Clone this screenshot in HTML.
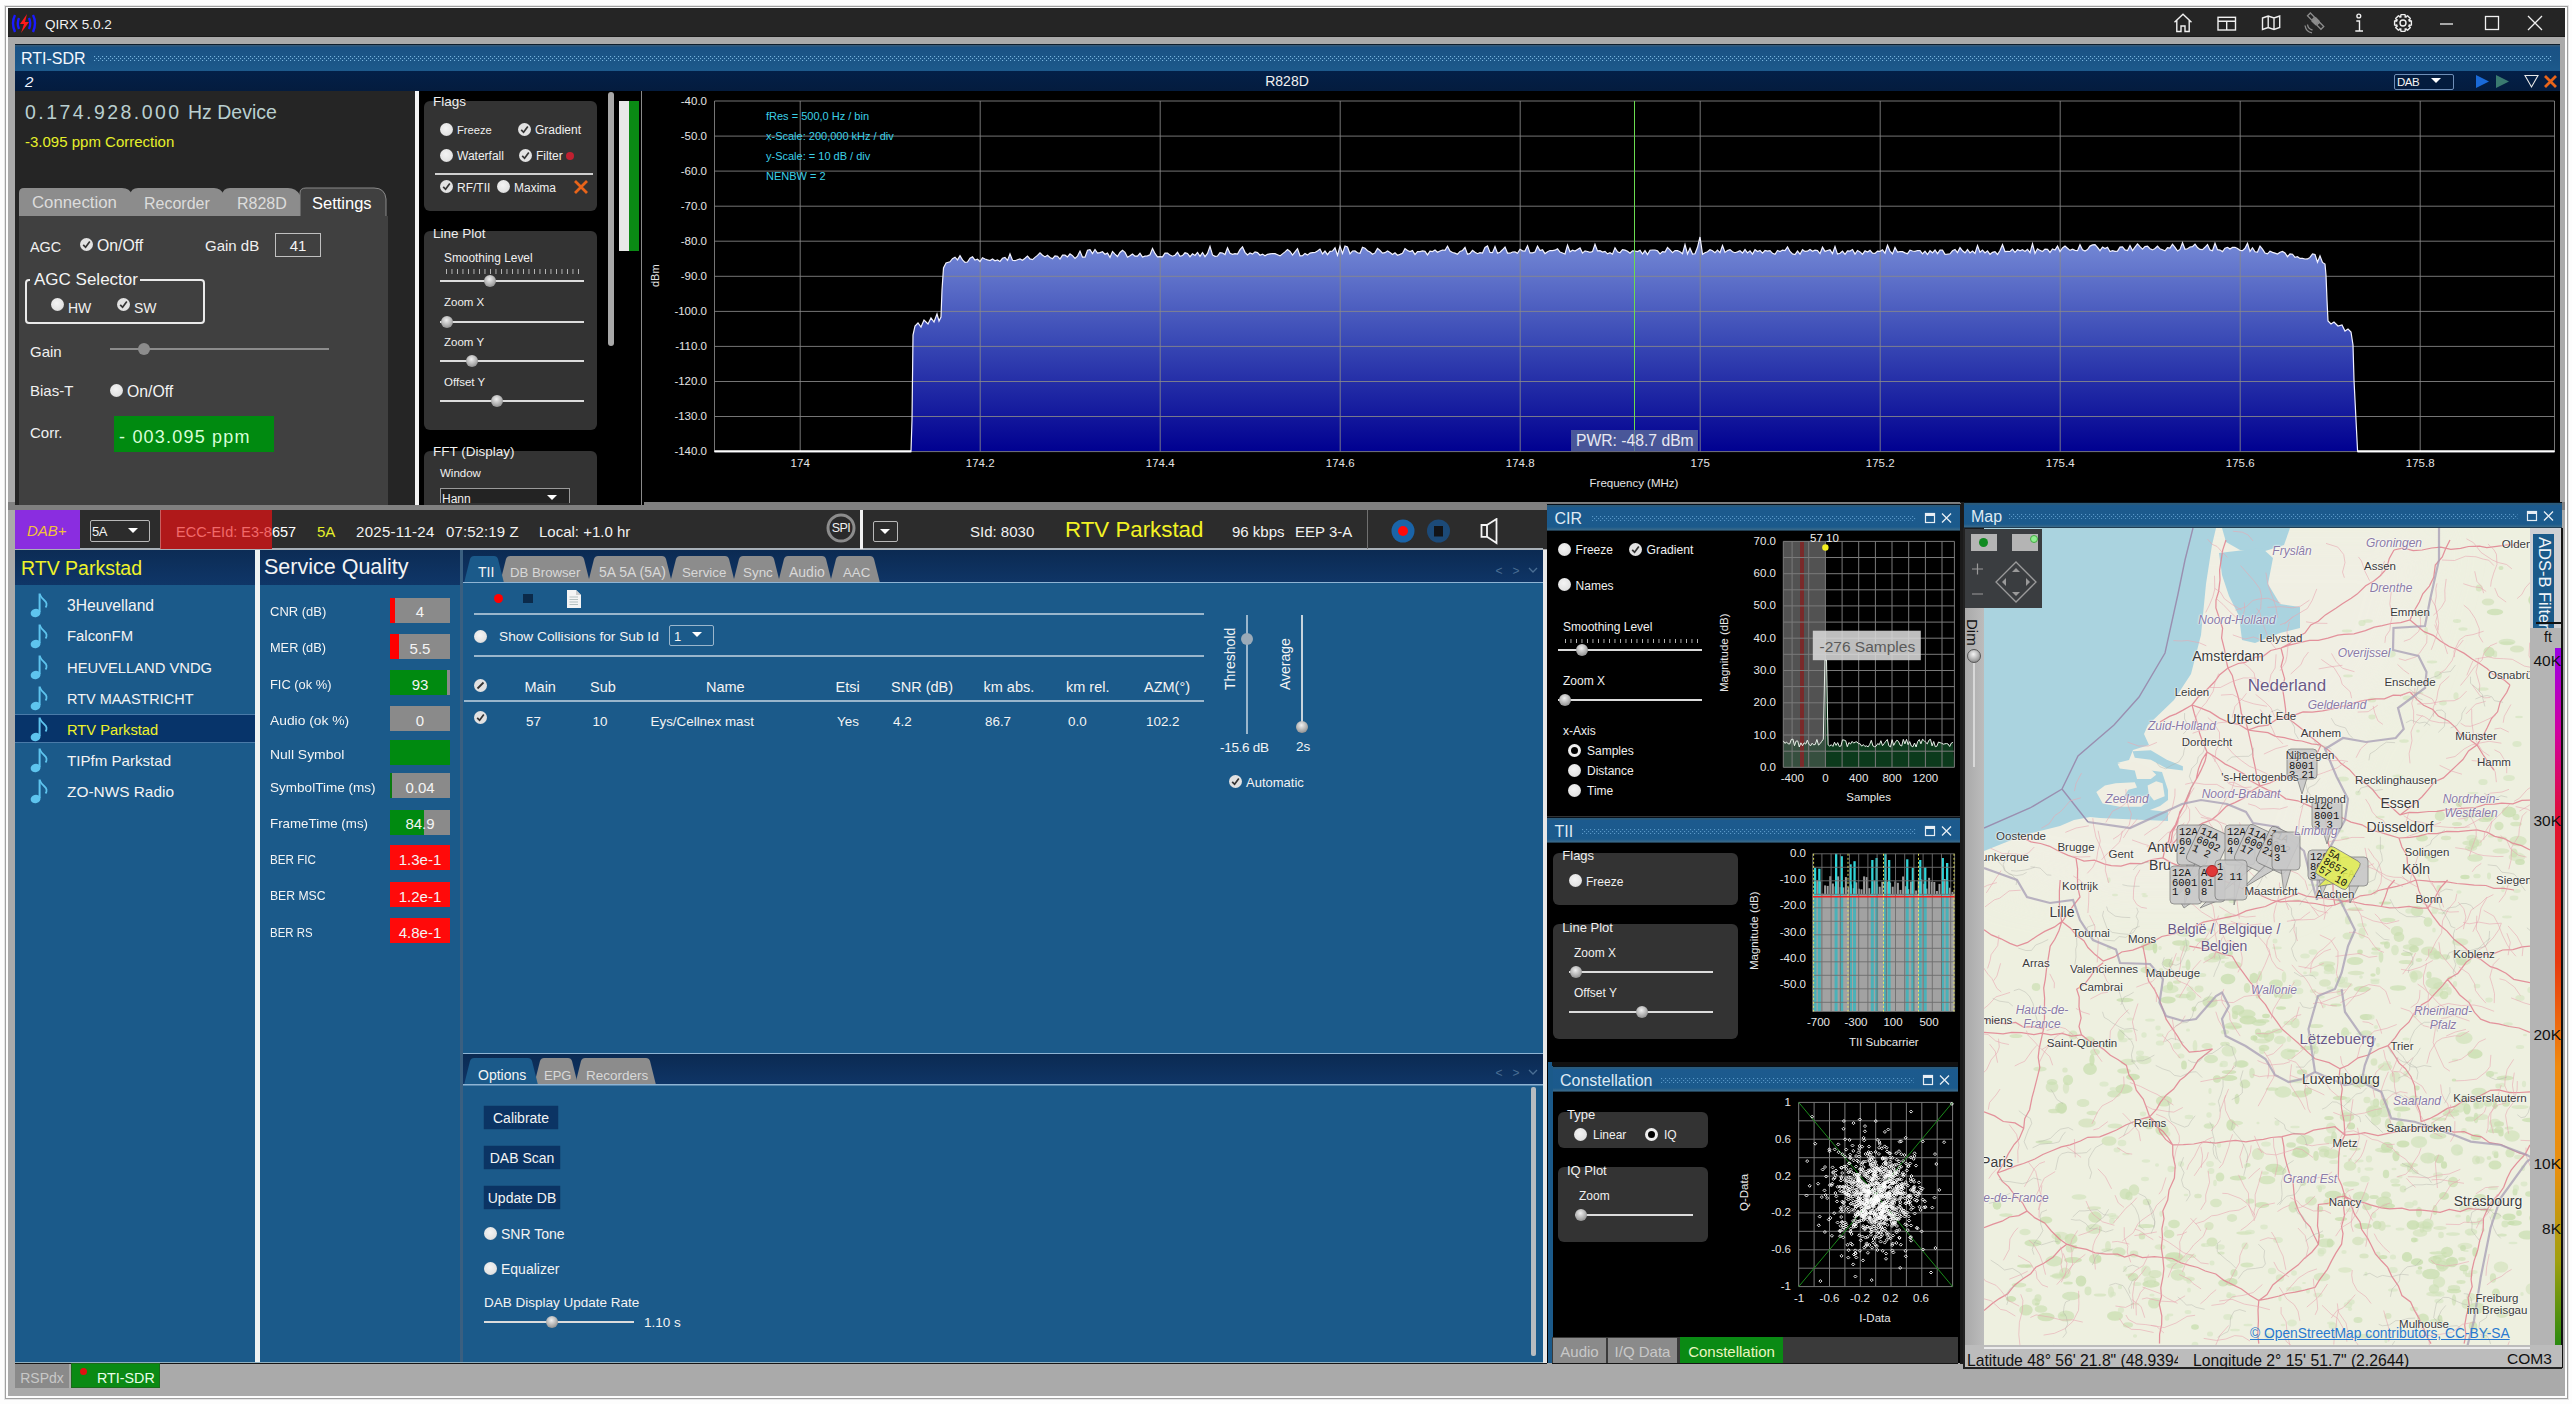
<!DOCTYPE html>
<html><head><meta charset="utf-8">
<style>
*{margin:0;padding:0;box-sizing:border-box}
html,body{width:2572px;height:1404px;overflow:hidden;background:#fdfdfd;font-family:"Liberation Sans",sans-serif;color:#fff}
.a{position:absolute}
.t{position:absolute;white-space:nowrap;line-height:1}
</style></head><body>
<div class="a" style="left:4px;top:5px;width:2565px;height:1395px;background:#e6e6e6;"></div>
<div class="a" style="left:5px;top:6px;width:2563px;height:1393px;background:#a0a0a0;"></div>
<div class="a" style="left:6px;top:7px;width:2561px;height:1391px;background:#fdfdfd;"></div>
<div class="a" style="left:8px;top:8px;width:2557px;height:1388px;background:#aaaaaa;"></div>
<div class="a" style="left:8px;top:8px;width:2557px;height:29px;background:#252525;"></div>
<div class="a" style="left:8px;top:36px;width:2557px;height:1px;background:#1a1a1a;"></div>
<svg class="a" style="left:10px;top:13px" width="28" height="21" viewBox="0 0 28 21">
<path d="M5 2 Q1 10 5 19" stroke="#1a1aff" stroke-width="2.4" fill="none"/>
<path d="M9 5 Q6.5 10.5 9 16" stroke="#1a1aff" stroke-width="2.4" fill="none"/>
<path d="M23 2 Q27 10 23 19" stroke="#1a1aff" stroke-width="2.4" fill="none"/>
<path d="M19 5 Q21.5 10.5 19 16" stroke="#1a1aff" stroke-width="2.4" fill="none"/>
<path d="M17 1 L10 11 L14 11 L11 20 L19 9 L15 9 Z" fill="#ff1a1a"/></svg>
<div class="t" style="left:45px;top:17.6px;font-size:13.5px;color:#f2f2f2;">QIRX 5.0.2</div>
<svg class="a" style="left:2170px;top:10px" width="380" height="26" viewBox="0 0 380 26">
<path d="M4.5 12.3 L13 4.2 L21.5 12.3 M6.8 10.2 V21.5 H11 V16 H15 V21.5 H19.2 V10.2" stroke="#f0f0f0" stroke-width="1.4" fill="none"/>
<rect x="48" y="7.3" width="17.5" height="12.7" stroke="#f0f0f0" stroke-width="1.4" fill="none"/><path d="M48 11.2 H65.5 M56.7 11.2 V20" stroke="#f0f0f0" stroke-width="1.4" fill="none"/>
<path d="M92.5 8 L98.2 6 L104 8 L109.7 6 V17.5 L104 19.5 L98.2 17.5 L92.5 19.5 Z M98.2 6 V17.5 M104 8 V19.5" stroke="#f0f0f0" stroke-width="1.4" fill="none"/>
<g stroke="#8c8c8c" stroke-width="1.3" fill="none"><g transform="rotate(-45 146 11.5)"><rect x="143.5" y="8.5" width="5" height="5" fill="#8c8c8c"/><rect x="144" y="1.5" width="4" height="6"/><rect x="144" y="14.5" width="4" height="6"/></g><path d="M137.5 14.5 Q138 19 142.5 20 M135 15.5 Q136 22 142 22.8"/></g>
<circle cx="188.8" cy="6" r="1.9" stroke="#f0f0f0" stroke-width="1.4" fill="none"/><path d="M186.3 11 H189.5 V20.8 M185.3 21 H193" stroke="#f0f0f0" stroke-width="1.4" fill="none"/>
<path d="M241.39 11.12 L241.39 14.88 L239.03 15.69 L239.16 15.36 L240.26 17.61 L237.61 20.26 L235.36 19.16 L235.69 19.03 L234.88 21.39 L231.12 21.39 L230.31 19.03 L230.64 19.16 L228.39 20.26 L225.74 17.61 L226.84 15.36 L226.97 15.69 L224.61 14.88 L224.61 11.12 L226.97 10.31 L226.84 10.64 L225.74 8.39 L228.39 5.74 L230.64 6.84 L230.31 6.97 L231.12 4.61 L234.88 4.61 L235.69 6.97 L235.36 6.84 L237.61 5.74 L240.26 8.39 L239.16 10.64 L239.03 10.31 Z" stroke="#f0f0f0" stroke-width="1.4" fill="none"/><circle cx="233" cy="13" r="3" stroke="#f0f0f0" stroke-width="1.4" fill="none"/>
<path d="M270 14 H283" stroke="#f0f0f0" stroke-width="1.3"/>
<rect x="315.5" y="6.5" width="13" height="13" stroke="#f0f0f0" stroke-width="1.3" fill="none"/>
<path d="M358 6 L372 20 M372 6 L358 20" stroke="#f0f0f0" stroke-width="1.3"/>
</svg>
<div class="a" style="left:15px;top:44px;width:2545px;height:27px;background:linear-gradient(#0f1e2c 0px,#0f1e2c 1px,#335a7a 1px,#335a7a 2px,#1a5285 3px,#1b5587 60%,#1d5a8c);"></div>
<div class="t" style="left:21px;top:50.5px;font-size:16px;color:#f4f8ff;">RTI-SDR</div>
<svg class="a" style="left:94px;top:56.0px" width="2458" height="5"><defs><pattern id="dp11" width="4" height="4" patternUnits="userSpaceOnUse"><rect x="0" y="0" width="1.1" height="1.1" fill="#78b4de"/><rect x="2" y="2" width="1.1" height="1.1" fill="#78b4de"/></pattern></defs><rect width="2458" height="5" fill="url(#dp11)"/></svg>
<div class="a" style="left:15px;top:71px;width:2545px;height:20px;background:linear-gradient(#032048,#041c3e);"></div>
<div class="t" style="left:25px;top:74.3px;font-size:15px;color:#f0f4ff;font-style:italic">2</div>
<div class="t" style="left:787px;width:1000px;text-align:center;top:74.1px;font-size:14px;color:#f0f0f0;">R828D</div>
<div class="a" style="left:2394px;top:74px;width:60px;height:16px;border:1px solid #6f8fb8;border-radius:2px;background:#041c3e"></div>
<div class="t" style="left:2397px;top:77.3px;font-size:11.5px;color:#f4f4f4;letter-spacing:-0.5px">DAB</div>
<svg class="a" style="left:2430px;top:77px" width="12" height="8"><path d="M1 1 H11 L6 6 Z" fill="#fff"/></svg>
<svg class="a" style="left:2470px;top:72px" width="92" height="19" viewBox="0 0 92 19">
<path d="M6 3 L19 9.5 L6 16 Z" fill="#1a6ad8"/><path d="M26 3 L39 9.5 L26 16 Z" fill="#3a7a70"/>
<path d="M55 3.5 H68 L61.5 15 Z" stroke="#e8e8e8" stroke-width="1.1" fill="none"/>
<path d="M75 4 L86 15 M86 4 L75 15" stroke="#e8641a" stroke-width="2.8"/></svg>
<div class="a" style="left:8px;top:502px;width:2557px;height:8px;background:#808080;"></div>
<div class="a" style="left:15px;top:91px;width:400px;height:414px;background:#252525;"></div>
<div class="a" style="left:415px;top:91px;width:4px;height:414px;background:#f4f4f4;"></div>
<div class="t" style="left:25px;top:102.5px;font-size:19.5px;color:#b9cfd0;letter-spacing:2.45px">0.174.928.000</div>
<div class="t" style="left:188px;top:102.5px;font-size:19.5px;color:#b9cfd0;">Hz Device</div>
<div class="t" style="left:25px;top:134.3px;font-size:15px;color:#e6f02a;">-3.095 ppm Correction</div>
<svg class="a" style="left:18px;top:187px" width="372" height="30" viewBox="0 0 372 30">
<path d="M1 30 V6 Q1 1 6 1 H104 Q112 1 114 8 V30 Z" fill="#8c8c8c"/>
<path d="M112 30 V8 Q113 1 120 1 H196 Q203 1 206 8 V30 Z" fill="#8c8c8c"/>
<path d="M204 30 V8 Q205 1 212 1 H270 Q278 1 282 8 V30 Z" fill="#8c8c8c"/>
<path d="M282 30 V6 Q282 1 288 1 H356 Q367 1 368 12 V30 Z" fill="#404040" stroke="#8a8a8a" stroke-width="1"/>
</svg>
<div class="t" style="left:32px;top:194.8px;font-size:16.8px;color:#dcdcdc;">Connection</div>
<div class="t" style="left:144px;top:195.5px;font-size:16px;color:#dcdcdc;">Recorder</div>
<div class="t" style="left:237px;top:195.5px;font-size:16px;color:#dcdcdc;">R828D</div>
<div class="t" style="left:312px;top:195.0px;font-size:16.5px;color:#ffffff;">Settings</div>
<div class="a" style="left:19px;top:216px;width:369px;height:289px;background:#404040;"></div>
<div class="t" style="left:30px;top:239.8px;font-size:14.4px;color:#f0f0f0;">AGC</div>
<svg class="a" style="left:80.0px;top:238.0px" width="13.0" height="13.0" viewBox="0 0 13 13"><circle cx="6.5" cy="6.5" r="6.5" fill="#e2e2e2"/><path d="M3.2 6.8 L5.6 9.3 L9.8 3.6" stroke="#333" stroke-width="1.7" fill="none"/></svg>
<div class="t" style="left:97px;top:237.6px;font-size:15.8px;color:#f4f4f4;">On/Off</div>
<div class="t" style="left:205px;top:238.3px;font-size:15px;color:#f0f0f0;">Gain dB</div>
<div class="a" style="left:275px;top:233px;width:46px;height:24px;border:1px solid #c0c0c0"></div>
<div class="t" style="left:-202px;width:1000px;text-align:center;top:238.3px;font-size:15px;color:#f4f4f4;">41</div>
<div class="a" style="left:25px;top:279px;width:180px;height:45px;border:2px solid #eaeaea;border-radius:4px"></div>
<div class="a" style="left:30px;top:272px;width:110px;height:12px;background:#404040;"></div>
<div class="t" style="left:34px;top:270.6px;font-size:17px;color:#f4f4f4;">AGC Selector</div>
<div class="a" style="left:50.5px;top:298.0px;width:13.0px;height:13.0px;border-radius:50%;background:radial-gradient(circle at 45% 40%,#f4f4f4,#e4e4e4 60%,#bbb)"></div>
<div class="t" style="left:68px;top:301.1px;font-size:14px;color:#f0f0f0;">HW</div>
<svg class="a" style="left:117.0px;top:298.0px" width="13.0" height="13.0" viewBox="0 0 13 13"><circle cx="6.5" cy="6.5" r="6.5" fill="#e2e2e2"/><path d="M3.2 6.8 L5.6 9.3 L9.8 3.6" stroke="#333" stroke-width="1.7" fill="none"/></svg>
<div class="t" style="left:134px;top:301.1px;font-size:14px;color:#f0f0f0;">SW</div>
<div class="t" style="left:30px;top:344.3px;font-size:15px;color:#f0f0f0;">Gain</div>
<div class="a" style="left:110px;top:348px;width:219px;height:2px;background:#8c8c8c;"></div>
<div class="a" style="left:138px;top:343px;width:12px;height:12px;border-radius:50%;background:#8c8c8c"></div>
<div class="t" style="left:30px;top:383.3px;font-size:15px;color:#f0f0f0;">Bias-T</div>
<div class="a" style="left:110.0px;top:383.5px;width:13.0px;height:13.0px;border-radius:50%;background:radial-gradient(circle at 45% 40%,#f4f4f4,#e4e4e4 60%,#bbb)"></div>
<div class="t" style="left:127px;top:383.6px;font-size:15.8px;color:#f4f4f4;">On/Off</div>
<div class="t" style="left:30px;top:425.3px;font-size:15px;color:#f0f0f0;">Corr.</div>
<div class="a" style="left:114px;top:416px;width:160px;height:36px;background:#008a10;"></div>
<div class="t" style="left:119px;top:427.8px;font-size:18px;color:#d8ffd8;letter-spacing:1.2px">- 003.095 ppm</div>
<div class="a" style="left:419px;top:91px;width:225px;height:414px;background:#000;"></div>
<div class="a" style="left:424px;top:101px;width:173px;height:110px;background:#333;border-radius:6px"></div>
<div class="t" style="left:433px;top:94.6px;font-size:13.5px;color:#f0f0f0;">Flags</div>
<div class="a" style="left:440.0px;top:122.5px;width:13.0px;height:13.0px;border-radius:50%;background:radial-gradient(circle at 45% 40%,#f4f4f4,#e4e4e4 60%,#bbb)"></div>
<div class="t" style="left:457px;top:124.5px;font-size:11.2px;color:#f0f0f0;">Freeze</div>
<svg class="a" style="left:517.5px;top:122.5px" width="13.0" height="13.0" viewBox="0 0 13 13"><circle cx="6.5" cy="6.5" r="6.5" fill="#e2e2e2"/><path d="M3.2 6.8 L5.6 9.3 L9.8 3.6" stroke="#333" stroke-width="1.7" fill="none"/></svg>
<div class="t" style="left:535px;top:123.8px;font-size:12px;color:#f0f0f0;">Gradient</div>
<div class="a" style="left:440.0px;top:148.5px;width:13.0px;height:13.0px;border-radius:50%;background:radial-gradient(circle at 45% 40%,#f4f4f4,#e4e4e4 60%,#bbb)"></div>
<div class="t" style="left:457px;top:149.8px;font-size:12px;color:#f0f0f0;">Waterfall</div>
<svg class="a" style="left:518.5px;top:148.5px" width="13.0" height="13.0" viewBox="0 0 13 13"><circle cx="6.5" cy="6.5" r="6.5" fill="#e2e2e2"/><path d="M3.2 6.8 L5.6 9.3 L9.8 3.6" stroke="#333" stroke-width="1.7" fill="none"/></svg>
<div class="t" style="left:536px;top:149.8px;font-size:12px;color:#f0f0f0;">Filter</div>
<div class="a" style="left:566px;top:152px;width:8px;height:8px;border-radius:50%;background:#c02030"></div>
<div class="a" style="left:435px;top:173px;width:158px;height:1.5px;background:#cfcfcf;"></div>
<svg class="a" style="left:440.0px;top:180.0px" width="13.0" height="13.0" viewBox="0 0 13 13"><circle cx="6.5" cy="6.5" r="6.5" fill="#e2e2e2"/><path d="M3.2 6.8 L5.6 9.3 L9.8 3.6" stroke="#333" stroke-width="1.7" fill="none"/></svg>
<div class="t" style="left:457px;top:181.8px;font-size:12px;color:#f0f0f0;">RF/TII</div>
<div class="a" style="left:497.0px;top:180.0px;width:13.0px;height:13.0px;border-radius:50%;background:radial-gradient(circle at 45% 40%,#f4f4f4,#e4e4e4 60%,#bbb)"></div>
<div class="t" style="left:514px;top:181.8px;font-size:12px;color:#f0f0f0;">Maxima</div>
<svg class="a" style="left:573px;top:179px" width="16" height="16"><path d="M2 2 L14 14 M14 2 L2 14" stroke="#e8641a" stroke-width="2.8"/></svg>
<div class="a" style="left:424px;top:231px;width:173px;height:199px;background:#333;border-radius:6px"></div>
<div class="t" style="left:433px;top:226.6px;font-size:13.5px;color:#f0f0f0;">Line Plot</div>
<div class="t" style="left:444px;top:252.9px;font-size:11.9px;color:#f0f0f0;">Smoothing Level</div>
<div class="a" style="left:446px;top:269px;width:133px;height:5px;background-image:linear-gradient(90deg,#bbb 1px,transparent 1px);background-size:5.5px 5px"></div>
<div class="a" style="left:440px;top:280px;width:144px;height:2px;background:#dcdcdc;"></div>
<div class="a" style="left:484px;top:275px;width:12px;height:12px;border-radius:50%;background:radial-gradient(circle at 45% 35%,#f0f0f0,#9a9a9a 70%,#666)"></div>
<div class="t" style="left:444px;top:297.3px;font-size:11.5px;color:#f0f0f0;">Zoom X</div>
<div class="a" style="left:440px;top:321px;width:144px;height:2px;background:#dcdcdc;"></div>
<div class="a" style="left:441px;top:316px;width:12px;height:12px;border-radius:50%;background:radial-gradient(circle at 45% 35%,#f0f0f0,#9a9a9a 70%,#666)"></div>
<div class="t" style="left:444px;top:337.3px;font-size:11.5px;color:#f0f0f0;">Zoom Y</div>
<div class="a" style="left:440px;top:360px;width:144px;height:2px;background:#dcdcdc;"></div>
<div class="a" style="left:466px;top:355px;width:12px;height:12px;border-radius:50%;background:radial-gradient(circle at 45% 35%,#f0f0f0,#9a9a9a 70%,#666)"></div>
<div class="t" style="left:444px;top:377.3px;font-size:11.5px;color:#f0f0f0;">Offset Y</div>
<div class="a" style="left:440px;top:400px;width:144px;height:2px;background:#dcdcdc;"></div>
<div class="a" style="left:491px;top:395px;width:12px;height:12px;border-radius:50%;background:radial-gradient(circle at 45% 35%,#f0f0f0,#9a9a9a 70%,#666)"></div>
<div class="a" style="left:424px;top:451px;width:173px;height:54px;background:#333;border-radius:6px 6px 0 0"></div>
<div class="t" style="left:433px;top:444.6px;font-size:13.5px;color:#f0f0f0;">FFT (Display)</div>
<div class="t" style="left:440px;top:468.3px;font-size:11.5px;color:#f0f0f0;">Window</div>
<div class="a" style="left:440px;top:488px;width:130px;height:15px;border:1px solid #9a9a9a;border-bottom:none;background:#232323"></div>
<div class="t" style="left:442px;top:492.8px;font-size:12px;color:#f0f0f0;">Hann</div>
<svg class="a" style="left:546px;top:494px" width="12" height="8"><path d="M1 1 H11 L6 6 Z" fill="#fff"/></svg>
<div class="a" style="left:608px;top:92px;width:6px;height:254px;background:#a8a8a8;border-radius:3px"></div>
<div class="a" style="left:619px;top:101px;width:10px;height:150px;background:#e8e8e8;"></div>
<div class="a" style="left:629px;top:101px;width:10px;height:150px;background:#0a8a14;"></div>
<div class="a" style="left:641px;top:91px;width:1px;height:414px;background:#8a8a8a;"></div>
<svg class="a" style="left:0;top:0" width="2572" height="510" viewBox="0 0 2572 510"><defs><linearGradient id="sg" x1="0" y1="245" x2="0" y2="452" gradientUnits="userSpaceOnUse"><stop offset="0" stop-color="#7286d4"/><stop offset="0.45" stop-color="#3b4bb6"/><stop offset="1" stop-color="#000090"/></linearGradient></defs><rect x="644" y="91" width="1916" height="411" fill="#000"/><path d="M714.5 451.6 L911.0 451.6 L912.0 420.0 L913.0 335.0 L915.0 326.0 L918.0 323.0 L921.0 327.0 L924.0 320.0 L928.0 324.0 L931.0 318.0 L934.0 322.0 L937.0 314.0 L939.0 321.0 L941.0 317.0 L942.0 290.0 L943.5 268.0 L946.0 263.0 L950.0 261.8 L952.5 258.7 L955.0 257.2 L957.5 259.9 L960.0 255.6 L962.5 259.9 L965.0 262.4 L967.5 262.0 L970.0 258.2 L972.5 256.8 L975.0 260.1 L977.5 259.3 L980.0 261.5 L982.5 257.7 L985.0 259.0 L987.5 259.9 L990.0 260.6 L992.5 259.0 L995.0 260.8 L997.5 260.0 L1000.0 261.4 L1002.5 258.3 L1005.0 257.4 L1007.5 260.4 L1010.0 254.0 L1012.5 260.3 L1015.0 260.7 L1017.5 259.7 L1020.0 259.0 L1022.5 260.2 L1025.0 258.2 L1027.5 256.1 L1030.0 258.9 L1032.5 259.6 L1035.0 257.4 L1037.5 255.4 L1040.0 252.9 L1042.5 255.2 L1045.0 256.9 L1047.5 255.3 L1050.0 257.5 L1052.5 258.7 L1055.0 255.9 L1057.5 256.2 L1060.0 259.1 L1062.5 255.1 L1065.0 255.2 L1067.5 256.9 L1070.0 253.9 L1072.5 255.6 L1075.0 258.4 L1077.5 256.1 L1080.0 251.1 L1082.5 257.2 L1085.0 257.2 L1087.5 250.2 L1090.0 249.6 L1092.5 253.6 L1095.0 249.5 L1097.5 253.1 L1100.0 252.6 L1102.5 251.8 L1105.0 254.2 L1107.5 253.1 L1110.0 257.4 L1112.5 251.5 L1115.0 254.1 L1117.5 256.5 L1120.0 252.5 L1122.5 250.3 L1125.0 252.4 L1127.5 257.2 L1130.0 255.8 L1132.5 254.1 L1135.0 256.1 L1137.5 256.1 L1140.0 253.3 L1142.5 257.1 L1145.0 256.2 L1147.5 255.8 L1150.0 254.7 L1152.5 248.4 L1155.0 253.4 L1157.5 256.9 L1160.0 256.7 L1162.5 256.8 L1165.0 253.1 L1167.5 253.0 L1170.0 255.1 L1172.5 256.2 L1175.0 255.2 L1177.5 252.3 L1180.0 256.4 L1182.5 255.6 L1185.0 252.8 L1187.5 253.5 L1190.0 256.7 L1192.5 253.8 L1195.0 255.4 L1197.5 252.4 L1200.0 256.3 L1202.5 252.5 L1205.0 256.6 L1207.5 253.4 L1210.0 246.4 L1212.5 254.9 L1215.0 256.3 L1217.5 256.0 L1220.0 252.7 L1222.5 253.0 L1225.0 254.5 L1227.5 247.9 L1230.0 253.3 L1232.5 254.4 L1235.0 253.6 L1237.5 254.0 L1240.0 249.7 L1242.5 246.9 L1245.0 252.3 L1247.5 255.0 L1250.0 253.0 L1252.5 254.1 L1255.0 251.9 L1257.5 252.6 L1260.0 255.2 L1262.5 254.1 L1265.0 255.8 L1267.5 254.3 L1270.0 253.8 L1272.5 253.5 L1275.0 253.6 L1277.5 254.7 L1280.0 255.9 L1282.5 253.9 L1285.0 251.9 L1287.5 249.6 L1290.0 251.4 L1292.5 255.0 L1295.0 251.8 L1297.5 248.7 L1300.0 255.8 L1302.5 255.7 L1305.0 253.4 L1307.5 255.1 L1310.0 253.1 L1312.5 252.6 L1315.0 252.5 L1317.5 251.0 L1320.0 249.1 L1322.5 254.0 L1325.0 251.1 L1327.5 254.7 L1330.0 251.3 L1332.5 251.0 L1335.0 247.8 L1337.5 255.3 L1340.0 246.2 L1342.5 253.5 L1345.0 246.0 L1347.5 247.0 L1350.0 253.8 L1352.5 251.0 L1355.0 250.9 L1357.5 252.8 L1360.0 253.3 L1362.5 247.3 L1365.0 248.2 L1367.5 250.7 L1370.0 252.0 L1372.5 254.3 L1375.0 252.9 L1377.5 248.4 L1380.0 250.5 L1382.5 253.1 L1385.0 252.7 L1387.5 250.9 L1390.0 252.5 L1392.5 254.5 L1395.0 252.8 L1397.5 255.2 L1400.0 254.4 L1402.5 253.4 L1405.0 248.6 L1407.5 250.5 L1410.0 251.5 L1412.5 250.6 L1415.0 254.5 L1417.5 251.5 L1420.0 251.6 L1422.5 250.9 L1425.0 251.4 L1427.5 254.9 L1430.0 251.2 L1432.5 251.6 L1435.0 250.0 L1437.5 252.3 L1440.0 251.0 L1442.5 250.0 L1445.0 250.4 L1447.5 246.2 L1450.0 251.0 L1452.5 252.5 L1455.0 253.1 L1457.5 254.2 L1460.0 251.4 L1462.5 250.5 L1465.0 247.5 L1467.5 254.2 L1470.0 253.4 L1472.5 250.4 L1475.0 252.2 L1477.5 253.7 L1480.0 252.6 L1482.5 253.0 L1485.0 247.4 L1487.5 245.9 L1490.0 252.4 L1492.5 252.7 L1495.0 246.6 L1497.5 253.3 L1500.0 252.2 L1502.5 249.8 L1505.0 247.0 L1507.5 253.1 L1510.0 253.2 L1512.5 252.0 L1515.0 251.9 L1517.5 253.3 L1520.0 249.3 L1522.5 250.8 L1525.0 251.0 L1527.5 245.8 L1530.0 252.9 L1532.5 252.9 L1535.0 252.1 L1537.5 246.2 L1540.0 250.5 L1542.5 249.8 L1545.0 253.6 L1547.5 251.7 L1550.0 250.5 L1552.5 250.6 L1555.0 250.2 L1557.5 248.8 L1560.0 252.0 L1562.5 253.0 L1565.0 254.0 L1567.5 245.1 L1570.0 251.8 L1572.5 250.2 L1575.0 251.1 L1577.5 249.5 L1580.0 247.9 L1582.5 253.1 L1585.0 250.9 L1587.5 251.5 L1590.0 252.4 L1592.5 251.6 L1595.0 244.2 L1597.5 250.9 L1600.0 250.7 L1602.5 252.1 L1605.0 251.4 L1607.5 253.9 L1610.0 252.7 L1612.5 254.2 L1615.0 247.9 L1617.5 251.8 L1620.0 252.7 L1622.5 249.7 L1625.0 250.1 L1627.5 251.2 L1630.0 253.2 L1632.5 250.8 L1635.0 251.0 L1637.5 251.5 L1640.0 250.3 L1642.5 254.0 L1645.0 250.6 L1647.5 254.5 L1650.0 250.2 L1652.5 250.0 L1655.0 250.0 L1657.5 250.8 L1660.0 253.9 L1662.5 251.6 L1665.0 252.1 L1667.5 247.4 L1670.0 249.8 L1672.5 252.6 L1675.0 250.6 L1677.5 250.7 L1680.0 251.7 L1682.5 253.7 L1685.0 244.5 L1687.5 254.0 L1690.0 248.3 L1692.5 254.1 L1695.0 253.8 L1697.5 247.3 L1700.0 237.0 L1702.5 254.2 L1705.0 252.7 L1707.5 251.8 L1710.0 249.7 L1712.5 250.7 L1715.0 252.7 L1717.5 250.1 L1720.0 252.7 L1722.5 245.5 L1725.0 252.4 L1727.5 250.6 L1730.0 249.6 L1732.5 251.8 L1735.0 252.7 L1737.5 251.9 L1740.0 250.7 L1742.5 253.0 L1745.0 249.6 L1747.5 252.9 L1750.0 250.8 L1752.5 254.1 L1755.0 249.7 L1757.5 251.6 L1760.0 250.5 L1762.5 253.2 L1765.0 250.5 L1767.5 251.1 L1770.0 250.7 L1772.5 253.3 L1775.0 254.3 L1777.5 250.4 L1780.0 251.6 L1782.5 250.1 L1785.0 250.6 L1787.5 247.0 L1790.0 251.5 L1792.5 253.9 L1795.0 254.5 L1797.5 251.1 L1800.0 254.2 L1802.5 249.7 L1805.0 251.4 L1807.5 251.2 L1810.0 249.5 L1812.5 251.3 L1815.0 250.1 L1817.5 250.5 L1820.0 253.6 L1822.5 247.2 L1825.0 251.4 L1827.5 250.5 L1830.0 249.8 L1832.5 253.6 L1835.0 246.5 L1837.5 254.1 L1840.0 253.2 L1842.5 251.2 L1845.0 254.3 L1847.5 250.8 L1850.0 251.1 L1852.5 249.5 L1855.0 254.1 L1857.5 250.5 L1860.0 251.9 L1862.5 254.3 L1865.0 250.8 L1867.5 252.0 L1870.0 250.4 L1872.5 253.2 L1875.0 253.4 L1877.5 251.1 L1880.0 251.3 L1882.5 249.9 L1885.0 253.3 L1887.5 245.2 L1890.0 251.1 L1892.5 253.9 L1895.0 247.5 L1897.5 252.0 L1900.0 251.7 L1902.5 251.6 L1905.0 252.9 L1907.5 253.7 L1910.0 250.1 L1912.5 251.0 L1915.0 251.4 L1917.5 250.5 L1920.0 250.7 L1922.5 253.9 L1925.0 251.1 L1927.5 254.5 L1930.0 250.7 L1932.5 252.8 L1935.0 250.0 L1937.5 253.6 L1940.0 250.2 L1942.5 250.1 L1945.0 254.4 L1947.5 254.2 L1950.0 253.8 L1952.5 250.8 L1955.0 249.4 L1957.5 252.6 L1960.0 247.7 L1962.5 250.8 L1965.0 252.8 L1967.5 249.6 L1970.0 252.9 L1972.5 251.1 L1975.0 253.5 L1977.5 245.6 L1980.0 252.3 L1982.5 250.0 L1985.0 253.0 L1987.5 250.9 L1990.0 254.3 L1992.5 252.3 L1995.0 251.6 L1997.5 254.5 L2000.0 250.5 L2002.5 244.7 L2005.0 251.5 L2007.5 251.3 L2010.0 251.5 L2012.5 249.2 L2015.0 252.3 L2017.5 249.5 L2020.0 250.8 L2022.5 249.6 L2025.0 251.4 L2027.5 249.3 L2030.0 252.7 L2032.5 243.8 L2035.0 253.4 L2037.5 248.8 L2040.0 250.4 L2042.5 251.5 L2045.0 249.1 L2047.5 249.3 L2050.0 252.4 L2052.5 249.0 L2055.0 250.0 L2057.5 246.1 L2060.0 251.5 L2062.5 248.0 L2065.0 246.0 L2067.5 248.3 L2070.0 250.4 L2072.5 249.1 L2075.0 250.4 L2077.5 250.7 L2080.0 244.7 L2082.5 249.7 L2085.0 251.1 L2087.5 249.5 L2090.0 246.1 L2092.5 244.9 L2095.0 244.6 L2097.5 247.3 L2100.0 250.7 L2102.5 247.0 L2105.0 248.6 L2107.5 247.3 L2110.0 251.5 L2112.5 250.6 L2115.0 251.3 L2117.5 251.1 L2120.0 247.1 L2122.5 246.8 L2125.0 249.9 L2127.5 250.6 L2130.0 245.6 L2132.5 250.6 L2135.0 247.2 L2137.5 243.9 L2140.0 246.6 L2142.5 249.1 L2145.0 246.5 L2147.5 246.1 L2150.0 248.7 L2152.5 249.9 L2155.0 248.5 L2157.5 246.2 L2160.0 248.8 L2162.5 249.7 L2165.0 250.8 L2167.5 247.7 L2170.0 248.1 L2172.5 244.2 L2175.0 247.3 L2177.5 251.0 L2180.0 249.4 L2182.5 242.7 L2185.0 249.3 L2187.5 248.8 L2190.0 247.0 L2192.5 246.6 L2195.0 244.1 L2197.5 247.6 L2200.0 249.4 L2202.5 249.7 L2205.0 247.3 L2207.5 244.6 L2210.0 249.9 L2212.5 250.7 L2215.0 243.2 L2217.5 249.7 L2220.0 250.1 L2222.5 251.6 L2225.0 248.2 L2227.5 247.3 L2230.0 249.1 L2232.5 247.4 L2235.0 247.3 L2237.5 248.4 L2240.0 250.3 L2242.5 250.6 L2245.0 248.3 L2247.5 243.3 L2250.0 251.4 L2252.5 247.8 L2255.0 251.8 L2257.5 252.1 L2260.0 246.1 L2262.5 249.2 L2265.0 253.0 L2267.5 253.8 L2270.0 251.2 L2272.5 252.4 L2275.0 253.1 L2277.5 254.0 L2280.0 252.2 L2282.5 251.5 L2285.0 252.9 L2287.5 256.7 L2290.0 253.9 L2292.5 254.2 L2295.0 257.4 L2297.5 256.7 L2300.0 258.4 L2302.5 258.3 L2305.0 259.0 L2307.5 258.9 L2310.0 257.4 L2312.5 253.9 L2315.0 254.5 L2317.5 262.3 L2320.0 255.9 L2322.5 262.4 L2325.0 264.0 L2326.0 275.0 L2327.0 300.0 L2328.0 321.0 L2331.0 324.0 L2334.0 322.0 L2338.0 326.0 L2342.0 325.0 L2345.0 331.0 L2348.0 329.0 L2351.0 332.0 L2353.0 345.0 L2354.0 380.0 L2356.0 420.0 L2357.6 451.6 L2554.5 451.6 Z" fill="url(#sg)"/><path d="M714.5 101.0 H2554.5 M714.5 136.1 H2554.5 M714.5 171.1 H2554.5 M714.5 206.2 H2554.5 M714.5 241.2 H2554.5 M714.5 276.3 H2554.5 M714.5 311.4 H2554.5 M714.5 346.4 H2554.5 M714.5 381.5 H2554.5 M714.5 416.5 H2554.5 M714.5 451.6 H2554.5 M800.2 101 V451.6 M980.2 101 V451.6 M1160.2 101 V451.6 M1340.2 101 V451.6 M1520.2 101 V451.6 M1700.2 101 V451.6 M1880.2 101 V451.6 M2060.2 101 V451.6 M2240.2 101 V451.6 M2420.2 101 V451.6 M714.5 101 V451.6 M2554.5 101 V451.6" stroke="#8a8a8a" stroke-width="1" fill="none" opacity="0.85"/><path d="M714.5 451.6 L911.0 451.6 L912.0 420.0 L913.0 335.0 L915.0 326.0 L918.0 323.0 L921.0 327.0 L924.0 320.0 L928.0 324.0 L931.0 318.0 L934.0 322.0 L937.0 314.0 L939.0 321.0 L941.0 317.0 L942.0 290.0 L943.5 268.0 L946.0 263.0 L950.0 261.8 L952.5 258.7 L955.0 257.2 L957.5 259.9 L960.0 255.6 L962.5 259.9 L965.0 262.4 L967.5 262.0 L970.0 258.2 L972.5 256.8 L975.0 260.1 L977.5 259.3 L980.0 261.5 L982.5 257.7 L985.0 259.0 L987.5 259.9 L990.0 260.6 L992.5 259.0 L995.0 260.8 L997.5 260.0 L1000.0 261.4 L1002.5 258.3 L1005.0 257.4 L1007.5 260.4 L1010.0 254.0 L1012.5 260.3 L1015.0 260.7 L1017.5 259.7 L1020.0 259.0 L1022.5 260.2 L1025.0 258.2 L1027.5 256.1 L1030.0 258.9 L1032.5 259.6 L1035.0 257.4 L1037.5 255.4 L1040.0 252.9 L1042.5 255.2 L1045.0 256.9 L1047.5 255.3 L1050.0 257.5 L1052.5 258.7 L1055.0 255.9 L1057.5 256.2 L1060.0 259.1 L1062.5 255.1 L1065.0 255.2 L1067.5 256.9 L1070.0 253.9 L1072.5 255.6 L1075.0 258.4 L1077.5 256.1 L1080.0 251.1 L1082.5 257.2 L1085.0 257.2 L1087.5 250.2 L1090.0 249.6 L1092.5 253.6 L1095.0 249.5 L1097.5 253.1 L1100.0 252.6 L1102.5 251.8 L1105.0 254.2 L1107.5 253.1 L1110.0 257.4 L1112.5 251.5 L1115.0 254.1 L1117.5 256.5 L1120.0 252.5 L1122.5 250.3 L1125.0 252.4 L1127.5 257.2 L1130.0 255.8 L1132.5 254.1 L1135.0 256.1 L1137.5 256.1 L1140.0 253.3 L1142.5 257.1 L1145.0 256.2 L1147.5 255.8 L1150.0 254.7 L1152.5 248.4 L1155.0 253.4 L1157.5 256.9 L1160.0 256.7 L1162.5 256.8 L1165.0 253.1 L1167.5 253.0 L1170.0 255.1 L1172.5 256.2 L1175.0 255.2 L1177.5 252.3 L1180.0 256.4 L1182.5 255.6 L1185.0 252.8 L1187.5 253.5 L1190.0 256.7 L1192.5 253.8 L1195.0 255.4 L1197.5 252.4 L1200.0 256.3 L1202.5 252.5 L1205.0 256.6 L1207.5 253.4 L1210.0 246.4 L1212.5 254.9 L1215.0 256.3 L1217.5 256.0 L1220.0 252.7 L1222.5 253.0 L1225.0 254.5 L1227.5 247.9 L1230.0 253.3 L1232.5 254.4 L1235.0 253.6 L1237.5 254.0 L1240.0 249.7 L1242.5 246.9 L1245.0 252.3 L1247.5 255.0 L1250.0 253.0 L1252.5 254.1 L1255.0 251.9 L1257.5 252.6 L1260.0 255.2 L1262.5 254.1 L1265.0 255.8 L1267.5 254.3 L1270.0 253.8 L1272.5 253.5 L1275.0 253.6 L1277.5 254.7 L1280.0 255.9 L1282.5 253.9 L1285.0 251.9 L1287.5 249.6 L1290.0 251.4 L1292.5 255.0 L1295.0 251.8 L1297.5 248.7 L1300.0 255.8 L1302.5 255.7 L1305.0 253.4 L1307.5 255.1 L1310.0 253.1 L1312.5 252.6 L1315.0 252.5 L1317.5 251.0 L1320.0 249.1 L1322.5 254.0 L1325.0 251.1 L1327.5 254.7 L1330.0 251.3 L1332.5 251.0 L1335.0 247.8 L1337.5 255.3 L1340.0 246.2 L1342.5 253.5 L1345.0 246.0 L1347.5 247.0 L1350.0 253.8 L1352.5 251.0 L1355.0 250.9 L1357.5 252.8 L1360.0 253.3 L1362.5 247.3 L1365.0 248.2 L1367.5 250.7 L1370.0 252.0 L1372.5 254.3 L1375.0 252.9 L1377.5 248.4 L1380.0 250.5 L1382.5 253.1 L1385.0 252.7 L1387.5 250.9 L1390.0 252.5 L1392.5 254.5 L1395.0 252.8 L1397.5 255.2 L1400.0 254.4 L1402.5 253.4 L1405.0 248.6 L1407.5 250.5 L1410.0 251.5 L1412.5 250.6 L1415.0 254.5 L1417.5 251.5 L1420.0 251.6 L1422.5 250.9 L1425.0 251.4 L1427.5 254.9 L1430.0 251.2 L1432.5 251.6 L1435.0 250.0 L1437.5 252.3 L1440.0 251.0 L1442.5 250.0 L1445.0 250.4 L1447.5 246.2 L1450.0 251.0 L1452.5 252.5 L1455.0 253.1 L1457.5 254.2 L1460.0 251.4 L1462.5 250.5 L1465.0 247.5 L1467.5 254.2 L1470.0 253.4 L1472.5 250.4 L1475.0 252.2 L1477.5 253.7 L1480.0 252.6 L1482.5 253.0 L1485.0 247.4 L1487.5 245.9 L1490.0 252.4 L1492.5 252.7 L1495.0 246.6 L1497.5 253.3 L1500.0 252.2 L1502.5 249.8 L1505.0 247.0 L1507.5 253.1 L1510.0 253.2 L1512.5 252.0 L1515.0 251.9 L1517.5 253.3 L1520.0 249.3 L1522.5 250.8 L1525.0 251.0 L1527.5 245.8 L1530.0 252.9 L1532.5 252.9 L1535.0 252.1 L1537.5 246.2 L1540.0 250.5 L1542.5 249.8 L1545.0 253.6 L1547.5 251.7 L1550.0 250.5 L1552.5 250.6 L1555.0 250.2 L1557.5 248.8 L1560.0 252.0 L1562.5 253.0 L1565.0 254.0 L1567.5 245.1 L1570.0 251.8 L1572.5 250.2 L1575.0 251.1 L1577.5 249.5 L1580.0 247.9 L1582.5 253.1 L1585.0 250.9 L1587.5 251.5 L1590.0 252.4 L1592.5 251.6 L1595.0 244.2 L1597.5 250.9 L1600.0 250.7 L1602.5 252.1 L1605.0 251.4 L1607.5 253.9 L1610.0 252.7 L1612.5 254.2 L1615.0 247.9 L1617.5 251.8 L1620.0 252.7 L1622.5 249.7 L1625.0 250.1 L1627.5 251.2 L1630.0 253.2 L1632.5 250.8 L1635.0 251.0 L1637.5 251.5 L1640.0 250.3 L1642.5 254.0 L1645.0 250.6 L1647.5 254.5 L1650.0 250.2 L1652.5 250.0 L1655.0 250.0 L1657.5 250.8 L1660.0 253.9 L1662.5 251.6 L1665.0 252.1 L1667.5 247.4 L1670.0 249.8 L1672.5 252.6 L1675.0 250.6 L1677.5 250.7 L1680.0 251.7 L1682.5 253.7 L1685.0 244.5 L1687.5 254.0 L1690.0 248.3 L1692.5 254.1 L1695.0 253.8 L1697.5 247.3 L1700.0 237.0 L1702.5 254.2 L1705.0 252.7 L1707.5 251.8 L1710.0 249.7 L1712.5 250.7 L1715.0 252.7 L1717.5 250.1 L1720.0 252.7 L1722.5 245.5 L1725.0 252.4 L1727.5 250.6 L1730.0 249.6 L1732.5 251.8 L1735.0 252.7 L1737.5 251.9 L1740.0 250.7 L1742.5 253.0 L1745.0 249.6 L1747.5 252.9 L1750.0 250.8 L1752.5 254.1 L1755.0 249.7 L1757.5 251.6 L1760.0 250.5 L1762.5 253.2 L1765.0 250.5 L1767.5 251.1 L1770.0 250.7 L1772.5 253.3 L1775.0 254.3 L1777.5 250.4 L1780.0 251.6 L1782.5 250.1 L1785.0 250.6 L1787.5 247.0 L1790.0 251.5 L1792.5 253.9 L1795.0 254.5 L1797.5 251.1 L1800.0 254.2 L1802.5 249.7 L1805.0 251.4 L1807.5 251.2 L1810.0 249.5 L1812.5 251.3 L1815.0 250.1 L1817.5 250.5 L1820.0 253.6 L1822.5 247.2 L1825.0 251.4 L1827.5 250.5 L1830.0 249.8 L1832.5 253.6 L1835.0 246.5 L1837.5 254.1 L1840.0 253.2 L1842.5 251.2 L1845.0 254.3 L1847.5 250.8 L1850.0 251.1 L1852.5 249.5 L1855.0 254.1 L1857.5 250.5 L1860.0 251.9 L1862.5 254.3 L1865.0 250.8 L1867.5 252.0 L1870.0 250.4 L1872.5 253.2 L1875.0 253.4 L1877.5 251.1 L1880.0 251.3 L1882.5 249.9 L1885.0 253.3 L1887.5 245.2 L1890.0 251.1 L1892.5 253.9 L1895.0 247.5 L1897.5 252.0 L1900.0 251.7 L1902.5 251.6 L1905.0 252.9 L1907.5 253.7 L1910.0 250.1 L1912.5 251.0 L1915.0 251.4 L1917.5 250.5 L1920.0 250.7 L1922.5 253.9 L1925.0 251.1 L1927.5 254.5 L1930.0 250.7 L1932.5 252.8 L1935.0 250.0 L1937.5 253.6 L1940.0 250.2 L1942.5 250.1 L1945.0 254.4 L1947.5 254.2 L1950.0 253.8 L1952.5 250.8 L1955.0 249.4 L1957.5 252.6 L1960.0 247.7 L1962.5 250.8 L1965.0 252.8 L1967.5 249.6 L1970.0 252.9 L1972.5 251.1 L1975.0 253.5 L1977.5 245.6 L1980.0 252.3 L1982.5 250.0 L1985.0 253.0 L1987.5 250.9 L1990.0 254.3 L1992.5 252.3 L1995.0 251.6 L1997.5 254.5 L2000.0 250.5 L2002.5 244.7 L2005.0 251.5 L2007.5 251.3 L2010.0 251.5 L2012.5 249.2 L2015.0 252.3 L2017.5 249.5 L2020.0 250.8 L2022.5 249.6 L2025.0 251.4 L2027.5 249.3 L2030.0 252.7 L2032.5 243.8 L2035.0 253.4 L2037.5 248.8 L2040.0 250.4 L2042.5 251.5 L2045.0 249.1 L2047.5 249.3 L2050.0 252.4 L2052.5 249.0 L2055.0 250.0 L2057.5 246.1 L2060.0 251.5 L2062.5 248.0 L2065.0 246.0 L2067.5 248.3 L2070.0 250.4 L2072.5 249.1 L2075.0 250.4 L2077.5 250.7 L2080.0 244.7 L2082.5 249.7 L2085.0 251.1 L2087.5 249.5 L2090.0 246.1 L2092.5 244.9 L2095.0 244.6 L2097.5 247.3 L2100.0 250.7 L2102.5 247.0 L2105.0 248.6 L2107.5 247.3 L2110.0 251.5 L2112.5 250.6 L2115.0 251.3 L2117.5 251.1 L2120.0 247.1 L2122.5 246.8 L2125.0 249.9 L2127.5 250.6 L2130.0 245.6 L2132.5 250.6 L2135.0 247.2 L2137.5 243.9 L2140.0 246.6 L2142.5 249.1 L2145.0 246.5 L2147.5 246.1 L2150.0 248.7 L2152.5 249.9 L2155.0 248.5 L2157.5 246.2 L2160.0 248.8 L2162.5 249.7 L2165.0 250.8 L2167.5 247.7 L2170.0 248.1 L2172.5 244.2 L2175.0 247.3 L2177.5 251.0 L2180.0 249.4 L2182.5 242.7 L2185.0 249.3 L2187.5 248.8 L2190.0 247.0 L2192.5 246.6 L2195.0 244.1 L2197.5 247.6 L2200.0 249.4 L2202.5 249.7 L2205.0 247.3 L2207.5 244.6 L2210.0 249.9 L2212.5 250.7 L2215.0 243.2 L2217.5 249.7 L2220.0 250.1 L2222.5 251.6 L2225.0 248.2 L2227.5 247.3 L2230.0 249.1 L2232.5 247.4 L2235.0 247.3 L2237.5 248.4 L2240.0 250.3 L2242.5 250.6 L2245.0 248.3 L2247.5 243.3 L2250.0 251.4 L2252.5 247.8 L2255.0 251.8 L2257.5 252.1 L2260.0 246.1 L2262.5 249.2 L2265.0 253.0 L2267.5 253.8 L2270.0 251.2 L2272.5 252.4 L2275.0 253.1 L2277.5 254.0 L2280.0 252.2 L2282.5 251.5 L2285.0 252.9 L2287.5 256.7 L2290.0 253.9 L2292.5 254.2 L2295.0 257.4 L2297.5 256.7 L2300.0 258.4 L2302.5 258.3 L2305.0 259.0 L2307.5 258.9 L2310.0 257.4 L2312.5 253.9 L2315.0 254.5 L2317.5 262.3 L2320.0 255.9 L2322.5 262.4 L2325.0 264.0 L2326.0 275.0 L2327.0 300.0 L2328.0 321.0 L2331.0 324.0 L2334.0 322.0 L2338.0 326.0 L2342.0 325.0 L2345.0 331.0 L2348.0 329.0 L2351.0 332.0 L2353.0 345.0 L2354.0 380.0 L2356.0 420.0 L2357.6 451.6 L2554.5 451.6" stroke="#f2f2ff" stroke-width="1.2" fill="none"/><path d="M714.5 451.2 H911 M2358 451.2 H2554.5" stroke="#fff" stroke-width="2"/><path d="M1634.5 101 V451" stroke="#6adc50" stroke-width="1"/><rect x="1571" y="430" width="127" height="21" fill="#5a6a9a" opacity="0.8"/></svg>
<div class="t" style="right:1865px;top:95.5px;font-size:11.5px;color:#e4e4e4;">-40.0</div>
<div class="t" style="right:1865px;top:130.5px;font-size:11.5px;color:#e4e4e4;">-50.0</div>
<div class="t" style="right:1865px;top:165.6px;font-size:11.5px;color:#e4e4e4;">-60.0</div>
<div class="t" style="right:1865px;top:200.6px;font-size:11.5px;color:#e4e4e4;">-70.0</div>
<div class="t" style="right:1865px;top:235.7px;font-size:11.5px;color:#e4e4e4;">-80.0</div>
<div class="t" style="right:1865px;top:270.8px;font-size:11.5px;color:#e4e4e4;">-90.0</div>
<div class="t" style="right:1865px;top:305.8px;font-size:11.5px;color:#e4e4e4;">-100.0</div>
<div class="t" style="right:1865px;top:340.9px;font-size:11.5px;color:#e4e4e4;">-110.0</div>
<div class="t" style="right:1865px;top:375.9px;font-size:11.5px;color:#e4e4e4;">-120.0</div>
<div class="t" style="right:1865px;top:411.0px;font-size:11.5px;color:#e4e4e4;">-130.0</div>
<div class="t" style="right:1865px;top:446.1px;font-size:11.5px;color:#e4e4e4;">-140.0</div>
<div class="t" style="left:300.20000000000005px;width:1000px;text-align:center;top:458.3px;font-size:11.5px;color:#e4e4e4;">174</div>
<div class="t" style="left:480.20000000000005px;width:1000px;text-align:center;top:458.3px;font-size:11.5px;color:#e4e4e4;">174.2</div>
<div class="t" style="left:660.2px;width:1000px;text-align:center;top:458.3px;font-size:11.5px;color:#e4e4e4;">174.4</div>
<div class="t" style="left:840.2px;width:1000px;text-align:center;top:458.3px;font-size:11.5px;color:#e4e4e4;">174.6</div>
<div class="t" style="left:1020.2px;width:1000px;text-align:center;top:458.3px;font-size:11.5px;color:#e4e4e4;">174.8</div>
<div class="t" style="left:1200.2px;width:1000px;text-align:center;top:458.3px;font-size:11.5px;color:#e4e4e4;">175</div>
<div class="t" style="left:1380.2px;width:1000px;text-align:center;top:458.3px;font-size:11.5px;color:#e4e4e4;">175.2</div>
<div class="t" style="left:1560.1999999999998px;width:1000px;text-align:center;top:458.3px;font-size:11.5px;color:#e4e4e4;">175.4</div>
<div class="t" style="left:1740.1999999999998px;width:1000px;text-align:center;top:458.3px;font-size:11.5px;color:#e4e4e4;">175.6</div>
<div class="t" style="left:1920.1999999999998px;width:1000px;text-align:center;top:458.3px;font-size:11.5px;color:#e4e4e4;">175.8</div>
<div class="t" style="left:1134px;width:1000px;text-align:center;top:478.3px;font-size:11.5px;color:#e4e4e4;">Frequency (MHz)</div>
<div class="t" style="left:650px;top:270px;font-size:11px;color:#e4e4e4;transform:rotate(-90deg);transform-origin:0 0;top:287px">dBm</div>
<div class="t" style="left:766px;top:110.7px;font-size:11px;color:#3cd0e8;">fRes = 500,0 Hz / bin</div>
<div class="t" style="left:766px;top:130.7px;font-size:11px;color:#3cd0e8;">x-Scale: 200,000 kHz / div</div>
<div class="t" style="left:766px;top:150.7px;font-size:11px;color:#3cd0e8;">y-Scale: = 10 dB / div</div>
<div class="t" style="left:766px;top:170.7px;font-size:11px;color:#3cd0e8;">NENBW = 2</div>
<div class="t" style="left:1576px;top:432.7px;font-size:15.7px;color:#e8e8f0;">PWR: -48.7 dBm</div>
<div class="a" style="left:15px;top:510px;width:1532px;height:39px;background:#2c2c2c;"></div>
<div class="a" style="left:15px;top:548.3px;width:1528px;height:1.5px;background:#a8b0b8;"></div>
<div class="a" style="left:15px;top:510px;width:65px;height:39px;background:#8a2de0;"></div>
<div class="t" style="left:27px;top:523.3px;font-size:15px;color:#f2c23a;font-style:italic">DAB+</div>
<div class="a" style="left:90px;top:520px;width:60px;height:22px;border:1px solid #b8b8b8;border-radius:2px"></div>
<div class="t" style="left:92px;top:525.0px;font-size:13px;color:#f4f4f4;letter-spacing:-0.5px">5A</div>
<svg class="a" style="left:127px;top:527px" width="12" height="8"><path d="M1 1 H11 L6 6 Z" fill="#fff"/></svg>
<div class="a" style="left:160px;top:510px;width:1px;height:39px;background:#c86060;"></div>
<div class="a" style="left:161px;top:510px;width:110.5px;height:39px;background:#b0191a;"></div>
<div class="t" style="left:176px;top:524.7px;font-size:14.5px;color:#f26a6a;width:95.5px;overflow:hidden;height:18px">ECC-EId: E3-8657</div>
<div class="t" style="left:176px;top:524.7px;font-size:14.5px;color:#fff;clip-path:inset(0 0 0 95.5px)">ECC-EId: E3-8657</div>
<div class="t" style="left:317px;top:524.3px;font-size:15px;color:#e6ee2a;">5A</div>
<div class="t" style="left:356px;top:524.3px;font-size:15px;color:#f2f2f2;letter-spacing:0.3px">2025-11-24</div>
<div class="t" style="left:446px;top:524.3px;font-size:15px;color:#f2f2f2;letter-spacing:0.1px">07:52:19 Z</div>
<div class="t" style="left:539px;top:524.3px;font-size:15px;color:#f2f2f2;">Local: +1.0 hr</div>
<svg class="a" style="left:826px;top:513px" width="30" height="30" viewBox="0 0 30 30"><circle cx="15" cy="15" r="13" fill="#2a2a2a" stroke="#8c8c8c" stroke-width="3"/></svg>
<div class="t" style="left:341px;width:1000px;text-align:center;top:522.4px;font-size:12.5px;color:#f0f0f0;letter-spacing:-0.6px">SPI</div>
<div class="a" style="left:860px;top:510px;width:3px;height:39px;background:#f2f2f2;"></div>
<div class="a" style="left:873px;top:521px;width:25px;height:21px;border:1px solid #b8b8b8;border-radius:2px"></div>
<svg class="a" style="left:879px;top:528px" width="12" height="8"><path d="M1 1 H11 L6 6 Z" fill="#fff"/></svg>
<div class="t" style="left:970px;top:524.3px;font-size:15px;color:#f2f2f2;">SId: 8030</div>
<div class="t" style="left:1065px;top:518.6px;font-size:22.3px;color:#f2f224;">RTV Parkstad</div>
<div class="t" style="left:1232px;top:524.3px;font-size:15px;color:#f2f2f2;">96 kbps</div>
<div class="t" style="left:1295px;top:524.3px;font-size:15px;color:#f2f2f2;">EEP 3-A</div>
<div class="a" style="left:1367px;top:510px;width:1px;height:39px;background:#707070;"></div>
<svg class="a" style="left:1390px;top:518px" width="112" height="28" viewBox="0 0 112 28"><circle cx="13" cy="13" r="11.5" fill="#1a64a8"/><circle cx="13" cy="13" r="5" fill="#ff0a0a"/><circle cx="48.5" cy="13" r="11.5" fill="#1c4a78"/><rect x="44" y="8" width="9" height="10.5" fill="#121418"/><path d="M91.5 7 H97 V18.8 H91.5 Z M97 7 L106.5 1 V25 L97 18.8" stroke="#f4f4f4" stroke-width="1.8" fill="none" stroke-linejoin="miter"/></svg>
<div class="a" style="left:15px;top:550px;width:1532px;height:813px;background:#1b5a8a;"></div>
<div class="a" style="left:15px;top:550px;width:240px;height:35px;background:linear-gradient(#0c2c55,#0f3668);"></div>
<div class="t" style="left:21px;top:558.5px;font-size:19.5px;color:#eef22a;">RTV Parkstad</div>
<svg class="a" style="left:29px;top:592px" width="22" height="28" viewBox="0 0 22 28"><path d="M10.6 1.5 V20" stroke="#5ec4ee" stroke-width="2"/><path d="M10.6 2 Q12 5.5 15.5 8.5 Q19 11.5 16.6 15.5" stroke="#5ec4ee" stroke-width="1.7" fill="none"/><ellipse cx="6.6" cy="21" rx="5" ry="4.1" fill="#5ec4ee" transform="rotate(-15 6.6 21)"/></svg>
<div class="t" style="left:67px;top:597.7px;font-size:15.67px;color:#f4f4f4;">3Heuvelland</div>
<svg class="a" style="left:29px;top:623px" width="22" height="28" viewBox="0 0 22 28"><path d="M10.6 1.5 V20" stroke="#5ec4ee" stroke-width="2"/><path d="M10.6 2 Q12 5.5 15.5 8.5 Q19 11.5 16.6 15.5" stroke="#5ec4ee" stroke-width="1.7" fill="none"/><ellipse cx="6.6" cy="21" rx="5" ry="4.1" fill="#5ec4ee" transform="rotate(-15 6.6 21)"/></svg>
<div class="t" style="left:67px;top:629.4px;font-size:14.87px;color:#f4f4f4;">FalconFM</div>
<svg class="a" style="left:29px;top:654px" width="22" height="28" viewBox="0 0 22 28"><path d="M10.6 1.5 V20" stroke="#5ec4ee" stroke-width="2"/><path d="M10.6 2 Q12 5.5 15.5 8.5 Q19 11.5 16.6 15.5" stroke="#5ec4ee" stroke-width="1.7" fill="none"/><ellipse cx="6.6" cy="21" rx="5" ry="4.1" fill="#5ec4ee" transform="rotate(-15 6.6 21)"/></svg>
<div class="t" style="left:67px;top:660.5px;font-size:14.75px;color:#f4f4f4;">HEUVELLAND VNDG</div>
<svg class="a" style="left:29px;top:685px" width="22" height="28" viewBox="0 0 22 28"><path d="M10.6 1.5 V20" stroke="#5ec4ee" stroke-width="2"/><path d="M10.6 2 Q12 5.5 15.5 8.5 Q19 11.5 16.6 15.5" stroke="#5ec4ee" stroke-width="1.7" fill="none"/><ellipse cx="6.6" cy="21" rx="5" ry="4.1" fill="#5ec4ee" transform="rotate(-15 6.6 21)"/></svg>
<div class="t" style="left:67px;top:691.8px;font-size:14.45px;color:#f4f4f4;">RTV MAASTRICHT</div>
<div class="a" style="left:15px;top:714px;width:240px;height:29px;background:#07346a;border-top:1px solid #4a7aa8;border-bottom:1px solid #4a7aa8"></div>
<svg class="a" style="left:29px;top:716px" width="22" height="28" viewBox="0 0 22 28"><path d="M10.6 1.5 V20" stroke="#5ec4ee" stroke-width="2"/><path d="M10.6 2 Q12 5.5 15.5 8.5 Q19 11.5 16.6 15.5" stroke="#5ec4ee" stroke-width="1.7" fill="none"/><ellipse cx="6.6" cy="21" rx="5" ry="4.1" fill="#5ec4ee" transform="rotate(-15 6.6 21)"/></svg>
<div class="t" style="left:67px;top:722.6px;font-size:14.7px;color:#eef22a;">RTV Parkstad</div>
<svg class="a" style="left:29px;top:747px" width="22" height="28" viewBox="0 0 22 28"><path d="M10.6 1.5 V20" stroke="#5ec4ee" stroke-width="2"/><path d="M10.6 2 Q12 5.5 15.5 8.5 Q19 11.5 16.6 15.5" stroke="#5ec4ee" stroke-width="1.7" fill="none"/><ellipse cx="6.6" cy="21" rx="5" ry="4.1" fill="#5ec4ee" transform="rotate(-15 6.6 21)"/></svg>
<div class="t" style="left:67px;top:753.2px;font-size:15.12px;color:#f4f4f4;">TIPfm Parkstad</div>
<svg class="a" style="left:29px;top:778px" width="22" height="28" viewBox="0 0 22 28"><path d="M10.6 1.5 V20" stroke="#5ec4ee" stroke-width="2"/><path d="M10.6 2 Q12 5.5 15.5 8.5 Q19 11.5 16.6 15.5" stroke="#5ec4ee" stroke-width="1.7" fill="none"/><ellipse cx="6.6" cy="21" rx="5" ry="4.1" fill="#5ec4ee" transform="rotate(-15 6.6 21)"/></svg>
<div class="t" style="left:67px;top:784.0px;font-size:15.41px;color:#f4f4f4;">ZO-NWS Radio</div>
<div class="a" style="left:255px;top:550px;width:5px;height:813px;background:#eef2f2;"></div>
<div class="a" style="left:260px;top:550px;width:200px;height:35px;background:linear-gradient(#0c2c55,#0f3668);"></div>
<div class="t" style="left:264px;top:556.8px;font-size:21.5px;color:#f4f4f4;">Service Quality</div>
<div class="t" style="left:270px;top:605.0px;font-size:13.6px;color:#f4f4f4;transform:scaleX(0.955);transform-origin:0 0;">CNR (dB)</div>
<div class="a" style="left:390px;top:597.5px;width:5px;height:25px;background:#f00;"></div>
<div class="a" style="left:395px;top:597.5px;width:55px;height:25px;background:#8a8a8a;"></div>
<div class="t" style="left:-80px;width:1000px;text-align:center;top:604.3px;font-size:15px;color:#f4f4f4;">4</div>
<div class="t" style="left:270px;top:641.2px;font-size:13.6px;color:#f4f4f4;transform:scaleX(0.938);transform-origin:0 0;">MER (dB)</div>
<div class="a" style="left:390px;top:633.7px;width:9px;height:25px;background:#f00;"></div>
<div class="a" style="left:399px;top:633.7px;width:51px;height:25px;background:#8a8a8a;"></div>
<div class="t" style="left:-80px;width:1000px;text-align:center;top:640.5px;font-size:15px;color:#f4f4f4;">5.5</div>
<div class="t" style="left:270px;top:677.5px;font-size:13.6px;color:#f4f4f4;transform:scaleX(0.946);transform-origin:0 0;">FIC (ok %)</div>
<div class="a" style="left:390px;top:670px;width:56.5px;height:25px;background:#008a10;"></div>
<div class="a" style="left:446.5px;top:670px;width:3.5px;height:25px;background:#8a8a8a;"></div>
<div class="t" style="left:-80px;width:1000px;text-align:center;top:676.8px;font-size:15px;color:#f4f4f4;">93</div>
<div class="t" style="left:270px;top:713.9px;font-size:13.6px;color:#f4f4f4;transform:scaleX(1.017);transform-origin:0 0;">Audio (ok %)</div>
<div class="a" style="left:390px;top:706.4px;width:60px;height:25px;background:#8a8a8a;"></div>
<div class="t" style="left:-80px;width:1000px;text-align:center;top:713.2px;font-size:15px;color:#f4f4f4;">0</div>
<div class="t" style="left:270px;top:747.5px;font-size:13.6px;color:#f4f4f4;transform:scaleX(1.024);transform-origin:0 0;">Null Symbol</div>
<div class="a" style="left:390px;top:740px;width:60px;height:25px;background:#008a10;"></div>
<div class="t" style="left:270px;top:780.5px;font-size:13.6px;color:#f4f4f4;transform:scaleX(0.996);transform-origin:0 0;">SymbolTime (ms)</div>
<div class="a" style="left:390px;top:773px;width:2px;height:25px;background:#0a7a10;"></div>
<div class="a" style="left:392px;top:773px;width:58px;height:25px;background:#8a8a8a;"></div>
<div class="t" style="left:-80px;width:1000px;text-align:center;top:779.8px;font-size:15px;color:#f4f4f4;">0.04</div>
<div class="t" style="left:270px;top:817.0px;font-size:13.6px;color:#f4f4f4;transform:scaleX(0.981);transform-origin:0 0;">FrameTime (ms)</div>
<div class="a" style="left:390px;top:809.5px;width:34px;height:25px;background:#008a10;"></div>
<div class="a" style="left:424px;top:809.5px;width:26px;height:25px;background:#8a8a8a;"></div>
<div class="t" style="left:-80px;width:1000px;text-align:center;top:816.3px;font-size:15px;color:#f4f4f4;">84.9</div>
<div class="t" style="left:270px;top:852.5px;font-size:13.6px;color:#f4f4f4;transform:scaleX(0.857);transform-origin:0 0;">BER FIC</div>
<div class="a" style="left:390px;top:845px;width:60px;height:25px;background:#ff0a0a;"></div>
<div class="t" style="left:-80px;width:1000px;text-align:center;top:851.8px;font-size:15px;color:#f4f4f4;">1.3e-1</div>
<div class="t" style="left:270px;top:889.3px;font-size:13.6px;color:#f4f4f4;transform:scaleX(0.896);transform-origin:0 0;">BER MSC</div>
<div class="a" style="left:390px;top:881.8px;width:60px;height:25px;background:#ff0a0a;"></div>
<div class="t" style="left:-80px;width:1000px;text-align:center;top:888.6px;font-size:15px;color:#f4f4f4;">1.2e-1</div>
<div class="t" style="left:270px;top:925.8px;font-size:13.6px;color:#f4f4f4;transform:scaleX(0.841);transform-origin:0 0;">BER RS</div>
<div class="a" style="left:390px;top:918.3px;width:60px;height:25px;background:#ff0a0a;"></div>
<div class="t" style="left:-80px;width:1000px;text-align:center;top:925.1px;font-size:15px;color:#f4f4f4;">4.8e-1</div>
<div class="a" style="left:460px;top:550px;width:3px;height:813px;background:#3a5f80;"></div>
<div class="a" style="left:463px;top:550px;width:1082px;height:32px;background:linear-gradient(#0b2a52,#0f3566);"></div>
<svg class="a" style="left:0;top:550px" width="1560" height="34" viewBox="0 550 1560 34"><path d="M500 583 L506 559 Q507 556 510 556 H580 Q583 556 584 559 L590 583 Z" fill="#8c8c8c"/><path d="M588 583 L594 559 Q595 556 598 556 H662 Q665 556 666 559 L672 583 Z" fill="#8c8c8c"/><path d="M670 583 L676 559 Q677 556 680 556 H725 Q728 556 729 559 L735 583 Z" fill="#8c8c8c"/><path d="M733 583 L739 559 Q740 556 743 556 H770 Q773 556 774 559 L780 583 Z" fill="#8c8c8c"/><path d="M778 583 L784 559 Q785 556 788 556 H822 Q825 556 826 559 L832 583 Z" fill="#8c8c8c"/><path d="M830 583 L836 559 Q837 556 840 556 H870 Q873 556 874 559 L880 583 Z" fill="#8c8c8c"/><path d="M464 583 L470 559 Q471 556 474 556 H494 Q497 556 498 559 L504 583 Z" fill="#1b5a8a"/><path d="M463 582.5 H1543" stroke="#8fb4d4" stroke-width="1.2"/></svg>
<div class="t" style="left:478px;top:565.1px;font-size:14px;color:#f4f4f4;">TII</div>
<div class="t" style="left:510px;top:565.8px;font-size:13.2px;color:#d8d8d8;">DB Browser</div>
<div class="t" style="left:599px;top:565.1px;font-size:14px;color:#d8d8d8;">5A 5A (5A)</div>
<div class="t" style="left:682px;top:565.7px;font-size:13.3px;color:#d8d8d8;">Service</div>
<div class="t" style="left:743px;top:565.7px;font-size:13.4px;color:#d8d8d8;">Sync</div>
<div class="t" style="left:789px;top:565.1px;font-size:14px;color:#d8d8d8;">Audio</div>
<div class="t" style="left:843px;top:565.7px;font-size:13.3px;color:#d8d8d8;">AAC</div>
<div class="t" style="left:999px;width:1000px;text-align:center;top:564.8px;font-size:12px;color:#4a6e94;">&lt;</div>
<div class="t" style="left:1016px;width:1000px;text-align:center;top:564.8px;font-size:12px;color:#4a6e94;">&gt;</div>
<svg class="a" style="left:1527px;top:566px" width="12" height="8"><path d="M2 2 L6 6 L10 2" stroke="#4a6e94" stroke-width="1.3" fill="none"/></svg>
<div class="a" style="left:494px;top:594px;width:9px;height:9px;border-radius:50%;background:#f00"></div>
<div class="a" style="left:523px;top:594px;width:9.5px;height:9px;background:#0b2a4a;"></div>
<svg class="a" style="left:566px;top:589px" width="16" height="20" viewBox="0 0 16 20"><path d="M1 1 H10 L15 6 V19 H1 Z" fill="#f4f4f4"/><path d="M10 1 V6 H15" fill="#ccc"/><path d="M3.5 8 H12 M3.5 10.5 H12 M3.5 13 H12 M3.5 15.5 H12" stroke="#9aa" stroke-width="0.7"/></svg>
<div class="a" style="left:474px;top:613px;width:730px;height:2px;background:#9ab6cc;"></div>
<div class="a" style="left:474.0px;top:629.5px;width:13.0px;height:13.0px;border-radius:50%;background:radial-gradient(circle at 45% 40%,#f4f4f4,#e4e4e4 60%,#bbb)"></div>
<div class="t" style="left:499px;top:629.9px;font-size:13.7px;color:#f4f4f4;">Show Collisions for Sub Id</div>
<div class="a" style="left:669px;top:624.5px;width:45px;height:21.5px;border:1px solid #9ab6cc;border-radius:2px"></div>
<div class="t" style="left:674px;top:630.0px;font-size:13px;color:#f4f4f4;">1</div>
<svg class="a" style="left:691px;top:631px" width="12" height="8"><path d="M1 1 H11 L6 6 Z" fill="#fff"/></svg>
<div class="a" style="left:474px;top:655px;width:730px;height:1.5px;background:#9ab6cc;"></div>
<svg class="a" style="left:474px;top:679px" width="13" height="13" viewBox="0 0 13 13"><circle cx="6.5" cy="6.5" r="6.5" fill="#e2e2e2"/><path d="M3.5 9.5 L9.5 3.5" stroke="#333" stroke-width="1.8"/></svg>
<div class="t" style="left:524.5px;top:680.2px;font-size:14.5px;color:#f4f4f4;">Main</div>
<div class="t" style="left:590px;top:680.2px;font-size:14.5px;color:#f4f4f4;">Sub</div>
<div class="t" style="left:706px;top:680.2px;font-size:14.5px;color:#f4f4f4;">Name</div>
<div class="t" style="left:835.5px;top:680.2px;font-size:14.5px;color:#f4f4f4;">Etsi</div>
<div class="t" style="left:891px;top:680.2px;font-size:14.5px;color:#f4f4f4;">SNR (dB)</div>
<div class="t" style="left:983.5px;top:680.2px;font-size:14.5px;color:#f4f4f4;">km abs.</div>
<div class="t" style="left:1066px;top:680.2px;font-size:14.5px;color:#f4f4f4;">km rel.</div>
<div class="t" style="left:1144px;top:680.2px;font-size:14.5px;color:#f4f4f4;">AZM(°)</div>
<div class="a" style="left:464px;top:700px;width:740px;height:1.5px;background:#9ab6cc;"></div>
<svg class="a" style="left:474.0px;top:711.0px" width="13.0" height="13.0" viewBox="0 0 13 13"><circle cx="6.5" cy="6.5" r="6.5" fill="#e2e2e2"/><path d="M3.2 6.8 L5.6 9.3 L9.8 3.6" stroke="#333" stroke-width="1.7" fill="none"/></svg>
<div class="t" style="left:526px;top:715.2px;font-size:13.4px;color:#f4f4f4;">57</div>
<div class="t" style="left:592.5px;top:715.2px;font-size:13.4px;color:#f4f4f4;">10</div>
<div class="t" style="left:650.5px;top:715.2px;font-size:13.4px;color:#f4f4f4;">Eys/Cellnex mast</div>
<div class="t" style="left:837px;top:715.2px;font-size:13.4px;color:#f4f4f4;">Yes</div>
<div class="t" style="left:893px;top:715.2px;font-size:13.4px;color:#f4f4f4;">4.2</div>
<div class="t" style="left:985px;top:715.2px;font-size:13.4px;color:#f4f4f4;">86.7</div>
<div class="t" style="left:1068px;top:715.2px;font-size:13.4px;color:#f4f4f4;">0.0</div>
<div class="t" style="left:1146px;top:715.2px;font-size:13.4px;color:#f4f4f4;">102.2</div>
<div class="a" style="left:1246px;top:615px;width:2px;height:119px;background:#9ab6cc;"></div>
<div class="a" style="left:1241px;top:633px;width:12px;height:12px;border-radius:50%;background:#9aaab8"></div>
<div class="t" style="left:1223px;top:690px;font-size:14px;color:#f4f4f4;transform:rotate(-90deg);transform-origin:0 0">Threshold</div>
<div class="a" style="left:1301px;top:615px;width:2px;height:112px;background:#c8d4dc;"></div>
<div class="a" style="left:1302px;top:726px;width:0px;height:2px;background:#dcdcdc;"></div>
<div class="a" style="left:1296px;top:721px;width:12px;height:12px;border-radius:50%;background:radial-gradient(circle at 45% 35%,#f0f0f0,#9a9a9a 70%,#666)"></div>
<div class="t" style="left:1278px;top:690px;font-size:14px;color:#f4f4f4;transform:rotate(-90deg);transform-origin:0 0">Average</div>
<div class="t" style="left:1220px;top:741.1px;font-size:13.5px;color:#f4f4f4;letter-spacing:-0.3px">-15.6 dB</div>
<div class="t" style="left:1296px;top:739.6px;font-size:13.5px;color:#f4f4f4;">2s</div>
<svg class="a" style="left:1229.0px;top:775.0px" width="13.0" height="13.0" viewBox="0 0 13 13"><circle cx="6.5" cy="6.5" r="6.5" fill="#e2e2e2"/><path d="M3.2 6.8 L5.6 9.3 L9.8 3.6" stroke="#333" stroke-width="1.7" fill="none"/></svg>
<div class="t" style="left:1246px;top:775.5px;font-size:13px;color:#f4f4f4;">Automatic</div>
<div class="a" style="left:463px;top:1052.6px;width:1080px;height:1.6px;background:#8fb4d4;"></div>
<div class="a" style="left:463px;top:1054px;width:1082px;height:30px;background:linear-gradient(#0b2a52,#0f3566);"></div>
<svg class="a" style="left:0;top:1054px" width="1560" height="32" viewBox="0 1054 1560 32"><path d="M534 1085 L540 1061 Q541 1058 544 1058 H568 Q571 1058 572 1061 L578 1085 Z" fill="#8c8c8c"/><path d="M575 1085 L581 1061 Q582 1058 585 1058 H646 Q649 1058 650 1061 L656 1085 Z" fill="#8c8c8c"/><path d="M464 1085 L470 1061 Q471 1058 474 1058 H528 Q531 1058 532 1061 L538 1085 Z" fill="#1b5a8a"/><path d="M463 1084.8 H1543" stroke="#8fb4d4" stroke-width="1.4"/></svg>
<div class="t" style="left:478px;top:1068.1px;font-size:14px;color:#f4f4f4;">Options</div>
<div class="t" style="left:544px;top:1069.0px;font-size:13px;color:#d8d8d8;">EPG</div>
<div class="t" style="left:586px;top:1068.6px;font-size:13.5px;color:#d8d8d8;">Recorders</div>
<div class="t" style="left:999px;width:1000px;text-align:center;top:1066.8px;font-size:12px;color:#4a6e94;">&lt;</div>
<div class="t" style="left:1016px;width:1000px;text-align:center;top:1066.8px;font-size:12px;color:#4a6e94;">&gt;</div>
<svg class="a" style="left:1527px;top:1068px" width="12" height="8"><path d="M2 2 L6 6 L10 2" stroke="#4a6e94" stroke-width="1.3" fill="none"/></svg>
<div class="a" style="left:484px;top:1106px;width:74px;height:23px;background:#0b3464;box-shadow:0 0 1px #0a2a50"></div>
<div class="t" style="left:21.0px;width:1000px;text-align:center;top:1111.1px;font-size:14px;color:#f4f4f4;">Calibrate</div>
<div class="a" style="left:484px;top:1146px;width:76px;height:23px;background:#0b3464;box-shadow:0 0 1px #0a2a50"></div>
<div class="t" style="left:22.0px;width:1000px;text-align:center;top:1151.1px;font-size:14px;color:#f4f4f4;">DAB Scan</div>
<div class="a" style="left:484px;top:1186px;width:76px;height:23px;background:#0b3464;box-shadow:0 0 1px #0a2a50"></div>
<div class="t" style="left:22.0px;width:1000px;text-align:center;top:1191.1px;font-size:14px;color:#f4f4f4;">Update DB</div>
<div class="a" style="left:483.5px;top:1227.0px;width:13.0px;height:13.0px;border-radius:50%;background:radial-gradient(circle at 45% 40%,#f4f4f4,#e4e4e4 60%,#bbb)"></div>
<div class="t" style="left:501px;top:1227.1px;font-size:14px;color:#f4f4f4;">SNR Tone</div>
<div class="a" style="left:483.5px;top:1261.5px;width:13.0px;height:13.0px;border-radius:50%;background:radial-gradient(circle at 45% 40%,#f4f4f4,#e4e4e4 60%,#bbb)"></div>
<div class="t" style="left:501px;top:1261.6px;font-size:14px;color:#f4f4f4;">Equalizer</div>
<div class="t" style="left:484px;top:1296.1px;font-size:13.5px;color:#f4f4f4;">DAB Display Update Rate</div>
<div class="a" style="left:484px;top:1321px;width:150px;height:2px;background:#dcdcdc;"></div>
<div class="a" style="left:546px;top:1316px;width:12px;height:12px;border-radius:50%;background:radial-gradient(circle at 45% 35%,#f0f0f0,#9a9a9a 70%,#666)"></div>
<div class="t" style="left:644px;top:1315.6px;font-size:13.5px;color:#f4f4f4;">1.10 s</div>
<div class="a" style="left:1531px;top:1087px;width:4.5px;height:269px;background:#b8bcc0;border-radius:2px"></div>
<div class="a" style="left:1542.5px;top:550px;width:4.5px;height:813px;background:#e8e8e8;"></div>
<div class="a" style="left:15px;top:1361.8px;width:1528px;height:1px;background:#90b0c0;"></div>
<div class="a" style="left:15px;top:1363px;width:1532px;height:1.3px;background:#151515;"></div>
<div class="a" style="left:15px;top:1364.3px;width:1532px;height:32px;background:#aaaaaa;"></div>
<div class="a" style="left:15px;top:1364px;width:54px;height:24px;background:#8a8a8a;"></div>
<div class="t" style="left:-458px;width:1000px;text-align:center;top:1371.1px;font-size:14px;color:#c8c8c8;">RSPdx</div>
<div class="a" style="left:71px;top:1363px;width:89px;height:25px;background:#0a8a14;border:1px solid #1a6a1a"></div>
<div class="a" style="left:80px;top:1368px;width:7px;height:7px;border-radius:50%;background:#e01010"></div>
<div class="t" style="left:97px;top:1370.9px;font-size:14.3px;color:#e8ffe8;">RTI-SDR</div>
<div class="a" style="left:1547px;top:503px;width:413px;height:860px;background:#000;"></div>
<div class="a" style="left:1960px;top:502px;width:3px;height:866px;background:#1a1a1a;"></div>
<div class="a" style="left:1546px;top:503px;width:415px;height:1px;background:#7a7a7a;"></div>
<div class="a" style="left:1547px;top:504px;width:413px;height:27px;background:linear-gradient(#06101a 0px,#06101a 1.2px,#2a5a7a 1.2px,#2a5a7a 2.4px,#1c5a8e 3px,#1b5a8c 85%,#3a6a8a 96%,#0a1620);"></div>
<div class="t" style="left:1554.5px;top:510.5px;font-size:16px;color:#dfeaf4;">CIR</div>
<svg class="a" style="left:1591.5px;top:516.0px" width="324.5" height="5"><defs><pattern id="dp297" width="4" height="4" patternUnits="userSpaceOnUse"><rect x="0" y="0" width="1.1" height="1.1" fill="#5a98c8"/><rect x="2" y="2" width="1.1" height="1.1" fill="#5a98c8"/></pattern></defs><rect width="324.5" height="5" fill="url(#dp297)"/></svg>
<svg class="a" style="left:1924px;top:512px" width="30" height="12" viewBox="0 0 30 12"><rect x="1.5" y="1.5" width="9" height="9" stroke="#e8eef4" stroke-width="1.2" fill="none"/><rect x="1.5" y="1.5" width="9" height="2.5" fill="#e8eef4"/><path d="M18 1.5 L27 10.5 M27 1.5 L18 10.5" stroke="#e8eef4" stroke-width="1.3"/></svg>
<div class="a" style="left:1557.7px;top:542.5px;width:13.0px;height:13.0px;border-radius:50%;background:radial-gradient(circle at 45% 40%,#f4f4f4,#e4e4e4 60%,#bbb)"></div>
<div class="t" style="left:1575.6px;top:544.1px;font-size:12px;color:#f0f0f0;">Freeze</div>
<svg class="a" style="left:1628.8px;top:542.5px" width="13.0" height="13.0" viewBox="0 0 13 13"><circle cx="6.5" cy="6.5" r="6.5" fill="#e2e2e2"/><path d="M3.2 6.8 L5.6 9.3 L9.8 3.6" stroke="#333" stroke-width="1.7" fill="none"/></svg>
<div class="t" style="left:1646.6px;top:544.0px;font-size:12.2px;color:#f0f0f0;">Gradient</div>
<div class="a" style="left:1557.7px;top:578.3px;width:13.0px;height:13.0px;border-radius:50%;background:radial-gradient(circle at 45% 40%,#f4f4f4,#e4e4e4 60%,#bbb)"></div>
<div class="t" style="left:1575.6px;top:579.8px;font-size:12px;color:#f0f0f0;">Names</div>
<div class="t" style="left:1563px;top:621.3px;font-size:12px;color:#f0f0f0;">Smoothing Level</div>
<div class="a" style="left:1565px;top:639px;width:133px;height:4px;background-image:linear-gradient(90deg,#bbb 1px,transparent 1px);background-size:5.5px 4px"></div>
<div class="a" style="left:1558px;top:648.8px;width:144px;height:2px;background:#dcdcdc;"></div>
<div class="a" style="left:1576px;top:643.8px;width:12px;height:12px;border-radius:50%;background:radial-gradient(circle at 45% 35%,#f0f0f0,#9a9a9a 70%,#666)"></div>
<div class="t" style="left:1563px;top:675.2px;font-size:12px;color:#f0f0f0;">Zoom X</div>
<div class="a" style="left:1558px;top:699.2px;width:144px;height:2px;background:#dcdcdc;"></div>
<div class="a" style="left:1559px;top:694.2px;width:12px;height:12px;border-radius:50%;background:radial-gradient(circle at 45% 35%,#f0f0f0,#9a9a9a 70%,#666)"></div>
<div class="t" style="left:1563px;top:725.3px;font-size:12px;color:#f0f0f0;">x-Axis</div>
<div class="a" style="left:1568.4px;top:743.8px;width:13.0px;height:13.0px;border-radius:50%;background:#eee"></div>
<div class="a" style="left:1571.4px;top:746.8px;width:7px;height:7px;border-radius:50%;background:#000"></div>
<div class="t" style="left:1587px;top:745.3px;font-size:12px;color:#f0f0f0;">Samples</div>
<div class="a" style="left:1568.4px;top:763.7px;width:13.0px;height:13.0px;border-radius:50%;background:radial-gradient(circle at 45% 40%,#f4f4f4,#e4e4e4 60%,#bbb)"></div>
<div class="t" style="left:1587px;top:765.3px;font-size:12px;color:#f0f0f0;">Distance</div>
<div class="a" style="left:1568.4px;top:783.8px;width:13.0px;height:13.0px;border-radius:50%;background:radial-gradient(circle at 45% 40%,#f4f4f4,#e4e4e4 60%,#bbb)"></div>
<div class="t" style="left:1587px;top:785.3px;font-size:12px;color:#f0f0f0;">Time</div>
<div class="t" style="left:1719px;top:692px;font-size:11.5px;color:#e8e8e8;transform:rotate(-90deg);transform-origin:0 0">Magnitude (dB)</div>
<svg class="a" style="left:0;top:0" width="2572" height="1404" viewBox="0 0 2572 1404"><rect x="1783.3" y="541.4" width="42.100000000000136" height="225.89999999999998" fill="#3e3e3e"/><path d="M1783.3 767.3 L1783.3 740.9 L1784.9 743.4 L1786.5 742.0 L1788.1 743.8 L1789.7 744.0 L1791.3 739.5 L1792.9 739.1 L1794.5 745.7 L1796.1 741.1 L1797.7 740.9 L1799.3 747.0 L1800.9 742.8 L1802.5 745.7 L1804.1 742.8 L1805.7 744.1 L1807.3 740.2 L1808.9 744.1 L1810.5 745.9 L1812.1 743.2 L1813.7 744.9 L1815.3 744.4 L1816.9 739.5 L1818.5 745.1 L1820.1 743.7 L1821.7 741.4 L1823.3 739.2 L1824.9 660.0 L1826.5 660.0 L1828.1 744.8 L1829.7 746.0 L1831.3 744.7 L1832.9 746.4 L1834.5 742.2 L1836.1 745.4 L1837.7 742.6 L1839.3 746.5 L1840.9 746.0 L1842.5 739.8 L1844.1 740.1 L1845.7 740.7 L1847.3 746.7 L1848.9 742.5 L1850.5 744.0 L1852.1 741.4 L1853.7 743.1 L1855.3 742.1 L1856.9 741.8 L1858.5 743.7 L1860.1 743.7 L1861.7 746.2 L1863.3 744.5 L1864.9 746.4 L1866.5 745.9 L1868.1 746.9 L1869.7 744.4 L1871.3 740.3 L1872.9 745.9 L1874.5 746.7 L1876.1 746.2 L1877.7 743.6 L1879.3 744.7 L1880.9 740.7 L1882.5 745.7 L1884.1 743.6 L1885.7 741.3 L1887.3 739.5 L1888.9 745.8 L1890.5 746.9 L1892.1 739.7 L1893.7 745.4 L1895.3 742.3 L1896.9 740.2 L1898.5 741.4 L1900.1 745.2 L1901.7 746.0 L1903.3 739.4 L1904.9 743.9 L1906.5 739.4 L1908.1 744.7 L1909.7 741.6 L1911.3 746.0 L1912.9 746.8 L1914.5 743.0 L1916.1 747.0 L1917.7 741.5 L1919.3 739.6 L1920.9 743.8 L1922.5 739.3 L1924.1 740.6 L1925.7 742.3 L1927.3 743.9 L1928.9 740.2 L1930.5 739.3 L1932.1 745.9 L1933.7 741.5 L1935.3 746.7 L1936.9 746.2 L1938.5 742.0 L1940.1 742.7 L1941.7 743.2 L1943.3 744.2 L1944.9 743.8 L1946.5 743.5 L1948.1 744.0 L1949.7 746.5 L1951.3 743.1 L1952.9 742.4 L1954.4 767.3 Z" fill="#0c3a1c"/><rect x="1783.3" y="541.4" width="42.100000000000136" height="225.89999999999998" fill="#6a6a6a" opacity="0.45"/><rect x="1800" y="541.4" width="4" height="225.89999999999998" fill="#7a2a2a"/><path d="M1783.3 541.4 H1954.4 M1783.3 557.5 H1954.4 M1783.3 573.7 H1954.4 M1783.3 589.8 H1954.4 M1783.3 605.9 H1954.4 M1783.3 622.1 H1954.4 M1783.3 638.2 H1954.4 M1783.3 654.3 H1954.4 M1783.3 670.5 H1954.4 M1783.3 686.6 H1954.4 M1783.3 702.8 H1954.4 M1783.3 718.9 H1954.4 M1783.3 735.0 H1954.4 M1783.3 751.2 H1954.4 M1783.3 767.3 H1954.4 M1792.1 541.4 V767.3 M1808.7 541.4 V767.3 M1825.4 541.4 V767.3 M1842.1 541.4 V767.3 M1858.7 541.4 V767.3 M1875.4 541.4 V767.3 M1892.0 541.4 V767.3 M1908.7 541.4 V767.3 M1925.4 541.4 V767.3 M1942.0 541.4 V767.3 M1783.3 541.4 V767.3 M1954.4 541.4 V767.3" stroke="#7a7a7a" stroke-width="1" fill="none"/><path d="M1783.3 740.9 L1784.9 743.4 L1786.5 742.0 L1788.1 743.8 L1789.7 744.0 L1791.3 739.5 L1792.9 739.1 L1794.5 745.7 L1796.1 741.1 L1797.7 740.9 L1799.3 747.0 L1800.9 742.8 L1802.5 745.7 L1804.1 742.8 L1805.7 744.1 L1807.3 740.2 L1808.9 744.1 L1810.5 745.9 L1812.1 743.2 L1813.7 744.9 L1815.3 744.4 L1816.9 739.5 L1818.5 745.1 L1820.1 743.7 L1821.7 741.4 L1823.3 739.2 L1824.9 660.0 L1826.5 660.0 L1828.1 744.8 L1829.7 746.0 L1831.3 744.7 L1832.9 746.4 L1834.5 742.2 L1836.1 745.4 L1837.7 742.6 L1839.3 746.5 L1840.9 746.0 L1842.5 739.8 L1844.1 740.1 L1845.7 740.7 L1847.3 746.7 L1848.9 742.5 L1850.5 744.0 L1852.1 741.4 L1853.7 743.1 L1855.3 742.1 L1856.9 741.8 L1858.5 743.7 L1860.1 743.7 L1861.7 746.2 L1863.3 744.5 L1864.9 746.4 L1866.5 745.9 L1868.1 746.9 L1869.7 744.4 L1871.3 740.3 L1872.9 745.9 L1874.5 746.7 L1876.1 746.2 L1877.7 743.6 L1879.3 744.7 L1880.9 740.7 L1882.5 745.7 L1884.1 743.6 L1885.7 741.3 L1887.3 739.5 L1888.9 745.8 L1890.5 746.9 L1892.1 739.7 L1893.7 745.4 L1895.3 742.3 L1896.9 740.2 L1898.5 741.4 L1900.1 745.2 L1901.7 746.0 L1903.3 739.4 L1904.9 743.9 L1906.5 739.4 L1908.1 744.7 L1909.7 741.6 L1911.3 746.0 L1912.9 746.8 L1914.5 743.0 L1916.1 747.0 L1917.7 741.5 L1919.3 739.6 L1920.9 743.8 L1922.5 739.3 L1924.1 740.6 L1925.7 742.3 L1927.3 743.9 L1928.9 740.2 L1930.5 739.3 L1932.1 745.9 L1933.7 741.5 L1935.3 746.7 L1936.9 746.2 L1938.5 742.0 L1940.1 742.7 L1941.7 743.2 L1943.3 744.2 L1944.9 743.8 L1946.5 743.5 L1948.1 744.0 L1949.7 746.5 L1951.3 743.1 L1952.9 742.4" stroke="#e8f0e8" stroke-width="1" fill="none"/><circle cx="1825.4" cy="547.5" r="3.2" fill="#f4f020"/><rect x="1812.8" y="630.7" width="108" height="29.5" fill="#d8d8d8" opacity="0.88"/><rect x="1812.7" y="894" width="141.89999999999986" height="117.5" fill="#a2a2a2"/><rect x="1813.7" y="889.0" width="2" height="7.0" fill="#9c9c9c"/><rect x="1816.3" y="880.3" width="2" height="15.7" fill="#9c9c9c"/><rect x="1818.9" y="881.4" width="2" height="14.6" fill="#9c9c9c"/><rect x="1821.5" y="893.6" width="2" height="2.4" fill="#9c9c9c"/><rect x="1824.1" y="885.4" width="2" height="10.6" fill="#9c9c9c"/><rect x="1826.7" y="885.9" width="2" height="10.1" fill="#9c9c9c"/><rect x="1829.3" y="876.2" width="2" height="19.8" fill="#9c9c9c"/><rect x="1831.9" y="883.5" width="2" height="12.5" fill="#9c9c9c"/><rect x="1834.5" y="886.4" width="2" height="9.6" fill="#9c9c9c"/><rect x="1837.1" y="876.4" width="2" height="19.6" fill="#9c9c9c"/><rect x="1839.7" y="887.1" width="2" height="8.9" fill="#9c9c9c"/><rect x="1842.3" y="887.4" width="2" height="8.6" fill="#9c9c9c"/><rect x="1844.9" y="877.1" width="2" height="18.9" fill="#9c9c9c"/><rect x="1847.5" y="887.3" width="2" height="8.7" fill="#9c9c9c"/><rect x="1850.1" y="884.4" width="2" height="11.6" fill="#9c9c9c"/><rect x="1852.7" y="888.2" width="2" height="7.8" fill="#9c9c9c"/><rect x="1855.3" y="882.3" width="2" height="13.7" fill="#9c9c9c"/><rect x="1857.9" y="888.7" width="2" height="7.3" fill="#9c9c9c"/><rect x="1860.5" y="889.3" width="2" height="6.7" fill="#9c9c9c"/><rect x="1863.1" y="876.4" width="2" height="19.6" fill="#9c9c9c"/><rect x="1865.7" y="877.1" width="2" height="18.9" fill="#9c9c9c"/><rect x="1868.3" y="888.2" width="2" height="7.8" fill="#9c9c9c"/><rect x="1870.9" y="893.3" width="2" height="2.7" fill="#9c9c9c"/><rect x="1873.5" y="880.5" width="2" height="15.5" fill="#9c9c9c"/><rect x="1876.1" y="884.2" width="2" height="11.8" fill="#9c9c9c"/><rect x="1878.7" y="886.7" width="2" height="9.3" fill="#9c9c9c"/><rect x="1881.3" y="881.8" width="2" height="14.2" fill="#9c9c9c"/><rect x="1883.9" y="882.6" width="2" height="13.4" fill="#9c9c9c"/><rect x="1886.5" y="881.6" width="2" height="14.4" fill="#9c9c9c"/><rect x="1889.1" y="882.6" width="2" height="13.4" fill="#9c9c9c"/><rect x="1891.7" y="886.7" width="2" height="9.3" fill="#9c9c9c"/><rect x="1894.3" y="881.4" width="2" height="14.6" fill="#9c9c9c"/><rect x="1896.9" y="882.8" width="2" height="13.2" fill="#9c9c9c"/><rect x="1899.5" y="889.9" width="2" height="6.1" fill="#9c9c9c"/><rect x="1902.1" y="876.5" width="2" height="19.5" fill="#9c9c9c"/><rect x="1904.7" y="886.2" width="2" height="9.8" fill="#9c9c9c"/><rect x="1907.3" y="889.2" width="2" height="6.8" fill="#9c9c9c"/><rect x="1909.9" y="881.6" width="2" height="14.4" fill="#9c9c9c"/><rect x="1912.5" y="880.0" width="2" height="16.0" fill="#9c9c9c"/><rect x="1915.1" y="890.5" width="2" height="5.5" fill="#9c9c9c"/><rect x="1917.7" y="880.3" width="2" height="15.7" fill="#9c9c9c"/><rect x="1920.3" y="879.4" width="2" height="16.6" fill="#9c9c9c"/><rect x="1922.9" y="883.8" width="2" height="12.2" fill="#9c9c9c"/><rect x="1925.5" y="888.6" width="2" height="7.4" fill="#9c9c9c"/><rect x="1928.1" y="877.8" width="2" height="18.2" fill="#9c9c9c"/><rect x="1930.7" y="881.8" width="2" height="14.2" fill="#9c9c9c"/><rect x="1933.3" y="882.0" width="2" height="14.0" fill="#9c9c9c"/><rect x="1935.9" y="891.0" width="2" height="5.0" fill="#9c9c9c"/><rect x="1938.5" y="883.9" width="2" height="12.1" fill="#9c9c9c"/><rect x="1941.1" y="891.4" width="2" height="4.6" fill="#9c9c9c"/><rect x="1943.7" y="879.0" width="2" height="17.0" fill="#9c9c9c"/><rect x="1946.3" y="882.1" width="2" height="13.9" fill="#9c9c9c"/><rect x="1948.9" y="887.7" width="2" height="8.3" fill="#9c9c9c"/><rect x="1951.5" y="891.9" width="2" height="4.1" fill="#9c9c9c"/><rect x="1813.9" y="868.0" width="2.3" height="28.0" fill="#30d4d8"/><rect x="1813.5" y="896" width="3" height="115.5" fill="#3cb4bc" opacity="0.85"/><rect x="1818.2" y="868.7" width="2.3" height="27.3" fill="#30d4d8"/><rect x="1817.8" y="896" width="3" height="115.5" fill="#3cb4bc" opacity="0.85"/><rect x="1835.0" y="853.7" width="2.3" height="42.3" fill="#30d4d8"/><rect x="1834.6" y="896" width="3" height="115.5" fill="#3cb4bc" opacity="0.85"/><rect x="1840.6" y="856.2" width="2.3" height="39.8" fill="#30d4d8"/><rect x="1840.2" y="896" width="3" height="115.5" fill="#3cb4bc" opacity="0.85"/><rect x="1849.4" y="864.3" width="2.3" height="31.7" fill="#30d4d8"/><rect x="1849.0" y="896" width="3" height="115.5" fill="#3cb4bc" opacity="0.85"/><rect x="1853.4" y="861.2" width="2.3" height="34.8" fill="#30d4d8"/><rect x="1853.0" y="896" width="3" height="115.5" fill="#3cb4bc" opacity="0.85"/><rect x="1871.2" y="860.0" width="2.3" height="36.0" fill="#30d4d8"/><rect x="1870.8" y="896" width="3" height="115.5" fill="#3cb4bc" opacity="0.85"/><rect x="1875.5" y="858.0" width="2.3" height="38.0" fill="#30d4d8"/><rect x="1875.1" y="896" width="3" height="115.5" fill="#3cb4bc" opacity="0.85"/><rect x="1884.3" y="853.7" width="2.3" height="42.3" fill="#30d4d8"/><rect x="1883.9" y="896" width="3" height="115.5" fill="#3cb4bc" opacity="0.85"/><rect x="1888.0" y="860.0" width="2.3" height="36.0" fill="#30d4d8"/><rect x="1887.6" y="896" width="3" height="115.5" fill="#3cb4bc" opacity="0.85"/><rect x="1906.1" y="859.3" width="2.3" height="36.7" fill="#30d4d8"/><rect x="1905.7" y="896" width="3" height="115.5" fill="#3cb4bc" opacity="0.85"/><rect x="1911.7" y="868.0" width="2.3" height="28.0" fill="#30d4d8"/><rect x="1911.3" y="896" width="3" height="115.5" fill="#3cb4bc" opacity="0.85"/><rect x="1919.1" y="860.0" width="2.3" height="36.0" fill="#30d4d8"/><rect x="1918.7" y="896" width="3" height="115.5" fill="#3cb4bc" opacity="0.85"/><rect x="1924.1" y="867.4" width="2.3" height="28.6" fill="#30d4d8"/><rect x="1923.7" y="896" width="3" height="115.5" fill="#3cb4bc" opacity="0.85"/><rect x="1941.6" y="858.0" width="2.3" height="38.0" fill="#30d4d8"/><rect x="1941.2" y="896" width="3" height="115.5" fill="#3cb4bc" opacity="0.85"/><rect x="1946.0" y="863.0" width="2.3" height="33.0" fill="#30d4d8"/><rect x="1945.6" y="896" width="3" height="115.5" fill="#3cb4bc" opacity="0.85"/><path d="M1812.7 853.8 H1954.6 M1812.7 867.3 H1954.6 M1812.7 880.8 H1954.6 M1812.7 894.3 H1954.6 M1812.7 907.8 H1954.6 M1812.7 921.3 H1954.6 M1812.7 934.8 H1954.6 M1812.7 948.3 H1954.6 M1812.7 961.8 H1954.6 M1812.7 975.3 H1954.6 M1812.7 988.8 H1954.6 M1812.7 1002.3 H1954.6 M1812.7 853.8 V1011.5 M1821.9 853.8 V1011.5 M1831.1 853.8 V1011.5 M1840.3 853.8 V1011.5 M1849.5 853.8 V1011.5 M1858.7 853.8 V1011.5 M1867.9 853.8 V1011.5 M1877.1 853.8 V1011.5 M1886.3 853.8 V1011.5 M1895.5 853.8 V1011.5 M1904.7 853.8 V1011.5 M1913.9 853.8 V1011.5 M1923.1 853.8 V1011.5 M1932.3 853.8 V1011.5 M1941.5 853.8 V1011.5 M1950.7 853.8 V1011.5 M1812.7 1011.5 H1954.6 M1954.6 853.8 V1011.5" stroke="#6e6e6e" stroke-width="1" fill="none" opacity="0.9"/><path d="M1812.7 896.7 H1954.6" stroke="#f02020" stroke-width="1.6"/><path d="M1813.6 853.8 V1011.5 M1848 853.8 V1011.5 M1883.5 853.8 V1011.5 M1918.5 853.8 V1011.5 M1954 853.8 V1011.5" stroke="#f0f060" stroke-width="0.9" stroke-dasharray="2 2"/><path d="M1798.7 1102.4 H1952.6 M1798.7 1120.8 H1952.6 M1798.7 1139.2 H1952.6 M1798.7 1157.7 H1952.6 M1798.7 1176.1 H1952.6 M1798.7 1194.5 H1952.6 M1798.7 1212.9 H1952.6 M1798.7 1231.3 H1952.6 M1798.7 1249.8 H1952.6 M1798.7 1268.2 H1952.6 M1798.7 1286.6 H1952.6 M1798.7 1102.4 V1286.6 M1814.1 1102.4 V1286.6 M1829.5 1102.4 V1286.6 M1844.9 1102.4 V1286.6 M1860.3 1102.4 V1286.6 M1875.7 1102.4 V1286.6 M1891.0 1102.4 V1286.6 M1906.4 1102.4 V1286.6 M1921.8 1102.4 V1286.6 M1937.2 1102.4 V1286.6 M1952.6 1102.4 V1286.6" stroke="#7a7a7a" stroke-width="1" fill="none"/><path d="M1798.7 1102.4 L1952.6 1286.6 M1798.7 1286.6 L1952.6 1102.4" stroke="#1a8a1a" stroke-width="1"/><path d="M1873.8 1184.2l1.5 1.5l-1.5 1.5l-1.5 -1.5zM1889.0 1193.4l1.5 1.5l-1.5 1.5l-1.5 -1.5zM1855.8 1199.9l1.5 1.5l-1.5 1.5l-1.5 -1.5zM1900.2 1266.4l1.5 1.5l-1.5 1.5l-1.5 -1.5zM1876.4 1198.1l1.5 1.5l-1.5 1.5l-1.5 -1.5zM1841.7 1220.7l1.5 1.5l-1.5 1.5l-1.5 -1.5zM1887.1 1205.2l1.5 1.5l-1.5 1.5l-1.5 -1.5zM1900.4 1205.9l1.5 1.5l-1.5 1.5l-1.5 -1.5zM1866.8 1175.8l1.5 1.5l-1.5 1.5l-1.5 -1.5zM1848.5 1194.0l1.5 1.5l-1.5 1.5l-1.5 -1.5zM1858.6 1182.3l1.5 1.5l-1.5 1.5l-1.5 -1.5zM1896.8 1184.6l1.5 1.5l-1.5 1.5l-1.5 -1.5zM1899.6 1183.4l1.5 1.5l-1.5 1.5l-1.5 -1.5zM1887.4 1180.7l1.5 1.5l-1.5 1.5l-1.5 -1.5zM1883.4 1184.9l1.5 1.5l-1.5 1.5l-1.5 -1.5zM1899.8 1213.8l1.5 1.5l-1.5 1.5l-1.5 -1.5zM1910.8 1179.8l1.5 1.5l-1.5 1.5l-1.5 -1.5zM1879.5 1205.9l1.5 1.5l-1.5 1.5l-1.5 -1.5zM1868.7 1193.0l1.5 1.5l-1.5 1.5l-1.5 -1.5zM1846.5 1191.8l1.5 1.5l-1.5 1.5l-1.5 -1.5zM1876.1 1197.1l1.5 1.5l-1.5 1.5l-1.5 -1.5zM1873.9 1217.5l1.5 1.5l-1.5 1.5l-1.5 -1.5zM1896.2 1151.7l1.5 1.5l-1.5 1.5l-1.5 -1.5zM1866.9 1201.9l1.5 1.5l-1.5 1.5l-1.5 -1.5zM1888.6 1191.1l1.5 1.5l-1.5 1.5l-1.5 -1.5zM1875.0 1197.1l1.5 1.5l-1.5 1.5l-1.5 -1.5zM1869.7 1205.3l1.5 1.5l-1.5 1.5l-1.5 -1.5zM1878.2 1217.0l1.5 1.5l-1.5 1.5l-1.5 -1.5zM1854.0 1208.6l1.5 1.5l-1.5 1.5l-1.5 -1.5zM1888.6 1203.3l1.5 1.5l-1.5 1.5l-1.5 -1.5zM1858.2 1190.6l1.5 1.5l-1.5 1.5l-1.5 -1.5zM1846.2 1192.4l1.5 1.5l-1.5 1.5l-1.5 -1.5zM1882.2 1196.4l1.5 1.5l-1.5 1.5l-1.5 -1.5zM1857.3 1213.2l1.5 1.5l-1.5 1.5l-1.5 -1.5zM1820.4 1279.6l1.5 1.5l-1.5 1.5l-1.5 -1.5zM1882.7 1179.9l1.5 1.5l-1.5 1.5l-1.5 -1.5zM1924.2 1205.8l1.5 1.5l-1.5 1.5l-1.5 -1.5zM1901.0 1191.7l1.5 1.5l-1.5 1.5l-1.5 -1.5zM1914.3 1185.1l1.5 1.5l-1.5 1.5l-1.5 -1.5zM1858.4 1176.9l1.5 1.5l-1.5 1.5l-1.5 -1.5zM1881.5 1203.2l1.5 1.5l-1.5 1.5l-1.5 -1.5zM1866.6 1197.0l1.5 1.5l-1.5 1.5l-1.5 -1.5zM1871.4 1157.5l1.5 1.5l-1.5 1.5l-1.5 -1.5zM1861.9 1207.0l1.5 1.5l-1.5 1.5l-1.5 -1.5zM1888.7 1236.1l1.5 1.5l-1.5 1.5l-1.5 -1.5zM1871.4 1157.8l1.5 1.5l-1.5 1.5l-1.5 -1.5zM1893.9 1196.6l1.5 1.5l-1.5 1.5l-1.5 -1.5zM1917.5 1226.9l1.5 1.5l-1.5 1.5l-1.5 -1.5zM1846.3 1192.9l1.5 1.5l-1.5 1.5l-1.5 -1.5zM1879.0 1221.4l1.5 1.5l-1.5 1.5l-1.5 -1.5zM1874.7 1191.4l1.5 1.5l-1.5 1.5l-1.5 -1.5zM1902.3 1172.9l1.5 1.5l-1.5 1.5l-1.5 -1.5zM1889.4 1191.6l1.5 1.5l-1.5 1.5l-1.5 -1.5zM1826.2 1175.0l1.5 1.5l-1.5 1.5l-1.5 -1.5zM1910.6 1177.4l1.5 1.5l-1.5 1.5l-1.5 -1.5zM1842.3 1152.7l1.5 1.5l-1.5 1.5l-1.5 -1.5zM1865.6 1236.1l1.5 1.5l-1.5 1.5l-1.5 -1.5zM1843.2 1235.8l1.5 1.5l-1.5 1.5l-1.5 -1.5zM1870.0 1211.1l1.5 1.5l-1.5 1.5l-1.5 -1.5zM1891.9 1164.3l1.5 1.5l-1.5 1.5l-1.5 -1.5zM1871.2 1151.2l1.5 1.5l-1.5 1.5l-1.5 -1.5zM1863.0 1212.0l1.5 1.5l-1.5 1.5l-1.5 -1.5zM1840.3 1185.6l1.5 1.5l-1.5 1.5l-1.5 -1.5zM1904.1 1209.1l1.5 1.5l-1.5 1.5l-1.5 -1.5zM1867.7 1199.0l1.5 1.5l-1.5 1.5l-1.5 -1.5zM1873.6 1212.4l1.5 1.5l-1.5 1.5l-1.5 -1.5zM1860.7 1193.0l1.5 1.5l-1.5 1.5l-1.5 -1.5zM1860.7 1205.0l1.5 1.5l-1.5 1.5l-1.5 -1.5zM1883.9 1156.6l1.5 1.5l-1.5 1.5l-1.5 -1.5zM1885.9 1164.9l1.5 1.5l-1.5 1.5l-1.5 -1.5zM1853.7 1223.1l1.5 1.5l-1.5 1.5l-1.5 -1.5zM1854.9 1215.2l1.5 1.5l-1.5 1.5l-1.5 -1.5zM1918.7 1191.3l1.5 1.5l-1.5 1.5l-1.5 -1.5zM1893.0 1217.4l1.5 1.5l-1.5 1.5l-1.5 -1.5zM1894.1 1206.8l1.5 1.5l-1.5 1.5l-1.5 -1.5zM1944.1 1140.7l1.5 1.5l-1.5 1.5l-1.5 -1.5zM1846.3 1164.8l1.5 1.5l-1.5 1.5l-1.5 -1.5zM1873.7 1199.3l1.5 1.5l-1.5 1.5l-1.5 -1.5zM1893.5 1167.6l1.5 1.5l-1.5 1.5l-1.5 -1.5zM1892.5 1156.3l1.5 1.5l-1.5 1.5l-1.5 -1.5zM1862.5 1181.7l1.5 1.5l-1.5 1.5l-1.5 -1.5zM1865.4 1209.5l1.5 1.5l-1.5 1.5l-1.5 -1.5zM1898.9 1217.6l1.5 1.5l-1.5 1.5l-1.5 -1.5zM1883.8 1208.4l1.5 1.5l-1.5 1.5l-1.5 -1.5zM1818.8 1223.8l1.5 1.5l-1.5 1.5l-1.5 -1.5zM1878.7 1212.4l1.5 1.5l-1.5 1.5l-1.5 -1.5zM1875.9 1173.6l1.5 1.5l-1.5 1.5l-1.5 -1.5zM1846.9 1180.6l1.5 1.5l-1.5 1.5l-1.5 -1.5zM1860.3 1186.0l1.5 1.5l-1.5 1.5l-1.5 -1.5zM1874.1 1167.3l1.5 1.5l-1.5 1.5l-1.5 -1.5zM1936.3 1162.5l1.5 1.5l-1.5 1.5l-1.5 -1.5zM1887.4 1208.6l1.5 1.5l-1.5 1.5l-1.5 -1.5zM1905.8 1254.8l1.5 1.5l-1.5 1.5l-1.5 -1.5zM1895.2 1173.7l1.5 1.5l-1.5 1.5l-1.5 -1.5zM1837.6 1221.0l1.5 1.5l-1.5 1.5l-1.5 -1.5zM1910.2 1162.0l1.5 1.5l-1.5 1.5l-1.5 -1.5zM1897.9 1190.7l1.5 1.5l-1.5 1.5l-1.5 -1.5zM1889.0 1170.1l1.5 1.5l-1.5 1.5l-1.5 -1.5zM1858.6 1150.9l1.5 1.5l-1.5 1.5l-1.5 -1.5zM1887.7 1170.4l1.5 1.5l-1.5 1.5l-1.5 -1.5zM1832.3 1182.2l1.5 1.5l-1.5 1.5l-1.5 -1.5zM1880.7 1221.0l1.5 1.5l-1.5 1.5l-1.5 -1.5zM1899.6 1140.2l1.5 1.5l-1.5 1.5l-1.5 -1.5zM1872.0 1197.3l1.5 1.5l-1.5 1.5l-1.5 -1.5zM1892.5 1186.3l1.5 1.5l-1.5 1.5l-1.5 -1.5zM1868.4 1184.7l1.5 1.5l-1.5 1.5l-1.5 -1.5zM1886.6 1200.6l1.5 1.5l-1.5 1.5l-1.5 -1.5zM1910.2 1236.1l1.5 1.5l-1.5 1.5l-1.5 -1.5zM1812.1 1115.2l1.5 1.5l-1.5 1.5l-1.5 -1.5zM1881.4 1193.5l1.5 1.5l-1.5 1.5l-1.5 -1.5zM1845.1 1137.8l1.5 1.5l-1.5 1.5l-1.5 -1.5zM1902.0 1182.6l1.5 1.5l-1.5 1.5l-1.5 -1.5zM1882.7 1208.3l1.5 1.5l-1.5 1.5l-1.5 -1.5zM1865.6 1211.7l1.5 1.5l-1.5 1.5l-1.5 -1.5zM1840.1 1234.7l1.5 1.5l-1.5 1.5l-1.5 -1.5zM1895.0 1221.5l1.5 1.5l-1.5 1.5l-1.5 -1.5zM1874.1 1198.9l1.5 1.5l-1.5 1.5l-1.5 -1.5zM1864.4 1210.4l1.5 1.5l-1.5 1.5l-1.5 -1.5zM1867.2 1225.0l1.5 1.5l-1.5 1.5l-1.5 -1.5zM1882.5 1156.5l1.5 1.5l-1.5 1.5l-1.5 -1.5zM1873.5 1237.5l1.5 1.5l-1.5 1.5l-1.5 -1.5zM1889.2 1174.2l1.5 1.5l-1.5 1.5l-1.5 -1.5zM1848.3 1193.7l1.5 1.5l-1.5 1.5l-1.5 -1.5zM1848.7 1175.7l1.5 1.5l-1.5 1.5l-1.5 -1.5zM1859.1 1178.5l1.5 1.5l-1.5 1.5l-1.5 -1.5zM1858.2 1212.8l1.5 1.5l-1.5 1.5l-1.5 -1.5zM1880.9 1205.0l1.5 1.5l-1.5 1.5l-1.5 -1.5zM1904.6 1215.0l1.5 1.5l-1.5 1.5l-1.5 -1.5zM1881.5 1225.5l1.5 1.5l-1.5 1.5l-1.5 -1.5zM1893.6 1174.9l1.5 1.5l-1.5 1.5l-1.5 -1.5zM1905.5 1201.8l1.5 1.5l-1.5 1.5l-1.5 -1.5zM1855.5 1251.6l1.5 1.5l-1.5 1.5l-1.5 -1.5zM1874.1 1163.5l1.5 1.5l-1.5 1.5l-1.5 -1.5zM1910.7 1196.4l1.5 1.5l-1.5 1.5l-1.5 -1.5zM1888.0 1174.7l1.5 1.5l-1.5 1.5l-1.5 -1.5zM1854.3 1191.7l1.5 1.5l-1.5 1.5l-1.5 -1.5zM1864.9 1129.8l1.5 1.5l-1.5 1.5l-1.5 -1.5zM1857.8 1204.1l1.5 1.5l-1.5 1.5l-1.5 -1.5zM1864.2 1138.8l1.5 1.5l-1.5 1.5l-1.5 -1.5zM1861.4 1219.0l1.5 1.5l-1.5 1.5l-1.5 -1.5zM1875.4 1228.9l1.5 1.5l-1.5 1.5l-1.5 -1.5zM1882.8 1195.0l1.5 1.5l-1.5 1.5l-1.5 -1.5zM1871.5 1178.0l1.5 1.5l-1.5 1.5l-1.5 -1.5zM1870.8 1176.7l1.5 1.5l-1.5 1.5l-1.5 -1.5zM1860.5 1179.4l1.5 1.5l-1.5 1.5l-1.5 -1.5zM1865.6 1160.0l1.5 1.5l-1.5 1.5l-1.5 -1.5zM1885.8 1162.1l1.5 1.5l-1.5 1.5l-1.5 -1.5zM1880.2 1167.1l1.5 1.5l-1.5 1.5l-1.5 -1.5zM1855.3 1248.9l1.5 1.5l-1.5 1.5l-1.5 -1.5zM1863.2 1216.0l1.5 1.5l-1.5 1.5l-1.5 -1.5zM1859.2 1147.4l1.5 1.5l-1.5 1.5l-1.5 -1.5zM1901.9 1187.7l1.5 1.5l-1.5 1.5l-1.5 -1.5zM1862.8 1196.7l1.5 1.5l-1.5 1.5l-1.5 -1.5zM1867.3 1184.8l1.5 1.5l-1.5 1.5l-1.5 -1.5zM1881.5 1229.7l1.5 1.5l-1.5 1.5l-1.5 -1.5zM1884.8 1226.9l1.5 1.5l-1.5 1.5l-1.5 -1.5zM1873.9 1218.3l1.5 1.5l-1.5 1.5l-1.5 -1.5zM1884.8 1206.6l1.5 1.5l-1.5 1.5l-1.5 -1.5zM1899.0 1149.7l1.5 1.5l-1.5 1.5l-1.5 -1.5zM1877.1 1182.0l1.5 1.5l-1.5 1.5l-1.5 -1.5zM1893.5 1166.9l1.5 1.5l-1.5 1.5l-1.5 -1.5zM1858.1 1178.1l1.5 1.5l-1.5 1.5l-1.5 -1.5zM1914.6 1151.8l1.5 1.5l-1.5 1.5l-1.5 -1.5zM1877.5 1138.2l1.5 1.5l-1.5 1.5l-1.5 -1.5zM1857.7 1193.4l1.5 1.5l-1.5 1.5l-1.5 -1.5zM1832.6 1165.9l1.5 1.5l-1.5 1.5l-1.5 -1.5zM1891.3 1193.4l1.5 1.5l-1.5 1.5l-1.5 -1.5zM1892.3 1248.9l1.5 1.5l-1.5 1.5l-1.5 -1.5zM1866.4 1213.0l1.5 1.5l-1.5 1.5l-1.5 -1.5zM1864.9 1194.6l1.5 1.5l-1.5 1.5l-1.5 -1.5zM1883.6 1162.4l1.5 1.5l-1.5 1.5l-1.5 -1.5zM1896.6 1185.4l1.5 1.5l-1.5 1.5l-1.5 -1.5zM1879.1 1146.3l1.5 1.5l-1.5 1.5l-1.5 -1.5zM1861.5 1162.9l1.5 1.5l-1.5 1.5l-1.5 -1.5zM1856.8 1192.3l1.5 1.5l-1.5 1.5l-1.5 -1.5zM1842.2 1200.2l1.5 1.5l-1.5 1.5l-1.5 -1.5zM1907.8 1228.6l1.5 1.5l-1.5 1.5l-1.5 -1.5zM1862.2 1145.2l1.5 1.5l-1.5 1.5l-1.5 -1.5zM1833.2 1170.5l1.5 1.5l-1.5 1.5l-1.5 -1.5zM1864.6 1198.3l1.5 1.5l-1.5 1.5l-1.5 -1.5zM1886.6 1146.2l1.5 1.5l-1.5 1.5l-1.5 -1.5zM1847.9 1187.2l1.5 1.5l-1.5 1.5l-1.5 -1.5zM1869.4 1243.5l1.5 1.5l-1.5 1.5l-1.5 -1.5zM1869.5 1159.3l1.5 1.5l-1.5 1.5l-1.5 -1.5zM1872.3 1179.3l1.5 1.5l-1.5 1.5l-1.5 -1.5zM1860.5 1167.1l1.5 1.5l-1.5 1.5l-1.5 -1.5zM1883.0 1210.9l1.5 1.5l-1.5 1.5l-1.5 -1.5zM1884.8 1217.8l1.5 1.5l-1.5 1.5l-1.5 -1.5zM1870.4 1169.7l1.5 1.5l-1.5 1.5l-1.5 -1.5zM1908.8 1200.6l1.5 1.5l-1.5 1.5l-1.5 -1.5zM1851.4 1190.4l1.5 1.5l-1.5 1.5l-1.5 -1.5zM1858.9 1201.2l1.5 1.5l-1.5 1.5l-1.5 -1.5zM1885.8 1202.8l1.5 1.5l-1.5 1.5l-1.5 -1.5zM1868.0 1189.1l1.5 1.5l-1.5 1.5l-1.5 -1.5zM1885.7 1195.6l1.5 1.5l-1.5 1.5l-1.5 -1.5zM1864.5 1217.7l1.5 1.5l-1.5 1.5l-1.5 -1.5zM1848.4 1170.9l1.5 1.5l-1.5 1.5l-1.5 -1.5zM1859.2 1155.0l1.5 1.5l-1.5 1.5l-1.5 -1.5zM1886.8 1200.1l1.5 1.5l-1.5 1.5l-1.5 -1.5zM1872.0 1222.6l1.5 1.5l-1.5 1.5l-1.5 -1.5zM1885.5 1187.1l1.5 1.5l-1.5 1.5l-1.5 -1.5zM1915.9 1193.9l1.5 1.5l-1.5 1.5l-1.5 -1.5zM1853.5 1224.4l1.5 1.5l-1.5 1.5l-1.5 -1.5zM1841.3 1176.3l1.5 1.5l-1.5 1.5l-1.5 -1.5zM1871.8 1208.9l1.5 1.5l-1.5 1.5l-1.5 -1.5zM1841.7 1166.4l1.5 1.5l-1.5 1.5l-1.5 -1.5zM1888.4 1173.7l1.5 1.5l-1.5 1.5l-1.5 -1.5zM1865.6 1244.7l1.5 1.5l-1.5 1.5l-1.5 -1.5zM1848.3 1206.0l1.5 1.5l-1.5 1.5l-1.5 -1.5zM1855.2 1203.2l1.5 1.5l-1.5 1.5l-1.5 -1.5zM1874.0 1173.8l1.5 1.5l-1.5 1.5l-1.5 -1.5zM1916.0 1164.1l1.5 1.5l-1.5 1.5l-1.5 -1.5zM1851.4 1181.8l1.5 1.5l-1.5 1.5l-1.5 -1.5zM1848.8 1210.2l1.5 1.5l-1.5 1.5l-1.5 -1.5zM1874.4 1187.1l1.5 1.5l-1.5 1.5l-1.5 -1.5zM1858.9 1173.3l1.5 1.5l-1.5 1.5l-1.5 -1.5zM1879.3 1194.9l1.5 1.5l-1.5 1.5l-1.5 -1.5zM1884.3 1200.9l1.5 1.5l-1.5 1.5l-1.5 -1.5zM1850.6 1229.9l1.5 1.5l-1.5 1.5l-1.5 -1.5zM1858.2 1160.2l1.5 1.5l-1.5 1.5l-1.5 -1.5zM1914.0 1186.5l1.5 1.5l-1.5 1.5l-1.5 -1.5zM1860.6 1192.4l1.5 1.5l-1.5 1.5l-1.5 -1.5zM1855.4 1206.6l1.5 1.5l-1.5 1.5l-1.5 -1.5zM1867.0 1200.6l1.5 1.5l-1.5 1.5l-1.5 -1.5zM1919.8 1185.9l1.5 1.5l-1.5 1.5l-1.5 -1.5zM1843.9 1190.5l1.5 1.5l-1.5 1.5l-1.5 -1.5zM1838.6 1150.7l1.5 1.5l-1.5 1.5l-1.5 -1.5zM1902.6 1190.7l1.5 1.5l-1.5 1.5l-1.5 -1.5zM1891.0 1195.9l1.5 1.5l-1.5 1.5l-1.5 -1.5zM1849.9 1187.9l1.5 1.5l-1.5 1.5l-1.5 -1.5zM1873.1 1205.7l1.5 1.5l-1.5 1.5l-1.5 -1.5zM1872.4 1190.3l1.5 1.5l-1.5 1.5l-1.5 -1.5zM1865.0 1124.6l1.5 1.5l-1.5 1.5l-1.5 -1.5zM1871.6 1230.0l1.5 1.5l-1.5 1.5l-1.5 -1.5zM1847.5 1243.3l1.5 1.5l-1.5 1.5l-1.5 -1.5zM1883.9 1185.7l1.5 1.5l-1.5 1.5l-1.5 -1.5zM1905.2 1191.8l1.5 1.5l-1.5 1.5l-1.5 -1.5zM1895.9 1171.9l1.5 1.5l-1.5 1.5l-1.5 -1.5zM1886.6 1168.3l1.5 1.5l-1.5 1.5l-1.5 -1.5zM1876.1 1192.4l1.5 1.5l-1.5 1.5l-1.5 -1.5zM1889.5 1179.8l1.5 1.5l-1.5 1.5l-1.5 -1.5zM1850.5 1176.1l1.5 1.5l-1.5 1.5l-1.5 -1.5zM1901.9 1186.0l1.5 1.5l-1.5 1.5l-1.5 -1.5zM1839.7 1185.0l1.5 1.5l-1.5 1.5l-1.5 -1.5zM1910.9 1235.5l1.5 1.5l-1.5 1.5l-1.5 -1.5zM1867.3 1211.3l1.5 1.5l-1.5 1.5l-1.5 -1.5zM1879.4 1215.5l1.5 1.5l-1.5 1.5l-1.5 -1.5zM1881.8 1217.8l1.5 1.5l-1.5 1.5l-1.5 -1.5zM1870.0 1153.3l1.5 1.5l-1.5 1.5l-1.5 -1.5zM1890.9 1173.7l1.5 1.5l-1.5 1.5l-1.5 -1.5zM1891.6 1206.2l1.5 1.5l-1.5 1.5l-1.5 -1.5zM1892.9 1175.9l1.5 1.5l-1.5 1.5l-1.5 -1.5zM1852.5 1144.0l1.5 1.5l-1.5 1.5l-1.5 -1.5zM1885.3 1161.3l1.5 1.5l-1.5 1.5l-1.5 -1.5zM1858.6 1184.9l1.5 1.5l-1.5 1.5l-1.5 -1.5zM1874.6 1214.3l1.5 1.5l-1.5 1.5l-1.5 -1.5zM1885.0 1180.6l1.5 1.5l-1.5 1.5l-1.5 -1.5zM1873.1 1240.9l1.5 1.5l-1.5 1.5l-1.5 -1.5zM1849.1 1161.8l1.5 1.5l-1.5 1.5l-1.5 -1.5zM1868.7 1204.4l1.5 1.5l-1.5 1.5l-1.5 -1.5zM1876.8 1166.6l1.5 1.5l-1.5 1.5l-1.5 -1.5zM1867.0 1173.8l1.5 1.5l-1.5 1.5l-1.5 -1.5zM1807.2 1159.6l1.5 1.5l-1.5 1.5l-1.5 -1.5zM1875.7 1199.6l1.5 1.5l-1.5 1.5l-1.5 -1.5zM1908.7 1215.0l1.5 1.5l-1.5 1.5l-1.5 -1.5zM1861.1 1192.1l1.5 1.5l-1.5 1.5l-1.5 -1.5zM1894.8 1213.5l1.5 1.5l-1.5 1.5l-1.5 -1.5zM1869.7 1182.5l1.5 1.5l-1.5 1.5l-1.5 -1.5zM1863.0 1258.9l1.5 1.5l-1.5 1.5l-1.5 -1.5zM1914.1 1180.4l1.5 1.5l-1.5 1.5l-1.5 -1.5zM1895.3 1170.7l1.5 1.5l-1.5 1.5l-1.5 -1.5zM1872.5 1196.4l1.5 1.5l-1.5 1.5l-1.5 -1.5zM1895.3 1191.9l1.5 1.5l-1.5 1.5l-1.5 -1.5zM1857.9 1220.1l1.5 1.5l-1.5 1.5l-1.5 -1.5zM1892.7 1181.3l1.5 1.5l-1.5 1.5l-1.5 -1.5zM1869.2 1197.4l1.5 1.5l-1.5 1.5l-1.5 -1.5zM1874.7 1170.1l1.5 1.5l-1.5 1.5l-1.5 -1.5zM1879.4 1236.2l1.5 1.5l-1.5 1.5l-1.5 -1.5zM1875.0 1194.3l1.5 1.5l-1.5 1.5l-1.5 -1.5zM1895.4 1169.8l1.5 1.5l-1.5 1.5l-1.5 -1.5zM1935.4 1246.5l1.5 1.5l-1.5 1.5l-1.5 -1.5zM1856.9 1173.0l1.5 1.5l-1.5 1.5l-1.5 -1.5zM1840.7 1209.9l1.5 1.5l-1.5 1.5l-1.5 -1.5zM1880.3 1196.1l1.5 1.5l-1.5 1.5l-1.5 -1.5zM1850.8 1227.1l1.5 1.5l-1.5 1.5l-1.5 -1.5zM1876.7 1201.7l1.5 1.5l-1.5 1.5l-1.5 -1.5zM1862.4 1235.0l1.5 1.5l-1.5 1.5l-1.5 -1.5zM1862.0 1187.7l1.5 1.5l-1.5 1.5l-1.5 -1.5zM1884.4 1188.5l1.5 1.5l-1.5 1.5l-1.5 -1.5zM1868.3 1215.6l1.5 1.5l-1.5 1.5l-1.5 -1.5zM1863.2 1215.1l1.5 1.5l-1.5 1.5l-1.5 -1.5zM1868.6 1194.4l1.5 1.5l-1.5 1.5l-1.5 -1.5zM1861.6 1209.9l1.5 1.5l-1.5 1.5l-1.5 -1.5zM1819.7 1215.1l1.5 1.5l-1.5 1.5l-1.5 -1.5zM1896.9 1206.5l1.5 1.5l-1.5 1.5l-1.5 -1.5zM1878.8 1183.3l1.5 1.5l-1.5 1.5l-1.5 -1.5zM1865.7 1183.5l1.5 1.5l-1.5 1.5l-1.5 -1.5zM1873.8 1203.0l1.5 1.5l-1.5 1.5l-1.5 -1.5zM1867.2 1217.9l1.5 1.5l-1.5 1.5l-1.5 -1.5zM1841.3 1207.2l1.5 1.5l-1.5 1.5l-1.5 -1.5zM1884.0 1214.7l1.5 1.5l-1.5 1.5l-1.5 -1.5zM1874.6 1181.9l1.5 1.5l-1.5 1.5l-1.5 -1.5zM1879.7 1216.6l1.5 1.5l-1.5 1.5l-1.5 -1.5zM1882.4 1203.4l1.5 1.5l-1.5 1.5l-1.5 -1.5zM1911.1 1224.0l1.5 1.5l-1.5 1.5l-1.5 -1.5zM1884.8 1183.7l1.5 1.5l-1.5 1.5l-1.5 -1.5zM1869.3 1175.6l1.5 1.5l-1.5 1.5l-1.5 -1.5zM1906.8 1169.0l1.5 1.5l-1.5 1.5l-1.5 -1.5zM1850.5 1167.9l1.5 1.5l-1.5 1.5l-1.5 -1.5zM1885.5 1175.3l1.5 1.5l-1.5 1.5l-1.5 -1.5zM1861.4 1201.1l1.5 1.5l-1.5 1.5l-1.5 -1.5zM1850.2 1156.8l1.5 1.5l-1.5 1.5l-1.5 -1.5zM1890.0 1182.0l1.5 1.5l-1.5 1.5l-1.5 -1.5zM1878.2 1194.2l1.5 1.5l-1.5 1.5l-1.5 -1.5zM1914.4 1154.4l1.5 1.5l-1.5 1.5l-1.5 -1.5zM1870.7 1183.2l1.5 1.5l-1.5 1.5l-1.5 -1.5zM1876.0 1170.7l1.5 1.5l-1.5 1.5l-1.5 -1.5zM1863.2 1224.5l1.5 1.5l-1.5 1.5l-1.5 -1.5zM1873.3 1170.8l1.5 1.5l-1.5 1.5l-1.5 -1.5zM1873.9 1199.7l1.5 1.5l-1.5 1.5l-1.5 -1.5zM1853.1 1177.5l1.5 1.5l-1.5 1.5l-1.5 -1.5zM1886.8 1192.6l1.5 1.5l-1.5 1.5l-1.5 -1.5zM1857.9 1184.6l1.5 1.5l-1.5 1.5l-1.5 -1.5zM1872.5 1166.2l1.5 1.5l-1.5 1.5l-1.5 -1.5zM1868.9 1171.0l1.5 1.5l-1.5 1.5l-1.5 -1.5zM1887.3 1192.4l1.5 1.5l-1.5 1.5l-1.5 -1.5zM1829.4 1147.8l1.5 1.5l-1.5 1.5l-1.5 -1.5zM1887.2 1205.5l1.5 1.5l-1.5 1.5l-1.5 -1.5zM1877.3 1199.4l1.5 1.5l-1.5 1.5l-1.5 -1.5zM1892.4 1222.4l1.5 1.5l-1.5 1.5l-1.5 -1.5zM1876.6 1163.7l1.5 1.5l-1.5 1.5l-1.5 -1.5zM1896.0 1197.6l1.5 1.5l-1.5 1.5l-1.5 -1.5zM1869.9 1215.9l1.5 1.5l-1.5 1.5l-1.5 -1.5zM1865.7 1206.4l1.5 1.5l-1.5 1.5l-1.5 -1.5zM1881.1 1190.8l1.5 1.5l-1.5 1.5l-1.5 -1.5zM1899.3 1191.6l1.5 1.5l-1.5 1.5l-1.5 -1.5zM1848.6 1248.7l1.5 1.5l-1.5 1.5l-1.5 -1.5zM1903.8 1182.7l1.5 1.5l-1.5 1.5l-1.5 -1.5zM1877.9 1197.2l1.5 1.5l-1.5 1.5l-1.5 -1.5zM1853.2 1199.2l1.5 1.5l-1.5 1.5l-1.5 -1.5zM1919.5 1205.3l1.5 1.5l-1.5 1.5l-1.5 -1.5zM1879.9 1204.5l1.5 1.5l-1.5 1.5l-1.5 -1.5zM1892.0 1224.4l1.5 1.5l-1.5 1.5l-1.5 -1.5zM1888.8 1209.1l1.5 1.5l-1.5 1.5l-1.5 -1.5zM1869.2 1190.9l1.5 1.5l-1.5 1.5l-1.5 -1.5zM1853.0 1194.9l1.5 1.5l-1.5 1.5l-1.5 -1.5zM1894.1 1221.5l1.5 1.5l-1.5 1.5l-1.5 -1.5zM1892.2 1182.1l1.5 1.5l-1.5 1.5l-1.5 -1.5zM1859.8 1118.0l1.5 1.5l-1.5 1.5l-1.5 -1.5zM1862.1 1182.2l1.5 1.5l-1.5 1.5l-1.5 -1.5zM1891.7 1220.5l1.5 1.5l-1.5 1.5l-1.5 -1.5zM1847.0 1179.3l1.5 1.5l-1.5 1.5l-1.5 -1.5zM1872.2 1178.2l1.5 1.5l-1.5 1.5l-1.5 -1.5zM1890.4 1213.0l1.5 1.5l-1.5 1.5l-1.5 -1.5zM1875.1 1195.8l1.5 1.5l-1.5 1.5l-1.5 -1.5zM1935.0 1152.6l1.5 1.5l-1.5 1.5l-1.5 -1.5zM1865.9 1194.0l1.5 1.5l-1.5 1.5l-1.5 -1.5zM1922.8 1198.1l1.5 1.5l-1.5 1.5l-1.5 -1.5zM1885.0 1214.7l1.5 1.5l-1.5 1.5l-1.5 -1.5zM1856.5 1195.9l1.5 1.5l-1.5 1.5l-1.5 -1.5zM1873.2 1201.3l1.5 1.5l-1.5 1.5l-1.5 -1.5zM1858.4 1196.7l1.5 1.5l-1.5 1.5l-1.5 -1.5zM1896.7 1158.2l1.5 1.5l-1.5 1.5l-1.5 -1.5zM1901.2 1165.3l1.5 1.5l-1.5 1.5l-1.5 -1.5zM1864.7 1203.3l1.5 1.5l-1.5 1.5l-1.5 -1.5zM1818.1 1182.2l1.5 1.5l-1.5 1.5l-1.5 -1.5zM1899.0 1187.2l1.5 1.5l-1.5 1.5l-1.5 -1.5zM1870.4 1188.4l1.5 1.5l-1.5 1.5l-1.5 -1.5zM1852.4 1186.8l1.5 1.5l-1.5 1.5l-1.5 -1.5zM1842.7 1185.0l1.5 1.5l-1.5 1.5l-1.5 -1.5zM1901.1 1185.0l1.5 1.5l-1.5 1.5l-1.5 -1.5zM1893.4 1189.2l1.5 1.5l-1.5 1.5l-1.5 -1.5zM1863.4 1208.4l1.5 1.5l-1.5 1.5l-1.5 -1.5zM1884.2 1190.4l1.5 1.5l-1.5 1.5l-1.5 -1.5zM1911.1 1207.7l1.5 1.5l-1.5 1.5l-1.5 -1.5zM1885.4 1160.7l1.5 1.5l-1.5 1.5l-1.5 -1.5zM1874.2 1172.4l1.5 1.5l-1.5 1.5l-1.5 -1.5zM1896.6 1230.8l1.5 1.5l-1.5 1.5l-1.5 -1.5zM1903.6 1186.6l1.5 1.5l-1.5 1.5l-1.5 -1.5zM1857.6 1188.1l1.5 1.5l-1.5 1.5l-1.5 -1.5zM1862.6 1161.4l1.5 1.5l-1.5 1.5l-1.5 -1.5zM1890.3 1217.8l1.5 1.5l-1.5 1.5l-1.5 -1.5zM1874.8 1195.1l1.5 1.5l-1.5 1.5l-1.5 -1.5zM1900.4 1197.0l1.5 1.5l-1.5 1.5l-1.5 -1.5zM1905.3 1222.8l1.5 1.5l-1.5 1.5l-1.5 -1.5zM1865.9 1198.1l1.5 1.5l-1.5 1.5l-1.5 -1.5zM1825.0 1165.5l1.5 1.5l-1.5 1.5l-1.5 -1.5zM1882.1 1204.4l1.5 1.5l-1.5 1.5l-1.5 -1.5zM1889.2 1151.6l1.5 1.5l-1.5 1.5l-1.5 -1.5zM1872.0 1191.6l1.5 1.5l-1.5 1.5l-1.5 -1.5zM1845.1 1191.1l1.5 1.5l-1.5 1.5l-1.5 -1.5zM1860.2 1199.4l1.5 1.5l-1.5 1.5l-1.5 -1.5zM1859.5 1202.4l1.5 1.5l-1.5 1.5l-1.5 -1.5zM1854.2 1172.2l1.5 1.5l-1.5 1.5l-1.5 -1.5zM1875.2 1175.7l1.5 1.5l-1.5 1.5l-1.5 -1.5zM1858.8 1174.7l1.5 1.5l-1.5 1.5l-1.5 -1.5zM1883.9 1176.9l1.5 1.5l-1.5 1.5l-1.5 -1.5zM1867.6 1191.3l1.5 1.5l-1.5 1.5l-1.5 -1.5zM1880.9 1212.4l1.5 1.5l-1.5 1.5l-1.5 -1.5zM1897.4 1172.9l1.5 1.5l-1.5 1.5l-1.5 -1.5zM1863.7 1165.6l1.5 1.5l-1.5 1.5l-1.5 -1.5zM1885.0 1180.7l1.5 1.5l-1.5 1.5l-1.5 -1.5zM1867.2 1199.8l1.5 1.5l-1.5 1.5l-1.5 -1.5zM1881.6 1210.6l1.5 1.5l-1.5 1.5l-1.5 -1.5zM1877.8 1187.6l1.5 1.5l-1.5 1.5l-1.5 -1.5zM1870.8 1226.4l1.5 1.5l-1.5 1.5l-1.5 -1.5zM1877.9 1198.7l1.5 1.5l-1.5 1.5l-1.5 -1.5zM1872.6 1177.4l1.5 1.5l-1.5 1.5l-1.5 -1.5zM1913.6 1188.2l1.5 1.5l-1.5 1.5l-1.5 -1.5zM1882.6 1228.0l1.5 1.5l-1.5 1.5l-1.5 -1.5zM1865.6 1152.5l1.5 1.5l-1.5 1.5l-1.5 -1.5zM1848.4 1193.2l1.5 1.5l-1.5 1.5l-1.5 -1.5zM1905.5 1249.3l1.5 1.5l-1.5 1.5l-1.5 -1.5zM1896.1 1163.3l1.5 1.5l-1.5 1.5l-1.5 -1.5zM1924.9 1199.8l1.5 1.5l-1.5 1.5l-1.5 -1.5zM1871.3 1197.3l1.5 1.5l-1.5 1.5l-1.5 -1.5zM1878.8 1189.6l1.5 1.5l-1.5 1.5l-1.5 -1.5zM1861.5 1170.0l1.5 1.5l-1.5 1.5l-1.5 -1.5zM1860.8 1238.8l1.5 1.5l-1.5 1.5l-1.5 -1.5zM1880.8 1226.4l1.5 1.5l-1.5 1.5l-1.5 -1.5zM1877.2 1177.2l1.5 1.5l-1.5 1.5l-1.5 -1.5zM1878.2 1176.0l1.5 1.5l-1.5 1.5l-1.5 -1.5zM1867.4 1171.5l1.5 1.5l-1.5 1.5l-1.5 -1.5zM1857.8 1203.6l1.5 1.5l-1.5 1.5l-1.5 -1.5zM1894.6 1222.9l1.5 1.5l-1.5 1.5l-1.5 -1.5zM1931.0 1271.0l1.5 1.5l-1.5 1.5l-1.5 -1.5zM1857.9 1179.1l1.5 1.5l-1.5 1.5l-1.5 -1.5zM1846.3 1167.5l1.5 1.5l-1.5 1.5l-1.5 -1.5zM1843.5 1185.7l1.5 1.5l-1.5 1.5l-1.5 -1.5zM1873.6 1169.8l1.5 1.5l-1.5 1.5l-1.5 -1.5zM1871.8 1227.9l1.5 1.5l-1.5 1.5l-1.5 -1.5zM1900.3 1200.6l1.5 1.5l-1.5 1.5l-1.5 -1.5zM1886.7 1217.5l1.5 1.5l-1.5 1.5l-1.5 -1.5zM1872.6 1182.3l1.5 1.5l-1.5 1.5l-1.5 -1.5zM1886.9 1231.4l1.5 1.5l-1.5 1.5l-1.5 -1.5zM1839.9 1189.3l1.5 1.5l-1.5 1.5l-1.5 -1.5zM1869.5 1191.5l1.5 1.5l-1.5 1.5l-1.5 -1.5zM1867.9 1152.2l1.5 1.5l-1.5 1.5l-1.5 -1.5zM1867.7 1189.9l1.5 1.5l-1.5 1.5l-1.5 -1.5zM1866.9 1199.1l1.5 1.5l-1.5 1.5l-1.5 -1.5zM1864.7 1227.9l1.5 1.5l-1.5 1.5l-1.5 -1.5zM1861.8 1184.7l1.5 1.5l-1.5 1.5l-1.5 -1.5zM1868.5 1190.5l1.5 1.5l-1.5 1.5l-1.5 -1.5zM1897.2 1213.1l1.5 1.5l-1.5 1.5l-1.5 -1.5zM1887.1 1150.0l1.5 1.5l-1.5 1.5l-1.5 -1.5zM1878.9 1152.4l1.5 1.5l-1.5 1.5l-1.5 -1.5zM1901.9 1182.2l1.5 1.5l-1.5 1.5l-1.5 -1.5zM1889.1 1196.9l1.5 1.5l-1.5 1.5l-1.5 -1.5zM1831.7 1183.6l1.5 1.5l-1.5 1.5l-1.5 -1.5zM1889.9 1156.2l1.5 1.5l-1.5 1.5l-1.5 -1.5zM1853.2 1262.9l1.5 1.5l-1.5 1.5l-1.5 -1.5zM1893.4 1204.1l1.5 1.5l-1.5 1.5l-1.5 -1.5zM1866.5 1202.3l1.5 1.5l-1.5 1.5l-1.5 -1.5zM1897.2 1211.0l1.5 1.5l-1.5 1.5l-1.5 -1.5zM1850.7 1241.9l1.5 1.5l-1.5 1.5l-1.5 -1.5zM1876.0 1167.7l1.5 1.5l-1.5 1.5l-1.5 -1.5zM1911.1 1110.1l1.5 1.5l-1.5 1.5l-1.5 -1.5zM1874.6 1214.6l1.5 1.5l-1.5 1.5l-1.5 -1.5zM1870.1 1217.0l1.5 1.5l-1.5 1.5l-1.5 -1.5zM1876.9 1183.9l1.5 1.5l-1.5 1.5l-1.5 -1.5zM1877.7 1217.6l1.5 1.5l-1.5 1.5l-1.5 -1.5zM1906.0 1201.7l1.5 1.5l-1.5 1.5l-1.5 -1.5zM1899.6 1177.5l1.5 1.5l-1.5 1.5l-1.5 -1.5zM1906.4 1182.9l1.5 1.5l-1.5 1.5l-1.5 -1.5zM1886.9 1218.4l1.5 1.5l-1.5 1.5l-1.5 -1.5zM1910.1 1193.7l1.5 1.5l-1.5 1.5l-1.5 -1.5zM1869.8 1215.5l1.5 1.5l-1.5 1.5l-1.5 -1.5zM1848.8 1180.0l1.5 1.5l-1.5 1.5l-1.5 -1.5zM1899.5 1236.5l1.5 1.5l-1.5 1.5l-1.5 -1.5zM1852.2 1243.2l1.5 1.5l-1.5 1.5l-1.5 -1.5zM1892.1 1163.4l1.5 1.5l-1.5 1.5l-1.5 -1.5zM1870.3 1201.1l1.5 1.5l-1.5 1.5l-1.5 -1.5zM1873.7 1173.3l1.5 1.5l-1.5 1.5l-1.5 -1.5zM1872.3 1201.8l1.5 1.5l-1.5 1.5l-1.5 -1.5zM1860.1 1167.9l1.5 1.5l-1.5 1.5l-1.5 -1.5zM1860.4 1179.1l1.5 1.5l-1.5 1.5l-1.5 -1.5zM1880.5 1231.2l1.5 1.5l-1.5 1.5l-1.5 -1.5zM1885.9 1205.5l1.5 1.5l-1.5 1.5l-1.5 -1.5zM1873.2 1165.8l1.5 1.5l-1.5 1.5l-1.5 -1.5zM1892.2 1179.8l1.5 1.5l-1.5 1.5l-1.5 -1.5zM1925.6 1205.6l1.5 1.5l-1.5 1.5l-1.5 -1.5zM1901.0 1188.1l1.5 1.5l-1.5 1.5l-1.5 -1.5zM1898.6 1184.4l1.5 1.5l-1.5 1.5l-1.5 -1.5zM1868.4 1179.1l1.5 1.5l-1.5 1.5l-1.5 -1.5zM1881.1 1209.0l1.5 1.5l-1.5 1.5l-1.5 -1.5zM1853.5 1121.6l1.5 1.5l-1.5 1.5l-1.5 -1.5zM1806.5 1194.0l1.5 1.5l-1.5 1.5l-1.5 -1.5zM1878.4 1226.2l1.5 1.5l-1.5 1.5l-1.5 -1.5zM1880.0 1190.1l1.5 1.5l-1.5 1.5l-1.5 -1.5zM1863.0 1184.4l1.5 1.5l-1.5 1.5l-1.5 -1.5zM1874.0 1202.4l1.5 1.5l-1.5 1.5l-1.5 -1.5zM1899.0 1205.3l1.5 1.5l-1.5 1.5l-1.5 -1.5zM1827.2 1196.6l1.5 1.5l-1.5 1.5l-1.5 -1.5zM1844.8 1178.5l1.5 1.5l-1.5 1.5l-1.5 -1.5zM1835.9 1169.0l1.5 1.5l-1.5 1.5l-1.5 -1.5zM1902.7 1194.9l1.5 1.5l-1.5 1.5l-1.5 -1.5zM1901.3 1152.7l1.5 1.5l-1.5 1.5l-1.5 -1.5zM1862.9 1202.2l1.5 1.5l-1.5 1.5l-1.5 -1.5zM1882.8 1201.6l1.5 1.5l-1.5 1.5l-1.5 -1.5zM1843.1 1201.2l1.5 1.5l-1.5 1.5l-1.5 -1.5zM1855.4 1212.5l1.5 1.5l-1.5 1.5l-1.5 -1.5zM1893.2 1221.5l1.5 1.5l-1.5 1.5l-1.5 -1.5zM1922.4 1187.0l1.5 1.5l-1.5 1.5l-1.5 -1.5zM1868.4 1168.8l1.5 1.5l-1.5 1.5l-1.5 -1.5zM1877.0 1214.7l1.5 1.5l-1.5 1.5l-1.5 -1.5zM1850.9 1180.6l1.5 1.5l-1.5 1.5l-1.5 -1.5zM1951.9 1102.4l1.5 1.5l-1.5 1.5l-1.5 -1.5zM1837.6 1185.3l1.5 1.5l-1.5 1.5l-1.5 -1.5zM1884.2 1220.9l1.5 1.5l-1.5 1.5l-1.5 -1.5zM1874.5 1201.7l1.5 1.5l-1.5 1.5l-1.5 -1.5zM1884.6 1185.1l1.5 1.5l-1.5 1.5l-1.5 -1.5zM1840.5 1224.3l1.5 1.5l-1.5 1.5l-1.5 -1.5zM1880.2 1192.3l1.5 1.5l-1.5 1.5l-1.5 -1.5zM1881.4 1195.3l1.5 1.5l-1.5 1.5l-1.5 -1.5zM1867.9 1251.3l1.5 1.5l-1.5 1.5l-1.5 -1.5zM1872.1 1220.7l1.5 1.5l-1.5 1.5l-1.5 -1.5zM1914.8 1198.2l1.5 1.5l-1.5 1.5l-1.5 -1.5zM1868.5 1150.6l1.5 1.5l-1.5 1.5l-1.5 -1.5zM1904.9 1196.8l1.5 1.5l-1.5 1.5l-1.5 -1.5zM1862.2 1168.2l1.5 1.5l-1.5 1.5l-1.5 -1.5zM1892.1 1204.6l1.5 1.5l-1.5 1.5l-1.5 -1.5zM1842.7 1227.8l1.5 1.5l-1.5 1.5l-1.5 -1.5zM1822.7 1168.0l1.5 1.5l-1.5 1.5l-1.5 -1.5zM1866.8 1243.4l1.5 1.5l-1.5 1.5l-1.5 -1.5zM1850.1 1153.2l1.5 1.5l-1.5 1.5l-1.5 -1.5zM1856.1 1154.5l1.5 1.5l-1.5 1.5l-1.5 -1.5zM1878.3 1208.1l1.5 1.5l-1.5 1.5l-1.5 -1.5zM1856.6 1191.2l1.5 1.5l-1.5 1.5l-1.5 -1.5zM1910.7 1203.6l1.5 1.5l-1.5 1.5l-1.5 -1.5zM1882.7 1209.7l1.5 1.5l-1.5 1.5l-1.5 -1.5zM1901.0 1192.3l1.5 1.5l-1.5 1.5l-1.5 -1.5zM1866.7 1241.9l1.5 1.5l-1.5 1.5l-1.5 -1.5zM1894.7 1163.4l1.5 1.5l-1.5 1.5l-1.5 -1.5zM1917.6 1194.9l1.5 1.5l-1.5 1.5l-1.5 -1.5zM1904.4 1153.5l1.5 1.5l-1.5 1.5l-1.5 -1.5zM1861.9 1189.4l1.5 1.5l-1.5 1.5l-1.5 -1.5zM1884.4 1182.7l1.5 1.5l-1.5 1.5l-1.5 -1.5zM1883.7 1202.3l1.5 1.5l-1.5 1.5l-1.5 -1.5zM1869.4 1201.4l1.5 1.5l-1.5 1.5l-1.5 -1.5zM1856.0 1204.9l1.5 1.5l-1.5 1.5l-1.5 -1.5zM1868.8 1189.0l1.5 1.5l-1.5 1.5l-1.5 -1.5zM1884.6 1210.1l1.5 1.5l-1.5 1.5l-1.5 -1.5zM1873.1 1208.8l1.5 1.5l-1.5 1.5l-1.5 -1.5zM1893.9 1193.9l1.5 1.5l-1.5 1.5l-1.5 -1.5zM1842.2 1171.5l1.5 1.5l-1.5 1.5l-1.5 -1.5zM1866.1 1190.4l1.5 1.5l-1.5 1.5l-1.5 -1.5zM1913.7 1157.4l1.5 1.5l-1.5 1.5l-1.5 -1.5zM1824.9 1230.5l1.5 1.5l-1.5 1.5l-1.5 -1.5zM1904.1 1173.1l1.5 1.5l-1.5 1.5l-1.5 -1.5zM1877.5 1166.8l1.5 1.5l-1.5 1.5l-1.5 -1.5zM1846.5 1196.8l1.5 1.5l-1.5 1.5l-1.5 -1.5zM1870.1 1211.4l1.5 1.5l-1.5 1.5l-1.5 -1.5zM1891.5 1175.0l1.5 1.5l-1.5 1.5l-1.5 -1.5zM1884.6 1185.6l1.5 1.5l-1.5 1.5l-1.5 -1.5zM1857.2 1159.0l1.5 1.5l-1.5 1.5l-1.5 -1.5zM1874.9 1235.3l1.5 1.5l-1.5 1.5l-1.5 -1.5zM1886.1 1195.6l1.5 1.5l-1.5 1.5l-1.5 -1.5zM1873.0 1204.5l1.5 1.5l-1.5 1.5l-1.5 -1.5zM1877.8 1182.1l1.5 1.5l-1.5 1.5l-1.5 -1.5zM1885.6 1173.0l1.5 1.5l-1.5 1.5l-1.5 -1.5zM1884.6 1202.6l1.5 1.5l-1.5 1.5l-1.5 -1.5zM1873.7 1225.0l1.5 1.5l-1.5 1.5l-1.5 -1.5zM1874.2 1224.9l1.5 1.5l-1.5 1.5l-1.5 -1.5zM1861.1 1214.3l1.5 1.5l-1.5 1.5l-1.5 -1.5zM1865.4 1203.6l1.5 1.5l-1.5 1.5l-1.5 -1.5zM1899.3 1236.1l1.5 1.5l-1.5 1.5l-1.5 -1.5zM1878.5 1198.6l1.5 1.5l-1.5 1.5l-1.5 -1.5zM1851.6 1232.5l1.5 1.5l-1.5 1.5l-1.5 -1.5zM1906.2 1162.0l1.5 1.5l-1.5 1.5l-1.5 -1.5zM1922.8 1139.9l1.5 1.5l-1.5 1.5l-1.5 -1.5zM1910.8 1155.9l1.5 1.5l-1.5 1.5l-1.5 -1.5zM1878.6 1185.9l1.5 1.5l-1.5 1.5l-1.5 -1.5zM1939.3 1188.4l1.5 1.5l-1.5 1.5l-1.5 -1.5zM1870.3 1161.4l1.5 1.5l-1.5 1.5l-1.5 -1.5zM1857.2 1200.2l1.5 1.5l-1.5 1.5l-1.5 -1.5zM1893.5 1198.3l1.5 1.5l-1.5 1.5l-1.5 -1.5zM1891.0 1205.0l1.5 1.5l-1.5 1.5l-1.5 -1.5zM1884.7 1144.9l1.5 1.5l-1.5 1.5l-1.5 -1.5zM1835.4 1191.5l1.5 1.5l-1.5 1.5l-1.5 -1.5zM1857.3 1183.8l1.5 1.5l-1.5 1.5l-1.5 -1.5zM1862.3 1214.7l1.5 1.5l-1.5 1.5l-1.5 -1.5zM1882.5 1188.8l1.5 1.5l-1.5 1.5l-1.5 -1.5zM1882.7 1249.3l1.5 1.5l-1.5 1.5l-1.5 -1.5zM1859.2 1180.7l1.5 1.5l-1.5 1.5l-1.5 -1.5zM1860.5 1201.8l1.5 1.5l-1.5 1.5l-1.5 -1.5zM1875.9 1173.1l1.5 1.5l-1.5 1.5l-1.5 -1.5zM1877.4 1248.5l1.5 1.5l-1.5 1.5l-1.5 -1.5zM1866.5 1184.1l1.5 1.5l-1.5 1.5l-1.5 -1.5zM1884.1 1184.4l1.5 1.5l-1.5 1.5l-1.5 -1.5zM1880.7 1187.9l1.5 1.5l-1.5 1.5l-1.5 -1.5zM1855.9 1222.0l1.5 1.5l-1.5 1.5l-1.5 -1.5zM1863.0 1201.2l1.5 1.5l-1.5 1.5l-1.5 -1.5zM1883.9 1193.9l1.5 1.5l-1.5 1.5l-1.5 -1.5zM1865.1 1194.5l1.5 1.5l-1.5 1.5l-1.5 -1.5zM1863.5 1187.0l1.5 1.5l-1.5 1.5l-1.5 -1.5zM1865.6 1204.8l1.5 1.5l-1.5 1.5l-1.5 -1.5zM1867.8 1188.6l1.5 1.5l-1.5 1.5l-1.5 -1.5zM1868.8 1205.3l1.5 1.5l-1.5 1.5l-1.5 -1.5zM1911.1 1239.2l1.5 1.5l-1.5 1.5l-1.5 -1.5zM1883.6 1182.9l1.5 1.5l-1.5 1.5l-1.5 -1.5zM1848.5 1188.1l1.5 1.5l-1.5 1.5l-1.5 -1.5zM1864.1 1215.4l1.5 1.5l-1.5 1.5l-1.5 -1.5zM1864.0 1189.3l1.5 1.5l-1.5 1.5l-1.5 -1.5zM1892.2 1215.1l1.5 1.5l-1.5 1.5l-1.5 -1.5zM1875.0 1198.3l1.5 1.5l-1.5 1.5l-1.5 -1.5zM1921.6 1229.9l1.5 1.5l-1.5 1.5l-1.5 -1.5zM1894.3 1178.9l1.5 1.5l-1.5 1.5l-1.5 -1.5zM1891.1 1212.3l1.5 1.5l-1.5 1.5l-1.5 -1.5zM1865.3 1190.2l1.5 1.5l-1.5 1.5l-1.5 -1.5zM1875.2 1182.2l1.5 1.5l-1.5 1.5l-1.5 -1.5zM1874.5 1175.0l1.5 1.5l-1.5 1.5l-1.5 -1.5zM1879.7 1209.9l1.5 1.5l-1.5 1.5l-1.5 -1.5zM1913.5 1178.3l1.5 1.5l-1.5 1.5l-1.5 -1.5zM1870.8 1230.3l1.5 1.5l-1.5 1.5l-1.5 -1.5zM1880.2 1169.2l1.5 1.5l-1.5 1.5l-1.5 -1.5zM1850.7 1202.3l1.5 1.5l-1.5 1.5l-1.5 -1.5zM1866.6 1194.4l1.5 1.5l-1.5 1.5l-1.5 -1.5zM1893.3 1189.8l1.5 1.5l-1.5 1.5l-1.5 -1.5zM1884.0 1204.4l1.5 1.5l-1.5 1.5l-1.5 -1.5zM1888.0 1178.5l1.5 1.5l-1.5 1.5l-1.5 -1.5zM1889.2 1212.2l1.5 1.5l-1.5 1.5l-1.5 -1.5zM1893.7 1181.7l1.5 1.5l-1.5 1.5l-1.5 -1.5zM1892.7 1242.1l1.5 1.5l-1.5 1.5l-1.5 -1.5zM1876.2 1220.1l1.5 1.5l-1.5 1.5l-1.5 -1.5zM1884.3 1175.5l1.5 1.5l-1.5 1.5l-1.5 -1.5zM1895.5 1180.5l1.5 1.5l-1.5 1.5l-1.5 -1.5zM1878.3 1230.7l1.5 1.5l-1.5 1.5l-1.5 -1.5zM1869.0 1145.1l1.5 1.5l-1.5 1.5l-1.5 -1.5zM1854.9 1183.3l1.5 1.5l-1.5 1.5l-1.5 -1.5zM1874.2 1188.3l1.5 1.5l-1.5 1.5l-1.5 -1.5zM1873.8 1212.2l1.5 1.5l-1.5 1.5l-1.5 -1.5zM1900.1 1202.9l1.5 1.5l-1.5 1.5l-1.5 -1.5zM1854.4 1223.0l1.5 1.5l-1.5 1.5l-1.5 -1.5zM1882.9 1210.3l1.5 1.5l-1.5 1.5l-1.5 -1.5zM1914.7 1212.0l1.5 1.5l-1.5 1.5l-1.5 -1.5zM1862.7 1199.0l1.5 1.5l-1.5 1.5l-1.5 -1.5zM1884.9 1193.6l1.5 1.5l-1.5 1.5l-1.5 -1.5zM1881.6 1214.9l1.5 1.5l-1.5 1.5l-1.5 -1.5zM1886.0 1156.6l1.5 1.5l-1.5 1.5l-1.5 -1.5zM1919.4 1192.3l1.5 1.5l-1.5 1.5l-1.5 -1.5zM1868.5 1190.1l1.5 1.5l-1.5 1.5l-1.5 -1.5zM1809.7 1184.3l1.5 1.5l-1.5 1.5l-1.5 -1.5zM1891.8 1209.3l1.5 1.5l-1.5 1.5l-1.5 -1.5zM1932.3 1206.1l1.5 1.5l-1.5 1.5l-1.5 -1.5zM1905.7 1136.3l1.5 1.5l-1.5 1.5l-1.5 -1.5zM1881.4 1165.4l1.5 1.5l-1.5 1.5l-1.5 -1.5zM1864.7 1213.4l1.5 1.5l-1.5 1.5l-1.5 -1.5zM1866.2 1208.1l1.5 1.5l-1.5 1.5l-1.5 -1.5zM1904.8 1211.5l1.5 1.5l-1.5 1.5l-1.5 -1.5zM1878.5 1187.6l1.5 1.5l-1.5 1.5l-1.5 -1.5zM1884.9 1217.2l1.5 1.5l-1.5 1.5l-1.5 -1.5zM1863.2 1209.4l1.5 1.5l-1.5 1.5l-1.5 -1.5zM1862.4 1204.0l1.5 1.5l-1.5 1.5l-1.5 -1.5zM1876.2 1196.3l1.5 1.5l-1.5 1.5l-1.5 -1.5zM1864.6 1201.7l1.5 1.5l-1.5 1.5l-1.5 -1.5zM1821.8 1195.6l1.5 1.5l-1.5 1.5l-1.5 -1.5zM1892.5 1200.8l1.5 1.5l-1.5 1.5l-1.5 -1.5zM1888.7 1197.8l1.5 1.5l-1.5 1.5l-1.5 -1.5zM1885.3 1176.5l1.5 1.5l-1.5 1.5l-1.5 -1.5zM1833.3 1177.5l1.5 1.5l-1.5 1.5l-1.5 -1.5zM1873.2 1173.2l1.5 1.5l-1.5 1.5l-1.5 -1.5zM1896.4 1178.2l1.5 1.5l-1.5 1.5l-1.5 -1.5zM1861.7 1209.4l1.5 1.5l-1.5 1.5l-1.5 -1.5zM1864.5 1171.9l1.5 1.5l-1.5 1.5l-1.5 -1.5zM1855.4 1252.2l1.5 1.5l-1.5 1.5l-1.5 -1.5zM1871.1 1198.0l1.5 1.5l-1.5 1.5l-1.5 -1.5zM1898.8 1162.1l1.5 1.5l-1.5 1.5l-1.5 -1.5zM1896.3 1192.1l1.5 1.5l-1.5 1.5l-1.5 -1.5zM1870.6 1212.1l1.5 1.5l-1.5 1.5l-1.5 -1.5zM1873.2 1169.2l1.5 1.5l-1.5 1.5l-1.5 -1.5zM1837.0 1199.9l1.5 1.5l-1.5 1.5l-1.5 -1.5zM1878.6 1223.8l1.5 1.5l-1.5 1.5l-1.5 -1.5zM1857.8 1199.0l1.5 1.5l-1.5 1.5l-1.5 -1.5zM1868.6 1192.0l1.5 1.5l-1.5 1.5l-1.5 -1.5zM1880.4 1211.4l1.5 1.5l-1.5 1.5l-1.5 -1.5zM1833.1 1171.4l1.5 1.5l-1.5 1.5l-1.5 -1.5zM1890.5 1218.0l1.5 1.5l-1.5 1.5l-1.5 -1.5zM1885.5 1198.2l1.5 1.5l-1.5 1.5l-1.5 -1.5zM1871.2 1189.6l1.5 1.5l-1.5 1.5l-1.5 -1.5zM1871.3 1202.7l1.5 1.5l-1.5 1.5l-1.5 -1.5zM1902.3 1184.2l1.5 1.5l-1.5 1.5l-1.5 -1.5zM1894.4 1191.1l1.5 1.5l-1.5 1.5l-1.5 -1.5zM1882.2 1206.7l1.5 1.5l-1.5 1.5l-1.5 -1.5zM1892.2 1243.6l1.5 1.5l-1.5 1.5l-1.5 -1.5zM1900.8 1243.2l1.5 1.5l-1.5 1.5l-1.5 -1.5zM1857.1 1173.5l1.5 1.5l-1.5 1.5l-1.5 -1.5zM1878.5 1215.9l1.5 1.5l-1.5 1.5l-1.5 -1.5zM1891.7 1171.3l1.5 1.5l-1.5 1.5l-1.5 -1.5zM1863.8 1185.9l1.5 1.5l-1.5 1.5l-1.5 -1.5zM1899.2 1228.5l1.5 1.5l-1.5 1.5l-1.5 -1.5zM1881.8 1146.8l1.5 1.5l-1.5 1.5l-1.5 -1.5zM1872.7 1204.0l1.5 1.5l-1.5 1.5l-1.5 -1.5zM1909.1 1219.1l1.5 1.5l-1.5 1.5l-1.5 -1.5zM1886.5 1210.7l1.5 1.5l-1.5 1.5l-1.5 -1.5zM1879.0 1168.1l1.5 1.5l-1.5 1.5l-1.5 -1.5zM1896.4 1241.4l1.5 1.5l-1.5 1.5l-1.5 -1.5zM1879.1 1205.3l1.5 1.5l-1.5 1.5l-1.5 -1.5zM1831.9 1234.3l1.5 1.5l-1.5 1.5l-1.5 -1.5zM1886.3 1185.7l1.5 1.5l-1.5 1.5l-1.5 -1.5zM1878.8 1198.3l1.5 1.5l-1.5 1.5l-1.5 -1.5zM1891.1 1177.2l1.5 1.5l-1.5 1.5l-1.5 -1.5zM1894.4 1207.9l1.5 1.5l-1.5 1.5l-1.5 -1.5zM1866.5 1211.8l1.5 1.5l-1.5 1.5l-1.5 -1.5zM1876.0 1212.4l1.5 1.5l-1.5 1.5l-1.5 -1.5zM1859.6 1144.4l1.5 1.5l-1.5 1.5l-1.5 -1.5zM1864.8 1215.6l1.5 1.5l-1.5 1.5l-1.5 -1.5zM1841.2 1166.1l1.5 1.5l-1.5 1.5l-1.5 -1.5zM1892.2 1201.4l1.5 1.5l-1.5 1.5l-1.5 -1.5zM1880.4 1172.8l1.5 1.5l-1.5 1.5l-1.5 -1.5zM1891.1 1202.4l1.5 1.5l-1.5 1.5l-1.5 -1.5zM1893.4 1251.0l1.5 1.5l-1.5 1.5l-1.5 -1.5zM1905.8 1180.6l1.5 1.5l-1.5 1.5l-1.5 -1.5zM1890.3 1169.5l1.5 1.5l-1.5 1.5l-1.5 -1.5zM1888.9 1192.4l1.5 1.5l-1.5 1.5l-1.5 -1.5zM1882.0 1203.2l1.5 1.5l-1.5 1.5l-1.5 -1.5zM1859.4 1211.7l1.5 1.5l-1.5 1.5l-1.5 -1.5zM1876.6 1226.9l1.5 1.5l-1.5 1.5l-1.5 -1.5zM1828.8 1218.1l1.5 1.5l-1.5 1.5l-1.5 -1.5zM1877.9 1197.7l1.5 1.5l-1.5 1.5l-1.5 -1.5zM1855.1 1218.7l1.5 1.5l-1.5 1.5l-1.5 -1.5zM1879.2 1207.3l1.5 1.5l-1.5 1.5l-1.5 -1.5zM1870.6 1211.8l1.5 1.5l-1.5 1.5l-1.5 -1.5zM1867.7 1194.5l1.5 1.5l-1.5 1.5l-1.5 -1.5zM1871.7 1278.6l1.5 1.5l-1.5 1.5l-1.5 -1.5zM1864.6 1184.7l1.5 1.5l-1.5 1.5l-1.5 -1.5zM1840.8 1206.2l1.5 1.5l-1.5 1.5l-1.5 -1.5zM1863.5 1160.1l1.5 1.5l-1.5 1.5l-1.5 -1.5zM1884.9 1130.4l1.5 1.5l-1.5 1.5l-1.5 -1.5zM1860.6 1185.2l1.5 1.5l-1.5 1.5l-1.5 -1.5zM1880.7 1211.9l1.5 1.5l-1.5 1.5l-1.5 -1.5zM1875.6 1194.2l1.5 1.5l-1.5 1.5l-1.5 -1.5zM1866.5 1201.7l1.5 1.5l-1.5 1.5l-1.5 -1.5zM1888.3 1128.0l1.5 1.5l-1.5 1.5l-1.5 -1.5zM1868.7 1190.4l1.5 1.5l-1.5 1.5l-1.5 -1.5zM1911.5 1174.5l1.5 1.5l-1.5 1.5l-1.5 -1.5zM1863.8 1208.3l1.5 1.5l-1.5 1.5l-1.5 -1.5zM1878.7 1201.8l1.5 1.5l-1.5 1.5l-1.5 -1.5zM1846.1 1225.0l1.5 1.5l-1.5 1.5l-1.5 -1.5zM1882.2 1233.3l1.5 1.5l-1.5 1.5l-1.5 -1.5zM1899.2 1198.6l1.5 1.5l-1.5 1.5l-1.5 -1.5zM1850.3 1194.5l1.5 1.5l-1.5 1.5l-1.5 -1.5zM1851.3 1201.9l1.5 1.5l-1.5 1.5l-1.5 -1.5zM1850.4 1230.5l1.5 1.5l-1.5 1.5l-1.5 -1.5zM1856.1 1165.1l1.5 1.5l-1.5 1.5l-1.5 -1.5zM1857.1 1212.7l1.5 1.5l-1.5 1.5l-1.5 -1.5zM1923.2 1248.0l1.5 1.5l-1.5 1.5l-1.5 -1.5zM1856.7 1205.0l1.5 1.5l-1.5 1.5l-1.5 -1.5zM1916.8 1226.2l1.5 1.5l-1.5 1.5l-1.5 -1.5zM1851.6 1170.7l1.5 1.5l-1.5 1.5l-1.5 -1.5zM1908.8 1201.2l1.5 1.5l-1.5 1.5l-1.5 -1.5zM1872.1 1246.2l1.5 1.5l-1.5 1.5l-1.5 -1.5zM1870.1 1217.8l1.5 1.5l-1.5 1.5l-1.5 -1.5zM1898.3 1177.9l1.5 1.5l-1.5 1.5l-1.5 -1.5zM1886.9 1205.5l1.5 1.5l-1.5 1.5l-1.5 -1.5zM1871.4 1219.9l1.5 1.5l-1.5 1.5l-1.5 -1.5zM1878.1 1194.6l1.5 1.5l-1.5 1.5l-1.5 -1.5zM1842.3 1220.4l1.5 1.5l-1.5 1.5l-1.5 -1.5zM1869.6 1200.0l1.5 1.5l-1.5 1.5l-1.5 -1.5zM1899.6 1165.9l1.5 1.5l-1.5 1.5l-1.5 -1.5zM1894.5 1193.8l1.5 1.5l-1.5 1.5l-1.5 -1.5zM1887.6 1172.3l1.5 1.5l-1.5 1.5l-1.5 -1.5zM1843.6 1188.9l1.5 1.5l-1.5 1.5l-1.5 -1.5zM1870.1 1208.4l1.5 1.5l-1.5 1.5l-1.5 -1.5zM1877.6 1197.8l1.5 1.5l-1.5 1.5l-1.5 -1.5zM1876.6 1235.1l1.5 1.5l-1.5 1.5l-1.5 -1.5zM1883.8 1222.3l1.5 1.5l-1.5 1.5l-1.5 -1.5zM1864.3 1173.2l1.5 1.5l-1.5 1.5l-1.5 -1.5zM1846.2 1148.1l1.5 1.5l-1.5 1.5l-1.5 -1.5zM1865.9 1187.6l1.5 1.5l-1.5 1.5l-1.5 -1.5zM1890.2 1173.0l1.5 1.5l-1.5 1.5l-1.5 -1.5zM1853.1 1219.4l1.5 1.5l-1.5 1.5l-1.5 -1.5zM1875.8 1200.1l1.5 1.5l-1.5 1.5l-1.5 -1.5zM1856.4 1214.3l1.5 1.5l-1.5 1.5l-1.5 -1.5zM1864.8 1227.0l1.5 1.5l-1.5 1.5l-1.5 -1.5zM1907.0 1223.7l1.5 1.5l-1.5 1.5l-1.5 -1.5zM1872.3 1210.6l1.5 1.5l-1.5 1.5l-1.5 -1.5zM1869.9 1226.3l1.5 1.5l-1.5 1.5l-1.5 -1.5zM1879.4 1140.5l1.5 1.5l-1.5 1.5l-1.5 -1.5zM1888.9 1204.9l1.5 1.5l-1.5 1.5l-1.5 -1.5zM1880.9 1217.7l1.5 1.5l-1.5 1.5l-1.5 -1.5zM1857.7 1180.9l1.5 1.5l-1.5 1.5l-1.5 -1.5zM1858.3 1176.6l1.5 1.5l-1.5 1.5l-1.5 -1.5zM1859.7 1198.8l1.5 1.5l-1.5 1.5l-1.5 -1.5zM1854.0 1180.0l1.5 1.5l-1.5 1.5l-1.5 -1.5zM1843.3 1209.8l1.5 1.5l-1.5 1.5l-1.5 -1.5zM1875.0 1221.1l1.5 1.5l-1.5 1.5l-1.5 -1.5zM1895.3 1171.6l1.5 1.5l-1.5 1.5l-1.5 -1.5zM1858.0 1210.9l1.5 1.5l-1.5 1.5l-1.5 -1.5zM1879.3 1198.9l1.5 1.5l-1.5 1.5l-1.5 -1.5zM1889.1 1185.0l1.5 1.5l-1.5 1.5l-1.5 -1.5zM1838.3 1142.9l1.5 1.5l-1.5 1.5l-1.5 -1.5zM1889.7 1190.1l1.5 1.5l-1.5 1.5l-1.5 -1.5zM1880.8 1235.1l1.5 1.5l-1.5 1.5l-1.5 -1.5zM1897.4 1188.8l1.5 1.5l-1.5 1.5l-1.5 -1.5zM1882.7 1214.4l1.5 1.5l-1.5 1.5l-1.5 -1.5zM1893.3 1181.9l1.5 1.5l-1.5 1.5l-1.5 -1.5zM1901.6 1207.7l1.5 1.5l-1.5 1.5l-1.5 -1.5zM1843.5 1127.3l1.5 1.5l-1.5 1.5l-1.5 -1.5zM1867.3 1225.4l1.5 1.5l-1.5 1.5l-1.5 -1.5zM1872.9 1177.7l1.5 1.5l-1.5 1.5l-1.5 -1.5zM1858.8 1196.9l1.5 1.5l-1.5 1.5l-1.5 -1.5zM1829.9 1183.6l1.5 1.5l-1.5 1.5l-1.5 -1.5zM1898.6 1168.4l1.5 1.5l-1.5 1.5l-1.5 -1.5zM1815.2 1142.2l1.5 1.5l-1.5 1.5l-1.5 -1.5zM1868.7 1206.0l1.5 1.5l-1.5 1.5l-1.5 -1.5zM1864.8 1188.8l1.5 1.5l-1.5 1.5l-1.5 -1.5zM1846.0 1176.5l1.5 1.5l-1.5 1.5l-1.5 -1.5zM1843.7 1226.2l1.5 1.5l-1.5 1.5l-1.5 -1.5zM1867.7 1235.4l1.5 1.5l-1.5 1.5l-1.5 -1.5zM1873.3 1177.0l1.5 1.5l-1.5 1.5l-1.5 -1.5zM1863.2 1169.2l1.5 1.5l-1.5 1.5l-1.5 -1.5zM1880.4 1215.6l1.5 1.5l-1.5 1.5l-1.5 -1.5zM1879.8 1142.5l1.5 1.5l-1.5 1.5l-1.5 -1.5zM1851.9 1208.3l1.5 1.5l-1.5 1.5l-1.5 -1.5zM1853.6 1203.1l1.5 1.5l-1.5 1.5l-1.5 -1.5zM1883.1 1209.3l1.5 1.5l-1.5 1.5l-1.5 -1.5zM1881.9 1190.9l1.5 1.5l-1.5 1.5l-1.5 -1.5zM1890.2 1177.3l1.5 1.5l-1.5 1.5l-1.5 -1.5zM1839.8 1229.1l1.5 1.5l-1.5 1.5l-1.5 -1.5zM1862.4 1212.8l1.5 1.5l-1.5 1.5l-1.5 -1.5zM1877.2 1180.7l1.5 1.5l-1.5 1.5l-1.5 -1.5zM1845.3 1221.1l1.5 1.5l-1.5 1.5l-1.5 -1.5zM1869.9 1168.5l1.5 1.5l-1.5 1.5l-1.5 -1.5zM1846.2 1222.9l1.5 1.5l-1.5 1.5l-1.5 -1.5zM1830.4 1216.4l1.5 1.5l-1.5 1.5l-1.5 -1.5zM1913.2 1206.0l1.5 1.5l-1.5 1.5l-1.5 -1.5zM1880.1 1182.1l1.5 1.5l-1.5 1.5l-1.5 -1.5zM1889.2 1192.4l1.5 1.5l-1.5 1.5l-1.5 -1.5zM1844.1 1200.6l1.5 1.5l-1.5 1.5l-1.5 -1.5zM1878.8 1186.4l1.5 1.5l-1.5 1.5l-1.5 -1.5zM1868.1 1206.0l1.5 1.5l-1.5 1.5l-1.5 -1.5zM1878.6 1223.3l1.5 1.5l-1.5 1.5l-1.5 -1.5zM1862.7 1192.0l1.5 1.5l-1.5 1.5l-1.5 -1.5zM1882.9 1216.5l1.5 1.5l-1.5 1.5l-1.5 -1.5zM1843.1 1224.0l1.5 1.5l-1.5 1.5l-1.5 -1.5zM1910.7 1188.4l1.5 1.5l-1.5 1.5l-1.5 -1.5zM1882.6 1157.4l1.5 1.5l-1.5 1.5l-1.5 -1.5zM1917.1 1198.8l1.5 1.5l-1.5 1.5l-1.5 -1.5zM1878.3 1191.5l1.5 1.5l-1.5 1.5l-1.5 -1.5zM1893.5 1212.6l1.5 1.5l-1.5 1.5l-1.5 -1.5zM1857.4 1180.6l1.5 1.5l-1.5 1.5l-1.5 -1.5zM1908.7 1194.1l1.5 1.5l-1.5 1.5l-1.5 -1.5zM1859.2 1233.8l1.5 1.5l-1.5 1.5l-1.5 -1.5zM1879.7 1168.5l1.5 1.5l-1.5 1.5l-1.5 -1.5zM1902.8 1171.4l1.5 1.5l-1.5 1.5l-1.5 -1.5zM1892.8 1206.6l1.5 1.5l-1.5 1.5l-1.5 -1.5zM1896.6 1193.3l1.5 1.5l-1.5 1.5l-1.5 -1.5zM1914.1 1190.6l1.5 1.5l-1.5 1.5l-1.5 -1.5zM1884.7 1215.5l1.5 1.5l-1.5 1.5l-1.5 -1.5zM1868.5 1155.3l1.5 1.5l-1.5 1.5l-1.5 -1.5zM1855.4 1222.9l1.5 1.5l-1.5 1.5l-1.5 -1.5zM1870.7 1180.0l1.5 1.5l-1.5 1.5l-1.5 -1.5zM1863.0 1213.7l1.5 1.5l-1.5 1.5l-1.5 -1.5zM1913.6 1186.1l1.5 1.5l-1.5 1.5l-1.5 -1.5zM1912.1 1188.5l1.5 1.5l-1.5 1.5l-1.5 -1.5zM1855.4 1275.0l1.5 1.5l-1.5 1.5l-1.5 -1.5zM1868.8 1189.7l1.5 1.5l-1.5 1.5l-1.5 -1.5zM1864.0 1182.8l1.5 1.5l-1.5 1.5l-1.5 -1.5zM1854.0 1253.0l1.5 1.5l-1.5 1.5l-1.5 -1.5zM1908.4 1164.9l1.5 1.5l-1.5 1.5l-1.5 -1.5zM1892.9 1216.6l1.5 1.5l-1.5 1.5l-1.5 -1.5zM1848.8 1170.5l1.5 1.5l-1.5 1.5l-1.5 -1.5zM1895.0 1198.9l1.5 1.5l-1.5 1.5l-1.5 -1.5zM1878.2 1194.2l1.5 1.5l-1.5 1.5l-1.5 -1.5zM1884.2 1167.0l1.5 1.5l-1.5 1.5l-1.5 -1.5zM1850.5 1178.3l1.5 1.5l-1.5 1.5l-1.5 -1.5zM1918.9 1180.9l1.5 1.5l-1.5 1.5l-1.5 -1.5zM1901.2 1139.9l1.5 1.5l-1.5 1.5l-1.5 -1.5zM1889.1 1185.9l1.5 1.5l-1.5 1.5l-1.5 -1.5zM1854.9 1193.0l1.5 1.5l-1.5 1.5l-1.5 -1.5zM1873.4 1162.0l1.5 1.5l-1.5 1.5l-1.5 -1.5zM1875.5 1160.3l1.5 1.5l-1.5 1.5l-1.5 -1.5zM1902.7 1208.9l1.5 1.5l-1.5 1.5l-1.5 -1.5zM1884.0 1170.1l1.5 1.5l-1.5 1.5l-1.5 -1.5zM1896.2 1187.4l1.5 1.5l-1.5 1.5l-1.5 -1.5zM1881.7 1183.7l1.5 1.5l-1.5 1.5l-1.5 -1.5zM1877.8 1215.4l1.5 1.5l-1.5 1.5l-1.5 -1.5zM1886.0 1173.8l1.5 1.5l-1.5 1.5l-1.5 -1.5zM1887.1 1196.6l1.5 1.5l-1.5 1.5l-1.5 -1.5zM1894.1 1216.8l1.5 1.5l-1.5 1.5l-1.5 -1.5zM1880.6 1240.1l1.5 1.5l-1.5 1.5l-1.5 -1.5zM1894.9 1221.3l1.5 1.5l-1.5 1.5l-1.5 -1.5zM1884.7 1201.0l1.5 1.5l-1.5 1.5l-1.5 -1.5zM1885.7 1229.8l1.5 1.5l-1.5 1.5l-1.5 -1.5zM1907.4 1211.0l1.5 1.5l-1.5 1.5l-1.5 -1.5zM1887.1 1233.5l1.5 1.5l-1.5 1.5l-1.5 -1.5zM1849.2 1191.1l1.5 1.5l-1.5 1.5l-1.5 -1.5zM1848.4 1198.1l1.5 1.5l-1.5 1.5l-1.5 -1.5zM1829.5 1149.7l1.5 1.5l-1.5 1.5l-1.5 -1.5zM1886.8 1238.4l1.5 1.5l-1.5 1.5l-1.5 -1.5zM1854.3 1180.9l1.5 1.5l-1.5 1.5l-1.5 -1.5zM1900.6 1209.4l1.5 1.5l-1.5 1.5l-1.5 -1.5zM1875.3 1243.3l1.5 1.5l-1.5 1.5l-1.5 -1.5zM1888.8 1232.7l1.5 1.5l-1.5 1.5l-1.5 -1.5zM1874.7 1201.8l1.5 1.5l-1.5 1.5l-1.5 -1.5zM1874.8 1219.6l1.5 1.5l-1.5 1.5l-1.5 -1.5zM1875.1 1212.5l1.5 1.5l-1.5 1.5l-1.5 -1.5zM1903.5 1191.8l1.5 1.5l-1.5 1.5l-1.5 -1.5zM1901.3 1178.1l1.5 1.5l-1.5 1.5l-1.5 -1.5zM1908.0 1184.2l1.5 1.5l-1.5 1.5l-1.5 -1.5zM1844.6 1185.8l1.5 1.5l-1.5 1.5l-1.5 -1.5zM1885.6 1214.4l1.5 1.5l-1.5 1.5l-1.5 -1.5zM1880.4 1177.9l1.5 1.5l-1.5 1.5l-1.5 -1.5zM1903.3 1174.6l1.5 1.5l-1.5 1.5l-1.5 -1.5zM1834.2 1211.7l1.5 1.5l-1.5 1.5l-1.5 -1.5zM1869.2 1158.4l1.5 1.5l-1.5 1.5l-1.5 -1.5zM1873.5 1187.5l1.5 1.5l-1.5 1.5l-1.5 -1.5zM1914.1 1189.8l1.5 1.5l-1.5 1.5l-1.5 -1.5zM1866.2 1170.2l1.5 1.5l-1.5 1.5l-1.5 -1.5zM1895.7 1187.8l1.5 1.5l-1.5 1.5l-1.5 -1.5zM1835.7 1173.7l1.5 1.5l-1.5 1.5l-1.5 -1.5zM1881.1 1170.5l1.5 1.5l-1.5 1.5l-1.5 -1.5zM1891.8 1173.0l1.5 1.5l-1.5 1.5l-1.5 -1.5zM1863.8 1207.4l1.5 1.5l-1.5 1.5l-1.5 -1.5zM1880.9 1189.4l1.5 1.5l-1.5 1.5l-1.5 -1.5zM1888.7 1212.0l1.5 1.5l-1.5 1.5l-1.5 -1.5zM1857.4 1190.9l1.5 1.5l-1.5 1.5l-1.5 -1.5zM1882.2 1213.0l1.5 1.5l-1.5 1.5l-1.5 -1.5zM1888.5 1174.1l1.5 1.5l-1.5 1.5l-1.5 -1.5zM1855.9 1187.9l1.5 1.5l-1.5 1.5l-1.5 -1.5zM1897.1 1189.6l1.5 1.5l-1.5 1.5l-1.5 -1.5zM1843.9 1119.5l1.5 1.5l-1.5 1.5l-1.5 -1.5zM1877.6 1207.4l1.5 1.5l-1.5 1.5l-1.5 -1.5zM1865.9 1213.1l1.5 1.5l-1.5 1.5l-1.5 -1.5zM1844.0 1165.1l1.5 1.5l-1.5 1.5l-1.5 -1.5zM1876.6 1166.1l1.5 1.5l-1.5 1.5l-1.5 -1.5zM1894.3 1201.4l1.5 1.5l-1.5 1.5l-1.5 -1.5zM1934.5 1196.1l1.5 1.5l-1.5 1.5l-1.5 -1.5zM1875.6 1150.4l1.5 1.5l-1.5 1.5l-1.5 -1.5zM1900.8 1215.0l1.5 1.5l-1.5 1.5l-1.5 -1.5zM1872.1 1155.7l1.5 1.5l-1.5 1.5l-1.5 -1.5zM1887.1 1208.8l1.5 1.5l-1.5 1.5l-1.5 -1.5zM1896.6 1229.1l1.5 1.5l-1.5 1.5l-1.5 -1.5zM1897.1 1216.9l1.5 1.5l-1.5 1.5l-1.5 -1.5zM1854.5 1173.4l1.5 1.5l-1.5 1.5l-1.5 -1.5zM1872.1 1202.3l1.5 1.5l-1.5 1.5l-1.5 -1.5zM1886.4 1180.7l1.5 1.5l-1.5 1.5l-1.5 -1.5zM1863.6 1218.5l1.5 1.5l-1.5 1.5l-1.5 -1.5zM1872.9 1192.7l1.5 1.5l-1.5 1.5l-1.5 -1.5zM1921.1 1188.8l1.5 1.5l-1.5 1.5l-1.5 -1.5zM1896.2 1217.4l1.5 1.5l-1.5 1.5l-1.5 -1.5zM1884.4 1209.8l1.5 1.5l-1.5 1.5l-1.5 -1.5zM1849.4 1161.9l1.5 1.5l-1.5 1.5l-1.5 -1.5zM1870.7 1163.8l1.5 1.5l-1.5 1.5l-1.5 -1.5zM1850.6 1196.8l1.5 1.5l-1.5 1.5l-1.5 -1.5zM1917.5 1190.4l1.5 1.5l-1.5 1.5l-1.5 -1.5zM1887.4 1223.3l1.5 1.5l-1.5 1.5l-1.5 -1.5zM1882.6 1205.7l1.5 1.5l-1.5 1.5l-1.5 -1.5zM1846.3 1207.6l1.5 1.5l-1.5 1.5l-1.5 -1.5zM1910.2 1200.2l1.5 1.5l-1.5 1.5l-1.5 -1.5zM1888.7 1194.4l1.5 1.5l-1.5 1.5l-1.5 -1.5zM1856.3 1256.0l1.5 1.5l-1.5 1.5l-1.5 -1.5zM1890.2 1151.9l1.5 1.5l-1.5 1.5l-1.5 -1.5zM1886.6 1195.0l1.5 1.5l-1.5 1.5l-1.5 -1.5zM1908.4 1164.5l1.5 1.5l-1.5 1.5l-1.5 -1.5zM1876.9 1244.6l1.5 1.5l-1.5 1.5l-1.5 -1.5zM1880.8 1186.0l1.5 1.5l-1.5 1.5l-1.5 -1.5zM1896.9 1224.5l1.5 1.5l-1.5 1.5l-1.5 -1.5zM1898.0 1190.6l1.5 1.5l-1.5 1.5l-1.5 -1.5zM1856.1 1224.9l1.5 1.5l-1.5 1.5l-1.5 -1.5zM1876.8 1216.9l1.5 1.5l-1.5 1.5l-1.5 -1.5zM1884.7 1222.0l1.5 1.5l-1.5 1.5l-1.5 -1.5zM1886.1 1252.1l1.5 1.5l-1.5 1.5l-1.5 -1.5zM1886.3 1192.0l1.5 1.5l-1.5 1.5l-1.5 -1.5zM1858.7 1196.4l1.5 1.5l-1.5 1.5l-1.5 -1.5zM1866.9 1198.0l1.5 1.5l-1.5 1.5l-1.5 -1.5zM1873.2 1183.1l1.5 1.5l-1.5 1.5l-1.5 -1.5zM1862.8 1181.3l1.5 1.5l-1.5 1.5l-1.5 -1.5zM1825.6 1193.5l1.5 1.5l-1.5 1.5l-1.5 -1.5zM1873.4 1205.0l1.5 1.5l-1.5 1.5l-1.5 -1.5zM1866.5 1206.4l1.5 1.5l-1.5 1.5l-1.5 -1.5zM1897.0 1180.8l1.5 1.5l-1.5 1.5l-1.5 -1.5zM1920.5 1208.4l1.5 1.5l-1.5 1.5l-1.5 -1.5zM1864.3 1246.1l1.5 1.5l-1.5 1.5l-1.5 -1.5zM1884.0 1182.9l1.5 1.5l-1.5 1.5l-1.5 -1.5zM1880.4 1212.3l1.5 1.5l-1.5 1.5l-1.5 -1.5zM1852.4 1185.3l1.5 1.5l-1.5 1.5l-1.5 -1.5zM1908.7 1194.8l1.5 1.5l-1.5 1.5l-1.5 -1.5zM1894.0 1214.7l1.5 1.5l-1.5 1.5l-1.5 -1.5zM1859.9 1249.3l1.5 1.5l-1.5 1.5l-1.5 -1.5zM1898.4 1217.2l1.5 1.5l-1.5 1.5l-1.5 -1.5zM1857.9 1209.9l1.5 1.5l-1.5 1.5l-1.5 -1.5zM1854.6 1188.9l1.5 1.5l-1.5 1.5l-1.5 -1.5zM1860.3 1212.6l1.5 1.5l-1.5 1.5l-1.5 -1.5zM1888.4 1213.1l1.5 1.5l-1.5 1.5l-1.5 -1.5zM1840.9 1179.0l1.5 1.5l-1.5 1.5l-1.5 -1.5zM1870.9 1233.3l1.5 1.5l-1.5 1.5l-1.5 -1.5zM1852.1 1182.7l1.5 1.5l-1.5 1.5l-1.5 -1.5zM1890.5 1170.5l1.5 1.5l-1.5 1.5l-1.5 -1.5zM1907.6 1198.6l1.5 1.5l-1.5 1.5l-1.5 -1.5zM1874.8 1189.3l1.5 1.5l-1.5 1.5l-1.5 -1.5zM1864.2 1187.9l1.5 1.5l-1.5 1.5l-1.5 -1.5zM1890.5 1236.8l1.5 1.5l-1.5 1.5l-1.5 -1.5zM1891.0 1214.3l1.5 1.5l-1.5 1.5l-1.5 -1.5zM1853.8 1225.4l1.5 1.5l-1.5 1.5l-1.5 -1.5zM1883.3 1170.0l1.5 1.5l-1.5 1.5l-1.5 -1.5zM1886.0 1158.3l1.5 1.5l-1.5 1.5l-1.5 -1.5zM1880.9 1222.5l1.5 1.5l-1.5 1.5l-1.5 -1.5zM1884.7 1241.1l1.5 1.5l-1.5 1.5l-1.5 -1.5zM1911.1 1195.8l1.5 1.5l-1.5 1.5l-1.5 -1.5zM1869.2 1220.4l1.5 1.5l-1.5 1.5l-1.5 -1.5zM1843.9 1204.3l1.5 1.5l-1.5 1.5l-1.5 -1.5zM1841.5 1254.4l1.5 1.5l-1.5 1.5l-1.5 -1.5zM1896.3 1208.2l1.5 1.5l-1.5 1.5l-1.5 -1.5zM1848.3 1256.1l1.5 1.5l-1.5 1.5l-1.5 -1.5zM1836.3 1194.9l1.5 1.5l-1.5 1.5l-1.5 -1.5zM1824.5 1188.9l1.5 1.5l-1.5 1.5l-1.5 -1.5zM1889.6 1165.2l1.5 1.5l-1.5 1.5l-1.5 -1.5zM1895.7 1219.0l1.5 1.5l-1.5 1.5l-1.5 -1.5zM1878.7 1200.9l1.5 1.5l-1.5 1.5l-1.5 -1.5zM1882.6 1172.9l1.5 1.5l-1.5 1.5l-1.5 -1.5zM1875.4 1209.5l1.5 1.5l-1.5 1.5l-1.5 -1.5zM1896.5 1185.7l1.5 1.5l-1.5 1.5l-1.5 -1.5zM1865.9 1174.8l1.5 1.5l-1.5 1.5l-1.5 -1.5zM1889.4 1165.6l1.5 1.5l-1.5 1.5l-1.5 -1.5zM1870.6 1183.8l1.5 1.5l-1.5 1.5l-1.5 -1.5zM1849.0 1185.2l1.5 1.5l-1.5 1.5l-1.5 -1.5zM1891.6 1200.0l1.5 1.5l-1.5 1.5l-1.5 -1.5zM1849.6 1138.4l1.5 1.5l-1.5 1.5l-1.5 -1.5zM1890.3 1160.1l1.5 1.5l-1.5 1.5l-1.5 -1.5zM1871.6 1198.9l1.5 1.5l-1.5 1.5l-1.5 -1.5zM1885.1 1185.5l1.5 1.5l-1.5 1.5l-1.5 -1.5zM1866.7 1191.3l1.5 1.5l-1.5 1.5l-1.5 -1.5zM1876.8 1170.0l1.5 1.5l-1.5 1.5l-1.5 -1.5zM1845.2 1155.1l1.5 1.5l-1.5 1.5l-1.5 -1.5zM1900.1 1191.9l1.5 1.5l-1.5 1.5l-1.5 -1.5zM1881.9 1185.4l1.5 1.5l-1.5 1.5l-1.5 -1.5zM1865.8 1189.1l1.5 1.5l-1.5 1.5l-1.5 -1.5zM1886.0 1257.3l1.5 1.5l-1.5 1.5l-1.5 -1.5zM1876.7 1194.9l1.5 1.5l-1.5 1.5l-1.5 -1.5zM1877.8 1231.8l1.5 1.5l-1.5 1.5l-1.5 -1.5zM1882.9 1183.3l1.5 1.5l-1.5 1.5l-1.5 -1.5zM1870.9 1163.1l1.5 1.5l-1.5 1.5l-1.5 -1.5zM1885.9 1167.4l1.5 1.5l-1.5 1.5l-1.5 -1.5zM1899.2 1159.9l1.5 1.5l-1.5 1.5l-1.5 -1.5zM1846.7 1183.6l1.5 1.5l-1.5 1.5l-1.5 -1.5zM1879.0 1207.3l1.5 1.5l-1.5 1.5l-1.5 -1.5zM1857.6 1175.8l1.5 1.5l-1.5 1.5l-1.5 -1.5zM1856.3 1176.6l1.5 1.5l-1.5 1.5l-1.5 -1.5zM1882.0 1166.2l1.5 1.5l-1.5 1.5l-1.5 -1.5zM1868.8 1185.2l1.5 1.5l-1.5 1.5l-1.5 -1.5zM1888.0 1162.4l1.5 1.5l-1.5 1.5l-1.5 -1.5zM1898.9 1185.8l1.5 1.5l-1.5 1.5l-1.5 -1.5zM1859.3 1219.6l1.5 1.5l-1.5 1.5l-1.5 -1.5zM1868.6 1186.4l1.5 1.5l-1.5 1.5l-1.5 -1.5zM1903.3 1211.5l1.5 1.5l-1.5 1.5l-1.5 -1.5zM1887.5 1174.1l1.5 1.5l-1.5 1.5l-1.5 -1.5zM1848.1 1189.2l1.5 1.5l-1.5 1.5l-1.5 -1.5zM1888.7 1179.7l1.5 1.5l-1.5 1.5l-1.5 -1.5zM1900.6 1195.9l1.5 1.5l-1.5 1.5l-1.5 -1.5zM1840.2 1229.9l1.5 1.5l-1.5 1.5l-1.5 -1.5zM1875.8 1119.6l1.5 1.5l-1.5 1.5l-1.5 -1.5zM1873.7 1160.2l1.5 1.5l-1.5 1.5l-1.5 -1.5zM1883.7 1206.3l1.5 1.5l-1.5 1.5l-1.5 -1.5zM1882.4 1193.4l1.5 1.5l-1.5 1.5l-1.5 -1.5zM1874.9 1212.5l1.5 1.5l-1.5 1.5l-1.5 -1.5zM1853.3 1149.4l1.5 1.5l-1.5 1.5l-1.5 -1.5zM1875.7 1179.0l1.5 1.5l-1.5 1.5l-1.5 -1.5zM1850.4 1156.0l1.5 1.5l-1.5 1.5l-1.5 -1.5zM1863.1 1189.7l1.5 1.5l-1.5 1.5l-1.5 -1.5zM1870.5 1169.5l1.5 1.5l-1.5 1.5l-1.5 -1.5zM1916.7 1199.3l1.5 1.5l-1.5 1.5l-1.5 -1.5zM1873.2 1156.3l1.5 1.5l-1.5 1.5l-1.5 -1.5zM1860.1 1196.5l1.5 1.5l-1.5 1.5l-1.5 -1.5zM1841.8 1190.2l1.5 1.5l-1.5 1.5l-1.5 -1.5zM1893.1 1234.1l1.5 1.5l-1.5 1.5l-1.5 -1.5zM1841.4 1175.2l1.5 1.5l-1.5 1.5l-1.5 -1.5zM1834.7 1176.4l1.5 1.5l-1.5 1.5l-1.5 -1.5zM1884.9 1182.0l1.5 1.5l-1.5 1.5l-1.5 -1.5zM1898.3 1170.4l1.5 1.5l-1.5 1.5l-1.5 -1.5zM1905.8 1213.1l1.5 1.5l-1.5 1.5l-1.5 -1.5zM1841.2 1215.5l1.5 1.5l-1.5 1.5l-1.5 -1.5zM1882.5 1227.8l1.5 1.5l-1.5 1.5l-1.5 -1.5zM1867.2 1184.9l1.5 1.5l-1.5 1.5l-1.5 -1.5zM1846.4 1185.6l1.5 1.5l-1.5 1.5l-1.5 -1.5zM1859.9 1172.2l1.5 1.5l-1.5 1.5l-1.5 -1.5zM1903.1 1159.4l1.5 1.5l-1.5 1.5l-1.5 -1.5zM1858.8 1179.7l1.5 1.5l-1.5 1.5l-1.5 -1.5zM1863.1 1226.0l1.5 1.5l-1.5 1.5l-1.5 -1.5zM1863.6 1136.4l1.5 1.5l-1.5 1.5l-1.5 -1.5zM1889.7 1195.7l1.5 1.5l-1.5 1.5l-1.5 -1.5zM1874.5 1199.2l1.5 1.5l-1.5 1.5l-1.5 -1.5zM1907.7 1195.5l1.5 1.5l-1.5 1.5l-1.5 -1.5zM1834.7 1147.9l1.5 1.5l-1.5 1.5l-1.5 -1.5zM1881.8 1212.3l1.5 1.5l-1.5 1.5l-1.5 -1.5zM1888.8 1201.2l1.5 1.5l-1.5 1.5l-1.5 -1.5zM1893.8 1211.7l1.5 1.5l-1.5 1.5l-1.5 -1.5zM1882.3 1188.1l1.5 1.5l-1.5 1.5l-1.5 -1.5zM1853.6 1158.8l1.5 1.5l-1.5 1.5l-1.5 -1.5z" fill="none" stroke="#fff" stroke-width="0.9"/></svg>
<div class="t" style="right:796px;top:535.9px;font-size:11.5px;color:#e8e8e8;">70.0</div>
<div class="t" style="right:796px;top:568.1px;font-size:11.5px;color:#e8e8e8;">60.0</div>
<div class="t" style="right:796px;top:600.4px;font-size:11.5px;color:#e8e8e8;">50.0</div>
<div class="t" style="right:796px;top:632.7px;font-size:11.5px;color:#e8e8e8;">40.0</div>
<div class="t" style="right:796px;top:665.0px;font-size:11.5px;color:#e8e8e8;">30.0</div>
<div class="t" style="right:796px;top:697.2px;font-size:11.5px;color:#e8e8e8;">20.0</div>
<div class="t" style="right:796px;top:729.5px;font-size:11.5px;color:#e8e8e8;">10.0</div>
<div class="t" style="right:796px;top:761.8px;font-size:11.5px;color:#e8e8e8;">0.0</div>
<div class="t" style="left:1324.5px;width:1000px;text-align:center;top:532.7px;font-size:11.5px;color:#f0f0f0;">57 10</div>
<div class="t" style="left:1819.5px;top:638.6px;font-size:15.5px;color:#5a5a5a;">-276 Samples</div>
<div class="t" style="left:1292.3px;width:1000px;text-align:center;top:772.6px;font-size:11.5px;color:#e8e8e8;">-400</div>
<div class="t" style="left:1325.4px;width:1000px;text-align:center;top:772.6px;font-size:11.5px;color:#e8e8e8;">0</div>
<div class="t" style="left:1358.7px;width:1000px;text-align:center;top:772.6px;font-size:11.5px;color:#e8e8e8;">400</div>
<div class="t" style="left:1392px;width:1000px;text-align:center;top:772.6px;font-size:11.5px;color:#e8e8e8;">800</div>
<div class="t" style="left:1425.4px;width:1000px;text-align:center;top:772.6px;font-size:11.5px;color:#e8e8e8;">1200</div>
<div class="t" style="left:1368.6px;width:1000px;text-align:center;top:792.3px;font-size:11.5px;color:#e8e8e8;">Samples</div>
<div class="a" style="left:1547px;top:816px;width:413px;height:1px;background:#333;"></div>
<div class="a" style="left:1547px;top:817px;width:413px;height:26px;background:linear-gradient(#06101a 0px,#06101a 1.2px,#2a5a7a 1.2px,#2a5a7a 2.4px,#1c5a8e 3px,#1b5a8c 85%,#3a6a8a 96%,#0a1620);"></div>
<div class="t" style="left:1554.5px;top:823.5px;font-size:16px;color:#dfeaf4;">TII</div>
<svg class="a" style="left:1581.5px;top:828.5px" width="334.5" height="5"><defs><pattern id="dp341" width="4" height="4" patternUnits="userSpaceOnUse"><rect x="0" y="0" width="1.1" height="1.1" fill="#5a98c8"/><rect x="2" y="2" width="1.1" height="1.1" fill="#5a98c8"/></pattern></defs><rect width="334.5" height="5" fill="url(#dp341)"/></svg>
<svg class="a" style="left:1924px;top:825px" width="30" height="12" viewBox="0 0 30 12"><rect x="1.5" y="1.5" width="9" height="9" stroke="#e8eef4" stroke-width="1.2" fill="none"/><rect x="1.5" y="1.5" width="9" height="2.5" fill="#e8eef4"/><path d="M18 1.5 L27 10.5 M27 1.5 L18 10.5" stroke="#e8eef4" stroke-width="1.3"/></svg>
<div class="a" style="left:1553px;top:853.3px;width:185px;height:51.3px;background:#333;border-radius:6px"></div>
<div class="t" style="left:1562.3px;top:848.5px;font-size:13px;color:#f0f0f0;">Flags</div>
<div class="a" style="left:1568.5px;top:874.3px;width:13.0px;height:13.0px;border-radius:50%;background:radial-gradient(circle at 45% 40%,#f4f4f4,#e4e4e4 60%,#bbb)"></div>
<div class="t" style="left:1586px;top:875.8px;font-size:12px;color:#f0f0f0;">Freeze</div>
<div class="a" style="left:1553px;top:924.4px;width:185px;height:115px;background:#333;border-radius:6px"></div>
<div class="t" style="left:1562.3px;top:920.5px;font-size:13px;color:#f0f0f0;">Line Plot</div>
<div class="t" style="left:1574px;top:947.3px;font-size:12px;color:#f0f0f0;">Zoom X</div>
<div class="a" style="left:1569px;top:971px;width:144px;height:2px;background:#dcdcdc;"></div>
<div class="a" style="left:1570px;top:966px;width:12px;height:12px;border-radius:50%;background:radial-gradient(circle at 45% 35%,#f0f0f0,#9a9a9a 70%,#666)"></div>
<div class="t" style="left:1574px;top:987.3px;font-size:12px;color:#f0f0f0;">Offset Y</div>
<div class="a" style="left:1569px;top:1011px;width:144px;height:2px;background:#dcdcdc;"></div>
<div class="a" style="left:1635.5px;top:1006px;width:12px;height:12px;border-radius:50%;background:radial-gradient(circle at 45% 35%,#f0f0f0,#9a9a9a 70%,#666)"></div>
<div class="t" style="left:1749px;top:970px;font-size:11.5px;color:#e8e8e8;transform:rotate(-90deg);transform-origin:0 0">Magnitude (dB)</div>
<div class="t" style="right:766px;top:847.8px;font-size:11.5px;color:#e8e8e8;">0.0</div>
<div class="t" style="right:766px;top:874.1px;font-size:11.5px;color:#e8e8e8;">-10.0</div>
<div class="t" style="right:766px;top:900.4px;font-size:11.5px;color:#e8e8e8;">-20.0</div>
<div class="t" style="right:766px;top:926.7px;font-size:11.5px;color:#e8e8e8;">-30.0</div>
<div class="t" style="right:766px;top:953.0px;font-size:11.5px;color:#e8e8e8;">-40.0</div>
<div class="t" style="right:766px;top:979.3px;font-size:11.5px;color:#e8e8e8;">-50.0</div>
<div class="t" style="left:1318.5px;width:1000px;text-align:center;top:1016.8px;font-size:11.5px;color:#e8e8e8;">-700</div>
<div class="t" style="left:1356px;width:1000px;text-align:center;top:1016.8px;font-size:11.5px;color:#e8e8e8;">-300</div>
<div class="t" style="left:1393px;width:1000px;text-align:center;top:1016.8px;font-size:11.5px;color:#e8e8e8;">100</div>
<div class="t" style="left:1429px;width:1000px;text-align:center;top:1016.8px;font-size:11.5px;color:#e8e8e8;">500</div>
<div class="t" style="left:1383.8px;width:1000px;text-align:center;top:1036.8px;font-size:11.5px;color:#e8e8e8;">TII Subcarrier</div>
<div class="a" style="left:1547.5px;top:1062px;width:5px;height:301px;background:#1b5a8a;"></div>
<div class="a" style="left:1552px;top:1062px;width:406px;height:4px;background:#111;"></div>
<div class="a" style="left:1552.5px;top:1066px;width:405px;height:26px;background:linear-gradient(#06101a 0px,#06101a 1.2px,#2a5a7a 1.2px,#2a5a7a 2.4px,#1c5a8e 3px,#1b5a8c 85%,#3a6a8a 96%,#0a1620);"></div>
<div class="t" style="left:1560.0px;top:1072.5px;font-size:16px;color:#dfeaf4;">Constellation</div>
<svg class="a" style="left:1661.0px;top:1077.5px" width="252.5" height="5"><defs><pattern id="dp371" width="4" height="4" patternUnits="userSpaceOnUse"><rect x="0" y="0" width="1.1" height="1.1" fill="#5a98c8"/><rect x="2" y="2" width="1.1" height="1.1" fill="#5a98c8"/></pattern></defs><rect width="252.5" height="5" fill="url(#dp371)"/></svg>
<svg class="a" style="left:1921.5px;top:1074px" width="30" height="12" viewBox="0 0 30 12"><rect x="1.5" y="1.5" width="9" height="9" stroke="#e8eef4" stroke-width="1.2" fill="none"/><rect x="1.5" y="1.5" width="9" height="2.5" fill="#e8eef4"/><path d="M18 1.5 L27 10.5 M27 1.5 L18 10.5" stroke="#e8eef4" stroke-width="1.3"/></svg>
<div class="a" style="left:1558px;top:1112px;width:150px;height:36px;background:#333;border-radius:6px"></div>
<div class="t" style="left:1567px;top:1107.5px;font-size:13px;color:#f0f0f0;">Type</div>
<div class="a" style="left:1574.2px;top:1127.7px;width:13.0px;height:13.0px;border-radius:50%;background:radial-gradient(circle at 45% 40%,#f4f4f4,#e4e4e4 60%,#bbb)"></div>
<div class="t" style="left:1593px;top:1129.3px;font-size:12px;color:#f0f0f0;">Linear</div>
<div class="a" style="left:1645.3px;top:1127.7px;width:13.0px;height:13.0px;border-radius:50%;background:#eee"></div>
<div class="a" style="left:1648.3px;top:1130.7px;width:7px;height:7px;border-radius:50%;background:#000"></div>
<div class="t" style="left:1664px;top:1129.3px;font-size:12px;color:#f0f0f0;">IQ</div>
<div class="a" style="left:1558px;top:1167.3px;width:150px;height:75px;background:#333;border-radius:6px"></div>
<div class="t" style="left:1567px;top:1163.5px;font-size:13px;color:#f0f0f0;">IQ Plot</div>
<div class="t" style="left:1579px;top:1190.3px;font-size:12px;color:#f0f0f0;">Zoom</div>
<div class="a" style="left:1575px;top:1213.8px;width:118px;height:2px;background:#dcdcdc;"></div>
<div class="a" style="left:1575px;top:1208.8px;width:12px;height:12px;border-radius:50%;background:radial-gradient(circle at 45% 35%,#f0f0f0,#9a9a9a 70%,#666)"></div>
<div class="t" style="left:1739px;top:1211px;font-size:11.5px;color:#e8e8e8;transform:rotate(-90deg);transform-origin:0 0">Q-Data</div>
<div class="t" style="right:781px;top:1096.9px;font-size:11.5px;color:#e8e8e8;">1</div>
<div class="t" style="right:781px;top:1133.7px;font-size:11.5px;color:#e8e8e8;">0.6</div>
<div class="t" style="right:781px;top:1170.5px;font-size:11.5px;color:#e8e8e8;">0.2</div>
<div class="t" style="right:781px;top:1207.4px;font-size:11.5px;color:#e8e8e8;">-0.2</div>
<div class="t" style="right:781px;top:1244.2px;font-size:11.5px;color:#e8e8e8;">-0.6</div>
<div class="t" style="right:781px;top:1281.1px;font-size:11.5px;color:#e8e8e8;">-1</div>
<div class="t" style="left:1299px;width:1000px;text-align:center;top:1292.8px;font-size:11.5px;color:#e8e8e8;">-1</div>
<div class="t" style="left:1329.5px;width:1000px;text-align:center;top:1292.8px;font-size:11.5px;color:#e8e8e8;">-0.6</div>
<div class="t" style="left:1360px;width:1000px;text-align:center;top:1292.8px;font-size:11.5px;color:#e8e8e8;">-0.2</div>
<div class="t" style="left:1390.5px;width:1000px;text-align:center;top:1292.8px;font-size:11.5px;color:#e8e8e8;">0.2</div>
<div class="t" style="left:1421px;width:1000px;text-align:center;top:1292.8px;font-size:11.5px;color:#e8e8e8;">0.6</div>
<div class="t" style="left:1375px;width:1000px;text-align:center;top:1312.9px;font-size:11.5px;color:#e8e8e8;">I-Data</div>
<div class="a" style="left:1552px;top:1337px;width:406px;height:26px;background:#3a3a3a;"></div>
<div class="a" style="left:1553px;top:1338px;width:53px;height:25px;background:#8a8a8a;"></div>
<div class="t" style="left:1079.5px;width:1000px;text-align:center;top:1344.3px;font-size:15px;color:#c8c8c8;">Audio</div>
<div class="a" style="left:1608px;top:1338px;width:69px;height:25px;background:#8a8a8a;"></div>
<div class="t" style="left:1142.5px;width:1000px;text-align:center;top:1344.3px;font-size:15px;color:#c8c8c8;">I/Q Data</div>
<div class="a" style="left:1680px;top:1337px;width:103px;height:26px;background:#0a8a14;"></div>
<div class="t" style="left:1231.5px;width:1000px;text-align:center;top:1344.3px;font-size:15px;color:#eaf6c0;">Constellation</div>
<div class="a" style="left:1547px;top:1364px;width:416px;height:32px;background:#aaaaaa;"></div>
<div class="a" style="left:1552px;top:1363px;width:406px;height:1.3px;background:#151515;"></div>
<div class="a" style="left:1963px;top:502px;width:599px;height:866px;background:#1c1c1c;"></div>
<div class="a" style="left:1963.5px;top:502px;width:598px;height:26px;background:linear-gradient(#06101a 0px,#06101a 1.2px,#2a5a7a 1.2px,#2a5a7a 2.4px,#1c5a8e 3px,#1b5a8c 85%,#3a6a8a 96%,#0a1620);"></div>
<div class="t" style="left:1971.0px;top:508.5px;font-size:16px;color:#dfeaf4;">Map</div>
<svg class="a" style="left:2009.0px;top:513.5px" width="508.5" height="5"><defs><pattern id="dp410" width="4" height="4" patternUnits="userSpaceOnUse"><rect x="0" y="0" width="1.1" height="1.1" fill="#5a98c8"/><rect x="2" y="2" width="1.1" height="1.1" fill="#5a98c8"/></pattern></defs><rect width="508.5" height="5" fill="url(#dp410)"/></svg>
<svg class="a" style="left:2525.5px;top:510px" width="30" height="12" viewBox="0 0 30 12"><rect x="1.5" y="1.5" width="9" height="9" stroke="#e8eef4" stroke-width="1.2" fill="none"/><rect x="1.5" y="1.5" width="9" height="2.5" fill="#e8eef4"/><path d="M18 1.5 L27 10.5 M27 1.5 L18 10.5" stroke="#e8eef4" stroke-width="1.3"/></svg>
<svg class="a" style="left:0;top:0" width="2572" height="1404" viewBox="0 0 2572 1404"><defs><filter id="bl"><feGaussianBlur stdDeviation="25"/></filter><clipPath id="mc"><rect x="1984" y="528" width="546" height="817"/></clipPath></defs><g clip-path="url(#mc)"><rect x="1984" y="528" width="546" height="817" fill="#eef0e0"/><path d="M1984 528 H2440 L2400 674 L2345 740 L2330 846 L2310 875 L2240 900 L2100 900 L1984 880 Z" fill="#f2efe6" opacity="0.6" filter="url(#bl)"/><ellipse cx="2210" cy="1002" rx="7.6" ry="5.7" fill="#c9deb0" opacity="0.75"/><ellipse cx="2269" cy="1036" rx="5.3" ry="5.7" fill="#c9deb0" opacity="0.71"/><ellipse cx="2277" cy="1031" rx="5.3" ry="2.6" fill="#c9deb0" opacity="0.67"/><ellipse cx="2254" cy="1038" rx="3.5" ry="2.8" fill="#c9deb0" opacity="0.82"/><ellipse cx="2262" cy="1021" rx="7.6" ry="2.1" fill="#c9deb0" opacity="0.70"/><ellipse cx="2262" cy="1041" rx="8.1" ry="2.4" fill="#c9deb0" opacity="0.54"/><ellipse cx="2345" cy="1033" rx="4.0" ry="5.8" fill="#c9deb0" opacity="0.67"/><ellipse cx="2248" cy="1020" rx="8.6" ry="4.6" fill="#c9deb0" opacity="0.84"/><ellipse cx="2288" cy="1023" rx="4.5" ry="2.2" fill="#c9deb0" opacity="0.51"/><ellipse cx="2293" cy="1051" rx="6.2" ry="1.5" fill="#c9deb0" opacity="0.72"/><ellipse cx="2241" cy="1064" rx="7.7" ry="3.7" fill="#c9deb0" opacity="0.58"/><ellipse cx="2195" cy="1046" rx="2.4" ry="5.9" fill="#c9deb0" opacity="0.46"/><ellipse cx="2260" cy="976" rx="2.1" ry="5.0" fill="#c9deb0" opacity="0.60"/><ellipse cx="2255" cy="1038" rx="2.3" ry="2.3" fill="#c9deb0" opacity="0.83"/><ellipse cx="2283" cy="1092" rx="8.5" ry="5.7" fill="#c9deb0" opacity="0.59"/><ellipse cx="2229" cy="1072" rx="7.4" ry="2.0" fill="#c9deb0" opacity="0.75"/><ellipse cx="2284" cy="977" rx="2.3" ry="5.8" fill="#c9deb0" opacity="0.49"/><ellipse cx="2229" cy="1078" rx="8.4" ry="3.0" fill="#c9deb0" opacity="0.82"/><ellipse cx="2225" cy="1032" rx="4.2" ry="2.3" fill="#c9deb0" opacity="0.48"/><ellipse cx="2298" cy="1081" rx="9.0" ry="2.2" fill="#c9deb0" opacity="0.47"/><ellipse cx="2312" cy="1037" rx="4.8" ry="2.6" fill="#c9deb0" opacity="0.69"/><ellipse cx="2281" cy="1008" rx="5.0" ry="1.8" fill="#c9deb0" opacity="0.82"/><ellipse cx="2308" cy="1048" rx="7.9" ry="2.1" fill="#c9deb0" opacity="0.74"/><ellipse cx="2316" cy="1026" rx="7.5" ry="2.0" fill="#c9deb0" opacity="0.62"/><ellipse cx="2308" cy="1091" rx="4.1" ry="3.5" fill="#c9deb0" opacity="0.85"/><ellipse cx="2329" cy="968" rx="5.2" ry="3.7" fill="#c9deb0" opacity="0.74"/><ellipse cx="2225" cy="1044" rx="4.8" ry="2.2" fill="#c9deb0" opacity="0.60"/><ellipse cx="2366" cy="1034" rx="6.4" ry="3.7" fill="#c9deb0" opacity="0.59"/><ellipse cx="2288" cy="1054" rx="7.5" ry="5.4" fill="#c9deb0" opacity="0.59"/><ellipse cx="2276" cy="984" rx="6.9" ry="4.5" fill="#c9deb0" opacity="0.75"/><ellipse cx="2217" cy="1079" rx="4.0" ry="3.7" fill="#c9deb0" opacity="0.76"/><ellipse cx="2247" cy="1014" rx="8.6" ry="4.4" fill="#c9deb0" opacity="0.68"/><ellipse cx="2313" cy="1043" rx="3.8" ry="4.5" fill="#c9deb0" opacity="0.64"/><ellipse cx="2285" cy="996" rx="7.6" ry="3.1" fill="#c9deb0" opacity="0.71"/><ellipse cx="2254" cy="978" rx="4.5" ry="5.3" fill="#c9deb0" opacity="0.80"/><ellipse cx="2217" cy="956" rx="8.7" ry="3.8" fill="#c9deb0" opacity="0.66"/><ellipse cx="2300" cy="1094" rx="8.6" ry="3.6" fill="#c9deb0" opacity="0.73"/><ellipse cx="2247" cy="988" rx="3.2" ry="5.0" fill="#c9deb0" opacity="0.68"/><ellipse cx="2238" cy="1010" rx="6.4" ry="5.0" fill="#c9deb0" opacity="0.70"/><ellipse cx="2258" cy="1032" rx="3.1" ry="3.5" fill="#c9deb0" opacity="0.71"/><ellipse cx="2272" cy="1089" rx="6.4" ry="1.7" fill="#c9deb0" opacity="0.64"/><ellipse cx="2262" cy="1051" rx="2.9" ry="2.9" fill="#c9deb0" opacity="0.52"/><ellipse cx="2264" cy="1048" rx="5.3" ry="3.2" fill="#c9deb0" opacity="0.69"/><ellipse cx="2234" cy="1027" rx="8.3" ry="1.5" fill="#c9deb0" opacity="0.61"/><ellipse cx="2252" cy="1073" rx="2.8" ry="5.2" fill="#c9deb0" opacity="0.60"/><ellipse cx="2316" cy="1050" rx="2.7" ry="4.0" fill="#c9deb0" opacity="0.59"/><ellipse cx="2168" cy="1000" rx="7.7" ry="3.4" fill="#c9deb0" opacity="0.78"/><ellipse cx="2235" cy="1015" rx="3.0" ry="4.2" fill="#c9deb0" opacity="0.68"/><ellipse cx="2366" cy="1017" rx="6.3" ry="3.1" fill="#c9deb0" opacity="0.81"/><ellipse cx="2280" cy="1040" rx="6.0" ry="4.3" fill="#c9deb0" opacity="0.51"/><ellipse cx="2199" cy="989" rx="4.6" ry="3.4" fill="#c9deb0" opacity="0.54"/><ellipse cx="2231" cy="1125" rx="4.7" ry="5.8" fill="#c9deb0" opacity="0.82"/><ellipse cx="2233" cy="1026" rx="8.9" ry="3.7" fill="#c9deb0" opacity="0.62"/><ellipse cx="2209" cy="1126" rx="5.4" ry="2.8" fill="#c9deb0" opacity="0.64"/><ellipse cx="2302" cy="1072" rx="5.1" ry="2.8" fill="#c9deb0" opacity="0.76"/><ellipse cx="2263" cy="1035" rx="5.7" ry="2.7" fill="#c9deb0" opacity="0.82"/><ellipse cx="2266" cy="1016" rx="3.9" ry="2.2" fill="#c9deb0" opacity="0.85"/><ellipse cx="2245" cy="1084" rx="5.3" ry="4.4" fill="#c9deb0" opacity="0.69"/><ellipse cx="2259" cy="1023" rx="7.3" ry="2.9" fill="#c9deb0" opacity="0.66"/><ellipse cx="2242" cy="1064" rx="5.7" ry="3.6" fill="#c9deb0" opacity="0.59"/><ellipse cx="2258" cy="996" rx="2.3" ry="2.6" fill="#c9deb0" opacity="0.63"/><ellipse cx="2336" cy="1005" rx="5.8" ry="1.6" fill="#c9deb0" opacity="0.76"/><ellipse cx="2211" cy="1059" rx="7.0" ry="4.3" fill="#c9deb0" opacity="0.64"/><ellipse cx="2295" cy="1023" rx="4.7" ry="5.3" fill="#c9deb0" opacity="0.53"/><ellipse cx="2237" cy="1099" rx="2.5" ry="5.3" fill="#c9deb0" opacity="0.73"/><ellipse cx="2229" cy="1051" rx="7.5" ry="5.6" fill="#c9deb0" opacity="0.51"/><ellipse cx="2207" cy="1046" rx="5.5" ry="3.0" fill="#c9deb0" opacity="0.51"/><ellipse cx="2194" cy="1009" rx="2.5" ry="2.5" fill="#c9deb0" opacity="0.78"/><ellipse cx="2276" cy="993" rx="2.2" ry="4.8" fill="#c9deb0" opacity="0.84"/><ellipse cx="2325" cy="1039" rx="2.3" ry="5.3" fill="#c9deb0" opacity="0.54"/><ellipse cx="2387" cy="1151" rx="7.0" ry="2.1" fill="#c9deb0" opacity="0.57"/><ellipse cx="2471" cy="1232" rx="6.3" ry="3.4" fill="#c9deb0" opacity="0.51"/><ellipse cx="2441" cy="1235" rx="2.8" ry="3.2" fill="#c9deb0" opacity="0.48"/><ellipse cx="2501" cy="1267" rx="7.2" ry="5.5" fill="#c9deb0" opacity="0.50"/><ellipse cx="2417" cy="1262" rx="6.2" ry="3.7" fill="#c9deb0" opacity="0.83"/><ellipse cx="2440" cy="1257" rx="6.9" ry="2.2" fill="#c9deb0" opacity="0.70"/><ellipse cx="2358" cy="1241" rx="5.9" ry="4.3" fill="#c9deb0" opacity="0.56"/><ellipse cx="2420" cy="1233" rx="7.3" ry="3.8" fill="#c9deb0" opacity="0.50"/><ellipse cx="2454" cy="1291" rx="7.2" ry="2.3" fill="#c9deb0" opacity="0.74"/><ellipse cx="2440" cy="1228" rx="6.7" ry="1.9" fill="#c9deb0" opacity="0.50"/><ellipse cx="2424" cy="1225" rx="8.1" ry="3.7" fill="#c9deb0" opacity="0.58"/><ellipse cx="2453" cy="1234" rx="7.1" ry="1.7" fill="#c9deb0" opacity="0.51"/><ellipse cx="2511" cy="1223" rx="3.6" ry="2.0" fill="#c9deb0" opacity="0.84"/><ellipse cx="2410" cy="1168" rx="3.0" ry="4.3" fill="#c9deb0" opacity="0.59"/><ellipse cx="2454" cy="1288" rx="6.3" ry="3.1" fill="#c9deb0" opacity="0.60"/><ellipse cx="2502" cy="1313" rx="6.5" ry="5.1" fill="#c9deb0" opacity="0.62"/><ellipse cx="2480" cy="1198" rx="6.1" ry="4.1" fill="#c9deb0" opacity="0.75"/><ellipse cx="2435" cy="1258" rx="2.2" ry="2.4" fill="#c9deb0" opacity="0.47"/><ellipse cx="2487" cy="1210" rx="7.3" ry="1.5" fill="#c9deb0" opacity="0.64"/><ellipse cx="2495" cy="1202" rx="5.0" ry="3.6" fill="#c9deb0" opacity="0.49"/><ellipse cx="2464" cy="1268" rx="4.6" ry="3.2" fill="#c9deb0" opacity="0.80"/><ellipse cx="2469" cy="1275" rx="3.9" ry="2.2" fill="#c9deb0" opacity="0.56"/><ellipse cx="2454" cy="1300" rx="2.2" ry="5.7" fill="#c9deb0" opacity="0.60"/><ellipse cx="2509" cy="1217" rx="6.7" ry="3.6" fill="#c9deb0" opacity="0.83"/><ellipse cx="2496" cy="1293" rx="4.0" ry="4.5" fill="#c9deb0" opacity="0.74"/><ellipse cx="2465" cy="1272" rx="2.2" ry="2.5" fill="#c9deb0" opacity="0.48"/><ellipse cx="2358" cy="1320" rx="4.5" ry="2.9" fill="#c9deb0" opacity="0.64"/><ellipse cx="2436" cy="1321" rx="7.0" ry="2.2" fill="#c9deb0" opacity="0.55"/><ellipse cx="2403" cy="1144" rx="6.5" ry="3.4" fill="#c9deb0" opacity="0.84"/><ellipse cx="2465" cy="1246" rx="7.5" ry="3.3" fill="#c9deb0" opacity="0.47"/><ellipse cx="2329" cy="1202" rx="5.6" ry="3.1" fill="#c9deb0" opacity="0.49"/><ellipse cx="2531" cy="1289" rx="5.4" ry="5.7" fill="#c9deb0" opacity="0.47"/><ellipse cx="2451" cy="1260" rx="4.8" ry="1.8" fill="#c9deb0" opacity="0.55"/><ellipse cx="2420" cy="1268" rx="2.4" ry="1.7" fill="#c9deb0" opacity="0.84"/><ellipse cx="2471" cy="1297" rx="4.8" ry="3.9" fill="#c9deb0" opacity="0.48"/><ellipse cx="2442" cy="1266" rx="5.8" ry="5.6" fill="#c9deb0" opacity="0.69"/><ellipse cx="2468" cy="1219" rx="2.1" ry="3.9" fill="#c9deb0" opacity="0.64"/><ellipse cx="2413" cy="1225" rx="6.4" ry="4.8" fill="#c9deb0" opacity="0.82"/><ellipse cx="2434" cy="1294" rx="7.8" ry="2.5" fill="#c9deb0" opacity="0.50"/><ellipse cx="2443" cy="1264" rx="7.4" ry="5.2" fill="#c9deb0" opacity="0.58"/><ellipse cx="2462" cy="1259" rx="3.7" ry="1.9" fill="#c9deb0" opacity="0.62"/><ellipse cx="2422" cy="1228" rx="2.4" ry="4.7" fill="#c9deb0" opacity="0.47"/><ellipse cx="2461" cy="1282" rx="4.6" ry="1.9" fill="#c9deb0" opacity="0.62"/><ellipse cx="2423" cy="1319" rx="5.9" ry="5.5" fill="#c9deb0" opacity="0.71"/><ellipse cx="2453" cy="1182" rx="5.1" ry="5.2" fill="#c9deb0" opacity="0.71"/><ellipse cx="2515" cy="1223" rx="6.9" ry="2.7" fill="#c9deb0" opacity="0.77"/><ellipse cx="2434" cy="1262" rx="2.5" ry="2.3" fill="#c9deb0" opacity="0.56"/><ellipse cx="2435" cy="1210" rx="2.4" ry="4.9" fill="#c9deb0" opacity="0.67"/><ellipse cx="2463" cy="1248" rx="2.9" ry="3.1" fill="#c9deb0" opacity="0.79"/><ellipse cx="2505" cy="1224" rx="3.6" ry="3.4" fill="#c9deb0" opacity="0.59"/><ellipse cx="2447" cy="1252" rx="6.1" ry="5.2" fill="#c9deb0" opacity="0.74"/><ellipse cx="2493" cy="1278" rx="3.2" ry="4.7" fill="#c9deb0" opacity="0.63"/><ellipse cx="2519" cy="1213" rx="2.8" ry="2.9" fill="#c9deb0" opacity="0.82"/><ellipse cx="2407" cy="1257" rx="5.1" ry="5.0" fill="#c9deb0" opacity="0.82"/><ellipse cx="2341" cy="1219" rx="6.2" ry="2.0" fill="#c9deb0" opacity="0.78"/><ellipse cx="2438" cy="1253" rx="8.8" ry="1.6" fill="#c9deb0" opacity="0.68"/><ellipse cx="2364" cy="1256" rx="4.7" ry="2.5" fill="#c9deb0" opacity="0.56"/><ellipse cx="2466" cy="1304" rx="4.5" ry="4.9" fill="#c9deb0" opacity="0.55"/><ellipse cx="2431" cy="1274" rx="8.9" ry="5.3" fill="#c9deb0" opacity="0.79"/><ellipse cx="2419" cy="1212" rx="3.0" ry="5.2" fill="#c9deb0" opacity="0.65"/><ellipse cx="2475" cy="1252" rx="2.7" ry="4.7" fill="#c9deb0" opacity="0.81"/><ellipse cx="2473" cy="1326" rx="4.3" ry="4.6" fill="#c9deb0" opacity="0.80"/><ellipse cx="2396" cy="1185" rx="4.6" ry="1.5" fill="#c9deb0" opacity="0.65"/><ellipse cx="2427" cy="1229" rx="4.7" ry="2.9" fill="#c9deb0" opacity="0.46"/><ellipse cx="2434" cy="1289" rx="5.3" ry="4.7" fill="#c9deb0" opacity="0.61"/><ellipse cx="2527" cy="1235" rx="8.5" ry="4.6" fill="#c9deb0" opacity="0.72"/><ellipse cx="2377" cy="1225" rx="4.5" ry="4.2" fill="#c9deb0" opacity="0.72"/><ellipse cx="2416" cy="1240" rx="2.5" ry="1.9" fill="#c9deb0" opacity="0.59"/><ellipse cx="2388" cy="1206" rx="7.0" ry="2.9" fill="#c9deb0" opacity="0.82"/><ellipse cx="2440" cy="1320" rx="2.5" ry="4.9" fill="#c9deb0" opacity="0.72"/><ellipse cx="2536" cy="1218" rx="6.8" ry="5.3" fill="#c9deb0" opacity="0.75"/><ellipse cx="2428" cy="1224" rx="5.6" ry="5.5" fill="#c9deb0" opacity="0.55"/><ellipse cx="2502" cy="1235" rx="4.8" ry="1.5" fill="#c9deb0" opacity="0.61"/><ellipse cx="2477" cy="1308" rx="8.3" ry="5.6" fill="#c9deb0" opacity="0.70"/><ellipse cx="2435" cy="1260" rx="6.8" ry="4.0" fill="#c9deb0" opacity="0.74"/><ellipse cx="2388" cy="1316" rx="3.5" ry="2.9" fill="#c9deb0" opacity="0.56"/><ellipse cx="2386" cy="1174" rx="3.2" ry="4.3" fill="#c9deb0" opacity="0.76"/><ellipse cx="2452" cy="1262" rx="6.0" ry="5.2" fill="#c9deb0" opacity="0.80"/><ellipse cx="2444" cy="1196" rx="5.0" ry="3.9" fill="#c9deb0" opacity="0.81"/><ellipse cx="2439" cy="1282" rx="6.2" ry="5.8" fill="#c9deb0" opacity="0.52"/><ellipse cx="2495" cy="1123" rx="5.9" ry="4.2" fill="#c9deb0" opacity="0.52"/><ellipse cx="2495" cy="1165" rx="6.5" ry="4.6" fill="#c9deb0" opacity="0.74"/><ellipse cx="2512" cy="1136" rx="7.8" ry="5.8" fill="#c9deb0" opacity="0.58"/><ellipse cx="2505" cy="1078" rx="8.5" ry="2.5" fill="#c9deb0" opacity="0.73"/><ellipse cx="2498" cy="1086" rx="2.7" ry="2.4" fill="#c9deb0" opacity="0.51"/><ellipse cx="2494" cy="1131" rx="6.3" ry="2.0" fill="#c9deb0" opacity="0.75"/><ellipse cx="2475" cy="1054" rx="7.6" ry="4.7" fill="#c9deb0" opacity="0.82"/><ellipse cx="2520" cy="1107" rx="8.8" ry="2.0" fill="#c9deb0" opacity="0.49"/><ellipse cx="2499" cy="1130" rx="4.6" ry="3.6" fill="#c9deb0" opacity="0.72"/><ellipse cx="2479" cy="1105" rx="4.8" ry="3.9" fill="#c9deb0" opacity="0.60"/><ellipse cx="2510" cy="1153" rx="4.6" ry="4.6" fill="#c9deb0" opacity="0.65"/><ellipse cx="2550" cy="1100" rx="2.5" ry="4.9" fill="#c9deb0" opacity="0.74"/><ellipse cx="2476" cy="1137" rx="5.4" ry="3.1" fill="#c9deb0" opacity="0.74"/><ellipse cx="2506" cy="1103" rx="4.0" ry="3.7" fill="#c9deb0" opacity="0.73"/><ellipse cx="2490" cy="1074" rx="4.1" ry="3.0" fill="#c9deb0" opacity="0.79"/><ellipse cx="2470" cy="1119" rx="4.9" ry="2.6" fill="#c9deb0" opacity="0.72"/><ellipse cx="2501" cy="1133" rx="2.7" ry="3.6" fill="#c9deb0" opacity="0.84"/><ellipse cx="2451" cy="1111" rx="8.5" ry="1.9" fill="#c9deb0" opacity="0.59"/><ellipse cx="2481" cy="1117" rx="7.4" ry="3.1" fill="#c9deb0" opacity="0.46"/><ellipse cx="2480" cy="1160" rx="4.7" ry="3.8" fill="#c9deb0" opacity="0.47"/><ellipse cx="2496" cy="1216" rx="5.1" ry="3.6" fill="#c9deb0" opacity="0.48"/><ellipse cx="2466" cy="1208" rx="6.8" ry="3.8" fill="#c9deb0" opacity="0.47"/><ellipse cx="2439" cy="1159" rx="5.0" ry="4.2" fill="#c9deb0" opacity="0.81"/><ellipse cx="2454" cy="1080" rx="2.3" ry="1.6" fill="#c9deb0" opacity="0.76"/><ellipse cx="2428" cy="1158" rx="7.8" ry="5.6" fill="#c9deb0" opacity="0.60"/><ellipse cx="2530" cy="1120" rx="8.2" ry="2.2" fill="#c9deb0" opacity="0.76"/><ellipse cx="2409" cy="1165" rx="9.0" ry="2.5" fill="#c9deb0" opacity="0.62"/><ellipse cx="2476" cy="1160" rx="4.0" ry="4.5" fill="#c9deb0" opacity="0.50"/><ellipse cx="2496" cy="1155" rx="2.5" ry="3.2" fill="#c9deb0" opacity="0.81"/><ellipse cx="2495" cy="1104" rx="2.1" ry="5.2" fill="#c9deb0" opacity="0.83"/><ellipse cx="2467" cy="1109" rx="3.7" ry="5.6" fill="#c9deb0" opacity="0.83"/><ellipse cx="2499" cy="1124" rx="5.0" ry="2.7" fill="#c9deb0" opacity="0.75"/><ellipse cx="2444" cy="1165" rx="3.1" ry="3.8" fill="#c9deb0" opacity="0.84"/><ellipse cx="2476" cy="1105" rx="2.8" ry="4.4" fill="#c9deb0" opacity="0.60"/><ellipse cx="2457" cy="1150" rx="6.1" ry="5.8" fill="#c9deb0" opacity="0.55"/><ellipse cx="2459" cy="1108" rx="5.8" ry="4.8" fill="#c9deb0" opacity="0.50"/><ellipse cx="2433" cy="1127" rx="2.1" ry="5.0" fill="#c9deb0" opacity="0.62"/><ellipse cx="2439" cy="1119" rx="7.6" ry="1.8" fill="#c9deb0" opacity="0.65"/><ellipse cx="2509" cy="1128" rx="4.4" ry="1.6" fill="#c9deb0" opacity="0.57"/><ellipse cx="2438" cy="1136" rx="8.5" ry="3.2" fill="#c9deb0" opacity="0.66"/><ellipse cx="2464" cy="1038" rx="8.6" ry="5.9" fill="#c9deb0" opacity="0.57"/><ellipse cx="2515" cy="1192" rx="2.5" ry="3.5" fill="#c9deb0" opacity="0.74"/><ellipse cx="2451" cy="1114" rx="8.5" ry="2.8" fill="#c9deb0" opacity="0.67"/><ellipse cx="2488" cy="1103" rx="4.5" ry="3.7" fill="#c9deb0" opacity="0.68"/><ellipse cx="2489" cy="1158" rx="2.4" ry="1.9" fill="#c9deb0" opacity="0.59"/><ellipse cx="2529" cy="1194" rx="3.8" ry="2.7" fill="#c9deb0" opacity="0.76"/><ellipse cx="2479" cy="1092" rx="7.8" ry="4.3" fill="#c9deb0" opacity="0.61"/><ellipse cx="2464" cy="1100" rx="3.8" ry="5.4" fill="#c9deb0" opacity="0.63"/><ellipse cx="2495" cy="1106" rx="3.0" ry="1.7" fill="#c9deb0" opacity="0.75"/><ellipse cx="2476" cy="1118" rx="2.3" ry="5.2" fill="#c9deb0" opacity="0.65"/><ellipse cx="2407" cy="954" rx="6.1" ry="2.0" fill="#c9deb0" opacity="0.74"/><ellipse cx="2362" cy="933" rx="3.6" ry="5.8" fill="#c9deb0" opacity="0.49"/><ellipse cx="2450" cy="978" rx="2.6" ry="1.8" fill="#c9deb0" opacity="0.63"/><ellipse cx="2355" cy="909" rx="7.0" ry="1.8" fill="#c9deb0" opacity="0.71"/><ellipse cx="2410" cy="947" rx="7.3" ry="2.7" fill="#c9deb0" opacity="0.57"/><ellipse cx="2461" cy="960" rx="5.6" ry="5.6" fill="#c9deb0" opacity="0.64"/><ellipse cx="2414" cy="977" rx="3.8" ry="5.8" fill="#c9deb0" opacity="0.53"/><ellipse cx="2429" cy="975" rx="2.6" ry="3.4" fill="#c9deb0" opacity="0.70"/><ellipse cx="2387" cy="945" rx="3.0" ry="3.7" fill="#c9deb0" opacity="0.72"/><ellipse cx="2356" cy="973" rx="8.4" ry="2.2" fill="#c9deb0" opacity="0.56"/><ellipse cx="2355" cy="961" rx="8.3" ry="4.0" fill="#c9deb0" opacity="0.71"/><ellipse cx="2345" cy="985" rx="7.9" ry="2.8" fill="#c9deb0" opacity="0.49"/><ellipse cx="2398" cy="988" rx="8.2" ry="2.7" fill="#c9deb0" opacity="0.70"/><ellipse cx="2343" cy="902" rx="2.8" ry="5.0" fill="#c9deb0" opacity="0.58"/><ellipse cx="2441" cy="986" rx="7.9" ry="4.1" fill="#c9deb0" opacity="0.47"/><ellipse cx="2435" cy="955" rx="6.5" ry="4.8" fill="#c9deb0" opacity="0.55"/><ellipse cx="2373" cy="975" rx="2.7" ry="1.8" fill="#c9deb0" opacity="0.74"/><ellipse cx="2339" cy="992" rx="2.4" ry="2.9" fill="#c9deb0" opacity="0.52"/><ellipse cx="2460" cy="942" rx="8.3" ry="3.8" fill="#c9deb0" opacity="0.49"/><ellipse cx="2378" cy="971" rx="2.2" ry="4.0" fill="#c9deb0" opacity="0.57"/><ellipse cx="2434" cy="983" rx="8.5" ry="5.8" fill="#c9deb0" opacity="0.64"/><ellipse cx="2449" cy="991" rx="2.8" ry="3.9" fill="#c9deb0" opacity="0.48"/><ellipse cx="2445" cy="957" rx="5.1" ry="2.7" fill="#c9deb0" opacity="0.67"/><ellipse cx="2437" cy="955" rx="3.5" ry="3.8" fill="#c9deb0" opacity="0.82"/><ellipse cx="2362" cy="989" rx="8.4" ry="3.0" fill="#c9deb0" opacity="0.77"/><ellipse cx="2381" cy="957" rx="2.4" ry="5.7" fill="#c9deb0" opacity="0.64"/><ellipse cx="2325" cy="983" rx="6.0" ry="3.8" fill="#c9deb0" opacity="0.56"/><ellipse cx="2399" cy="937" rx="5.3" ry="4.9" fill="#c9deb0" opacity="0.69"/><ellipse cx="2416" cy="975" rx="6.9" ry="4.8" fill="#c9deb0" opacity="0.49"/><ellipse cx="2419" cy="960" rx="3.2" ry="1.9" fill="#c9deb0" opacity="0.63"/><ellipse cx="2348" cy="920" rx="3.1" ry="4.6" fill="#c9deb0" opacity="0.49"/><ellipse cx="2376" cy="949" rx="4.5" ry="1.7" fill="#c9deb0" opacity="0.74"/><ellipse cx="2444" cy="995" rx="4.4" ry="4.2" fill="#c9deb0" opacity="0.71"/><ellipse cx="2327" cy="964" rx="8.4" ry="2.8" fill="#c9deb0" opacity="0.58"/><ellipse cx="2414" cy="949" rx="4.9" ry="3.4" fill="#c9deb0" opacity="0.84"/><ellipse cx="2436" cy="992" rx="7.3" ry="4.8" fill="#c9deb0" opacity="0.45"/><ellipse cx="2429" cy="951" rx="8.0" ry="4.5" fill="#c9deb0" opacity="0.62"/><ellipse cx="2428" cy="922" rx="4.4" ry="4.8" fill="#c9deb0" opacity="0.65"/><ellipse cx="2388" cy="920" rx="7.6" ry="2.2" fill="#c9deb0" opacity="0.65"/><ellipse cx="2464" cy="960" rx="7.4" ry="5.3" fill="#c9deb0" opacity="0.47"/><ellipse cx="2360" cy="952" rx="2.8" ry="2.4" fill="#c9deb0" opacity="0.84"/><ellipse cx="2416" cy="942" rx="7.8" ry="4.4" fill="#c9deb0" opacity="0.60"/><ellipse cx="2384" cy="943" rx="3.9" ry="1.5" fill="#c9deb0" opacity="0.71"/><ellipse cx="2348" cy="936" rx="5.5" ry="3.5" fill="#c9deb0" opacity="0.57"/><ellipse cx="2397" cy="931" rx="6.2" ry="4.9" fill="#c9deb0" opacity="0.63"/><ellipse cx="2395" cy="950" rx="3.8" ry="5.3" fill="#c9deb0" opacity="0.51"/><ellipse cx="2406" cy="962" rx="7.4" ry="2.0" fill="#c9deb0" opacity="0.63"/><ellipse cx="2340" cy="980" rx="5.3" ry="3.8" fill="#c9deb0" opacity="0.46"/><ellipse cx="2417" cy="911" rx="6.4" ry="5.3" fill="#c9deb0" opacity="0.70"/><ellipse cx="2385" cy="903" rx="6.3" ry="1.6" fill="#c9deb0" opacity="0.80"/><ellipse cx="2500" cy="839" rx="2.5" ry="3.0" fill="#c9deb0" opacity="0.49"/><ellipse cx="2471" cy="848" rx="3.5" ry="1.5" fill="#c9deb0" opacity="0.62"/><ellipse cx="2465" cy="877" rx="4.7" ry="2.2" fill="#c9deb0" opacity="0.83"/><ellipse cx="2516" cy="817" rx="3.5" ry="3.3" fill="#c9deb0" opacity="0.63"/><ellipse cx="2474" cy="843" rx="5.2" ry="5.0" fill="#c9deb0" opacity="0.73"/><ellipse cx="2509" cy="812" rx="7.3" ry="5.4" fill="#c9deb0" opacity="0.82"/><ellipse cx="2488" cy="816" rx="6.6" ry="4.5" fill="#c9deb0" opacity="0.80"/><ellipse cx="2473" cy="815" rx="3.3" ry="3.0" fill="#c9deb0" opacity="0.55"/><ellipse cx="2459" cy="803" rx="3.3" ry="3.9" fill="#c9deb0" opacity="0.79"/><ellipse cx="2471" cy="848" rx="6.2" ry="3.1" fill="#c9deb0" opacity="0.51"/><ellipse cx="2479" cy="843" rx="3.0" ry="3.4" fill="#c9deb0" opacity="0.49"/><ellipse cx="2518" cy="841" rx="8.7" ry="5.3" fill="#c9deb0" opacity="0.58"/><ellipse cx="2491" cy="836" rx="3.1" ry="1.5" fill="#c9deb0" opacity="0.47"/><ellipse cx="2440" cy="816" rx="5.3" ry="5.1" fill="#c9deb0" opacity="0.63"/><ellipse cx="2516" cy="824" rx="5.8" ry="2.3" fill="#c9deb0" opacity="0.62"/><ellipse cx="2428" cy="856" rx="3.6" ry="2.8" fill="#c9deb0" opacity="0.78"/><ellipse cx="2514" cy="853" rx="3.5" ry="4.5" fill="#c9deb0" opacity="0.69"/><ellipse cx="2520" cy="862" rx="4.9" ry="2.9" fill="#c9deb0" opacity="0.79"/><ellipse cx="2485" cy="820" rx="6.7" ry="2.1" fill="#c9deb0" opacity="0.66"/><ellipse cx="2517" cy="857" rx="8.4" ry="4.4" fill="#c9deb0" opacity="0.47"/><ellipse cx="2446" cy="838" rx="5.1" ry="2.2" fill="#c9deb0" opacity="0.56"/><ellipse cx="2469" cy="843" rx="6.7" ry="2.6" fill="#c9deb0" opacity="0.57"/><ellipse cx="2501" cy="851" rx="8.5" ry="2.8" fill="#c9deb0" opacity="0.49"/><ellipse cx="2439" cy="888" rx="2.6" ry="3.0" fill="#c9deb0" opacity="0.53"/><ellipse cx="2466" cy="816" rx="2.7" ry="5.4" fill="#c9deb0" opacity="0.58"/><ellipse cx="2467" cy="816" rx="8.1" ry="1.8" fill="#c9deb0" opacity="0.54"/><ellipse cx="2475" cy="858" rx="7.8" ry="3.8" fill="#c9deb0" opacity="0.59"/><ellipse cx="2422" cy="838" rx="6.0" ry="3.5" fill="#c9deb0" opacity="0.71"/><ellipse cx="2457" cy="824" rx="5.0" ry="2.1" fill="#c9deb0" opacity="0.63"/><ellipse cx="2499" cy="826" rx="4.6" ry="4.2" fill="#c9deb0" opacity="0.69"/><ellipse cx="2507" cy="643" rx="7.1" ry="1.7" fill="#c9deb0" opacity="0.49"/><ellipse cx="2501" cy="568" rx="2.5" ry="1.9" fill="#c9deb0" opacity="0.70"/><ellipse cx="2495" cy="654" rx="2.2" ry="3.6" fill="#c9deb0" opacity="0.51"/><ellipse cx="2489" cy="652" rx="5.6" ry="5.3" fill="#c9deb0" opacity="0.79"/><ellipse cx="2479" cy="588" rx="3.2" ry="3.6" fill="#c9deb0" opacity="0.58"/><ellipse cx="2495" cy="612" rx="8.2" ry="3.2" fill="#c9deb0" opacity="0.76"/><ellipse cx="2533" cy="600" rx="4.7" ry="5.4" fill="#c9deb0" opacity="0.85"/><ellipse cx="2517" cy="649" rx="7.1" ry="3.6" fill="#c9deb0" opacity="0.56"/><ellipse cx="2507" cy="642" rx="8.5" ry="3.3" fill="#c9deb0" opacity="0.55"/><ellipse cx="2488" cy="602" rx="6.3" ry="3.5" fill="#c9deb0" opacity="0.56"/><ellipse cx="2247" cy="1265" rx="6.6" ry="2.6" fill="#c9deb0" opacity="0.65"/><ellipse cx="2094" cy="1229" rx="8.3" ry="5.0" fill="#c9deb0" opacity="0.57"/><ellipse cx="2111" cy="1292" rx="3.1" ry="5.7" fill="#c9deb0" opacity="0.47"/><ellipse cx="2107" cy="1250" rx="5.7" ry="1.7" fill="#c9deb0" opacity="0.54"/><ellipse cx="2245" cy="1246" rx="3.5" ry="3.6" fill="#c9deb0" opacity="0.46"/><ellipse cx="2175" cy="1266" rx="8.9" ry="2.9" fill="#c9deb0" opacity="0.55"/><ellipse cx="2174" cy="1257" rx="9.0" ry="4.8" fill="#c9deb0" opacity="0.82"/><ellipse cx="2198" cy="1196" rx="3.8" ry="2.3" fill="#c9deb0" opacity="0.56"/><ellipse cx="2181" cy="1259" rx="7.0" ry="3.7" fill="#c9deb0" opacity="0.45"/><ellipse cx="2115" cy="1316" rx="8.0" ry="4.8" fill="#c9deb0" opacity="0.74"/><ellipse cx="2209" cy="1226" rx="4.7" ry="4.1" fill="#c9deb0" opacity="0.56"/><ellipse cx="2191" cy="1256" rx="5.2" ry="2.0" fill="#c9deb0" opacity="0.48"/><ellipse cx="2151" cy="1284" rx="8.7" ry="3.7" fill="#c9deb0" opacity="0.78"/><ellipse cx="2147" cy="1202" rx="4.3" ry="3.3" fill="#c9deb0" opacity="0.58"/><ellipse cx="2079" cy="1197" rx="7.5" ry="2.8" fill="#c9deb0" opacity="0.51"/><ellipse cx="2221" cy="1253" rx="3.6" ry="1.5" fill="#c9deb0" opacity="0.57"/><ellipse cx="2155" cy="1274" rx="6.7" ry="4.1" fill="#c9deb0" opacity="0.56"/><ellipse cx="2146" cy="1226" rx="8.4" ry="2.0" fill="#c9deb0" opacity="0.69"/><ellipse cx="2125" cy="1194" rx="5.4" ry="5.4" fill="#c9deb0" opacity="0.70"/><ellipse cx="2142" cy="1236" rx="3.3" ry="3.6" fill="#c9deb0" opacity="0.67"/><ellipse cx="2223" cy="1283" rx="4.4" ry="3.6" fill="#c9deb0" opacity="0.66"/><ellipse cx="2174" cy="1224" rx="5.9" ry="4.2" fill="#c9deb0" opacity="0.71"/><ellipse cx="2133" cy="1277" rx="5.3" ry="4.2" fill="#c9deb0" opacity="0.71"/><ellipse cx="2189" cy="1279" rx="5.9" ry="2.4" fill="#c9deb0" opacity="0.49"/><ellipse cx="2160" cy="1247" rx="5.5" ry="2.8" fill="#c9deb0" opacity="0.46"/><ellipse cx="2146" cy="1271" rx="4.8" ry="5.6" fill="#c9deb0" opacity="0.48"/><ellipse cx="2100" cy="1295" rx="6.4" ry="1.6" fill="#c9deb0" opacity="0.54"/><ellipse cx="2128" cy="1325" rx="5.1" ry="2.7" fill="#c9deb0" opacity="0.64"/><ellipse cx="2119" cy="1252" rx="6.7" ry="4.7" fill="#c9deb0" opacity="0.64"/><ellipse cx="2060" cy="1236" rx="8.7" ry="4.3" fill="#c9deb0" opacity="0.47"/><ellipse cx="2070" cy="1248" rx="4.3" ry="4.6" fill="#c9deb0" opacity="0.60"/><ellipse cx="2095" cy="1217" rx="6.7" ry="5.7" fill="#c9deb0" opacity="0.73"/><ellipse cx="2129" cy="1196" rx="3.6" ry="4.3" fill="#c9deb0" opacity="0.70"/><ellipse cx="2234" cy="1273" rx="3.6" ry="3.7" fill="#c9deb0" opacity="0.66"/><ellipse cx="2134" cy="1190" rx="5.3" ry="5.7" fill="#c9deb0" opacity="0.63"/><ellipse cx="1997" cy="1205" rx="4.3" ry="4.7" fill="#c9deb0" opacity="0.83"/><ellipse cx="2231" cy="1282" rx="6.6" ry="3.9" fill="#c9deb0" opacity="0.77"/><ellipse cx="2169" cy="1234" rx="5.4" ry="4.3" fill="#c9deb0" opacity="0.73"/><ellipse cx="2244" cy="1233" rx="7.8" ry="1.8" fill="#c9deb0" opacity="0.62"/><ellipse cx="2262" cy="1205" rx="7.3" ry="3.0" fill="#c9deb0" opacity="0.76"/><ellipse cx="2071" cy="1239" rx="6.5" ry="5.4" fill="#c9deb0" opacity="0.74"/><ellipse cx="2212" cy="1242" rx="5.5" ry="4.5" fill="#c9deb0" opacity="0.67"/><ellipse cx="2280" cy="1278" rx="4.2" ry="3.7" fill="#c9deb0" opacity="0.47"/><ellipse cx="2195" cy="1327" rx="3.9" ry="2.8" fill="#c9deb0" opacity="0.77"/><ellipse cx="2154" cy="1303" rx="6.0" ry="5.5" fill="#c9deb0" opacity="0.64"/><ellipse cx="2130" cy="1275" rx="4.5" ry="1.5" fill="#c9deb0" opacity="0.50"/><ellipse cx="2178" cy="1275" rx="7.4" ry="5.7" fill="#c9deb0" opacity="0.59"/><ellipse cx="2150" cy="1280" rx="6.4" ry="3.7" fill="#c9deb0" opacity="0.50"/><ellipse cx="2108" cy="1246" rx="3.0" ry="5.0" fill="#c9deb0" opacity="0.49"/><ellipse cx="2065" cy="1273" rx="5.8" ry="5.4" fill="#c9deb0" opacity="0.58"/><ellipse cx="2060" cy="1276" rx="8.3" ry="3.4" fill="#c9deb0" opacity="0.45"/><ellipse cx="2044" cy="1388" rx="7.0" ry="4.8" fill="#c9deb0" opacity="0.77"/><ellipse cx="2081" cy="1281" rx="5.3" ry="5.6" fill="#c9deb0" opacity="0.81"/><ellipse cx="2113" cy="1366" rx="5.9" ry="2.9" fill="#c9deb0" opacity="0.48"/><ellipse cx="2011" cy="1299" rx="5.2" ry="2.9" fill="#c9deb0" opacity="0.83"/><ellipse cx="2019" cy="1285" rx="7.4" ry="2.6" fill="#c9deb0" opacity="0.62"/><ellipse cx="2071" cy="1296" rx="9.0" ry="4.3" fill="#c9deb0" opacity="0.66"/><ellipse cx="2025" cy="1232" rx="5.6" ry="3.2" fill="#c9deb0" opacity="0.51"/><ellipse cx="2068" cy="1283" rx="4.8" ry="1.5" fill="#c9deb0" opacity="0.72"/><ellipse cx="2036" cy="1302" rx="4.2" ry="3.7" fill="#c9deb0" opacity="0.53"/><ellipse cx="2075" cy="1247" rx="2.5" ry="1.9" fill="#c9deb0" opacity="0.81"/><ellipse cx="2024" cy="1266" rx="7.0" ry="1.7" fill="#c9deb0" opacity="0.81"/><ellipse cx="2099" cy="1259" rx="2.4" ry="3.4" fill="#c9deb0" opacity="0.78"/><ellipse cx="2029" cy="1266" rx="3.6" ry="1.8" fill="#c9deb0" opacity="0.66"/><ellipse cx="2066" cy="1316" rx="8.3" ry="5.6" fill="#c9deb0" opacity="0.65"/><ellipse cx="2054" cy="1261" rx="8.6" ry="5.4" fill="#c9deb0" opacity="0.64"/><ellipse cx="2073" cy="1260" rx="8.9" ry="3.0" fill="#c9deb0" opacity="0.82"/><ellipse cx="2094" cy="1208" rx="7.1" ry="1.8" fill="#c9deb0" opacity="0.56"/><ellipse cx="2006" cy="1215" rx="6.8" ry="1.7" fill="#c9deb0" opacity="0.59"/><ellipse cx="2038" cy="1298" rx="3.6" ry="3.8" fill="#c9deb0" opacity="0.60"/><ellipse cx="2046" cy="1317" rx="8.6" ry="4.2" fill="#c9deb0" opacity="0.75"/><ellipse cx="2058" cy="1276" rx="8.2" ry="1.9" fill="#c9deb0" opacity="0.53"/><ellipse cx="2046" cy="1220" rx="6.3" ry="3.6" fill="#c9deb0" opacity="0.74"/><ellipse cx="2029" cy="1290" rx="3.5" ry="2.0" fill="#c9deb0" opacity="0.46"/><ellipse cx="2134" cy="1254" rx="4.4" ry="3.4" fill="#c9deb0" opacity="0.56"/><ellipse cx="2058" cy="1239" rx="3.2" ry="5.5" fill="#c9deb0" opacity="0.82"/><ellipse cx="2088" cy="1291" rx="3.5" ry="4.4" fill="#c9deb0" opacity="0.59"/><ellipse cx="2041" cy="1309" rx="6.3" ry="3.8" fill="#c9deb0" opacity="0.65"/><ellipse cx="2033" cy="1243" rx="8.6" ry="3.5" fill="#c9deb0" opacity="0.77"/><ellipse cx="2095" cy="1259" rx="6.1" ry="5.1" fill="#c9deb0" opacity="0.73"/><ellipse cx="2063" cy="1315" rx="3.1" ry="1.6" fill="#c9deb0" opacity="0.72"/><ellipse cx="2037" cy="1304" rx="2.2" ry="1.6" fill="#c9deb0" opacity="0.72"/><ellipse cx="2026" cy="1310" rx="6.7" ry="5.6" fill="#c9deb0" opacity="0.73"/><ellipse cx="2071" cy="1386" rx="3.3" ry="4.1" fill="#c9deb0" opacity="0.71"/><ellipse cx="2032" cy="1353" rx="6.3" ry="4.7" fill="#c9deb0" opacity="0.51"/><ellipse cx="2350" cy="1166" rx="6.3" ry="4.8" fill="#c9deb0" opacity="0.58"/><ellipse cx="2326" cy="1243" rx="8.8" ry="4.5" fill="#c9deb0" opacity="0.64"/><ellipse cx="2265" cy="1173" rx="3.8" ry="1.8" fill="#c9deb0" opacity="0.49"/><ellipse cx="2274" cy="1168" rx="8.8" ry="4.3" fill="#c9deb0" opacity="0.79"/><ellipse cx="2386" cy="1195" rx="5.0" ry="3.6" fill="#c9deb0" opacity="0.60"/><ellipse cx="2334" cy="1137" rx="2.9" ry="5.8" fill="#c9deb0" opacity="0.66"/><ellipse cx="2330" cy="1140" rx="6.1" ry="4.1" fill="#c9deb0" opacity="0.50"/><ellipse cx="2383" cy="1257" rx="4.4" ry="2.1" fill="#c9deb0" opacity="0.78"/><ellipse cx="2329" cy="1118" rx="4.7" ry="2.1" fill="#c9deb0" opacity="0.75"/><ellipse cx="2345" cy="1270" rx="6.9" ry="2.7" fill="#c9deb0" opacity="0.45"/><ellipse cx="2258" cy="1154" rx="6.1" ry="5.9" fill="#c9deb0" opacity="0.54"/><ellipse cx="2324" cy="1149" rx="6.1" ry="2.9" fill="#c9deb0" opacity="0.54"/><ellipse cx="2267" cy="1180" rx="8.4" ry="4.2" fill="#c9deb0" opacity="0.65"/><ellipse cx="2291" cy="1145" rx="4.9" ry="2.7" fill="#c9deb0" opacity="0.72"/><ellipse cx="2320" cy="1209" rx="3.2" ry="3.1" fill="#c9deb0" opacity="0.72"/><ellipse cx="2299" cy="1154" rx="7.7" ry="3.0" fill="#c9deb0" opacity="0.59"/><ellipse cx="2331" cy="1128" rx="5.0" ry="5.5" fill="#c9deb0" opacity="0.46"/><ellipse cx="2238" cy="1178" rx="8.2" ry="2.4" fill="#c9deb0" opacity="0.77"/><ellipse cx="2220" cy="1177" rx="4.3" ry="4.5" fill="#c9deb0" opacity="0.71"/><ellipse cx="2374" cy="1197" rx="4.7" ry="2.1" fill="#c9deb0" opacity="0.72"/><ellipse cx="2414" cy="1240" rx="3.0" ry="2.4" fill="#c9deb0" opacity="0.83"/><ellipse cx="2250" cy="1201" rx="4.4" ry="2.6" fill="#c9deb0" opacity="0.60"/><ellipse cx="2361" cy="1197" rx="8.3" ry="5.5" fill="#c9deb0" opacity="0.72"/><ellipse cx="2322" cy="1277" rx="8.3" ry="4.2" fill="#c9deb0" opacity="0.54"/><ellipse cx="2237" cy="1123" rx="6.1" ry="2.2" fill="#c9deb0" opacity="0.53"/><ellipse cx="2320" cy="1189" rx="2.0" ry="3.2" fill="#c9deb0" opacity="0.55"/><ellipse cx="2311" cy="1201" rx="5.9" ry="4.5" fill="#c9deb0" opacity="0.58"/><ellipse cx="2279" cy="1171" rx="7.5" ry="4.1" fill="#c9deb0" opacity="0.71"/><ellipse cx="2248" cy="1165" rx="2.7" ry="2.0" fill="#c9deb0" opacity="0.80"/><ellipse cx="2333" cy="1195" rx="8.3" ry="4.2" fill="#c9deb0" opacity="0.79"/><ellipse cx="2316" cy="1156" rx="2.8" ry="4.9" fill="#c9deb0" opacity="0.73"/><ellipse cx="2293" cy="1207" rx="4.5" ry="5.7" fill="#c9deb0" opacity="0.64"/><ellipse cx="2365" cy="1336" rx="8.8" ry="2.3" fill="#c9deb0" opacity="0.53"/><ellipse cx="2324" cy="1153" rx="5.3" ry="4.6" fill="#c9deb0" opacity="0.56"/><ellipse cx="2303" cy="1182" rx="3.5" ry="4.0" fill="#c9deb0" opacity="0.62"/><ellipse cx="2351" cy="1184" rx="8.4" ry="2.7" fill="#c9deb0" opacity="0.59"/><ellipse cx="2363" cy="1226" rx="8.9" ry="3.1" fill="#c9deb0" opacity="0.78"/><ellipse cx="2403" cy="1189" rx="3.3" ry="3.4" fill="#c9deb0" opacity="0.52"/><ellipse cx="2330" cy="1243" rx="3.2" ry="4.6" fill="#c9deb0" opacity="0.66"/><ellipse cx="2321" cy="1236" rx="3.0" ry="2.0" fill="#c9deb0" opacity="0.63"/><ellipse cx="2382" cy="1226" rx="3.8" ry="5.0" fill="#c9deb0" opacity="0.56"/><ellipse cx="2402" cy="1109" rx="8.5" ry="2.5" fill="#c9deb0" opacity="0.82"/><ellipse cx="2232" cy="1218" rx="5.2" ry="3.9" fill="#c9deb0" opacity="0.55"/><ellipse cx="2332" cy="1154" rx="8.2" ry="4.7" fill="#c9deb0" opacity="0.62"/><ellipse cx="2367" cy="1207" rx="4.9" ry="3.2" fill="#c9deb0" opacity="0.68"/><ellipse cx="2384" cy="1202" rx="8.2" ry="5.8" fill="#c9deb0" opacity="0.73"/><ellipse cx="2305" cy="1140" rx="9.0" ry="5.1" fill="#c9deb0" opacity="0.63"/><ellipse cx="2216" cy="1203" rx="5.9" ry="4.2" fill="#c9deb0" opacity="0.57"/><ellipse cx="2301" cy="1152" rx="8.6" ry="6.0" fill="#c9deb0" opacity="0.85"/><ellipse cx="2344" cy="1196" rx="2.5" ry="3.0" fill="#c9deb0" opacity="0.78"/><ellipse cx="2065" cy="1070" rx="2.7" ry="2.6" fill="#c9deb0" opacity="0.50"/><ellipse cx="2149" cy="1127" rx="3.4" ry="2.3" fill="#c9deb0" opacity="0.70"/><ellipse cx="2162" cy="1130" rx="6.6" ry="5.4" fill="#c9deb0" opacity="0.74"/><ellipse cx="2095" cy="1052" rx="5.0" ry="3.2" fill="#c9deb0" opacity="0.61"/><ellipse cx="2144" cy="1060" rx="7.6" ry="4.3" fill="#c9deb0" opacity="0.48"/><ellipse cx="2115" cy="1126" rx="7.5" ry="2.5" fill="#c9deb0" opacity="0.55"/><ellipse cx="2062" cy="1108" rx="4.9" ry="5.7" fill="#c9deb0" opacity="0.69"/><ellipse cx="2092" cy="1113" rx="5.6" ry="2.2" fill="#c9deb0" opacity="0.61"/><ellipse cx="2164" cy="1101" rx="8.1" ry="5.5" fill="#c9deb0" opacity="0.69"/><ellipse cx="2054" cy="1111" rx="5.9" ry="2.3" fill="#c9deb0" opacity="0.67"/><ellipse cx="2068" cy="1080" rx="5.1" ry="5.3" fill="#c9deb0" opacity="0.71"/><ellipse cx="2083" cy="1103" rx="6.4" ry="4.0" fill="#c9deb0" opacity="0.57"/><ellipse cx="2052" cy="1087" rx="6.4" ry="5.5" fill="#c9deb0" opacity="0.60"/><ellipse cx="2040" cy="1069" rx="6.7" ry="2.6" fill="#c9deb0" opacity="0.55"/><ellipse cx="2124" cy="1071" rx="6.8" ry="2.7" fill="#c9deb0" opacity="0.65"/><ellipse cx="2066" cy="1088" rx="3.2" ry="5.8" fill="#c9deb0" opacity="0.47"/><ellipse cx="2149" cy="1126" rx="4.6" ry="2.4" fill="#c9deb0" opacity="0.76"/><ellipse cx="2133" cy="1077" rx="6.9" ry="3.3" fill="#c9deb0" opacity="0.85"/><ellipse cx="2016" cy="1036" rx="6.6" ry="2.1" fill="#c9deb0" opacity="0.63"/><ellipse cx="2092" cy="1060" rx="2.6" ry="6.0" fill="#c9deb0" opacity="0.82"/><ellipse cx="2090" cy="1069" rx="6.9" ry="5.9" fill="#c9deb0" opacity="0.76"/><ellipse cx="2089" cy="1042" rx="6.4" ry="5.7" fill="#c9deb0" opacity="0.65"/><ellipse cx="2124" cy="1089" rx="8.7" ry="4.7" fill="#c9deb0" opacity="0.82"/><ellipse cx="2114" cy="1094" rx="6.8" ry="3.4" fill="#c9deb0" opacity="0.64"/><ellipse cx="2109" cy="1141" rx="7.5" ry="4.8" fill="#c9deb0" opacity="0.62"/><ellipse cx="2052" cy="1082" rx="5.3" ry="3.0" fill="#c9deb0" opacity="0.64"/><ellipse cx="2184" cy="1065" rx="2.9" ry="4.5" fill="#c9deb0" opacity="0.78"/><ellipse cx="2044" cy="1142" rx="8.6" ry="1.8" fill="#c9deb0" opacity="0.70"/><ellipse cx="2061" cy="1108" rx="5.8" ry="5.4" fill="#c9deb0" opacity="0.70"/><ellipse cx="2128" cy="1062" rx="7.6" ry="3.3" fill="#c9deb0" opacity="0.52"/><ellipse cx="2121" cy="1035" rx="3.6" ry="5.5" fill="#c9deb0" opacity="0.65"/><ellipse cx="2036" cy="987" rx="4.3" ry="3.9" fill="#c9deb0" opacity="0.67"/><ellipse cx="2087" cy="1123" rx="8.8" ry="4.6" fill="#c9deb0" opacity="0.56"/><ellipse cx="2073" cy="1035" rx="4.6" ry="4.5" fill="#c9deb0" opacity="0.60"/><ellipse cx="2109" cy="1045" rx="7.8" ry="2.8" fill="#c9deb0" opacity="0.52"/><ellipse cx="2374" cy="1111" rx="8.1" ry="6.0" fill="#c9deb0" opacity="0.62"/><ellipse cx="2383" cy="1150" rx="8.0" ry="2.6" fill="#c9deb0" opacity="0.57"/><ellipse cx="2367" cy="1100" rx="3.5" ry="3.3" fill="#c9deb0" opacity="0.50"/><ellipse cx="2400" cy="1126" rx="4.1" ry="5.6" fill="#c9deb0" opacity="0.83"/><ellipse cx="2371" cy="1083" rx="7.3" ry="3.0" fill="#c9deb0" opacity="0.80"/><ellipse cx="2347" cy="1117" rx="7.3" ry="4.7" fill="#c9deb0" opacity="0.75"/><ellipse cx="2372" cy="1112" rx="4.6" ry="5.8" fill="#c9deb0" opacity="0.46"/><ellipse cx="2376" cy="1120" rx="5.1" ry="5.4" fill="#c9deb0" opacity="0.52"/><ellipse cx="2384" cy="1103" rx="4.4" ry="4.8" fill="#c9deb0" opacity="0.63"/><ellipse cx="2363" cy="1077" rx="4.5" ry="3.3" fill="#c9deb0" opacity="0.47"/><ellipse cx="2417" cy="1088" rx="2.7" ry="2.4" fill="#c9deb0" opacity="0.76"/><ellipse cx="2340" cy="1098" rx="7.3" ry="2.2" fill="#c9deb0" opacity="0.78"/><ellipse cx="2384" cy="1112" rx="7.2" ry="5.2" fill="#c9deb0" opacity="0.57"/><ellipse cx="2351" cy="1126" rx="4.1" ry="3.5" fill="#c9deb0" opacity="0.85"/><ellipse cx="2419" cy="1142" rx="8.2" ry="6.0" fill="#c9deb0" opacity="0.55"/><ellipse cx="2388" cy="1124" rx="3.2" ry="5.7" fill="#c9deb0" opacity="0.68"/><ellipse cx="2395" cy="1077" rx="5.5" ry="5.8" fill="#c9deb0" opacity="0.50"/><ellipse cx="2387" cy="1147" rx="6.1" ry="5.0" fill="#c9deb0" opacity="0.85"/><ellipse cx="2385" cy="1067" rx="7.3" ry="3.9" fill="#c9deb0" opacity="0.54"/><ellipse cx="2355" cy="1149" rx="5.7" ry="1.6" fill="#c9deb0" opacity="0.71"/><ellipse cx="2414" cy="1099" rx="5.4" ry="3.6" fill="#c9deb0" opacity="0.70"/><ellipse cx="2359" cy="1082" rx="8.3" ry="5.5" fill="#c9deb0" opacity="0.76"/><ellipse cx="2374" cy="1062" rx="3.4" ry="3.7" fill="#c9deb0" opacity="0.56"/><ellipse cx="2396" cy="1156" rx="3.6" ry="5.2" fill="#c9deb0" opacity="0.78"/><ellipse cx="2376" cy="1103" rx="3.2" ry="4.4" fill="#c9deb0" opacity="0.73"/><ellipse cx="2170" cy="986" rx="3.1" ry="4.5" fill="#c9deb0" opacity="0.76"/><ellipse cx="2209" cy="930" rx="6.0" ry="1.5" fill="#c9deb0" opacity="0.56"/><ellipse cx="2188" cy="965" rx="2.5" ry="5.8" fill="#c9deb0" opacity="0.72"/><ellipse cx="2149" cy="946" rx="8.1" ry="4.4" fill="#c9deb0" opacity="0.62"/><ellipse cx="2125" cy="1000" rx="8.7" ry="2.2" fill="#c9deb0" opacity="0.78"/><ellipse cx="2179" cy="943" rx="6.9" ry="2.7" fill="#c9deb0" opacity="0.75"/><ellipse cx="2155" cy="948" rx="2.4" ry="5.6" fill="#c9deb0" opacity="0.83"/><ellipse cx="2202" cy="940" rx="7.1" ry="2.0" fill="#c9deb0" opacity="0.67"/><ellipse cx="2177" cy="982" rx="4.0" ry="1.8" fill="#c9deb0" opacity="0.62"/><ellipse cx="2202" cy="975" rx="4.3" ry="2.1" fill="#c9deb0" opacity="0.46"/><ellipse cx="2212" cy="959" rx="8.3" ry="3.4" fill="#c9deb0" opacity="0.50"/><ellipse cx="2161" cy="972" rx="2.4" ry="3.9" fill="#c9deb0" opacity="0.45"/><ellipse cx="2183" cy="996" rx="7.9" ry="2.3" fill="#c9deb0" opacity="0.61"/><ellipse cx="2230" cy="953" rx="2.8" ry="2.6" fill="#c9deb0" opacity="0.80"/><ellipse cx="2170" cy="989" rx="8.6" ry="4.3" fill="#c9deb0" opacity="0.53"/><ellipse cx="2168" cy="963" rx="5.4" ry="4.3" fill="#c9deb0" opacity="0.84"/><ellipse cx="2184" cy="933" rx="7.7" ry="3.8" fill="#c9deb0" opacity="0.53"/><ellipse cx="2186" cy="943" rx="3.5" ry="3.2" fill="#c9deb0" opacity="0.64"/><ellipse cx="2233" cy="965" rx="8.7" ry="3.8" fill="#c9deb0" opacity="0.60"/><ellipse cx="2146" cy="970" rx="5.5" ry="3.3" fill="#c9deb0" opacity="0.68"/><ellipse cx="2191" cy="996" rx="5.0" ry="4.7" fill="#c9deb0" opacity="0.59"/><ellipse cx="2185" cy="948" rx="5.4" ry="3.7" fill="#c9deb0" opacity="0.46"/><ellipse cx="2228" cy="979" rx="7.4" ry="5.2" fill="#c9deb0" opacity="0.79"/><ellipse cx="2232" cy="901" rx="3.4" ry="2.2" fill="#c9deb0" opacity="0.51"/><ellipse cx="2206" cy="945" rx="4.2" ry="2.1" fill="#c9deb0" opacity="0.81"/><ellipse cx="2190" cy="989" rx="3.6" ry="2.8" fill="#d3e4bf" opacity="0.6"/><ellipse cx="2117" cy="1150" rx="3.4" ry="2.4" fill="#d3e4bf" opacity="0.6"/><ellipse cx="2322" cy="1251" rx="4.4" ry="3.2" fill="#d3e4bf" opacity="0.6"/><ellipse cx="2242" cy="899" rx="3.1" ry="1.1" fill="#d3e4bf" opacity="0.6"/><ellipse cx="2374" cy="1103" rx="4.1" ry="3.1" fill="#d3e4bf" opacity="0.6"/><ellipse cx="2415" cy="1203" rx="2.7" ry="2.8" fill="#d3e4bf" opacity="0.6"/><ellipse cx="2375" cy="982" rx="4.5" ry="2.2" fill="#d3e4bf" opacity="0.6"/><ellipse cx="2328" cy="972" rx="4.4" ry="2.2" fill="#d3e4bf" opacity="0.6"/><ellipse cx="2419" cy="1272" rx="3.3" ry="2.5" fill="#d3e4bf" opacity="0.6"/><ellipse cx="2299" cy="991" rx="4.3" ry="3.3" fill="#d3e4bf" opacity="0.6"/><ellipse cx="2115" cy="895" rx="3.1" ry="1.2" fill="#d3e4bf" opacity="0.6"/><ellipse cx="2289" cy="1039" rx="2.3" ry="2.9" fill="#d3e4bf" opacity="0.6"/><ellipse cx="2350" cy="1309" rx="2.2" ry="2.0" fill="#d3e4bf" opacity="0.6"/><ellipse cx="2365" cy="1239" rx="3.0" ry="1.5" fill="#d3e4bf" opacity="0.6"/><ellipse cx="2266" cy="1144" rx="4.9" ry="2.6" fill="#d3e4bf" opacity="0.6"/><ellipse cx="2463" cy="1268" rx="3.0" ry="2.3" fill="#d3e4bf" opacity="0.6"/><ellipse cx="2458" cy="1216" rx="2.9" ry="1.5" fill="#d3e4bf" opacity="0.6"/><ellipse cx="2415" cy="1016" rx="2.4" ry="1.6" fill="#d3e4bf" opacity="0.6"/><ellipse cx="2395" cy="1181" rx="4.8" ry="2.5" fill="#d3e4bf" opacity="0.6"/><ellipse cx="2308" cy="1291" rx="2.0" ry="2.5" fill="#d3e4bf" opacity="0.6"/><ellipse cx="2525" cy="1035" rx="2.0" ry="1.3" fill="#d3e4bf" opacity="0.6"/><ellipse cx="2112" cy="1221" rx="2.9" ry="3.1" fill="#d3e4bf" opacity="0.6"/><ellipse cx="2459" cy="892" rx="2.6" ry="1.7" fill="#d3e4bf" opacity="0.6"/><ellipse cx="2213" cy="893" rx="2.4" ry="1.8" fill="#d3e4bf" opacity="0.6"/><ellipse cx="2295" cy="1127" rx="4.9" ry="1.3" fill="#d3e4bf" opacity="0.6"/><ellipse cx="2158" cy="1300" rx="2.5" ry="2.3" fill="#d3e4bf" opacity="0.6"/><ellipse cx="2231" cy="1296" rx="4.8" ry="2.4" fill="#d3e4bf" opacity="0.6"/><ellipse cx="2140" cy="1053" rx="4.0" ry="2.4" fill="#d3e4bf" opacity="0.6"/><ellipse cx="2221" cy="1065" rx="1.7" ry="2.0" fill="#d3e4bf" opacity="0.6"/><ellipse cx="2455" cy="1060" rx="3.1" ry="1.4" fill="#d3e4bf" opacity="0.6"/><ellipse cx="2406" cy="1074" rx="2.8" ry="2.9" fill="#d3e4bf" opacity="0.6"/><ellipse cx="2228" cy="916" rx="3.7" ry="2.8" fill="#d3e4bf" opacity="0.6"/><ellipse cx="2123" cy="1040" rx="4.6" ry="2.3" fill="#d3e4bf" opacity="0.6"/><ellipse cx="2275" cy="941" rx="2.5" ry="2.5" fill="#d3e4bf" opacity="0.6"/><ellipse cx="2493" cy="1188" rx="4.9" ry="2.0" fill="#d3e4bf" opacity="0.6"/><ellipse cx="2130" cy="1039" rx="2.8" ry="1.1" fill="#d3e4bf" opacity="0.6"/><ellipse cx="2135" cy="1304" rx="4.6" ry="1.3" fill="#d3e4bf" opacity="0.6"/><ellipse cx="2135" cy="1336" rx="2.1" ry="1.8" fill="#d3e4bf" opacity="0.6"/><ellipse cx="2197" cy="977" rx="1.6" ry="2.2" fill="#d3e4bf" opacity="0.6"/><ellipse cx="2434" cy="913" rx="3.2" ry="1.3" fill="#d3e4bf" opacity="0.6"/><ellipse cx="2439" cy="1301" rx="4.6" ry="2.3" fill="#d3e4bf" opacity="0.6"/><ellipse cx="2161" cy="1214" rx="1.7" ry="2.9" fill="#d3e4bf" opacity="0.6"/><ellipse cx="2229" cy="1295" rx="2.5" ry="2.9" fill="#d3e4bf" opacity="0.6"/><ellipse cx="2313" cy="991" rx="3.2" ry="2.1" fill="#d3e4bf" opacity="0.6"/><ellipse cx="2167" cy="1134" rx="3.4" ry="2.7" fill="#d3e4bf" opacity="0.6"/><ellipse cx="2246" cy="1166" rx="2.2" ry="2.3" fill="#d3e4bf" opacity="0.6"/><ellipse cx="2203" cy="1245" rx="2.2" ry="1.7" fill="#d3e4bf" opacity="0.6"/><ellipse cx="2130" cy="1019" rx="3.4" ry="1.6" fill="#d3e4bf" opacity="0.6"/><ellipse cx="2152" cy="1295" rx="2.6" ry="1.5" fill="#d3e4bf" opacity="0.6"/><ellipse cx="2272" cy="1271" rx="4.1" ry="3.3" fill="#d3e4bf" opacity="0.6"/><ellipse cx="2335" cy="1036" rx="3.3" ry="1.1" fill="#d3e4bf" opacity="0.6"/><ellipse cx="2393" cy="1270" rx="4.7" ry="3.1" fill="#d3e4bf" opacity="0.6"/><ellipse cx="2378" cy="1254" rx="2.5" ry="2.4" fill="#d3e4bf" opacity="0.6"/><ellipse cx="2170" cy="1315" rx="3.3" ry="1.4" fill="#d3e4bf" opacity="0.6"/><ellipse cx="2523" cy="1168" rx="2.2" ry="3.1" fill="#d3e4bf" opacity="0.6"/><ellipse cx="2369" cy="1169" rx="4.6" ry="1.8" fill="#d3e4bf" opacity="0.6"/><ellipse cx="2219" cy="1145" rx="2.2" ry="2.7" fill="#d3e4bf" opacity="0.6"/><ellipse cx="2305" cy="973" rx="1.9" ry="1.4" fill="#d3e4bf" opacity="0.6"/><ellipse cx="2348" cy="1305" rx="4.3" ry="3.1" fill="#d3e4bf" opacity="0.6"/><ellipse cx="2344" cy="1252" rx="2.7" ry="1.9" fill="#d3e4bf" opacity="0.6"/><ellipse cx="2489" cy="1000" rx="3.7" ry="2.4" fill="#d3e4bf" opacity="0.6"/><ellipse cx="2122" cy="1143" rx="4.3" ry="3.2" fill="#d3e4bf" opacity="0.6"/><ellipse cx="2280" cy="1298" rx="1.6" ry="3.3" fill="#d3e4bf" opacity="0.6"/><ellipse cx="2393" cy="1257" rx="3.1" ry="2.5" fill="#d3e4bf" opacity="0.6"/><ellipse cx="2455" cy="984" rx="2.1" ry="2.9" fill="#d3e4bf" opacity="0.6"/><ellipse cx="2477" cy="986" rx="3.4" ry="2.3" fill="#d3e4bf" opacity="0.6"/><ellipse cx="2234" cy="1272" rx="2.5" ry="2.9" fill="#d3e4bf" opacity="0.6"/><ellipse cx="2277" cy="948" rx="4.9" ry="1.4" fill="#d3e4bf" opacity="0.6"/><ellipse cx="2144" cy="894" rx="2.7" ry="1.1" fill="#d3e4bf" opacity="0.6"/><ellipse cx="2167" cy="1318" rx="2.4" ry="2.8" fill="#d3e4bf" opacity="0.6"/><ellipse cx="2192" cy="886" rx="1.5" ry="1.3" fill="#d3e4bf" opacity="0.6"/><ellipse cx="2510" cy="1092" rx="2.4" ry="1.1" fill="#d3e4bf" opacity="0.6"/><ellipse cx="2376" cy="1027" rx="2.1" ry="2.1" fill="#d3e4bf" opacity="0.6"/><ellipse cx="2406" cy="1039" rx="3.5" ry="1.5" fill="#d3e4bf" opacity="0.6"/><ellipse cx="2340" cy="900" rx="4.7" ry="3.3" fill="#d3e4bf" opacity="0.6"/><ellipse cx="2348" cy="1100" rx="2.9" ry="2.9" fill="#d3e4bf" opacity="0.6"/><ellipse cx="2349" cy="1210" rx="3.1" ry="2.0" fill="#d3e4bf" opacity="0.6"/><ellipse cx="2411" cy="964" rx="2.7" ry="1.6" fill="#d3e4bf" opacity="0.6"/><ellipse cx="2189" cy="1281" rx="2.6" ry="2.8" fill="#d3e4bf" opacity="0.6"/><ellipse cx="2121" cy="1310" rx="3.1" ry="2.9" fill="#d3e4bf" opacity="0.6"/><ellipse cx="2146" cy="1161" rx="4.3" ry="1.7" fill="#d3e4bf" opacity="0.6"/><ellipse cx="2140" cy="1058" rx="4.2" ry="2.9" fill="#d3e4bf" opacity="0.6"/><ellipse cx="2128" cy="1031" rx="4.7" ry="1.7" fill="#d3e4bf" opacity="0.6"/><ellipse cx="2137" cy="1284" rx="4.4" ry="2.1" fill="#d3e4bf" opacity="0.6"/><ellipse cx="2400" cy="1229" rx="4.4" ry="1.5" fill="#d3e4bf" opacity="0.6"/><ellipse cx="2414" cy="1309" rx="4.3" ry="2.3" fill="#d3e4bf" opacity="0.6"/><ellipse cx="2269" cy="1336" rx="5.0" ry="3.0" fill="#d3e4bf" opacity="0.6"/><ellipse cx="2318" cy="1295" rx="4.6" ry="2.3" fill="#d3e4bf" opacity="0.6"/><ellipse cx="2157" cy="1165" rx="2.0" ry="1.8" fill="#d3e4bf" opacity="0.6"/><ellipse cx="2344" cy="1113" rx="3.8" ry="3.1" fill="#d3e4bf" opacity="0.6"/><ellipse cx="2508" cy="1024" rx="4.8" ry="1.8" fill="#d3e4bf" opacity="0.6"/><ellipse cx="2250" cy="1232" rx="4.9" ry="2.3" fill="#d3e4bf" opacity="0.6"/><ellipse cx="2442" cy="1264" rx="2.6" ry="2.5" fill="#d3e4bf" opacity="0.6"/><ellipse cx="2503" cy="889" rx="1.9" ry="3.2" fill="#d3e4bf" opacity="0.6"/><ellipse cx="2343" cy="1075" rx="4.3" ry="2.1" fill="#d3e4bf" opacity="0.6"/><ellipse cx="2160" cy="1043" rx="4.2" ry="2.6" fill="#d3e4bf" opacity="0.6"/><ellipse cx="2313" cy="885" rx="5.0" ry="1.2" fill="#d3e4bf" opacity="0.6"/><ellipse cx="2220" cy="1247" rx="4.8" ry="2.7" fill="#d3e4bf" opacity="0.6"/><ellipse cx="2264" cy="1227" rx="3.8" ry="2.4" fill="#d3e4bf" opacity="0.6"/><ellipse cx="2438" cy="1137" rx="3.4" ry="1.6" fill="#d3e4bf" opacity="0.6"/><ellipse cx="2434" cy="930" rx="1.8" ry="2.6" fill="#d3e4bf" opacity="0.6"/><ellipse cx="2120" cy="1287" rx="2.2" ry="2.2" fill="#d3e4bf" opacity="0.6"/><ellipse cx="2212" cy="1104" rx="3.7" ry="1.5" fill="#d3e4bf" opacity="0.6"/><ellipse cx="2334" cy="1332" rx="2.0" ry="1.5" fill="#d3e4bf" opacity="0.6"/><ellipse cx="2184" cy="930" rx="1.5" ry="3.4" fill="#d3e4bf" opacity="0.6"/><ellipse cx="2514" cy="898" rx="4.4" ry="2.4" fill="#d3e4bf" opacity="0.6"/><ellipse cx="2189" cy="1290" rx="1.9" ry="2.6" fill="#d3e4bf" opacity="0.6"/><ellipse cx="2389" cy="1205" rx="2.3" ry="1.4" fill="#d3e4bf" opacity="0.6"/><ellipse cx="2371" cy="1017" rx="3.6" ry="2.8" fill="#d3e4bf" opacity="0.6"/><ellipse cx="2114" cy="1217" rx="4.9" ry="2.0" fill="#d3e4bf" opacity="0.6"/><ellipse cx="2347" cy="1033" rx="4.6" ry="1.6" fill="#d3e4bf" opacity="0.6"/><ellipse cx="2143" cy="1114" rx="3.1" ry="2.4" fill="#d3e4bf" opacity="0.6"/><ellipse cx="2188" cy="1312" rx="3.4" ry="2.0" fill="#d3e4bf" opacity="0.6"/><ellipse cx="2421" cy="898" rx="4.7" ry="3.1" fill="#d3e4bf" opacity="0.6"/><ellipse cx="2210" cy="1091" rx="1.6" ry="3.0" fill="#d3e4bf" opacity="0.6"/><ellipse cx="2519" cy="1157" rx="4.9" ry="2.2" fill="#d3e4bf" opacity="0.6"/><ellipse cx="2473" cy="1272" rx="4.7" ry="2.1" fill="#d3e4bf" opacity="0.6"/><ellipse cx="2319" cy="896" rx="4.8" ry="1.2" fill="#d3e4bf" opacity="0.6"/><ellipse cx="2350" cy="1160" rx="2.1" ry="1.9" fill="#d3e4bf" opacity="0.6"/><ellipse cx="2229" cy="884" rx="2.9" ry="2.0" fill="#d3e4bf" opacity="0.6"/><ellipse cx="2409" cy="1205" rx="4.8" ry="3.2" fill="#d3e4bf" opacity="0.6"/><ellipse cx="2210" cy="1164" rx="3.9" ry="3.0" fill="#d3e4bf" opacity="0.6"/><ellipse cx="2160" cy="1035" rx="3.6" ry="1.8" fill="#d3e4bf" opacity="0.6"/><ellipse cx="2494" cy="1073" rx="4.0" ry="1.2" fill="#d3e4bf" opacity="0.6"/><ellipse cx="2486" cy="1332" rx="4.9" ry="1.9" fill="#d3e4bf" opacity="0.6"/><ellipse cx="2458" cy="1337" rx="1.9" ry="1.2" fill="#d3e4bf" opacity="0.6"/><ellipse cx="2386" cy="1340" rx="1.6" ry="3.1" fill="#d3e4bf" opacity="0.6"/><ellipse cx="2384" cy="1101" rx="2.0" ry="2.3" fill="#d3e4bf" opacity="0.6"/><ellipse cx="2314" cy="974" rx="4.7" ry="2.8" fill="#d3e4bf" opacity="0.6"/><ellipse cx="2171" cy="1169" rx="3.6" ry="3.3" fill="#d3e4bf" opacity="0.6"/><ellipse cx="2522" cy="1294" rx="1.7" ry="2.1" fill="#d3e4bf" opacity="0.6"/><ellipse cx="2166" cy="1229" rx="1.8" ry="3.1" fill="#d3e4bf" opacity="0.6"/><ellipse cx="2365" cy="1179" rx="4.8" ry="3.2" fill="#d3e4bf" opacity="0.6"/><ellipse cx="2415" cy="1172" rx="3.4" ry="2.3" fill="#d3e4bf" opacity="0.6"/><ellipse cx="2112" cy="971" rx="3.9" ry="2.0" fill="#d3e4bf" opacity="0.6"/><ellipse cx="2294" cy="1273" rx="2.9" ry="2.8" fill="#d3e4bf" opacity="0.6"/><ellipse cx="2446" cy="1267" rx="2.3" ry="2.5" fill="#d3e4bf" opacity="0.6"/><ellipse cx="2301" cy="1153" rx="1.8" ry="1.5" fill="#d3e4bf" opacity="0.6"/><ellipse cx="2206" cy="1245" rx="4.2" ry="2.0" fill="#d3e4bf" opacity="0.6"/><ellipse cx="2360" cy="1085" rx="3.4" ry="1.7" fill="#d3e4bf" opacity="0.6"/><ellipse cx="2248" cy="1325" rx="4.6" ry="1.3" fill="#d3e4bf" opacity="0.6"/><ellipse cx="2151" cy="1282" rx="3.1" ry="2.6" fill="#d3e4bf" opacity="0.6"/><ellipse cx="2359" cy="1161" rx="4.7" ry="1.4" fill="#d3e4bf" opacity="0.6"/><ellipse cx="2470" cy="1001" rx="1.8" ry="1.7" fill="#d3e4bf" opacity="0.6"/><ellipse cx="2321" cy="1253" rx="3.5" ry="3.4" fill="#d3e4bf" opacity="0.6"/><ellipse cx="2181" cy="1056" rx="3.5" ry="2.5" fill="#d3e4bf" opacity="0.6"/><ellipse cx="2399" cy="1115" rx="1.9" ry="3.0" fill="#d3e4bf" opacity="0.6"/><ellipse cx="2442" cy="913" rx="4.3" ry="1.0" fill="#d3e4bf" opacity="0.6"/><ellipse cx="2394" cy="1169" rx="2.5" ry="1.2" fill="#d3e4bf" opacity="0.6"/><ellipse cx="2211" cy="1171" rx="3.4" ry="3.0" fill="#d3e4bf" opacity="0.6"/><ellipse cx="2174" cy="1168" rx="2.6" ry="1.1" fill="#d3e4bf" opacity="0.6"/><ellipse cx="2181" cy="932" rx="2.1" ry="1.1" fill="#d3e4bf" opacity="0.6"/><ellipse cx="2520" cy="1047" rx="4.2" ry="2.1" fill="#d3e4bf" opacity="0.6"/><ellipse cx="2320" cy="997" rx="4.8" ry="1.5" fill="#d3e4bf" opacity="0.6"/><ellipse cx="2513" cy="1243" rx="4.5" ry="1.2" fill="#d3e4bf" opacity="0.6"/><ellipse cx="2524" cy="1184" rx="3.5" ry="2.4" fill="#d3e4bf" opacity="0.6"/><ellipse cx="2292" cy="1323" rx="4.9" ry="3.4" fill="#d3e4bf" opacity="0.6"/><ellipse cx="2161" cy="1126" rx="4.0" ry="1.5" fill="#d3e4bf" opacity="0.6"/><ellipse cx="2483" cy="1230" rx="1.9" ry="1.7" fill="#d3e4bf" opacity="0.6"/><ellipse cx="2393" cy="1290" rx="5.0" ry="1.7" fill="#d3e4bf" opacity="0.6"/><ellipse cx="2460" cy="1153" rx="2.8" ry="1.6" fill="#d3e4bf" opacity="0.6"/><ellipse cx="2145" cy="896" rx="3.0" ry="1.3" fill="#d3e4bf" opacity="0.6"/><ellipse cx="2188" cy="1030" rx="2.0" ry="1.5" fill="#d3e4bf" opacity="0.6"/><ellipse cx="2210" cy="1334" rx="3.0" ry="2.5" fill="#d3e4bf" opacity="0.6"/><ellipse cx="2333" cy="1326" rx="4.4" ry="3.3" fill="#d3e4bf" opacity="0.6"/><ellipse cx="2475" cy="1223" rx="4.6" ry="1.8" fill="#d3e4bf" opacity="0.6"/><ellipse cx="2361" cy="1034" rx="4.7" ry="1.7" fill="#d3e4bf" opacity="0.6"/><ellipse cx="2530" cy="990" rx="2.7" ry="2.9" fill="#d3e4bf" opacity="0.6"/><ellipse cx="2346" cy="980" rx="1.9" ry="3.2" fill="#d3e4bf" opacity="0.6"/><ellipse cx="2189" cy="1117" rx="4.4" ry="2.2" fill="#d3e4bf" opacity="0.6"/><ellipse cx="2305" cy="956" rx="4.8" ry="2.5" fill="#d3e4bf" opacity="0.6"/><ellipse cx="2387" cy="1063" rx="4.0" ry="1.9" fill="#d3e4bf" opacity="0.6"/><ellipse cx="2177" cy="1046" rx="4.2" ry="3.2" fill="#d3e4bf" opacity="0.6"/><ellipse cx="2321" cy="1187" rx="4.8" ry="2.6" fill="#d3e4bf" opacity="0.6"/><ellipse cx="2520" cy="998" rx="4.6" ry="2.9" fill="#d3e4bf" opacity="0.6"/><ellipse cx="2345" cy="1156" rx="2.1" ry="1.0" fill="#d3e4bf" opacity="0.6"/><ellipse cx="2113" cy="1294" rx="2.9" ry="2.5" fill="#d3e4bf" opacity="0.6"/><ellipse cx="2290" cy="1289" rx="4.1" ry="1.9" fill="#d3e4bf" opacity="0.6"/><ellipse cx="2375" cy="980" rx="4.8" ry="1.4" fill="#d3e4bf" opacity="0.6"/><ellipse cx="2492" cy="1129" rx="2.0" ry="3.5" fill="#d3e4bf" opacity="0.6"/><ellipse cx="2186" cy="1195" rx="2.4" ry="1.3" fill="#d3e4bf" opacity="0.6"/><ellipse cx="2440" cy="1294" rx="4.6" ry="2.7" fill="#d3e4bf" opacity="0.6"/><ellipse cx="2376" cy="953" rx="5.0" ry="1.8" fill="#d3e4bf" opacity="0.6"/><ellipse cx="2375" cy="892" rx="2.6" ry="2.3" fill="#d3e4bf" opacity="0.6"/><ellipse cx="2304" cy="1072" rx="2.8" ry="1.0" fill="#d3e4bf" opacity="0.6"/><ellipse cx="2378" cy="1045" rx="1.9" ry="1.9" fill="#d3e4bf" opacity="0.6"/><ellipse cx="2388" cy="1226" rx="3.0" ry="1.3" fill="#d3e4bf" opacity="0.6"/><ellipse cx="2369" cy="1159" rx="3.2" ry="3.4" fill="#d3e4bf" opacity="0.6"/><ellipse cx="2258" cy="1123" rx="1.6" ry="1.3" fill="#d3e4bf" opacity="0.6"/><ellipse cx="2184" cy="967" rx="2.1" ry="1.3" fill="#d3e4bf" opacity="0.6"/><ellipse cx="2495" cy="1153" rx="3.2" ry="2.4" fill="#d3e4bf" opacity="0.6"/><ellipse cx="2222" cy="1283" rx="4.1" ry="2.1" fill="#d3e4bf" opacity="0.6"/><ellipse cx="2109" cy="880" rx="1.6" ry="2.8" fill="#d3e4bf" opacity="0.6"/><ellipse cx="2113" cy="1089" rx="3.3" ry="1.9" fill="#d3e4bf" opacity="0.6"/><ellipse cx="2228" cy="1317" rx="4.8" ry="2.9" fill="#d3e4bf" opacity="0.6"/><ellipse cx="2331" cy="1323" rx="4.0" ry="1.6" fill="#d3e4bf" opacity="0.6"/><ellipse cx="2160" cy="948" rx="1.9" ry="2.0" fill="#d3e4bf" opacity="0.6"/><ellipse cx="2361" cy="977" rx="1.8" ry="1.8" fill="#d3e4bf" opacity="0.6"/><ellipse cx="2297" cy="1289" rx="4.6" ry="3.1" fill="#d3e4bf" opacity="0.6"/><ellipse cx="2212" cy="1263" rx="2.5" ry="2.5" fill="#d3e4bf" opacity="0.6"/><ellipse cx="2330" cy="988" rx="3.4" ry="1.7" fill="#d3e4bf" opacity="0.6"/><ellipse cx="2443" cy="989" rx="4.2" ry="1.5" fill="#d3e4bf" opacity="0.6"/><ellipse cx="2104" cy="1084" rx="4.6" ry="2.6" fill="#d3e4bf" opacity="0.6"/><ellipse cx="2209" cy="1115" rx="2.7" ry="2.7" fill="#d3e4bf" opacity="0.6"/><ellipse cx="2224" cy="958" rx="5.0" ry="1.1" fill="#d3e4bf" opacity="0.6"/><ellipse cx="2158" cy="1028" rx="2.7" ry="2.4" fill="#d3e4bf" opacity="0.6"/><ellipse cx="2313" cy="952" rx="4.4" ry="2.8" fill="#d3e4bf" opacity="0.6"/><ellipse cx="2178" cy="959" rx="1.9" ry="2.3" fill="#d3e4bf" opacity="0.6"/><ellipse cx="2374" cy="1215" rx="2.3" ry="3.2" fill="#d3e4bf" opacity="0.6"/><ellipse cx="2488" cy="1100" rx="1.9" ry="1.4" fill="#d3e4bf" opacity="0.6"/><ellipse cx="2409" cy="911" rx="3.7" ry="2.8" fill="#d3e4bf" opacity="0.6"/><ellipse cx="2109" cy="948" rx="2.3" ry="2.1" fill="#d3e4bf" opacity="0.6"/><ellipse cx="2466" cy="1251" rx="2.9" ry="1.0" fill="#d3e4bf" opacity="0.6"/><ellipse cx="2333" cy="971" rx="2.5" ry="3.3" fill="#d3e4bf" opacity="0.6"/><ellipse cx="2224" cy="1064" rx="3.9" ry="3.3" fill="#d3e4bf" opacity="0.6"/><ellipse cx="2126" cy="1154" rx="3.8" ry="1.3" fill="#d3e4bf" opacity="0.6"/><ellipse cx="2144" cy="1035" rx="2.7" ry="2.7" fill="#d3e4bf" opacity="0.6"/><ellipse cx="2516" cy="1188" rx="3.0" ry="3.5" fill="#d3e4bf" opacity="0.6"/><ellipse cx="2502" cy="1085" rx="3.1" ry="2.3" fill="#d3e4bf" opacity="0.6"/><ellipse cx="2145" cy="1179" rx="4.0" ry="2.2" fill="#d3e4bf" opacity="0.6"/><ellipse cx="2351" cy="1302" rx="3.7" ry="2.7" fill="#d3e4bf" opacity="0.6"/><ellipse cx="2480" cy="1221" rx="3.1" ry="3.4" fill="#d3e4bf" opacity="0.6"/><ellipse cx="2507" cy="917" rx="5.0" ry="1.4" fill="#d3e4bf" opacity="0.6"/><ellipse cx="2478" cy="1179" rx="4.2" ry="1.9" fill="#d3e4bf" opacity="0.6"/><ellipse cx="2223" cy="962" rx="1.9" ry="1.3" fill="#d3e4bf" opacity="0.6"/><ellipse cx="2173" cy="1261" rx="3.4" ry="3.1" fill="#d3e4bf" opacity="0.6"/><ellipse cx="2524" cy="1084" rx="2.1" ry="3.2" fill="#d3e4bf" opacity="0.6"/><ellipse cx="2149" cy="1119" rx="4.5" ry="1.3" fill="#d3e4bf" opacity="0.6"/><ellipse cx="2215" cy="1183" rx="1.8" ry="3.2" fill="#d3e4bf" opacity="0.6"/><ellipse cx="2421" cy="1138" rx="4.2" ry="1.3" fill="#d3e4bf" opacity="0.6"/><ellipse cx="2464" cy="1131" rx="2.8" ry="3.0" fill="#d3e4bf" opacity="0.6"/><ellipse cx="2297" cy="900" rx="3.9" ry="1.1" fill="#d3e4bf" opacity="0.6"/><ellipse cx="2342" cy="981" rx="2.9" ry="2.0" fill="#d3e4bf" opacity="0.6"/><ellipse cx="2400" cy="1177" rx="2.7" ry="1.6" fill="#d3e4bf" opacity="0.6"/><ellipse cx="2435" cy="910" rx="3.5" ry="2.8" fill="#d3e4bf" opacity="0.6"/><ellipse cx="2370" cy="892" rx="1.8" ry="2.6" fill="#d3e4bf" opacity="0.6"/><ellipse cx="2438" cy="1175" rx="4.9" ry="2.8" fill="#d3e4bf" opacity="0.6"/><ellipse cx="2283" cy="1325" rx="2.3" ry="1.3" fill="#d3e4bf" opacity="0.6"/><ellipse cx="2268" cy="893" rx="3.5" ry="2.3" fill="#d3e4bf" opacity="0.6"/><ellipse cx="2181" cy="1164" rx="3.1" ry="2.7" fill="#d3e4bf" opacity="0.6"/><ellipse cx="2440" cy="1252" rx="3.9" ry="1.2" fill="#d3e4bf" opacity="0.6"/><ellipse cx="2347" cy="1190" rx="2.2" ry="1.9" fill="#d3e4bf" opacity="0.6"/><ellipse cx="2324" cy="1006" rx="1.8" ry="1.7" fill="#d3e4bf" opacity="0.6"/><ellipse cx="2278" cy="1240" rx="5.0" ry="3.1" fill="#d3e4bf" opacity="0.6"/><ellipse cx="2484" cy="1337" rx="3.3" ry="2.5" fill="#d3e4bf" opacity="0.6"/><ellipse cx="2112" cy="1215" rx="4.4" ry="1.9" fill="#d3e4bf" opacity="0.6"/><ellipse cx="2362" cy="925" rx="4.8" ry="2.1" fill="#d3e4bf" opacity="0.6"/><ellipse cx="2297" cy="983" rx="4.5" ry="3.4" fill="#d3e4bf" opacity="0.6"/><ellipse cx="2277" cy="1123" rx="2.5" ry="2.8" fill="#d3e4bf" opacity="0.6"/><ellipse cx="2366" cy="1274" rx="1.6" ry="2.3" fill="#d3e4bf" opacity="0.6"/><ellipse cx="2517" cy="891" rx="3.7" ry="1.9" fill="#d3e4bf" opacity="0.6"/><ellipse cx="2150" cy="1020" rx="4.9" ry="1.5" fill="#d3e4bf" opacity="0.6"/><ellipse cx="2304" cy="1283" rx="1.9" ry="1.1" fill="#d3e4bf" opacity="0.6"/><ellipse cx="2359" cy="1170" rx="1.6" ry="3.1" fill="#d3e4bf" opacity="0.6"/><ellipse cx="2430" cy="1157" rx="2.4" ry="3.3" fill="#d3e4bf" opacity="0.6"/><ellipse cx="2195" cy="1345" rx="3.4" ry="3.3" fill="#d3e4bf" opacity="0.6"/><ellipse cx="2334" cy="1162" rx="4.8" ry="2.1" fill="#d3e4bf" opacity="0.6"/><ellipse cx="2235" cy="1330" rx="5.0" ry="1.3" fill="#d3e4bf" opacity="0.6"/><ellipse cx="2469" cy="1234" rx="2.2" ry="1.6" fill="#d3e4bf" opacity="0.6"/><ellipse cx="2125" cy="1269" rx="1.8" ry="3.1" fill="#d3e4bf" opacity="0.6"/><ellipse cx="2489" cy="876" rx="2.0" ry="3.4" fill="#d0e2bb" opacity="0.6"/><ellipse cx="2347" cy="631" rx="5.3" ry="1.4" fill="#d0e2bb" opacity="0.6"/><ellipse cx="2477" cy="876" rx="3.7" ry="2.3" fill="#d0e2bb" opacity="0.6"/><ellipse cx="2509" cy="778" rx="5.9" ry="3.1" fill="#d0e2bb" opacity="0.6"/><ellipse cx="2419" cy="613" rx="5.5" ry="3.3" fill="#d0e2bb" opacity="0.6"/><ellipse cx="2358" cy="793" rx="2.7" ry="2.3" fill="#d0e2bb" opacity="0.6"/><ellipse cx="2362" cy="623" rx="3.6" ry="3.1" fill="#d0e2bb" opacity="0.6"/><ellipse cx="2472" cy="838" rx="5.6" ry="3.2" fill="#d0e2bb" opacity="0.6"/><ellipse cx="2380" cy="817" rx="4.8" ry="1.3" fill="#d0e2bb" opacity="0.6"/><ellipse cx="2333" cy="855" rx="2.3" ry="3.6" fill="#d0e2bb" opacity="0.6"/><ellipse cx="2519" cy="717" rx="3.9" ry="1.2" fill="#d0e2bb" opacity="0.6"/><ellipse cx="2345" cy="838" rx="4.3" ry="1.8" fill="#d0e2bb" opacity="0.6"/><ellipse cx="2368" cy="621" rx="4.9" ry="1.8" fill="#d0e2bb" opacity="0.6"/><ellipse cx="2341" cy="831" rx="2.9" ry="1.5" fill="#d0e2bb" opacity="0.6"/><ellipse cx="2443" cy="703" rx="3.9" ry="2.4" fill="#d0e2bb" opacity="0.6"/><ellipse cx="2438" cy="675" rx="3.8" ry="3.9" fill="#d0e2bb" opacity="0.6"/><ellipse cx="2372" cy="717" rx="3.6" ry="2.4" fill="#d0e2bb" opacity="0.6"/><ellipse cx="2398" cy="776" rx="5.7" ry="1.5" fill="#d0e2bb" opacity="0.6"/><ellipse cx="2419" cy="874" rx="1.5" ry="3.1" fill="#d0e2bb" opacity="0.6"/><ellipse cx="2404" cy="741" rx="4.8" ry="1.8" fill="#d0e2bb" opacity="0.6"/><ellipse cx="2343" cy="779" rx="5.9" ry="2.4" fill="#d0e2bb" opacity="0.6"/><ellipse cx="2517" cy="744" rx="4.6" ry="3.0" fill="#d0e2bb" opacity="0.6"/><ellipse cx="2483" cy="782" rx="4.6" ry="3.1" fill="#d0e2bb" opacity="0.6"/><ellipse cx="2380" cy="847" rx="4.2" ry="2.5" fill="#d0e2bb" opacity="0.6"/><ellipse cx="2456" cy="696" rx="2.6" ry="3.7" fill="#d0e2bb" opacity="0.6"/><ellipse cx="2372" cy="700" rx="4.2" ry="2.5" fill="#d0e2bb" opacity="0.6"/><ellipse cx="2348" cy="676" rx="4.9" ry="1.4" fill="#d0e2bb" opacity="0.6"/><ellipse cx="2426" cy="631" rx="1.8" ry="3.9" fill="#d0e2bb" opacity="0.6"/><ellipse cx="2418" cy="731" rx="1.8" ry="1.5" fill="#d0e2bb" opacity="0.6"/><ellipse cx="2433" cy="860" rx="5.7" ry="2.2" fill="#d0e2bb" opacity="0.6"/><ellipse cx="2432" cy="662" rx="5.3" ry="1.4" fill="#d0e2bb" opacity="0.6"/><ellipse cx="2391" cy="654" rx="4.8" ry="3.6" fill="#d0e2bb" opacity="0.6"/><ellipse cx="2418" cy="693" rx="5.6" ry="1.3" fill="#d0e2bb" opacity="0.6"/><ellipse cx="2483" cy="689" rx="5.6" ry="1.8" fill="#d0e2bb" opacity="0.6"/><ellipse cx="2504" cy="838" rx="2.9" ry="1.6" fill="#d0e2bb" opacity="0.6"/><ellipse cx="2457" cy="621" rx="4.1" ry="1.9" fill="#d0e2bb" opacity="0.6"/><ellipse cx="2463" cy="629" rx="4.6" ry="1.8" fill="#d0e2bb" opacity="0.6"/><ellipse cx="2445" cy="802" rx="2.3" ry="2.0" fill="#d0e2bb" opacity="0.6"/><ellipse cx="2473" cy="793" rx="5.5" ry="1.1" fill="#d0e2bb" opacity="0.6"/><ellipse cx="2408" cy="698" rx="5.5" ry="2.5" fill="#d0e2bb" opacity="0.6"/><path d="M1984.0 528.0 L2216.0 528.0 L2212.0 545.0 L2206.0 584.0 L2201.0 635.0 L2191.0 674.0 L2174.0 700.0 L2148.0 725.0 L2144.0 734.0 L2149.0 745.0 L2133.0 750.0 L2129.0 760.0 L2117.0 763.0 L2140.0 769.0 L2162.0 772.0 L2168.0 790.0 L2168.0 821.0 L2100.0 818.0 L2090.0 817.0 L2074.0 820.0 L2060.0 826.0 L2024.0 835.0 L1984.0 851.0 Z" fill="#aad3df"/><path d="M2222.0 528.0 L2290.0 528.0 L2284.0 545.0 L2262.0 552.0 L2240.0 550.0 L2226.0 542.0 Z" fill="#aad3df"/><path d="M2219.0 553.0 L2262.0 548.0 L2273.0 558.0 L2268.0 584.0 L2280.0 604.0 L2300.0 607.0 L2300.0 628.0 L2280.0 633.0 L2255.0 643.0 L2242.0 640.0 L2239.0 616.0 L2229.0 596.0 L2222.0 575.0 Z" fill="#aad3df"/><path d="M2132.6 751.3 L2150.8 750.2 L2166.8 759.8 L2182.9 766.2 L2182.9 770.5 L2166.8 768.4 L2150.8 759.8 L2134.8 757.7 Z" fill="#aad3df"/><path d="M2117.7 764.0 L2134.8 762.0 L2148.7 767.3 L2156.2 774.8 L2150.8 779.0 L2137.0 779.0 L2134.8 770.5 L2119.8 768.4 Z" fill="#f0eee2"/><path d="M2096.3 791.9 L2104.9 785.5 L2115.6 783.3 L2134.8 782.3 L2137.0 787.6 L2128.4 789.7 L2124.1 796.2 L2145.5 796.2 L2147.6 801.5 L2141.2 806.8 L2119.8 806.8 L2102.7 803.6 Z" fill="#f0eee2"/><path d="M2168.0 800.0 L2160.0 806.0 L2150.0 810.0 L2168.0 812.0 Z" fill="#f0eee2"/><path d="M2147.6 785.5 L2156.2 781.2 L2162.6 783.3 L2164.7 796.2 L2154.0 800.4 L2148.7 794.0 Z" fill="#f0eee2"/><path d="M2193.0 528.0 L2185.0 560.0 L2178.0 594.0 L2165.0 653.0 L2139.0 697.0 L2114.0 725.0 L2078.0 756.0 L2062.0 789.0 L2030.0 808.0 L1984.0 828.0 M2062 789 L2088 822" stroke="#9a8fb0" stroke-width="1.4" fill="none"/><path d="M1997.2 1173.0 L2005.1 1170.2 L2015.9 1165.9 L2023.5 1163.5 L2034.8 1159.0 L2042.8 1154.5 L2050.1 1151.5 L2061.3 1146.9 L2070.1 1144.9 L2080.4 1141.0 L2087.7 1137.3 L2099.7 1136.8 L2108.5 1133.4 L2116.5 1130.0 L2125.8 1125.0 L2138.5 1119.8 L2149.6 1116.8 L2157.0 1123.3 L2159.9 1132.0 L2165.6 1139.4 L2172.7 1144.9 L2183.3 1144.7 L2193.7 1144.0 L2203.9 1142.0 L2215.8 1143.2 L2226.6 1141.3 L2235.7 1140.3 L2245.9 1141.8 L2254.5 1140.4 L2263.4 1139.3 L2271.2 1137.5 L2282.0 1136.6 L2293.8 1133.6 L2304.7 1134.0 L2313.5 1130.2 L2324.2 1128.3 L2335.0 1126.7 L2344.9 1135.0 L2357.5 1134.1 L2364.7 1132.7 L2378.0 1135.5 L2388.0 1133.3 L2397.1 1131.6 L2406.4 1130.9 L2414.3 1128.7 L2424.4 1126.7 L2434.5 1128.4 L2443.1 1128.0 L2453.7 1132.0 L2464.1 1131.7 L2472.6 1135.3 L2481.4 1136.8 L2489.5 1142.7 L2501.1 1144.5 L2509.7 1148.8 L2519.5 1153.2 L2527.0 1154.8 M2149.6 1116.8 L2155.0 1125.6 L2162.8 1131.2 L2168.3 1137.8 L2172.7 1144.9 L2172.8 1155.0 L2175.2 1165.8 L2174.4 1178.0 L2169.0 1190.1 L2167.7 1200.0 L2162.8 1211.1 L2164.0 1218.8 L2161.9 1228.9 L2162.5 1237.8 L2161.3 1247.6 L2162.8 1257.5 L2163.9 1268.8 L2163.0 1276.5 L2160.8 1287.8 L2161.4 1296.6 L2159.3 1304.3 L2161.8 1315.9 L2161.6 1324.8 L2159.6 1334.3 L2159.5 1343.6 M1997.2 1173.0 L2003.8 1163.4 L2008.0 1154.4 L2014.1 1144.5 L2019.1 1138.9 L2023.7 1128.3 L2024.7 1118.7 L2029.6 1109.7 L2032.0 1097.7 L2034.0 1090.3 L2037.0 1078.7 L2039.8 1067.4 L2038.2 1057.3 L2039.2 1048.7 L2041.0 1040.3 L2043.6 1029.0 L2044.5 1017.7 L2044.4 1008.5 L2044.6 998.2 L2043.7 988.1 L2045.3 979.3 L2046.5 969.1 L2048.7 955.6 L2050.2 946.2 L2054.8 939.3 L2058.9 930.7 L2061.8 921.4 L2059.6 910.9 L2059.4 901.6 L2059.4 891.1 L2060.2 880.0 M1997.2 1173.0 L2002.3 1181.4 L2008.5 1186.6 L2014.7 1195.2 L2022.5 1202.8 L2027.0 1211.1 L2035.0 1217.9 L2044.6 1222.9 L2051.3 1231.0 L2059.7 1239.3 L2066.8 1244.2 L2076.0 1247.4 L2086.7 1249.4 L2095.0 1252.8 L2106.5 1254.2 L2117.6 1254.2 L2124.6 1257.1 L2133.2 1254.3 L2142.5 1257.5 L2154.4 1256.7 L2162.8 1257.5 L2172.1 1258.5 L2181.0 1262.8 L2189.4 1265.4 L2197.8 1267.5 L2205.3 1271.0 L2215.8 1274.0 L2223.5 1280.1 L2234.1 1285.4 L2241.5 1289.0 L2249.8 1295.2 L2258.8 1300.5 L2267.0 1294.5 L2272.8 1285.0 L2282.0 1277.4 L2289.3 1271.5 L2298.0 1265.1 L2304.3 1258.4 L2311.8 1252.2 L2318.4 1244.2 L2319.2 1235.0 L2317.5 1225.9 L2318.0 1214.9 L2318.4 1204.5 L2328.4 1203.4 L2337.9 1197.2 L2344.9 1196.2 M2344.9 1135.0 L2340.0 1144.9 L2338.7 1155.3 L2338.5 1165.7 L2338.3 1178.0 L2341.8 1185.6 L2344.9 1196.2 L2343.6 1207.4 L2344.5 1215.3 L2341.5 1226.7 L2343.0 1233.6 L2341.6 1244.2 L2335.7 1253.4 L2331.7 1260.6 L2327.3 1269.4 L2319.5 1279.9 L2315.1 1287.3 L2304.5 1290.1 L2295.3 1292.1 L2286.2 1293.5 L2279.2 1296.0 L2268.0 1298.7 L2258.8 1300.5 L2258.0 1310.1 L2258.4 1321.2 L2257.7 1334.5 L2258.8 1343.6 M2344.9 1196.2 L2352.4 1200.2 L2364.7 1202.8 L2370.5 1204.9 L2381.4 1207.8 L2389.6 1208.9 L2401.9 1208.2 L2409.4 1210.0 L2419.6 1209.8 L2431.0 1211.1 L2440.2 1212.3 L2449.3 1209.3 L2460.2 1211.5 L2468.7 1208.4 L2476.8 1209.4 L2487.3 1209.5 M2487.3 1209.5 L2492.5 1200.6 L2498.3 1195.0 L2503.7 1187.3 L2507.2 1178.0 L2511.2 1170.0 L2517.1 1162.9 L2525.2 1154.1 L2530.0 1144.9 M2487.3 1209.5 L2483.5 1218.1 L2483.1 1230.4 L2479.8 1240.2 L2477.8 1249.9 L2474.1 1260.8 L2472.1 1269.5 L2471.1 1279.6 L2472.2 1286.8 L2468.1 1297.6 L2469.2 1305.7 L2466.6 1314.4 L2464.7 1325.2 L2465.9 1334.9 L2464.1 1343.6 M2340.0 1068.7 L2339.1 1077.3 L2342.3 1088.7 L2340.9 1099.2 L2341.6 1108.5 L2344.1 1121.8 L2344.9 1135.0 M2340.0 1068.7 L2348.0 1065.3 L2358.1 1057.8 L2368.2 1055.0 L2378.8 1049.0 L2388.0 1045.6 L2395.4 1037.3 L2400.0 1030.3 L2408.9 1022.2 L2414.5 1012.5 L2421.7 1004.8 L2428.7 1000.7 L2434.5 994.1 L2442.6 985.6 L2447.6 979.3 L2458.0 973.2 L2466.3 962.1 L2474.1 956.2 L2482.9 954.9 L2493.1 953.8 L2502.6 950.0 L2512.9 949.7 L2522.1 946.8 L2530.0 946.2 M2061.8 921.4 L2070.5 928.2 L2076.6 935.5 L2083.9 940.8 L2087.9 947.5 L2095.1 954.6 L2103.2 961.1 L2114.3 956.9 L2121.7 952.0 L2132.7 950.2 L2142.9 946.2 L2151.2 942.7 L2161.8 936.5 L2174.3 933.9 L2182.7 929.7 L2195.1 926.4 L2203.4 922.1 L2215.8 919.7 L2225.4 917.6 L2236.6 915.3 L2246.1 910.9 L2255.3 908.7 L2265.5 906.5 L2276.5 901.2 L2287.7 897.5 L2298.6 893.2 L2306.4 896.1 L2317.9 897.6 L2328.0 899.0 L2336.6 899.9 M2189.3 946.2 L2201.8 948.3 L2210.4 949.4 L2222.2 954.0 L2232.3 956.2 L2238.1 966.0 L2242.3 971.4 L2249.7 981.6 L2254.4 986.9 L2259.5 997.8 L2265.5 1004.6 L2270.6 1013.3 L2276.8 1021.6 L2282.0 1029.0 L2291.6 1037.4 L2298.1 1043.0 L2307.9 1052.4 L2315.1 1058.8 L2329.1 1062.7 L2340.0 1068.7 M2142.9 946.2 L2145.8 960.9 L2146.3 972.7 L2148.7 981.3 L2154.7 990.0 L2159.4 999.7 L2162.8 1009.1 L2166.1 1019.1 L2170.9 1026.3 L2177.7 1036.4 L2182.5 1044.6 L2189.3 1052.2 L2200.3 1051.1 L2212.5 1048.9 L2205.4 1054.4 L2197.9 1060.5 L2193.3 1068.4 L2184.6 1076.7 L2179.9 1080.3 L2173.6 1089.0 L2166.1 1095.2 L2160.4 1102.4 L2156.7 1109.1 L2149.6 1116.8 M2336.6 899.9 L2346.1 901.7 L2354.0 902.0 L2364.4 904.3 L2372.3 905.2 L2381.4 906.5 L2389.6 907.9 L2398.2 907.7 L2409.0 906.5 L2418.7 908.1 L2427.7 908.1 L2432.8 916.0 L2439.7 925.0 L2447.0 931.1 L2454.2 939.6 L2463.1 946.3 L2474.1 956.2 L2480.9 959.5 L2490.4 966.7 L2496.9 968.7 L2506.0 973.3 L2513.8 979.3 L2530.0 982.6 M2421.1 1121.7 L2429.4 1118.7 L2437.4 1114.6 L2447.3 1108.4 L2454.9 1106.4 L2463.1 1101.0 L2473.5 1099.3 L2482.0 1094.8 L2490.6 1090.3 L2498.7 1090.0 L2509.7 1092.6 L2519.7 1092.5 L2530.0 1091.9 M2081.7 1035.6 L2079.0 1026.4 L2081.1 1018.1 L2079.0 1006.7 L2079.2 997.0 L2076.7 989.3 L2085.0 983.6 L2090.8 976.1 L2095.4 968.8 L2103.2 962.8 M1984.0 1032.3 L1994.4 1033.1 L2003.1 1033.9 L2011.7 1032.3 L2021.6 1032.7 L2033.9 1034.6 L2041.3 1033.2 L2051.0 1034.8 L2061.9 1033.5 L2071.5 1036.0 L2081.7 1035.0 L2088.9 1040.7 L2097.0 1045.0 L2104.2 1049.7 L2110.4 1055.3 L2118.2 1059.7 L2126.4 1065.4 L2129.1 1075.5 L2133.8 1081.5 L2136.3 1090.1 L2143.2 1099.1 L2146.3 1107.2 L2149.6 1116.8 M1984.0 1227.7 L1993.2 1224.2 L2002.1 1221.2 L2009.4 1217.0 L2018.8 1215.6 L2027.0 1211.1 M1984.0 1111.8 L1994.6 1115.9 L2003.3 1121.5 L2015.0 1122.9 L2023.7 1128.3 M2388.0 1045.6 L2393.9 1054.5 L2399.2 1063.1 L2405.2 1068.5 L2411.0 1076.7 L2414.5 1085.3 L2415.7 1096.1 L2416.6 1103.1 L2419.9 1111.8 L2421.1 1121.7 M1984.0 929.7 L1991.4 934.9 L2001.0 938.8 L2009.9 943.4 L2017.1 946.2 L2027.5 942.4 L2036.7 936.3 L2044.7 931.4 L2054.6 926.9 L2061.8 921.4 M2427.7 908.1 L2434.1 899.4 L2440.2 888.0 L2447.6 880.0 M2381.4 906.5 L2385.4 896.4 L2388.4 887.4 L2394.6 880.0 M2282.0 1136.6 L2283.9 1146.9 L2284.5 1155.7 L2286.8 1164.6 L2289.6 1173.7 L2293.1 1182.9 L2294.0 1193.3 L2295.1 1201.3 L2298.6 1211.1 L2304.3 1220.6 L2310.2 1226.8 L2313.9 1235.3 L2318.4 1244.2 M2447.6 979.3 L2454.9 988.5 L2459.5 994.7 L2469.0 1002.6 L2474.5 1012.3 L2480.7 1019.1 L2489.8 1022.7 L2498.6 1023.8 L2509.1 1026.5 L2519.1 1028.0 L2530.0 1032.3 M1984.0 1310.5 L1992.6 1303.3 L1999.3 1298.6 L2007.8 1293.7 L2014.5 1285.2 L2022.6 1278.9 L2030.7 1273.7 L2035.8 1267.3 L2043.8 1263.3 L2053.0 1257.2 L2060.1 1249.3 L2066.8 1244.2 M2043.6 1029.0 L2033.0 1026.6 L2023.5 1027.0 L2015.6 1022.5 L2005.5 1023.9 L1993.8 1021.4 L1984.0 1019.1 M2344.9 1196.2 L2350.5 1203.2 L2354.5 1214.1 L2360.0 1221.9 L2361.6 1229.3 L2367.6 1238.1 L2371.0 1244.8 L2375.4 1253.8 L2381.4 1260.8 L2387.7 1267.4 L2391.7 1276.1 L2398.4 1286.1 L2401.9 1295.5 L2410.6 1302.0 L2414.5 1310.5 L2418.9 1318.3 L2423.1 1326.7 L2426.7 1336.2 L2431.0 1343.6 M2228.0 668.0 L2219.7 674.7 L2214.5 681.8 L2204.8 691.7 L2198.0 697.3 L2192.0 705.0 L2194.3 713.5 L2197.5 723.9 L2199.6 733.3 L2202.4 741.1 L2207.0 752.0 L2201.9 760.0 L2198.4 769.1 L2196.2 779.3 L2190.9 788.6 L2187.7 795.9 L2183.4 806.3 L2179.1 815.3 L2175.5 824.8 L2170.2 832.8 L2168.7 841.2 L2163.0 850.0 M2228.0 668.0 L2232.3 675.4 L2234.5 684.9 L2237.5 694.3 L2239.6 702.5 L2241.4 713.6 L2245.7 721.6 L2248.0 730.0 L2255.7 731.1 L2267.9 732.7 L2275.5 736.3 L2284.5 737.7 L2295.3 740.4 L2301.8 741.0 L2311.6 743.8 L2321.0 745.0 L2328.8 750.5 L2336.1 757.5 L2340.8 763.3 L2349.3 769.4 L2357.5 778.6 L2365.6 783.6 L2372.6 789.5 L2378.8 797.3 L2384.1 801.8 L2392.4 808.1 L2400.0 815.0 M2248.0 730.0 L2249.7 737.7 L2252.6 750.3 L2253.0 756.9 L2255.4 768.4 L2257.0 777.6 L2260.0 786.0 L2268.0 790.1 L2279.1 794.1 L2285.9 798.8 L2297.8 800.8 L2307.0 804.9 L2313.7 807.9 L2324.0 812.0 L2334.5 815.1 L2341.1 817.3 L2351.0 822.1 L2362.0 824.8 L2370.5 829.9 L2379.7 832.1 L2388.6 834.8 L2399.0 838.0 M2192.0 705.0 L2200.2 707.8 L2210.1 711.9 L2219.6 718.1 L2229.5 722.7 L2238.6 724.3 L2248.0 730.0 L2258.3 726.4 L2267.9 725.2 L2276.6 719.4 L2286.0 717.0 L2294.3 715.2 L2303.1 712.0 L2312.2 712.2 L2322.6 710.8 L2331.7 709.2 L2338.8 706.8 L2346.4 705.6 L2357.6 701.9 L2365.6 700.1 L2375.6 698.9 L2384.4 698.9 L2393.3 695.1 L2400.6 695.4 L2410.0 692.0 M2228.0 668.0 L2238.3 663.5 L2245.2 662.4 L2255.4 657.2 L2263.1 656.3 L2270.7 650.5 L2281.0 648.0 L2289.2 643.9 L2297.8 636.8 L2304.9 633.1 L2310.8 624.9 L2318.2 621.3 L2325.4 614.9 L2335.9 608.2 L2342.4 603.8 L2351.2 598.2 L2357.1 594.1 L2365.7 585.8 L2373.5 581.2 L2380.0 576.0 L2386.4 569.0 L2389.3 558.4 L2394.0 550.0 M2281.0 648.0 L2289.2 645.2 L2298.4 642.8 L2309.5 640.4 L2318.2 640.4 L2327.9 638.2 L2337.8 635.2 L2344.0 634.3 L2353.9 633.8 L2365.4 630.7 L2374.3 627.1 L2382.3 625.6 L2391.0 623.5 L2400.7 622.6 L2410.0 620.0 L2416.0 625.1 L2424.0 631.7 L2433.3 635.3 L2440.1 640.7 L2449.2 646.5 L2456.4 649.2 L2464.3 653.4 L2472.4 659.3 L2480.0 663.7 L2487.3 668.8 L2492.9 674.1 L2503.6 679.6 L2510.0 685.0 M2321.0 745.0 L2315.6 756.5 L2310.0 766.0 L2301.7 769.1 L2290.7 775.0 L2281.1 777.4 L2269.9 783.0 L2260.0 786.0 L2251.0 791.3 L2244.3 797.9 L2234.8 802.6 L2226.6 806.1 L2219.5 813.2 L2212.0 819.6 L2202.2 823.4 L2195.3 827.8 L2188.8 832.7 L2178.3 837.7 L2171.6 845.2 L2163.0 850.0 M2076.0 858.0 L2084.0 861.1 L2094.5 860.1 L2104.6 864.1 L2111.3 865.7 L2121.0 866.0 L2130.2 863.5 L2141.7 863.6 L2151.8 859.6 L2163.0 858.0 L2170.9 862.6 L2179.9 866.3 L2189.4 868.7 L2200.4 871.2 L2208.1 876.0 L2217.3 878.7 L2226.5 881.8 L2233.8 884.2 L2244.4 889.8 L2254.1 891.8 L2262.6 896.3 L2271.0 900.0 L2280.2 901.9 L2289.4 901.2 L2299.0 900.9 L2308.9 902.9 L2315.1 903.5 L2327.5 906.0 L2335.0 905.0 L2343.7 901.4 L2354.6 898.7 L2360.3 895.8 L2370.9 894.5 L2378.4 890.5 L2389.8 887.8 L2396.8 886.3 L2406.8 883.5 L2416.0 880.0 M2400.0 815.0 L2406.9 809.8 L2414.0 804.0 L2422.1 796.7 L2428.0 789.9 L2434.6 781.7 L2443.4 777.9 L2450.0 771.7 L2456.2 765.9 L2462.9 759.5 L2468.5 750.9 L2477.0 745.0 L2482.9 754.5 L2488.4 762.7 L2494.0 770.0 M2399.0 838.0 L2401.9 847.0 L2406.9 855.2 L2407.5 863.8 L2410.8 870.9 L2416.0 880.0 L2418.9 890.9 L2423.5 900.8 L2429.0 910.0 M2163.0 858.0 L2165.1 848.1 L2171.0 841.9 L2172.5 831.9 L2177.3 823.1 L2179.8 812.1 L2183.5 806.4 L2188.6 796.6 L2191.0 788.0 L2197.4 777.4 L2200.7 770.9 L2205.1 761.1 L2207.0 752.0 M2324.0 812.0 L2325.6 820.7 L2327.2 829.9 L2327.7 840.4 L2330.2 850.2 L2328.0 857.3 L2330.1 867.4 L2332.5 876.2 L2333.0 886.2 L2333.2 896.2 L2335.0 905.0 M2410.0 692.0 L2417.2 699.6 L2423.6 705.2 L2432.8 709.5 L2438.3 716.1 L2448.3 720.9 L2455.4 727.4 L2460.6 734.5 L2468.9 739.0 L2477.0 745.0 M2021.0 837.0 L2031.1 841.9 L2040.6 843.5 L2049.7 846.3 L2057.9 850.8 L2068.2 855.3 L2076.0 858.0 M2076.0 858.0 L2077.6 868.9 L2077.5 877.3 L2077.6 886.7 L2080.0 897.0 L2072.9 906.2 L2066.7 915.2 L2062.0 922.0 M2416.0 880.0 L2426.2 880.8 L2434.2 881.8 L2445.6 881.7 L2456.9 883.5 L2464.8 884.2 L2474.3 885.2 L2485.9 885.5 L2493.9 888.4 L2504.1 888.4 L2514.0 890.0 M2400.0 815.0 L2409.2 812.4 L2417.9 812.6 L2428.8 811.5 L2436.8 811.3 L2445.6 809.8 L2454.6 809.0 L2465.1 808.1 L2475.6 807.5 L2485.3 804.4 L2494.5 804.1 L2501.7 803.1 L2512.9 803.8 L2521.8 800.4 L2530.0 800.0 M2207.0 752.0 L2214.5 756.6 L2225.3 764.1 L2231.9 767.2 L2244.1 774.1 L2249.5 780.2 L2260.0 786.0 M2192.0 705.0 L2182.6 710.4 L2176.1 713.9 L2169.5 716.4 L2160.0 722.0 M2410.0 620.0 L2413.4 612.1 L2419.3 602.0 L2422.8 593.8 L2429.4 586.1 L2433.7 577.3 L2435.3 565.0 L2442.3 556.9 L2445.6 548.8 L2450.0 540.0 M2281.0 648.0 L2283.4 657.7 L2281.1 666.6 L2284.6 678.7 L2282.6 689.1 L2284.1 698.1 L2285.5 708.4 L2286.0 717.0 M2394.0 550.0 L2403.4 547.9 L2413.1 550.5 L2422.1 550.0 L2431.7 548.0 L2440.8 547.1 L2450.8 549.3 L2460.6 548.3 L2468.5 546.5 L2479.4 546.1 L2486.8 547.5 L2496.7 546.3 L2509.3 544.6 L2517.0 545.0 M2228.0 668.0 L2225.5 657.7 L2224.7 650.3 L2221.6 637.9 L2222.6 628.3 L2220.0 620.2 L2215.9 608.0 L2216.0 600.0 L2218.6 591.5 L2220.0 579.9 L2219.6 570.1 L2221.3 559.4 L2222.7 550.1 L2226.0 540.0 M2286.0 717.0 L2294.6 723.2 L2302.5 729.4 L2310.6 736.7 L2321.0 745.0 M2477.0 745.0 L2483.5 734.7 L2487.2 727.7 L2491.5 718.6 L2497.6 711.8 L2500.2 701.9 L2506.8 692.3 L2510.0 685.0 M2399.0 838.0 L2410.1 837.4 L2418.7 836.1 L2428.6 833.5 L2437.1 833.5 L2446.7 831.5 L2458.3 831.7 L2468.1 830.6 L2477.0 830.0 L2487.4 832.4 L2494.7 836.4 L2504.5 838.7 L2512.5 843.2 L2521.6 845.7 L2530.0 850.0" stroke="#e0808e" stroke-width="1.25" fill="none" opacity="0.85"/><path d="M2283.1 1333.0 L2286.3 1341.4 L2293.5 1347.6 L2295.1 1352.3 L2295.2 1364.4 L2299.9 1373.7 M2271.5 779.9 L2267.4 774.0 L2258.2 769.7 L2249.4 766.3 L2241.8 760.9 L2233.3 753.9 L2226.5 745.9 M2298.6 829.5 L2299.3 820.3 L2301.7 810.5 L2302.9 805.2 L2307.1 800.5 M2310.6 972.6 L2311.1 964.9 L2313.6 959.4 L2324.2 951.4 L2331.0 949.1 M2146.9 908.3 L2141.2 907.3 L2136.8 904.5 L2133.3 898.8 L2133.6 889.6 L2135.5 877.3 L2140.0 869.8 M2238.5 1174.8 L2244.6 1187.3 L2248.4 1193.1 L2249.0 1205.1 L2253.3 1216.6 M2437.0 583.4 L2435.8 588.8 L2436.3 596.2 L2434.9 604.3 L2437.4 615.3 L2435.7 621.6 L2438.0 629.9 M2494.7 587.9 L2498.1 596.2 L2506.2 602.1 M2020.7 1294.3 L2022.9 1300.3 L2022.3 1310.9 L2019.4 1322.3 L2018.8 1334.6 L2020.2 1347.5 M2134.4 1235.6 L2143.3 1234.4 L2156.8 1231.9 M2081.1 1157.4 L2071.9 1150.4 L2066.4 1146.6 M2453.9 828.0 L2464.5 827.3 L2473.9 822.3 L2482.8 817.1 L2488.5 815.2 M2137.9 1123.6 L2128.8 1132.6 L2118.5 1138.7 M2403.8 641.3 L2410.0 639.1 L2418.6 631.5 L2420.7 626.0 L2420.2 615.8 M2190.5 1218.2 L2197.7 1225.8 L2200.9 1231.0 M2493.4 894.5 L2486.8 897.9 L2481.0 908.0 L2478.8 919.3 L2472.8 931.8 M2087.3 873.3 L2092.9 867.2 L2096.6 859.5 L2097.8 851.2 L2100.3 840.9 L2098.1 830.7 M2041.3 828.3 L2049.1 823.8 L2054.7 815.7 L2060.3 811.9 L2064.1 807.9 L2070.2 800.8 L2080.8 797.8 M2485.7 701.3 L2475.5 704.2 L2466.0 713.9 M2458.3 902.2 L2463.8 908.7 L2465.9 917.0 L2463.4 929.2 M2289.4 621.8 L2287.0 631.8 L2288.3 643.3 L2286.9 656.3 L2285.6 662.1 L2280.1 670.7 M2499.4 958.2 L2493.3 964.4 L2489.9 977.0 L2492.8 986.7 L2494.5 993.7 L2494.2 1003.1 M2509.4 1341.4 L2506.8 1347.7 L2499.3 1358.0 L2490.5 1368.2 L2486.9 1371.9 L2476.8 1379.2 L2465.1 1380.6 M2498.7 1186.6 L2485.4 1187.6 L2475.8 1193.9 M2365.7 1246.7 L2367.3 1237.9 L2367.3 1230.5 L2370.0 1219.8 L2371.9 1213.9 L2380.9 1206.7 L2389.9 1203.0 M2396.7 1177.0 L2405.8 1174.2 L2410.1 1169.4 L2413.7 1162.2 L2418.9 1154.3 L2421.0 1148.1 M2388.7 1341.4 L2390.4 1333.7 L2386.5 1320.6 L2383.7 1310.5 M2271.4 1232.0 L2274.9 1237.7 L2279.6 1249.2 L2283.1 1256.2 L2285.9 1269.9 M2509.0 789.3 L2502.0 792.0 L2490.3 793.2 L2484.6 796.8 L2479.2 799.9 L2475.4 803.5 M2242.6 1168.2 L2239.8 1156.8 L2243.9 1144.0 M2274.7 716.9 L2271.0 708.0 L2265.6 702.5 L2255.6 694.4 M2122.7 1113.2 L2130.8 1121.6 L2138.8 1131.6 L2140.5 1141.1 M2184.6 945.8 L2180.7 957.8 L2180.5 965.4 L2177.4 978.9 M2365.6 799.1 L2369.4 805.0 L2372.3 811.9 L2377.6 817.8 L2383.1 820.2 L2386.2 825.0 M2514.4 1096.9 L2512.4 1085.1 L2514.3 1072.6 M2333.8 1344.6 L2334.4 1334.9 L2335.8 1329.3 L2336.9 1317.9 L2338.4 1310.2 M2471.7 760.5 L2481.2 761.4 L2492.6 767.2 L2495.2 771.9 L2496.4 782.2 M2113.3 1223.2 L2117.7 1218.1 L2126.0 1208.1 L2131.8 1203.3 L2136.8 1197.7 M2395.7 833.8 L2399.9 827.5 L2406.3 821.4 L2408.7 812.6 M2133.5 1308.7 L2133.4 1302.9 L2132.6 1295.0 L2134.5 1281.6 L2142.5 1272.3 L2146.1 1267.2 M2511.9 568.9 L2506.6 564.5 L2498.1 562.5 L2492.6 560.1 L2481.1 552.5 L2473.5 542.7 L2466.5 538.8 M2123.4 837.9 L2128.7 829.4 L2137.4 818.8 M2232.8 634.9 L2244.9 639.1 L2253.5 637.0 L2261.7 640.2 M2001.3 992.0 L1996.9 988.4 L1991.9 978.5 L1988.0 974.3 L1980.5 963.3 L1976.4 950.6 L1978.2 944.7 M2089.5 915.2 L2094.9 926.2 L2094.8 933.3 L2098.4 939.3 L2097.7 952.5 L2097.2 962.4 M1998.5 1038.7 L1999.3 1047.0 L1997.4 1052.4 L1991.0 1060.0 L1986.7 1069.6 L1980.5 1075.4 M2257.7 1148.6 L2266.1 1154.0 L2276.1 1154.9 L2285.2 1152.2 L2296.6 1148.5 L2302.1 1149.5 L2313.0 1157.5 M2240.6 565.6 L2245.6 571.3 L2254.3 581.2 L2259.8 588.8 L2261.4 595.8 L2260.7 608.6 L2254.2 618.5 M2384.0 952.4 L2378.3 950.2 L2374.2 945.9 L2368.4 937.8 L2362.8 935.5 L2354.9 932.3 L2349.0 932.4 M2115.0 1195.2 L2118.2 1202.8 L2124.0 1207.4 M2374.8 913.8 L2378.7 917.6 L2382.5 923.5 L2390.0 929.2 M2430.4 1219.4 L2433.0 1209.2 L2439.7 1199.7 L2443.6 1196.4 L2450.9 1184.7 L2460.0 1179.5 M2372.6 1220.5 L2365.8 1208.7 L2362.5 1202.4 M2291.3 1059.0 L2301.9 1050.7 L2306.2 1044.8 M2526.8 811.5 L2522.3 816.0 L2519.3 828.6 L2518.8 835.6 L2511.7 847.3 L2511.0 860.2 L2508.8 869.3 M2511.6 1269.4 L2506.4 1272.4 L2501.6 1276.3 L2493.3 1280.1 L2486.9 1284.9 M2251.5 787.0 L2245.1 787.5 L2234.8 786.2 L2228.4 783.3 L2224.0 776.7 L2217.6 764.6 L2211.3 754.7 M2261.8 1153.0 L2259.6 1148.0 L2254.4 1135.8 M2457.2 974.6 L2452.3 968.2 L2443.6 957.7 L2440.3 953.2 L2438.9 942.3 M2256.3 685.0 L2254.1 673.0 L2248.8 667.2 L2239.1 659.8 L2234.8 650.8 M2290.1 1075.3 L2300.8 1079.3 L2308.5 1087.7 L2319.0 1092.3 L2324.4 1095.0 M2507.4 1091.9 L2504.8 1085.7 L2505.1 1079.4 L2507.2 1069.4 L2513.7 1059.3 M2431.2 649.8 L2433.3 644.5 L2437.8 631.6 L2438.7 623.5 L2437.4 615.2 L2435.3 605.9 L2430.5 597.7 M2492.0 820.9 L2489.1 832.7 L2479.7 842.9 M2388.4 1071.8 L2384.8 1080.1 L2380.9 1091.6 L2381.5 1097.6 L2387.0 1105.3 L2389.2 1118.1 L2392.1 1126.6 M2486.0 1275.8 L2486.6 1267.2 L2489.2 1254.0 M2443.7 907.4 L2441.0 899.0 L2434.2 887.1 L2430.3 882.5 L2427.9 874.7 M2276.1 654.3 L2275.7 660.0 L2275.1 668.0 L2271.0 674.5 L2268.5 686.5 M2246.4 1206.0 L2239.1 1210.1 L2229.6 1211.2 L2217.1 1215.2 L2211.6 1215.8 L2204.0 1221.1 L2195.5 1223.7 M2276.5 649.7 L2269.4 640.8 L2264.6 628.1 L2261.1 617.8 L2259.8 612.5 L2256.5 608.4 M2357.7 712.1 L2368.1 711.7 L2377.8 705.2 M2353.7 1189.2 L2348.9 1190.5 L2343.1 1196.0 M2039.3 1062.4 L2044.0 1052.7 L2048.4 1046.4 L2055.7 1036.7 L2064.3 1031.7 M2182.8 1107.5 L2173.8 1112.1 L2167.3 1111.5 L2159.4 1110.1 L2152.5 1109.2 L2145.4 1105.6 M2134.8 1229.1 L2139.8 1230.7 L2147.3 1236.2 L2153.3 1239.7 M2318.6 916.2 L2311.6 906.4 L2305.4 898.8 M2269.6 1059.6 L2274.5 1071.6 L2273.7 1077.3 L2268.4 1086.4 L2264.6 1094.5 L2258.1 1106.2 M2399.2 920.6 L2386.8 923.7 L2373.1 920.9 L2361.7 915.9 M2073.3 875.9 L2079.4 879.9 L2085.1 885.0 L2088.9 891.7 L2088.6 902.9 L2087.9 913.0 M2305.1 755.3 L2316.3 757.5 L2321.8 757.4 L2331.3 760.7 L2341.6 760.4 L2348.0 761.5 M2520.4 995.6 L2514.5 987.1 L2505.3 980.3 L2499.5 978.8 M2208.1 1170.9 L2209.6 1182.2 L2205.7 1195.0 L2205.8 1201.4 L2200.6 1209.9 M2008.0 1161.2 L1999.9 1165.4 L1992.0 1173.9 L1988.8 1178.7 M2288.7 909.8 L2285.7 901.9 L2284.3 888.3 L2283.8 877.8 L2281.7 869.1 L2277.5 860.7 L2272.3 854.7 M2457.9 819.0 L2464.5 818.5 L2472.9 814.0 L2486.1 810.2 M2185.1 1295.8 L2174.7 1301.9 L2161.9 1301.2 L2156.0 1300.3 L2146.9 1297.9 L2141.9 1299.1 M2176.6 839.7 L2183.9 830.5 L2189.6 820.1 L2189.6 809.5 L2184.3 801.1 M2416.3 714.6 L2424.2 716.5 L2430.8 720.8 L2439.3 722.6 L2451.7 723.1 M2101.5 859.9 L2105.2 855.6 L2112.1 849.2 L2119.6 842.0 L2121.0 837.0 L2122.4 830.8 M2416.0 892.9 L2423.2 903.4 L2429.3 906.2 L2441.9 910.0 L2449.8 912.1 L2458.9 911.7 M2292.3 1021.4 L2296.1 1018.0 L2299.2 1006.8 M2279.5 882.5 L2279.4 889.0 L2278.6 897.1 L2275.5 907.0 L2273.8 914.8 L2274.4 922.3 M2113.0 839.2 L2119.5 835.0 L2129.2 825.1 L2131.4 814.0 L2128.5 807.0 L2126.2 796.1 L2125.9 789.1 M2206.9 1227.7 L2203.3 1236.3 L2193.6 1245.0 L2189.4 1250.7 L2182.3 1258.2 L2172.6 1266.4 L2168.1 1277.5 M2335.5 956.4 L2348.1 954.8 L2359.3 953.5 L2368.9 957.3 L2377.4 956.2 M2358.4 556.9 L2361.5 561.0 L2364.8 571.0 L2369.6 580.7 M2360.8 1089.0 L2354.5 1082.3 L2352.4 1076.9 L2346.9 1071.7 L2341.9 1063.7 L2340.5 1056.2 M2262.4 1284.5 L2253.3 1292.5 L2243.0 1295.4 L2232.7 1296.7 L2224.2 1303.6 L2211.4 1305.4 M2482.9 642.4 L2479.0 635.8 L2479.3 628.7 L2475.1 618.4 L2469.2 609.6 L2463.7 605.1 M2307.9 890.2 L2305.1 880.6 L2298.4 873.9 L2290.0 870.5 L2283.3 864.9 L2280.1 859.3 L2273.4 852.8 M2201.3 1167.8 L2202.6 1155.9 L2200.9 1146.7 M2170.8 848.3 L2173.7 836.3 L2176.7 832.1 L2178.4 819.6 L2186.2 809.0 L2187.8 798.0 L2194.2 787.7 M2010.1 992.4 L2001.7 995.1 L1995.8 996.9 L1988.6 1004.8 L1979.3 1012.3 M2241.7 610.1 L2232.1 604.5 L2224.4 598.8 L2220.4 592.1 L2214.6 588.3 M2075.9 1008.4 L2082.8 1012.1 L2089.8 1014.3 M2169.0 844.0 L2160.0 843.9 L2148.9 845.6 L2142.8 843.8 L2132.0 839.9 M2227.4 940.6 L2234.1 942.1 L2240.5 948.8 L2242.3 958.1 L2241.8 964.3 L2237.9 972.4 M2108.6 882.9 L2105.3 870.1 L2105.8 861.7 L2101.4 849.3 L2095.9 836.9 L2093.5 825.0 L2092.8 818.2 M2252.8 1074.6 L2259.5 1076.7 L2265.5 1075.9 L2270.9 1075.8 L2278.7 1075.9 M2469.4 856.3 L2471.9 847.8 L2476.2 836.3 L2476.2 828.1 L2472.4 819.8 L2465.6 811.1 L2457.6 803.7 M2301.2 1014.6 L2294.8 1016.4 L2290.6 1019.7 L2280.6 1028.9 L2268.2 1033.9 L2256.1 1033.3 M2024.4 1186.9 L2030.6 1175.7 L2034.4 1168.4 L2039.5 1163.6 L2045.0 1161.6 M2368.2 742.2 L2360.7 748.8 L2356.1 757.7 M2260.2 709.5 L2267.5 719.4 L2272.6 729.5 L2275.4 736.0 L2283.0 743.9 M1990.5 848.2 L2002.3 853.5 L2016.0 854.0 L2021.9 855.3 L2028.4 853.0 L2034.3 847.0 M2450.8 1104.6 L2449.8 1110.5 L2444.6 1120.8 M2281.1 1307.0 L2281.1 1313.4 L2286.1 1321.8 L2287.2 1334.4 L2290.2 1346.2 M2200.9 960.3 L2192.9 969.1 L2190.0 979.4 L2183.0 991.1 L2179.4 997.3 M2211.1 1131.0 L2217.4 1123.4 L2219.8 1117.9 L2220.5 1109.9 L2222.4 1104.8 L2225.7 1095.1 M2447.5 653.9 L2444.3 643.7 L2441.1 638.4 L2436.5 629.5 L2434.7 624.6 M2486.2 591.5 L2480.6 587.7 L2472.4 586.6 L2463.3 583.7 M2270.3 955.4 L2269.1 949.6 L2264.2 943.0 L2256.6 934.7 L2250.1 932.3 L2240.0 924.7 L2230.7 921.1 M2287.8 745.5 L2275.8 748.6 L2263.9 754.1 M2288.9 1276.8 L2278.0 1269.9 L2273.8 1261.9 M2246.9 1242.7 L2242.4 1249.6 L2239.9 1255.8 L2239.5 1262.7 L2234.5 1271.4 L2231.1 1278.3 L2226.4 1285.0 M2426.4 1093.5 L2422.1 1086.2 L2414.7 1081.6 L2408.0 1076.9 L2400.4 1071.9 L2393.5 1071.5 M2049.8 973.8 L2054.4 982.9 L2054.2 988.3 M2356.7 1059.3 L2358.3 1054.0 L2359.9 1047.3 L2365.1 1039.1 L2374.3 1031.2 L2387.0 1028.3 L2396.7 1024.5 M2331.2 1318.1 L2337.1 1310.4 L2342.0 1308.4 L2346.9 1304.2 L2355.3 1294.6 M2511.1 997.9 L2523.8 1002.8 L2535.6 1006.3 L2544.8 1013.7 L2550.6 1016.0 L2555.9 1020.7 M2256.1 878.3 L2246.3 868.5 L2244.4 863.1 L2245.4 857.3 M2015.4 1316.1 L2006.0 1310.4 L2000.5 1309.4 L1991.2 1300.8 L1982.8 1298.5 M2312.2 1179.8 L2317.1 1177.9 L2326.3 1176.1 L2332.1 1171.9 M2078.6 1290.8 L2078.9 1303.3 L2078.5 1310.4 L2072.8 1321.5 L2065.0 1328.6 L2054.5 1333.3 L2043.6 1335.1 M2217.3 815.6 L2221.7 806.0 L2227.9 795.5 L2232.1 788.7 L2234.4 780.9 M2136.3 987.2 L2144.4 984.0 L2152.1 981.7 L2156.9 976.8 L2165.4 973.5 L2171.8 965.4 L2176.4 953.2 M2384.6 560.9 L2382.3 567.2 L2381.5 575.5 M2517.1 598.6 L2521.8 594.5 L2525.3 587.8 L2533.1 579.3 L2535.1 572.7 M2383.8 1064.9 L2376.0 1072.2 L2371.9 1084.5 L2374.9 1097.7 M2407.8 1176.7 L2414.5 1176.8 L2428.1 1177.9 L2437.3 1175.3 L2449.0 1174.0 L2460.4 1169.3 M2351.5 1203.5 L2349.4 1208.9 L2344.0 1216.4 L2340.5 1224.3 M2299.9 1320.9 L2298.0 1311.0 L2294.2 1304.6 L2286.7 1298.8 L2279.3 1287.2 M2250.0 1341.0 L2242.3 1336.3 L2234.7 1335.6 L2225.9 1339.0 L2216.3 1340.4 L2203.7 1338.4 M2412.2 882.7 L2401.0 877.4 L2393.8 877.2 L2386.7 875.8 L2375.4 869.7 L2364.7 865.4 L2354.4 857.2 M2163.4 1042.3 L2168.1 1032.5 L2176.2 1026.1 L2181.0 1023.1 L2185.2 1015.7 M2298.4 966.2 L2311.2 968.6 L2323.7 963.3 M2027.7 1161.2 L2035.7 1171.5 L2037.8 1180.6 L2039.6 1191.0 L2041.5 1196.9 L2038.3 1210.0 M2086.0 1201.0 L2089.5 1209.1 L2093.1 1214.3 L2102.7 1221.9 L2114.4 1225.3 M2287.8 1059.5 L2296.0 1062.3 L2304.3 1073.2 L2312.9 1076.2 L2324.5 1081.0 L2330.5 1090.0 L2338.8 1097.0 M2254.2 1221.0 L2254.0 1211.9 L2255.4 1206.8 L2255.2 1200.0 L2255.1 1194.8 L2258.7 1183.5 L2262.1 1170.7 M2251.6 845.3 L2258.6 848.4 L2267.1 851.7 L2275.8 857.1 L2280.9 864.4 L2289.2 873.8 M2403.7 815.7 L2412.0 820.9 L2421.4 822.3 L2434.6 826.0 L2447.9 827.3 L2457.6 827.6 L2469.7 827.0 M2229.0 782.5 L2234.0 782.4 L2244.4 787.7 L2253.1 792.3 L2265.0 795.7 L2276.2 795.2 L2280.5 792.1 M2487.9 544.0 L2493.7 549.4 L2496.4 554.1 L2497.0 564.4 L2493.7 573.1 L2491.3 581.1 L2490.6 586.6 M2449.9 1071.2 L2444.1 1067.3 L2438.4 1055.0 L2433.1 1042.6 L2435.3 1029.5 L2434.3 1022.6 M2018.0 1255.7 L2030.1 1262.5 L2032.7 1267.2 L2036.1 1271.5 L2037.0 1278.4 L2042.0 1284.9 L2048.0 1287.1 M2442.3 902.5 L2437.4 892.5 L2431.3 881.3 M2136.4 1041.2 L2135.8 1035.5 L2134.2 1030.1 L2132.4 1021.9 L2136.0 1009.5 L2138.0 1003.5 M2274.9 1176.7 L2277.5 1165.4 L2277.1 1159.8 L2273.8 1146.8 L2273.4 1137.0 M2316.9 1268.9 L2308.0 1272.0 L2298.3 1278.1 L2292.3 1284.9 L2286.3 1291.5 M2041.9 1185.3 L2040.9 1192.7 L2041.7 1199.9 L2039.3 1208.0 L2039.0 1217.7 M2287.7 806.7 L2279.6 809.1 L2274.1 808.6 L2260.5 809.1 L2255.3 805.9 L2248.1 803.8 M2456.0 929.8 L2463.6 925.0 L2467.5 919.7 L2471.1 910.2 L2481.1 903.0 L2487.1 896.9 M2214.8 761.7 L2215.9 750.8 L2219.6 743.0 L2219.5 732.3 L2213.2 722.4 L2207.8 717.5 M2132.2 1154.1 L2126.7 1153.5 L2117.2 1147.6 M2241.6 621.3 L2244.7 609.4 L2244.3 602.5 M2389.8 1252.6 L2384.1 1247.7 L2377.4 1239.8 L2374.2 1233.6 M2158.5 841.5 L2167.8 832.6 L2179.9 828.2 L2184.3 822.6 M2427.0 635.1 L2426.7 642.8 L2419.4 653.4 L2415.8 656.9 L2405.1 660.4 L2398.8 658.6 M2213.2 828.3 L2209.8 823.6 L2207.8 819.0 M2352.3 1270.0 L2351.7 1275.2 L2352.9 1282.5 L2357.2 1290.4 L2365.9 1296.7 L2371.1 1303.5 M2036.8 1045.4 L2032.4 1050.4 L2024.7 1061.3 L2019.6 1063.5 L2014.7 1066.0 M2053.9 1345.0 L2058.7 1348.8 L2066.3 1356.2 L2073.4 1364.6 M2483.7 910.4 L2493.9 916.1 L2498.5 925.0 L2502.4 935.0 L2507.2 944.7 L2510.9 950.4 L2516.0 956.3 M2309.5 600.1 L2300.7 606.1 L2292.7 607.9 L2284.3 606.9 L2279.1 606.7 L2267.5 607.4 M2430.4 953.1 L2435.9 941.8 L2441.6 932.9 L2442.6 920.7 L2448.4 909.1 L2455.4 900.7 L2456.9 893.6 M2274.9 1203.0 L2263.1 1205.4 L2258.5 1209.3 L2254.9 1218.7 L2246.7 1226.0 L2240.7 1230.3 M2337.8 978.3 L2336.4 973.3 L2337.9 963.0 L2338.0 951.5 L2330.8 940.1 L2319.8 934.9 M2030.4 1317.5 L2036.1 1314.9 L2049.6 1317.1 L2061.9 1320.1 L2072.6 1319.8 L2082.8 1322.1 M2479.3 692.2 L2479.8 685.1 L2476.0 672.0 L2477.7 665.3 L2478.5 657.9 M2060.6 1246.7 L2062.7 1255.9 L2061.0 1264.5 L2062.6 1272.4 M2472.3 684.9 L2479.9 695.6 L2484.5 697.9 L2490.4 697.5 M2457.5 1013.9 L2446.1 1017.9 L2441.1 1018.4 M2478.0 950.6 L2485.8 945.4 L2493.1 938.0 L2499.1 929.3 L2501.3 923.4 M2308.4 1074.3 L2305.6 1083.9 L2304.7 1092.4 L2306.7 1099.5 L2308.2 1108.4 L2310.5 1112.9 M2215.8 1011.7 L2218.5 1020.0 L2223.6 1028.9 M2515.7 806.6 L2527.2 809.1 L2533.5 812.5 L2537.7 817.0 L2541.4 827.7 L2541.4 834.5 L2537.1 842.4 M2320.0 1003.0 L2332.6 998.2 L2343.5 994.2 L2351.3 983.6 M2156.0 1114.1 L2165.0 1117.8 L2174.8 1126.4 L2179.2 1135.6 L2179.4 1141.5 L2176.1 1149.8 L2174.1 1160.3 M2289.8 1205.1 L2283.1 1208.0 L2277.5 1211.5 M2466.6 691.1 L2459.6 698.2 L2454.2 700.7 L2443.3 701.0 L2430.3 703.5 L2417.2 704.0 M2439.6 765.3 L2451.1 770.9 L2461.9 774.2 M2214.4 958.4 L2215.5 952.0 L2217.0 942.7 L2214.4 929.5 L2215.6 923.4 L2218.6 915.6 M2373.1 705.9 L2374.7 712.6 L2377.9 720.8 L2382.9 724.4 M2315.0 1195.9 L2307.7 1203.5 L2300.7 1207.4 L2294.5 1208.4 M2453.6 1027.1 L2441.9 1025.0 L2431.2 1027.6 L2423.1 1025.6 L2414.7 1016.9 L2410.2 1011.2 L2400.7 1008.0 M2009.2 1124.5 L2016.6 1134.4 L2019.0 1145.0 L2017.8 1150.6 L2018.0 1162.8 M2185.2 784.3 L2192.8 782.5 L2204.7 784.4 L2216.8 784.4 L2224.4 788.6 M2001.1 870.6 L1993.5 882.0 L1986.3 892.9 M2446.1 758.4 L2455.1 756.5 L2464.2 748.9 L2471.4 745.0 L2480.2 743.0 L2489.1 741.3 L2501.4 743.2 M2182.4 1271.8 L2186.2 1262.3 L2193.9 1253.6 M2227.5 557.4 L2222.3 552.3 L2217.0 546.4 L2212.2 544.4 L2207.4 539.0 M2232.2 717.6 L2235.0 706.4 L2242.8 698.1 L2246.5 693.3 M2373.3 1024.9 L2368.3 1022.4 L2362.5 1021.7 M2093.3 1129.9 L2098.5 1128.5 L2107.8 1121.6 M2292.8 778.2 L2304.2 778.4 L2313.8 776.2 L2323.7 772.7 L2330.7 770.1 L2337.0 768.0 L2345.1 762.1 M2216.5 598.8 L2222.9 604.3 L2230.6 612.4 L2237.4 618.6 M2522.2 956.1 L2523.0 948.0 L2517.1 936.3 L2508.0 925.9 M2112.0 1242.0 L2117.3 1241.4 L2129.4 1244.1 M2195.2 806.9 L2200.4 814.3 L2206.3 817.3 L2216.7 820.0 L2221.2 825.3 L2224.9 838.0 L2224.3 845.5 M2354.8 1163.6 L2360.7 1157.0 L2363.3 1151.6 L2366.9 1139.9 M2056.8 1284.6 L2065.2 1275.0 L2067.0 1263.6 L2063.2 1253.3 M2348.2 881.0 L2351.3 893.9 L2354.4 903.5 L2360.9 915.0 L2363.0 925.5 L2368.0 935.4 M2463.1 922.4 L2469.3 923.8 L2478.8 922.1 L2489.6 924.0 L2501.5 923.2 M2259.8 1240.6 L2268.0 1237.8 L2275.8 1239.2 M2336.8 1005.9 L2329.3 1005.4 L2318.1 1002.4 L2313.0 1003.7 M2234.1 1065.4 L2231.9 1070.0 L2224.4 1077.3 L2213.4 1079.2 L2200.4 1081.7 M2450.5 1141.7 L2454.7 1134.4 L2454.9 1121.2 M2464.0 1183.3 L2452.7 1181.6 L2439.2 1179.4 L2431.5 1179.9 M2272.1 931.7 L2267.3 940.5 L2266.5 947.0 L2269.2 952.7 L2272.0 960.6 L2276.8 967.5 L2283.5 970.8 M2402.7 974.2 L2407.6 967.5 L2411.1 962.4 L2415.6 952.9 M2254.8 844.9 L2263.6 843.7 L2272.7 845.7 L2282.6 853.2 L2284.3 858.0 L2290.9 866.8 M2085.4 1254.3 L2075.9 1261.7 L2071.4 1266.4 L2065.9 1273.0 L2061.2 1282.4 M2268.1 691.5 L2280.4 684.9 L2287.2 684.1 M2500.6 835.5 L2507.1 841.0 L2510.7 849.2 L2518.6 855.3 L2526.5 857.1 M2166.0 1177.4 L2161.9 1190.1 L2158.9 1194.2 M2413.3 1307.8 L2418.6 1315.9 L2420.2 1326.3 L2424.1 1331.1 L2429.2 1341.0 L2429.5 1353.2 L2425.8 1361.4 M2165.5 850.8 L2159.2 849.1 L2146.7 846.6 M2476.6 733.2 L2483.4 736.2 L2495.4 738.1 M2230.7 721.6 L2217.9 722.9 L2210.5 729.2 L2199.2 730.9 L2192.6 733.3 M2123.7 1076.5 L2124.1 1085.0 L2121.2 1092.0 L2113.0 1100.3 L2102.2 1105.8 L2097.8 1111.6 L2091.9 1123.9 M2455.6 1080.9 L2464.6 1080.5 L2476.7 1079.1 L2486.1 1071.7 L2490.0 1066.5 L2490.9 1054.9 M2340.9 865.2 L2339.1 860.3 L2333.0 852.2 L2329.7 845.5 M2390.3 1004.0 L2385.7 991.1 L2379.6 986.3 L2368.8 984.6 L2360.5 987.8 L2353.1 998.1 L2345.0 1006.7 M2218.7 673.5 L2214.9 682.9 L2213.2 691.3 L2206.2 702.5 L2202.2 706.8 L2197.0 714.9 L2193.8 723.2 M2179.2 1274.5 L2189.5 1279.4 L2192.8 1283.3 L2201.1 1288.9 M2401.7 875.8 L2408.2 882.0 L2416.9 886.8 M2486.2 1106.7 L2484.4 1112.2 L2474.0 1120.7 M2018.0 1227.7 L2014.0 1232.2 L2009.9 1239.1 L2009.2 1249.5 L2003.4 1260.3 M2494.0 565.6 L2488.7 560.2 L2483.1 559.1 L2476.0 556.8 L2465.6 556.2 L2454.5 560.5 L2442.0 560.0 M2337.3 1303.4 L2338.4 1312.1 L2346.0 1323.0 L2348.3 1334.0 L2357.1 1343.4 L2362.7 1352.8 M2111.6 1188.9 L2105.4 1176.8 L2097.9 1168.8 M2324.0 919.7 L2325.4 913.4 L2323.7 902.0 L2323.9 896.4 M2335.1 937.3 L2330.2 942.5 L2323.2 948.9 L2318.4 952.1 L2311.3 962.1 L2304.8 968.8 M2476.8 915.7 L2476.3 929.4 L2479.2 934.5 L2481.8 940.1 L2486.3 948.3 L2488.1 954.3 M2486.5 1133.1 L2488.0 1127.9 L2488.3 1117.8 L2490.2 1112.8 L2496.9 1105.3 L2506.0 1102.8 M2403.0 886.6 L2395.3 883.1 L2385.0 878.0 L2379.3 873.0 L2374.9 868.5 L2367.1 858.9 L2365.0 847.9 M2191.3 865.5 L2198.1 871.1 L2206.9 872.6 M2201.2 997.8 L2196.9 994.3 L2188.2 985.0 L2179.2 981.3 L2174.2 977.2 L2166.7 971.8 M2103.0 971.9 L2106.8 981.0 L2111.0 985.7 M2497.5 1194.0 L2494.5 1200.3 L2490.9 1208.0 L2486.6 1214.9 L2479.2 1222.1 L2476.3 1228.4 M2322.0 1305.3 L2331.1 1314.2 L2337.5 1318.2 L2340.5 1323.5 L2346.1 1333.2 L2346.9 1341.7 M2471.7 709.0 L2471.8 722.2 L2473.4 733.5 L2476.3 741.2 L2482.0 750.8 L2489.5 755.9 M2514.1 801.3 L2519.7 798.1 L2527.2 789.6 L2537.7 782.7 M2481.3 863.4 L2475.8 867.1 L2472.2 871.8 M2208.4 687.5 L2220.3 687.5 L2231.0 682.1 L2236.0 680.3 L2243.5 677.9 L2255.2 678.1 L2264.4 684.0 M2368.2 1182.4 L2364.2 1193.2 L2360.6 1202.0 L2357.6 1211.1 L2351.0 1221.9 L2341.4 1227.7 L2335.6 1236.2 M2426.7 963.2 L2425.2 969.4 L2423.5 975.5 L2423.5 983.9 L2428.5 993.8 L2427.9 1002.5 L2428.8 1008.4 M2179.0 1258.3 L2180.1 1249.6 L2179.6 1242.1 L2184.0 1231.7 L2188.0 1227.0 L2196.7 1217.8 M2207.4 1002.0 L2221.2 1000.0 L2227.9 1002.3 L2233.4 1002.6 L2244.2 996.5 L2252.5 995.4 L2260.6 995.1 M2166.1 1196.4 L2156.6 1205.3 L2152.9 1212.5 L2142.0 1220.0 L2138.1 1223.5 L2133.2 1232.9 L2122.2 1241.1 M2495.5 715.3 L2488.3 719.1 L2479.6 723.1 L2470.5 726.3 L2465.1 726.0 L2460.5 723.1 M2426.9 1063.6 L2429.9 1052.2 L2436.4 1041.7 L2442.3 1038.2 L2454.7 1035.8 L2460.3 1036.2 L2469.2 1031.1 M2498.9 902.3 L2504.8 894.5 L2508.4 884.3 M2111.7 1046.2 L2109.8 1039.8 L2110.4 1030.9 L2113.5 1026.7 L2119.5 1018.4 L2128.3 1009.6 M2142.6 1287.1 L2153.6 1291.1 L2160.6 1293.7 L2166.3 1297.7 L2177.5 1303.4 M2329.0 1143.6 L2317.8 1144.7 L2312.0 1145.8 L2305.0 1144.4 M1998.9 935.2 L1997.7 945.6 L1991.1 954.7 L1990.0 960.8 L1987.6 968.4 M2306.0 621.8 L2314.9 623.2 L2327.4 623.4 M2290.2 1061.7 L2283.5 1063.8 L2270.0 1065.0 L2262.9 1062.9 L2257.5 1060.5 M2472.8 661.0 L2470.3 666.9 L2466.8 675.4 M2074.4 1139.0 L2074.8 1150.4 L2075.3 1157.4 M2483.7 840.0 L2484.7 832.6 L2491.6 822.0 L2501.7 812.7 L2509.9 803.8 M2343.0 1132.4 L2353.6 1130.8 L2365.8 1135.7 L2372.1 1139.4 L2377.4 1140.3 L2387.2 1144.9 L2394.7 1144.2 M2494.4 749.8 L2500.1 752.7 L2506.7 763.8 L2506.7 773.2 M2239.5 822.3 L2242.6 833.3 L2244.6 839.2 L2246.7 846.4 L2250.9 859.3 M2286.9 921.3 L2294.6 920.2 L2300.2 919.3 L2305.5 915.1 L2310.1 911.8 M2175.0 788.6 L2174.9 795.9 L2172.4 807.5 L2166.0 818.2 L2157.7 826.8 L2153.2 828.9 L2144.2 835.3 M2477.2 1096.4 L2467.3 1099.2 L2459.7 1103.3 M2194.2 1175.8 L2201.0 1165.9 L2206.8 1158.2 L2208.3 1152.2 M2510.9 704.5 L2504.3 716.2 L2503.2 722.7 M2090.4 999.0 L2101.7 993.1 L2107.9 992.3 M2368.2 848.5 L2374.2 857.5 L2378.4 862.1 L2381.8 873.5 L2380.9 882.8 L2378.3 888.1 L2374.5 894.4 M2195.1 1315.3 L2187.1 1316.4 L2176.1 1323.0 L2164.2 1327.6 L2150.8 1325.3 M2381.9 1108.5 L2374.3 1109.8 L2364.3 1113.0 L2356.7 1114.3 L2342.9 1116.1 L2333.3 1112.4 M2055.2 1171.6 L2044.3 1178.2 L2040.6 1186.1 L2036.4 1195.0 M2093.8 1038.9 L2092.5 1045.0 L2095.0 1051.9 L2102.0 1061.7 M2445.8 1224.2 L2459.3 1224.6 L2464.1 1222.2 L2475.6 1222.5 L2482.9 1220.3 M2260.1 1168.1 L2254.9 1172.4 L2248.5 1178.6 M2293.4 616.5 L2288.5 620.4 L2284.6 623.9 M2440.6 1084.5 L2441.7 1093.6 L2444.3 1099.4 L2447.8 1103.9 L2449.7 1113.2 L2454.1 1118.6 M2200.8 817.3 L2214.1 820.0 L2225.5 824.3 L2232.2 830.7 L2237.4 834.7 L2247.7 837.0 M2133.5 796.5 L2127.2 801.8 L2121.8 806.5 L2112.5 811.3 L2105.8 822.4 M2130.8 1262.4 L2127.2 1252.1 L2127.9 1246.4 L2124.3 1237.7 L2124.2 1227.2 M2401.0 969.3 L2408.9 970.7 L2421.1 966.9 L2432.8 960.5 M2382.9 1105.0 L2387.6 1098.5 L2392.3 1094.4 L2400.2 1091.7 L2407.6 1093.0 M2437.4 1188.0 L2436.7 1180.3 L2436.3 1174.6 L2435.3 1163.1 L2438.8 1154.5 M2357.5 1127.8 L2359.4 1137.4 L2356.0 1150.7 L2348.7 1161.3 M2431.1 1123.3 L2441.6 1116.9 L2450.5 1112.1 L2454.7 1108.2 M2145.1 1287.4 L2140.3 1292.7 L2138.4 1297.5 L2135.9 1302.4 L2136.3 1315.4 M2027.7 1271.2 L2020.6 1274.7 L2009.3 1279.2 M2200.4 1303.8 L2206.5 1298.7 L2209.9 1294.8 L2216.2 1289.6 M2519.4 811.2 L2529.6 805.1 L2536.9 803.2 L2545.8 800.1 L2557.0 801.5 L2563.8 805.0 L2570.6 815.7 M2330.3 1149.2 L2337.2 1144.3 L2339.4 1139.7 L2342.3 1134.2 L2349.8 1123.1 L2351.2 1111.8 L2353.0 1099.2 M2413.6 723.5 L2413.6 711.1 L2411.7 703.1 L2414.9 693.6 L2414.8 688.2 M2020.7 890.2 L2009.2 890.9 L1999.7 898.2 L1994.3 899.9 L1985.0 906.9 M2205.7 612.5 L2209.4 605.1 L2212.8 596.9 L2214.8 589.1 L2214.5 575.7 M2468.9 1261.5 L2457.1 1264.4 L2445.8 1266.1 L2435.2 1264.1 L2431.0 1260.0 M2526.0 1147.6 L2526.2 1156.0 L2530.9 1167.7 L2538.6 1176.3 L2544.3 1180.8 L2549.5 1184.0 L2556.2 1187.1 M2148.7 1254.5 L2143.3 1265.6 L2135.7 1270.3 L2128.0 1277.5 M2376.3 1019.3 L2380.3 1028.4 L2381.7 1033.7 M2416.0 1336.0 L2427.8 1335.6 L2439.3 1334.5 L2452.5 1332.2 L2462.4 1324.3 L2475.8 1322.0 M2313.3 1278.6 L2314.4 1289.8 L2317.0 1299.8 L2317.7 1309.2 L2315.1 1314.9 M2267.1 706.3 L2253.9 703.9 L2244.2 700.9 L2232.4 694.4 L2220.9 695.1 M2410.6 1007.7 L2417.4 1002.9 L2419.5 998.0 L2420.0 989.9 M2423.3 846.9 L2418.2 855.0 L2415.0 865.5 L2411.0 871.5 M2326.0 543.4 L2337.8 547.1 L2343.7 554.5 L2345.0 562.7 L2342.5 572.1 L2344.4 577.7 M2404.3 1095.1 L2414.0 1101.9 L2417.8 1110.6 L2424.8 1122.4 L2433.4 1132.7 L2442.4 1137.1 M2265.9 572.6 L2268.1 585.1 L2272.9 598.0 L2276.0 607.4 L2277.7 617.9 M2267.6 1078.5 L2268.8 1072.6 L2268.8 1059.0 L2264.2 1051.9 M2041.7 1049.7 L2048.1 1045.8 L2054.0 1045.9 L2064.7 1045.4 L2078.1 1045.6 M2469.5 1021.0 L2456.7 1016.6 L2449.2 1011.0 L2438.7 1003.6 L2429.9 994.0 L2422.9 987.7 L2417.6 984.1 M1996.9 882.6 L1987.5 885.3 L1977.3 890.3 L1971.9 893.9 M2275.5 863.8 L2280.3 858.7 L2290.1 851.6 L2294.4 843.2 L2298.8 837.9 M2291.8 964.8 L2297.2 971.2 L2305.0 978.0 L2308.7 983.4 L2312.7 990.9 L2320.4 1001.0 L2323.1 1008.3 M2494.1 1011.3 L2481.6 1006.6 L2473.9 1005.0 L2461.4 1005.6 L2448.2 1003.5 L2439.7 1005.7 L2431.1 1009.2 M2158.8 1236.6 L2168.1 1241.8 L2173.8 1245.7 L2183.7 1252.8 L2192.0 1255.4 L2200.8 1262.9 L2208.7 1263.9 M2433.3 716.6 L2433.3 707.5 L2436.8 698.7 L2438.0 691.0 L2440.3 684.3 L2444.1 680.9 L2449.4 676.1 M2397.5 664.4 L2403.6 670.1 L2409.2 674.1 M2508.8 732.1 L2500.5 728.1 L2494.5 729.0 M2176.9 1235.1 L2181.9 1234.3 L2186.8 1231.8 M2162.2 1035.5 L2170.2 1043.2 L2173.1 1050.0 L2180.2 1058.2 M2254.9 1215.1 L2247.3 1203.6 L2240.5 1198.5 L2227.6 1193.6 L2222.3 1193.3 M2088.8 825.8 L2076.1 828.0 L2065.3 832.4 M2433.3 615.4 L2441.3 607.5 L2445.1 600.8 L2444.8 590.0 L2446.2 578.9 M2079.9 1040.8 L2074.0 1035.5 L2065.4 1028.6 L2059.1 1026.9 L2046.6 1030.6 M2125.9 1315.0 L2128.5 1319.5 L2136.7 1323.9 L2145.9 1324.6 L2156.7 1326.4 L2163.9 1333.0 M2527.7 672.2 L2532.5 674.0 L2543.8 680.7 L2554.0 687.1 L2558.7 693.5 L2559.1 701.5 L2557.0 709.7 M2000.1 1089.0 L1996.0 1095.0 L1989.5 1102.6 L1988.3 1109.6 M2327.5 1284.0 L2321.5 1293.1 L2317.1 1298.4 L2306.8 1307.1 M2446.2 1036.0 L2455.1 1032.1 L2465.9 1029.4 M2206.3 645.8 L2199.1 642.7 L2187.5 640.5 L2181.4 641.0 L2173.4 640.6 M2316.8 588.9 L2312.1 600.6 L2307.3 608.6 L2303.0 611.0 L2292.9 617.0 L2286.1 622.5 L2279.9 624.9 M2240.2 1036.1 L2235.6 1029.1 L2230.0 1019.9 L2229.6 1013.7 L2222.4 1002.8 L2221.3 997.1 L2223.8 989.1 M2269.4 954.0 L2264.7 965.4 L2261.2 972.6 L2256.9 981.7 L2257.4 990.1 L2259.6 994.7 M2144.8 1317.8 L2141.1 1306.6 L2131.7 1299.3 M2399.9 696.4 L2408.0 692.4 L2420.1 693.2 L2432.2 698.9 L2436.0 705.0 M2269.9 1309.7 L2257.0 1306.3 L2244.3 1304.1 L2232.1 1299.3 L2219.2 1301.0 M2327.7 842.6 L2332.7 840.8 L2340.9 840.0 L2352.0 837.4 L2364.5 837.5 M2097.6 1227.6 L2087.6 1232.5 L2078.5 1235.5 M1993.7 980.6 L1996.9 976.1 L2000.6 963.3 M2207.5 897.6 L2213.0 906.5 L2215.0 919.3 L2211.7 927.8 L2205.1 939.0 L2198.7 942.9 L2193.1 950.9 M1997.6 1062.7 L1995.3 1051.4 L1989.6 1044.1 M2235.4 610.2 L2246.2 606.8 L2252.8 600.5 L2258.4 599.1 L2267.9 598.2 L2280.6 603.3 M2236.5 896.7 L2237.6 906.1 L2239.3 918.7 M2008.9 1044.5 L2001.7 1043.0 L1995.6 1040.9 L1988.2 1034.6 L1980.7 1033.6 L1972.8 1032.7 M2153.6 1332.5 L2140.1 1329.6 L2131.4 1329.3 L2123.3 1324.4 L2119.5 1318.6 M2115.4 1306.0 L2125.5 1307.4 L2134.6 1303.0 M2455.2 847.7 L2466.3 849.3 L2477.9 854.4 L2484.1 855.6 L2497.0 856.6 L2503.5 856.4 M2493.3 1133.5 L2490.6 1121.9 L2490.9 1113.5 L2495.8 1102.7 L2498.0 1095.0 L2501.3 1085.0 M2529.7 642.6 L2529.0 655.8 L2532.8 663.1 L2532.7 671.5 M2410.0 883.1 L2411.9 872.0 L2413.4 866.9 M2497.2 642.9 L2490.0 645.9 L2483.7 653.6 L2482.1 660.0 L2474.2 667.2 L2468.2 676.0 L2460.5 685.5 M2067.9 1274.2 L2072.7 1264.1 L2071.7 1256.8 L2072.0 1250.9 L2070.4 1245.0 L2072.0 1239.5 L2077.6 1230.5 M2232.3 945.8 L2226.0 941.8 L2220.9 930.5 L2216.2 920.9 L2210.3 917.2 L2201.7 912.0 L2191.8 903.5 M2154.2 987.2 L2156.4 994.7 L2156.4 1001.9 M2352.0 874.9 L2363.7 868.1 L2373.9 863.6 M2212.7 1137.4 L2207.1 1139.6 L2200.1 1144.6 L2194.5 1156.3 L2188.6 1165.0 L2186.9 1169.8 M2297.5 941.0 L2293.9 930.1 L2294.4 924.1 M2399.8 1070.9 L2402.4 1066.5 L2413.1 1057.6 M2273.6 943.9 L2276.4 957.4 L2280.3 962.1 M2313.9 990.6 L2318.4 993.3 L2325.9 993.4 L2337.7 991.9 L2345.7 989.7 M2228.8 1325.4 L2220.0 1335.2 L2214.7 1347.5 L2211.3 1357.6 L2209.3 1364.3 L2202.7 1373.9 M2354.5 671.7 L2342.4 668.2 L2335.9 661.3 L2331.5 653.4 M2391.3 591.5 L2389.8 603.8 L2392.3 616.5 L2390.5 623.5 L2389.9 630.2 L2385.6 636.5 L2384.9 642.8 M2506.9 933.2 L2510.3 942.4 L2508.1 955.2 M2294.6 981.8 L2291.1 987.1 L2284.6 991.8 L2278.5 1000.7 L2273.2 1009.8 L2271.2 1018.5 M2175.7 1040.1 L2174.4 1031.6 L2172.3 1019.1 M2203.3 962.9 L2213.2 957.3 L2219.3 945.8 L2222.4 937.3 M2383.6 1049.9 L2385.3 1058.2 L2390.7 1069.9 L2393.9 1074.4 L2394.6 1086.8 L2397.0 1098.0 L2400.5 1104.1 M2448.6 1062.7 L2461.3 1059.1 L2471.3 1051.8 L2478.8 1042.0 L2485.8 1038.8 M2308.5 652.0 L2303.7 658.3 L2300.9 664.7 L2290.7 674.0 M2156.9 742.4 L2148.3 746.0 L2138.5 746.0 L2127.5 742.1 M2090.4 856.6 L2080.4 857.0 L2072.1 856.2 M2173.5 1105.1 L2166.4 1100.2 L2157.0 1094.3 L2150.8 1091.6 L2140.3 1086.3 L2129.8 1082.5 M2371.1 988.4 L2364.6 992.8 L2359.5 995.1 L2349.9 997.7 L2340.4 1002.7 M2297.9 1228.0 L2305.1 1235.6 L2308.3 1247.8 L2305.6 1258.7 M2349.2 1194.6 L2353.5 1204.8 L2352.1 1214.7 L2351.2 1225.1 L2353.2 1231.8 M2311.4 906.8 L2317.9 910.7 L2327.8 913.0 M2219.0 1168.2 L2222.7 1164.0 L2227.1 1152.0 L2228.9 1146.5 L2230.4 1140.0 L2232.6 1134.3 M2266.6 1056.0 L2273.4 1053.7 L2283.2 1044.3 M2483.6 593.2 L2481.9 586.7 L2477.0 581.6 L2474.7 571.3 M2019.2 1306.1 L2008.8 1300.8 L2001.0 1290.6 L1996.1 1285.4 L1985.2 1280.8 L1978.4 1270.8 M2425.5 961.0 L2428.6 956.4 L2428.9 948.9 M2246.2 1162.5 L2250.4 1152.4 L2251.2 1145.4 M2253.1 541.0 L2248.2 535.0 L2242.4 532.2 L2232.8 531.2 M2410.0 763.3 L2409.1 753.7 L2412.0 740.8 L2411.0 732.1 L2413.2 726.4 L2416.1 721.9 L2422.5 715.3 M2475.2 659.0 L2488.5 656.8 L2494.3 658.3 L2503.5 658.7 L2512.3 659.3 L2524.4 666.1 L2532.1 667.6 M2520.6 1140.3 L2531.4 1140.8 L2539.3 1139.6 M2458.8 966.8 L2468.7 973.6 L2474.7 984.0 L2475.5 990.5 L2480.1 996.7 L2485.9 1003.2 M2346.4 909.8 L2353.8 910.1 L2363.4 910.3 M2386.4 1146.0 L2393.0 1148.6 L2396.9 1153.5 L2405.7 1159.2 L2412.8 1168.0 L2418.7 1174.1 M2228.6 1088.9 L2224.4 1099.2 L2225.6 1110.4 L2230.3 1120.1 L2238.3 1126.4 M2351.6 698.2 L2350.2 691.7 L2342.2 684.3 L2340.3 677.8 L2333.9 667.5 L2329.4 665.1 L2321.3 659.4 M2291.5 1064.4 L2290.0 1077.4 L2290.2 1084.6 L2296.2 1094.2 L2300.1 1100.1 L2305.2 1109.6 M2398.0 1057.1 L2392.8 1070.0 L2392.6 1076.6 M2411.8 1017.0 L2418.7 1011.0 L2423.9 1008.9 L2427.3 1004.3 M2342.4 665.3 L2329.3 667.0 L2318.7 668.9 M2261.3 923.8 L2249.4 925.2 L2239.4 923.2 L2229.7 923.9 L2223.9 925.5 L2214.5 934.8 L2204.3 943.0 M2290.2 1197.6 L2297.6 1201.2 L2301.0 1205.5 L2313.5 1211.0 L2324.7 1210.5 L2331.0 1213.5 M2463.3 640.0 L2456.1 649.2 L2452.0 660.7 L2444.8 670.1 L2439.5 673.2 M2441.0 822.4 L2431.3 825.9 L2427.5 829.8 L2418.1 832.8 L2406.4 837.0 M2517.3 1081.0 L2517.1 1090.0 L2513.1 1102.8 L2507.4 1110.2 L2505.5 1115.3 L2507.7 1128.5 L2508.6 1133.7 M2454.5 657.1 L2454.0 651.1 L2459.5 640.0 L2465.2 635.9 L2473.0 634.6 L2483.7 631.2 M2052.7 1065.3 L2049.6 1056.5 L2039.3 1047.1 L2033.8 1041.0 L2028.2 1035.4 L2026.4 1030.6 M2415.5 1187.3 L2410.7 1183.0 L2406.5 1178.2 M2332.5 905.9 L2324.1 913.7 L2314.7 919.3 L2303.7 919.8 L2291.3 920.1 M2219.2 906.6 L2230.6 913.6 L2238.9 915.9 L2245.9 917.1 L2255.7 916.2 M2074.4 791.2 L2076.1 783.3 L2081.5 773.1 M2095.4 1269.5 L2094.6 1260.1 L2092.5 1251.7 L2093.1 1245.9 L2095.2 1239.8 L2099.5 1232.9 L2099.9 1226.2 M2028.9 1240.2 L2033.5 1244.3 L2039.8 1255.2 L2042.8 1263.6 L2045.6 1274.7" stroke="#e8a8b2" stroke-width="0.8" fill="none" opacity="0.75"/><path d="M2422.6 700.0 L2417.7 698.0 L2414.8 693.2 L2408.6 688.5 M2113.4 1229.6 L2105.8 1232.0 L2097.5 1228.9 L2089.8 1228.7 L2085.8 1223.5 L2079.9 1220.0 L2075.7 1220.2 L2070.8 1219.3 M2013.8 990.7 L2019.0 989.0 L2025.6 992.2 L2029.7 996.7 L2033.1 1003.6 L2034.7 1012.3 L2037.0 1019.8 L2037.8 1027.2 M2484.9 706.5 L2482.9 698.7 L2482.3 694.6 L2477.1 688.7 L2470.6 683.4 L2470.5 676.7 M2314.1 812.2 L2313.8 804.9 L2311.0 798.1 L2310.0 794.2 L2307.4 790.6 L2306.3 786.2 L2304.3 778.3 M2352.6 737.7 L2349.3 735.0 L2345.4 727.8 L2339.8 726.4 L2335.0 724.5 L2331.3 718.2 M2298.5 739.1 L2294.7 732.8 L2294.5 727.1 L2290.1 719.5 L2284.9 713.6 L2277.4 709.3 L2270.6 712.1 M2394.3 1048.6 L2399.0 1052.6 L2402.8 1056.4 L2405.3 1060.3 L2407.7 1063.9 L2411.1 1066.6 L2416.8 1067.4 L2424.2 1065.5 L2431.4 1066.7 M2221.0 1162.9 L2218.0 1159.3 L2216.8 1155.3 L2215.9 1150.8 L2215.7 1146.3 L2209.7 1140.7 M2472.0 1304.5 L2471.0 1298.3 L2468.0 1294.1 L2463.8 1293.6 M2130.0 1293.6 L2128.6 1288.6 L2130.7 1284.3 L2132.3 1280.5 L2136.1 1278.5 M2154.4 1055.1 L2148.0 1058.6 L2142.7 1060.8 L2138.4 1060.9 L2130.9 1061.2 M2108.3 1215.1 L2103.9 1214.8 L2097.3 1209.8 L2089.7 1210.3 L2084.7 1210.9 L2079.2 1210.9 L2072.7 1217.0 M2016.1 885.0 L2016.8 880.0 L2012.1 875.0 L2004.5 870.6 L2003.2 866.8 L1998.7 861.9 L1997.7 856.0 M2368.9 760.3 L2370.0 753.8 L2375.4 750.5 L2380.1 746.4 L2386.4 742.2 L2395.1 742.7 M2526.9 927.8 L2533.7 933.4 L2539.5 934.7 L2544.3 936.2 L2549.6 937.8 L2557.6 935.4 L2564.7 932.7 L2570.0 928.6 M2402.9 950.4 L2410.8 953.4 L2413.1 959.1 L2412.8 963.9 L2409.1 968.1 L2408.3 973.1 M2050.8 1089.3 L2053.2 1092.7 L2056.7 1099.4 L2063.0 1103.6 M2517.3 1114.7 L2521.1 1117.6 L2525.2 1116.9 L2528.2 1112.8 L2530.3 1105.6 M2018.8 1110.7 L2023.6 1114.5 L2030.3 1118.4 L2031.8 1123.3 L2028.3 1130.1 L2026.1 1135.9 L2024.1 1141.8 L2027.6 1149.5 M2231.7 1099.7 L2238.7 1096.1 L2242.3 1093.0 L2242.4 1085.2 L2240.5 1079.1 L2243.0 1070.4 M2398.1 1078.3 L2406.1 1074.6 L2409.6 1069.8 L2410.0 1064.0 L2413.6 1057.4 L2416.9 1053.8 L2420.5 1047.8 M2137.0 1120.9 L2129.7 1123.1 L2126.0 1130.8 L2123.6 1136.2 M2296.8 961.5 L2293.7 956.2 L2291.5 948.3 L2295.8 941.3 L2296.3 934.4 L2296.1 926.9 M2164.5 1041.7 L2171.3 1038.4 L2176.7 1039.3 L2183.6 1042.6 M2183.3 733.9 L2187.7 729.1 L2187.7 724.2 L2184.5 718.9 L2184.6 713.1 M2256.4 888.3 L2260.0 882.7 L2263.4 875.5 L2267.2 871.8 L2267.5 864.6 L2264.2 857.6 M2245.9 1311.5 L2239.7 1309.6 L2234.1 1311.3 L2230.5 1318.0 L2230.1 1326.0 L2228.0 1331.6 L2223.8 1333.6 L2217.6 1337.5 M2187.9 1059.9 L2191.5 1062.0 L2196.0 1062.7 L2200.1 1060.7 L2204.6 1054.8 L2212.3 1053.3 L2219.0 1048.9 L2223.2 1045.6 M2480.4 1334.5 L2486.8 1335.7 L2489.3 1339.7 L2490.6 1344.1 M2442.1 914.6 L2447.9 908.0 L2455.5 906.9 L2461.3 903.5 L2466.1 903.5 L2471.2 905.5 L2473.8 909.3 M2070.1 1300.1 L2065.6 1302.0 L2064.1 1306.4 L2063.4 1312.3 L2066.2 1316.5 L2067.8 1324.0 L2065.4 1328.8 L2066.4 1332.9 L2062.8 1337.6 M2489.3 1213.3 L2484.9 1208.2 L2479.1 1208.1 L2471.8 1212.4 L2470.4 1219.3 L2472.1 1223.3 L2471.8 1230.6 L2475.8 1235.9 L2480.2 1241.5 M2204.6 1309.3 L2195.9 1307.3 L2191.7 1304.8 L2186.4 1305.1 L2183.4 1301.7 L2177.7 1296.9 M2047.0 1209.9 L2041.4 1212.2 L2040.1 1216.4 L2040.8 1224.3 L2042.9 1230.7 L2039.8 1235.9 L2034.3 1243.0 L2032.2 1249.5 L2034.0 1254.7 M2130.3 917.6 L2121.9 917.2 L2115.1 916.1 L2107.9 910.8 L2106.6 906.5 M2373.2 1090.0 L2379.1 1091.0 L2387.9 1090.1 L2395.0 1092.6 L2402.7 1096.5 L2409.5 1101.4 L2417.1 1104.9 M2279.5 1204.9 L2282.9 1199.8 L2286.8 1196.2 L2294.9 1194.7 L2298.8 1189.7 L2300.6 1185.7 L2305.8 1182.8 M2313.9 741.0 L2318.2 745.8 L2326.2 746.3 L2331.6 749.5 M2305.4 1241.1 L2310.6 1237.0 L2315.2 1234.1 L2319.5 1232.9 L2323.0 1230.8 M2109.4 1285.3 L2115.5 1283.3 L2123.0 1285.6 L2125.4 1289.1 L2129.6 1296.7 L2132.1 1302.6 L2131.4 1308.7 M2065.5 1131.8 L2062.1 1136.0 L2059.1 1141.9 L2053.0 1143.4 L2048.5 1143.5 L2039.9 1144.3 L2032.6 1147.8 M2172.2 957.4 L2169.0 964.1 L2171.6 969.5 L2177.1 974.4 M2120.8 1004.9 L2124.2 997.0 L2128.8 995.1 L2133.7 992.2 M2102.5 1011.8 L2104.2 1017.4 L2108.7 1020.0 L2112.2 1022.8 L2119.6 1027.0 L2124.3 1029.2 L2132.4 1028.3 L2137.6 1030.5 M2274.5 1117.8 L2278.1 1120.3 L2284.3 1124.5 L2285.5 1129.2 L2291.9 1132.9 L2300.1 1134.3 L2304.6 1137.6 L2307.3 1146.0 M2420.7 1260.3 L2416.0 1265.5 L2407.5 1266.8 L2403.8 1269.7 L2399.9 1274.9 L2399.5 1280.8 L2395.8 1285.4 L2392.0 1289.1 L2390.4 1296.8 M2186.2 1201.3 L2190.1 1195.0 L2189.4 1190.8 L2183.4 1186.8 L2181.5 1180.1 L2184.1 1172.8 L2180.4 1165.3 L2183.6 1157.2 M2147.8 1201.1 L2150.1 1208.3 L2152.4 1216.7 L2154.9 1221.6 L2153.8 1228.1 M2100.7 988.9 L2108.1 987.9 L2112.6 988.3 L2119.0 991.0 L2121.4 998.6 L2122.2 1002.7 L2125.7 1010.3 L2129.5 1013.9 M2368.1 882.7 L2374.7 879.6 L2376.0 874.2 L2378.2 866.9 L2382.4 860.8 L2381.8 855.3 L2380.3 850.8 L2380.4 843.9 L2380.4 836.6 M2103.7 910.8 L2102.5 915.6 L2104.5 921.4 L2107.2 928.6 L2112.3 932.4 L2120.6 933.7 L2128.1 934.3 L2132.6 938.0 L2139.3 942.2 M2139.0 1267.5 L2132.4 1265.1 L2127.7 1266.7 L2122.9 1272.0 M2295.9 1067.0 L2303.8 1067.2 L2308.6 1061.6 L2313.1 1058.3 L2315.0 1051.1 M2202.2 1077.6 L2196.4 1071.8 L2191.9 1072.0 L2186.8 1073.8 L2180.7 1076.5 L2174.3 1075.3 L2169.9 1071.2 L2162.6 1068.8 L2155.7 1065.4 M2455.1 929.2 L2453.5 933.7 L2453.7 942.1 L2455.1 948.0 L2453.1 953.3 L2453.9 959.2 L2455.8 964.8 L2453.1 972.2 L2455.5 977.0 M2138.5 1193.5 L2145.3 1196.8 L2147.5 1200.9 L2149.4 1204.6 L2152.6 1210.8 L2154.4 1217.7 L2154.8 1224.2 L2153.5 1228.1 L2151.0 1233.6 M2216.6 1159.3 L2213.8 1154.4 L2213.0 1148.7 L2214.4 1140.3 L2212.3 1132.1 L2212.4 1126.7 L2209.7 1121.8 M2425.5 846.6 L2430.3 844.3 L2431.8 840.0 L2438.0 834.8 L2445.0 829.9 M2322.0 1109.2 L2325.9 1107.5 L2332.3 1101.9 L2336.4 1102.1 L2342.8 1105.7 L2345.8 1108.7 L2352.7 1113.2 L2359.7 1117.1 L2360.7 1122.1 M2016.5 1285.2 L2010.1 1288.6 L2006.9 1293.6 L2008.0 1301.0 L2006.7 1304.9 M2299.8 1002.0 L2302.8 1006.9 L2310.0 1008.4 L2315.4 1006.7 M2425.5 917.8 L2420.8 916.3 L2415.7 916.9 L2406.8 916.6 L2399.1 912.3 L2394.0 906.9 L2390.0 899.1 M2320.8 865.0 L2323.6 869.8 L2321.6 876.3 L2318.3 883.0 L2312.4 889.4 L2307.6 896.2 L2302.1 901.1 L2299.6 905.2 M2277.2 1204.7 L2281.2 1200.9 L2282.1 1194.7 L2281.8 1189.5 L2281.2 1182.7 L2283.2 1175.7 L2282.9 1171.5 L2287.3 1164.5 L2293.6 1160.5 M1990.7 1260.1 L1998.1 1264.9 L2004.5 1270.0 L2012.5 1268.4 L2020.0 1273.0 L2023.2 1278.2 M2232.1 1068.9 L2235.7 1066.5 L2236.2 1060.0 L2233.4 1053.2 L2232.0 1047.0 L2225.8 1043.8 M2233.0 1121.6 L2231.5 1128.6 L2235.5 1133.7 L2240.6 1139.6 L2244.6 1146.6 L2247.7 1154.9 L2247.0 1162.5 L2245.8 1167.2 L2243.7 1175.7 M2489.9 1216.6 L2491.6 1221.4 L2493.6 1227.8 L2496.5 1233.9 L2500.8 1238.4 M2358.0 792.7 L2360.8 788.1 L2367.9 786.1 L2374.8 790.5 L2382.8 789.5 M2375.6 932.2 L2380.4 936.4 L2384.0 939.3 L2389.5 940.0 M2055.6 1170.0 L2056.9 1163.9 L2058.5 1156.9 L2061.9 1153.7 L2068.0 1152.1 L2075.1 1153.3 L2081.3 1153.1 L2086.5 1152.6 L2091.2 1148.3 M2048.2 939.5 L2041.9 942.6 L2035.7 945.0 L2031.5 950.4 L2025.9 950.5 L2018.3 948.1 M2470.1 1305.7 L2462.5 1303.8 L2455.7 1300.9 L2448.7 1297.5 L2443.2 1297.3 L2436.5 1302.8 L2435.1 1309.5 L2433.7 1317.6 L2439.3 1324.3 M2366.7 1087.8 L2361.8 1092.8 L2356.1 1094.1 L2349.9 1100.5 L2344.0 1106.1 M2416.2 700.8 L2416.2 693.3 L2418.5 685.0 L2425.5 681.0 L2432.5 677.4 L2437.2 676.0 L2442.6 672.5 L2450.5 671.5 L2455.4 665.1 M1992.7 998.4 L1999.6 1001.2 L2008.5 1002.4 L2012.9 1006.1 M2437.4 1031.6 L2436.7 1027.3 L2432.7 1022.3 L2424.4 1022.3 L2419.4 1025.2 L2414.5 1030.4 L2410.9 1038.1 L2409.7 1043.2 M2118.6 1029.0 L2125.1 1034.9 L2131.5 1041.0 L2133.6 1046.4 L2131.4 1054.8 L2132.5 1061.8 L2135.9 1065.3 L2138.8 1069.5 M2074.8 965.0 L2076.0 957.0 L2075.7 949.2 L2076.9 945.3 L2076.6 937.9 L2081.3 933.4 L2085.9 931.3 L2087.6 927.0 L2094.8 924.5 M2404.1 1190.0 L2409.2 1187.3 L2414.1 1184.8 L2422.3 1184.8 L2426.4 1184.3 L2433.8 1184.8 L2441.5 1182.0 L2447.8 1176.1 M2306.2 1228.5 L2305.1 1220.1 L2302.1 1215.4 L2297.8 1213.4 L2295.6 1208.5 M2462.9 1329.7 L2457.1 1325.7 L2448.2 1326.3 L2440.8 1323.7 L2438.0 1318.1 L2441.3 1310.7 L2445.8 1305.4 M2038.5 1141.4 L2042.7 1141.0 L2050.5 1138.4 L2056.7 1132.0 L2060.4 1129.2 L2068.3 1127.6 L2073.2 1130.1 M2144.4 1229.8 L2139.7 1226.4 L2139.4 1220.5 L2138.4 1215.2 L2135.3 1208.1 L2130.7 1202.8 M2365.3 1115.2 L2371.0 1122.1 L2377.2 1127.3 L2382.9 1132.7 M2030.4 866.8 L2034.4 867.2 L2040.1 868.1 L2043.5 871.4 L2047.1 874.9 L2051.3 875.2 M2258.4 1244.2 L2264.6 1250.5 L2263.9 1257.0 L2265.4 1263.9 L2262.8 1267.2 L2255.2 1268.4 L2247.5 1269.2 L2243.5 1271.5 L2238.3 1278.6 M2266.7 878.4 L2262.0 871.6 L2261.6 867.4 L2259.3 862.5 L2260.7 858.7 M2026.6 872.4 L2022.6 874.6 L2016.5 875.6 L2009.0 874.2 L2005.1 870.4 L2003.2 864.4 L2006.5 857.6 L2009.3 850.1 M2122.4 884.7 L2127.8 885.9 L2132.0 886.2 L2139.6 886.3 M2438.3 732.4 L2444.3 726.5 L2445.2 718.4 L2445.3 712.9 L2441.9 710.0 L2436.7 710.4 L2433.1 713.9 L2429.6 719.7 L2424.0 726.4 M2320.0 778.4 L2315.3 784.4 L2308.7 787.6 L2306.7 793.9 L2305.5 802.6 L2300.3 807.5 M2175.2 1026.3 L2180.7 1022.9 L2187.3 1022.5 L2192.2 1016.4 L2194.1 1008.9 L2198.0 1002.5 L2202.0 1001.3 L2207.3 999.1 L2211.7 992.5 M2187.4 738.1 L2186.4 743.0 L2184.1 750.2 L2183.3 755.2 L2178.8 761.9 L2171.1 765.5 L2165.6 768.8 L2159.8 766.7 L2156.6 762.6 M2487.7 864.8 L2496.6 865.8 L2501.9 872.2 L2509.5 873.1 L2514.0 874.1 L2518.8 879.0 L2521.5 885.5 L2525.4 890.9 M2235.9 1268.2 L2230.5 1262.7 L2227.0 1260.2 L2222.5 1256.3 L2217.2 1251.5 L2217.4 1243.5 L2220.8 1240.7 M2010.1 1193.3 L2002.4 1196.8 L1997.3 1201.6 L1988.9 1203.4 M2503.1 702.3 L2494.4 700.7 L2491.9 696.8 L2487.2 695.5 L2481.5 696.5 L2475.4 699.0 M2187.5 796.3 L2189.8 791.6 L2192.9 784.1 L2189.4 776.4 L2191.7 768.5 L2197.1 763.0 L2198.2 757.0 L2203.1 752.5 L2205.6 744.1 M2489.3 1077.0 L2495.6 1079.6 L2499.8 1079.2 L2507.0 1077.1 M2378.7 1324.3 L2382.5 1325.8 L2389.5 1324.9 L2395.6 1320.7 L2401.2 1320.4 L2408.4 1318.4 L2415.2 1318.1 M2174.5 971.2 L2169.8 970.4 L2164.3 968.1 L2162.1 963.9 L2164.3 957.3 M2136.7 907.7 L2138.2 911.8 L2136.1 916.2 L2138.2 920.7 L2137.6 925.8 L2133.2 932.7 L2129.1 934.2 M2445.9 960.4 L2449.1 952.8 L2455.4 950.7 L2464.2 950.7 L2468.8 951.0 L2477.3 948.5 L2485.6 946.4 L2489.0 939.3 L2489.6 930.9 M2449.8 1087.2 L2450.0 1092.4 L2446.9 1099.1 L2444.5 1103.3 M2416.8 1079.5 L2418.0 1072.3 L2416.2 1067.4 L2408.7 1062.7 L2403.3 1061.9 L2396.5 1057.9 L2390.8 1052.1 L2387.7 1046.5 M2133.2 870.0 L2137.4 865.2 L2145.2 862.1 L2153.2 863.8 L2159.2 861.8 M2041.4 1180.1 L2033.6 1178.0 L2027.0 1182.4 L2022.7 1183.7 L2016.5 1182.8 L2009.7 1181.6 L2004.8 1181.3 L1998.9 1179.2 M2103.0 1143.5 L2095.5 1147.6 L2092.1 1152.8 L2088.8 1158.7 L2088.7 1165.3 L2091.6 1172.6 L2089.8 1178.9 M2092.2 1265.1 L2094.2 1261.2 L2096.0 1256.4 L2099.8 1253.4 L2107.7 1250.5 L2113.3 1248.9 M2213.6 976.9 L2215.4 971.6 L2218.5 965.1 L2220.4 959.5 L2218.8 954.4 M2287.0 903.0 L2291.3 908.2 L2291.8 914.9 L2295.3 921.4 L2293.8 926.6 L2289.4 932.5 M2089.5 1229.0 L2092.8 1226.5 L2098.1 1221.3 L2104.1 1216.7 L2108.7 1209.2 M2167.7 1100.8 L2169.5 1106.2 L2168.9 1115.0 L2171.0 1121.3 L2177.2 1124.1 L2184.6 1127.1 L2188.4 1125.8 L2191.0 1121.1 L2195.2 1115.7 M2253.7 747.7 L2252.1 753.8 L2248.6 756.3 L2240.7 756.4 L2231.9 757.0 L2226.8 761.3 M2455.4 928.1 L2451.0 926.5 L2449.1 921.3 L2444.5 913.7 L2440.3 907.7 L2438.2 899.8 L2439.6 892.3 L2445.9 889.0 L2452.8 890.1 M2011.1 870.6 L2016.7 871.1 L2024.8 870.1 L2030.8 868.6 L2034.8 867.2 M2294.0 972.3 L2300.9 976.4 L2308.8 975.2 L2313.2 975.6 L2316.2 979.1 M2490.3 938.0 L2486.0 941.3 L2482.4 945.0 L2477.1 949.8 L2471.9 951.8 M2058.6 1242.0 L2053.8 1241.0 L2046.7 1243.3 L2041.6 1244.8 L2033.6 1242.2 M2431.5 1182.8 L2428.6 1178.5 L2422.3 1175.6 L2414.4 1171.9 L2410.8 1167.3 L2405.7 1165.3 L2402.0 1163.2 M2139.7 926.2 L2132.5 929.4 L2129.6 934.4 L2125.8 937.4 L2119.2 936.5 L2114.3 940.9 L2108.0 940.4 L2103.2 939.8 M2219.8 1111.6 L2220.0 1107.5 L2218.3 1101.2 L2220.9 1094.6 L2223.1 1086.6 L2223.0 1079.7 M2450.6 727.9 L2456.7 725.7 L2461.5 719.0 L2462.1 713.3 L2466.2 706.7 M2170.1 963.7 L2176.0 965.3 L2180.5 963.3 L2183.7 956.1 L2187.0 948.1 L2186.4 943.0 L2185.5 938.3 M2430.2 725.5 L2425.1 722.1 L2419.2 723.1 L2411.1 720.1 L2405.9 722.7 M2363.3 1275.2 L2369.8 1273.3 L2377.2 1277.4 L2382.5 1275.4 L2391.3 1276.9 L2397.1 1275.2 L2401.8 1274.3 L2408.7 1275.0 M2487.6 1312.7 L2486.4 1317.8 L2479.5 1322.2 L2479.0 1327.6 L2481.6 1332.0 M2507.3 797.2 L2501.0 795.7 L2496.6 798.1 L2489.6 796.1 L2484.2 793.3 M2501.5 1216.3 L2497.7 1213.6 L2493.5 1213.5 L2490.3 1209.9 L2485.7 1208.6 L2481.2 1209.9 L2474.9 1207.3 L2469.6 1201.6 L2468.0 1196.9 M2394.7 1341.1 L2392.2 1345.2 L2393.3 1352.0 L2396.5 1355.6 L2396.2 1362.5" stroke="#b0b0a8" stroke-width="0.7" fill="none" opacity="0.6"/><path d="M2088.0 822.0 L2130.0 828.0 L2182.0 804.0 L2201.0 800.0 L2227.0 804.0 L2246.0 812.0 L2253.0 823.0 L2278.0 827.0 L2291.0 840.0 L2304.0 851.0 L2310.0 875.0 L2317.0 900.0" stroke="#a69cb4" stroke-width="2.2" fill="none" opacity="0.75"/><path d="M2439.0 528.0 L2439.0 560.0 L2430.0 600.0 L2425.0 626.0 L2393.5 628.0 L2393.0 650.0 L2418.5 656.0 L2426.5 672.0 L2425.0 688.0 L2398.0 708.0 L2403.7 729.0 L2395.7 738.0 L2366.0 742.0 L2343.0 738.0 L2325.0 749.0 L2336.5 776.5 L2348.0 799.0 L2345.0 820.0 L2334.0 840.0 L2318.0 870.0 L2317.0 900.0" stroke="#a69cb4" stroke-width="2.2" fill="none" opacity="0.75"/><path d="M2335.0 893.0 L2341.6 903.0 L2348.0 916.0 L2355.0 930.0 L2348.0 946.0 L2341.6 973.0 L2335.0 989.0 L2318.0 996.0 L2308.5 1029.0 L2315.0 1072.0 L2302.0 1079.0 L2288.6 1082.0 L2275.0 1075.0 L2265.5 1059.0 L2245.6 1046.0 L2225.7 1036.0 L2222.0 1019.0 L2229.0 1006.0 L2222.0 992.6 L2216.0 996.0 L2196.0 1019.0 L2183.0 1021.0 L2166.0 1016.0 L2159.5 1002.5 L2163.0 979.0 L2150.0 964.0 L2120.0 963.0 L2116.0 949.5 L2093.0 940.0 L2080.0 920.0 L2073.0 900.0 L2050.0 903.0 L2027.0 897.0 L2017.0 880.0 L1995.0 872.0 L1984.0 868.0" stroke="#a69cb4" stroke-width="2.2" fill="none" opacity="0.75"/><path d="M2341.6 989.0 L2345.0 1012.0 L2361.5 1035.6 L2374.7 1039.0 L2364.8 1065.4 L2361.5 1082.0 L2345.0 1085.0 L2315.0 1072.0" stroke="#a69cb4" stroke-width="2.2" fill="none" opacity="0.75"/><path d="M2361.5 1082.0 L2381.4 1092.0 L2391.3 1118.4 L2414.5 1121.7 L2454.0 1135.0 L2470.8 1141.6 L2500.6 1145.0 L2527.0 1155.0 L2532.0 1158.0" stroke="#a69cb4" stroke-width="2.2" fill="none" opacity="0.75"/><path d="M2532.0 1158.0 L2527.0 1161.5 L2500.6 1198.0 L2490.6 1227.7 L2480.7 1277.4 L2474.0 1320.4 L2467.4 1346.0" stroke="#a69cb4" stroke-width="2.2" fill="none" opacity="0.75"/></g><g><path d="M2187.0 864 L2184 907 L2197.0 864" fill="#c8c8c8" stroke="#777" stroke-width="0.8" opacity="0.9"/><rect x="2177" y="825" width="30" height="40" rx="4" fill="#c8c8c8" stroke="#777" stroke-width="0.8" opacity="0.9"/><text x="2179" y="835.0" font-family="Liberation Mono" font-size="10.5" fill="#111">12A</text><text x="2179" y="844.5" font-family="Liberation Mono" font-size="10.5" fill="#111">60..</text><text x="2179" y="854.0" font-family="Liberation Mono" font-size="10.5" fill="#111">2 4</text></g><g transform="rotate(25 2208.0 848.0)"><path d="M2203.0 867 L2200 905 L2213.0 867" fill="#c8c8c8" stroke="#777" stroke-width="0.8" opacity="0.9"/><rect x="2192" y="828" width="32" height="40" rx="4" fill="#c8c8c8" stroke="#777" stroke-width="0.8" opacity="0.9"/><text x="2194" y="838.0" font-family="Liberation Mono" font-size="10.5" fill="#111">11A</text><text x="2194" y="847.5" font-family="Liberation Mono" font-size="10.5" fill="#111">6002</text><text x="2194" y="857.0" font-family="Liberation Mono" font-size="10.5" fill="#111">1 2</text></g><g><path d="M2235.0 864 L2234 905 L2245.0 864" fill="#c8c8c8" stroke="#777" stroke-width="0.8" opacity="0.9"/><rect x="2225" y="825" width="30" height="40" rx="4" fill="#c8c8c8" stroke="#777" stroke-width="0.8" opacity="0.9"/><text x="2227" y="835.0" font-family="Liberation Mono" font-size="10.5" fill="#111">12A</text><text x="2227" y="844.5" font-family="Liberation Mono" font-size="10.5" fill="#111">60..</text><text x="2227" y="854.0" font-family="Liberation Mono" font-size="10.5" fill="#111">4</text></g><g transform="rotate(25 2256.0 848.0)"><path d="M2251.0 867 L2245 900 L2261.0 867" fill="#c8c8c8" stroke="#777" stroke-width="0.8" opacity="0.9"/><rect x="2240" y="828" width="32" height="40" rx="4" fill="#c8c8c8" stroke="#777" stroke-width="0.8" opacity="0.9"/><text x="2242" y="838.0" font-family="Liberation Mono" font-size="10.5" fill="#111">11A</text><text x="2242" y="847.5" font-family="Liberation Mono" font-size="10.5" fill="#111">6002</text><text x="2242" y="857.0" font-family="Liberation Mono" font-size="10.5" fill="#111">17</text></g><g transform="rotate(25 2278.0 850.0)"><path d="M2273.0 869 L2262 900 L2283.0 869" fill="#c8c8c8" stroke="#777" stroke-width="0.8" opacity="0.9"/><rect x="2262" y="830" width="32" height="40" rx="4" fill="#c8c8c8" stroke="#777" stroke-width="0.8" opacity="0.9"/><text x="2264" y="840.0" font-family="Liberation Mono" font-size="10.5" fill="#111">11A</text><text x="2264" y="849.5" font-family="Liberation Mono" font-size="10.5" fill="#111">6002</text><text x="2264" y="859.0" font-family="Liberation Mono" font-size="10.5" fill="#111">21</text></g><g><path d="M2281.0 869 L2284 893 L2291.0 869" fill="#c8c8c8" stroke="#777" stroke-width="0.8" opacity="0.9"/><rect x="2272" y="832" width="28" height="38" rx="4" fill="#c8c8c8" stroke="#777" stroke-width="0.8" opacity="0.9"/><text x="2274" y="842.0" font-family="Liberation Mono" font-size="10.5" fill="#111"> </text><text x="2274" y="851.5" font-family="Liberation Mono" font-size="10.5" fill="#111">01</text><text x="2274" y="861.0" font-family="Liberation Mono" font-size="10.5" fill="#111">3</text></g><g><path d="M2181.0 903 L2184 908 L2191.0 903" fill="#c8c8c8" stroke="#777" stroke-width="0.8" opacity="0.9"/><rect x="2170" y="866" width="32" height="38" rx="4" fill="#c8c8c8" stroke="#777" stroke-width="0.8" opacity="0.9"/><text x="2172" y="876.0" font-family="Liberation Mono" font-size="10.5" fill="#111">12A</text><text x="2172" y="885.5" font-family="Liberation Mono" font-size="10.5" fill="#111">6001</text><text x="2172" y="895.0" font-family="Liberation Mono" font-size="10.5" fill="#111">1 9</text></g><g><path d="M2207.0 901 L2200 908 L2217.0 901" fill="#c8c8c8" stroke="#777" stroke-width="0.8" opacity="0.9"/><rect x="2199" y="866" width="26" height="36" rx="4" fill="#c8c8c8" stroke="#777" stroke-width="0.8" opacity="0.9"/><text x="2201" y="876.0" font-family="Liberation Mono" font-size="10.5" fill="#111">A</text><text x="2201" y="885.5" font-family="Liberation Mono" font-size="10.5" fill="#111">01</text><text x="2201" y="895.0" font-family="Liberation Mono" font-size="10.5" fill="#111">8</text></g><g><path d="M2226.0 899 L2233 898 L2236.0 899" fill="#c8c8c8" stroke="#777" stroke-width="0.8" opacity="0.9"/><rect x="2215" y="860" width="32" height="40" rx="4" fill="#c8c8c8" stroke="#777" stroke-width="0.8" opacity="0.9"/><text x="2217" y="870.0" font-family="Liberation Mono" font-size="10.5" fill="#111">1</text><text x="2217" y="879.5" font-family="Liberation Mono" font-size="10.5" fill="#111">2 11</text></g><g><path d="M2297.0 778 L2302 794 L2307.0 778" fill="#c8c8c8" stroke="#777" stroke-width="0.8" opacity="0.9"/><rect x="2287" y="749" width="30" height="30" rx="4" fill="#c8c8c8" stroke="#777" stroke-width="0.8" opacity="0.9"/><text x="2289" y="759.0" font-family="Liberation Mono" font-size="10.5" fill="#111">12C</text><text x="2289" y="768.5" font-family="Liberation Mono" font-size="10.5" fill="#111">8001</text><text x="2289" y="778.0" font-family="Liberation Mono" font-size="10.5" fill="#111">3 21</text></g><g><path d="M2322.0 828 L2327 844 L2332.0 828" fill="#c8c8c8" stroke="#777" stroke-width="0.8" opacity="0.9"/><rect x="2312" y="799" width="30" height="30" rx="4" fill="#c8c8c8" stroke="#777" stroke-width="0.8" opacity="0.9"/><text x="2314" y="809.0" font-family="Liberation Mono" font-size="10.5" fill="#111">12C</text><text x="2314" y="818.5" font-family="Liberation Mono" font-size="10.5" fill="#111">8001</text><text x="2314" y="828.0" font-family="Liberation Mono" font-size="10.5" fill="#111">3 3</text></g><g><path d="M2319.0 879 L2322 895 L2329.0 879" fill="#c8c8c8" stroke="#777" stroke-width="0.8" opacity="0.9"/><rect x="2308" y="850" width="32" height="30" rx="4" fill="#c8c8c8" stroke="#777" stroke-width="0.8" opacity="0.9"/><text x="2310" y="860.0" font-family="Liberation Mono" font-size="10.5" fill="#111">12C</text><text x="2310" y="869.5" font-family="Liberation Mono" font-size="10.5" fill="#111">80</text><text x="2310" y="879.0" font-family="Liberation Mono" font-size="10.5" fill="#111">3</text></g><g><path d="M2349.0 885 L2350 903 L2359.0 885" fill="#c8c8c8" stroke="#777" stroke-width="0.8" opacity="0.9"/><rect x="2340" y="857" width="28" height="29" rx="4" fill="#c8c8c8" stroke="#777" stroke-width="0.8" opacity="0.9"/><text x="2342" y="867.0" font-family="Liberation Mono" font-size="10.5" fill="#111"></text><text x="2342" y="876.5" font-family="Liberation Mono" font-size="10.5" fill="#111">FA</text><text x="2342" y="886.0" font-family="Liberation Mono" font-size="10.5" fill="#111">1</text></g><g transform="rotate(30 2338.0 868.0)"><path d="M2333.0 883 L2330 894 L2343.0 883" fill="#e4ee58" stroke="#777" stroke-width="0.8" opacity="0.9"/><rect x="2320" y="852" width="36" height="32" rx="4" fill="#e4ee58" stroke="#777" stroke-width="0.8" opacity="0.9"/><text x="2322" y="862.0" font-family="Liberation Mono" font-size="10.5" fill="#111">5A</text><text x="2322" y="871.5" font-family="Liberation Mono" font-size="10.5" fill="#111">8657</text><text x="2322" y="881.0" font-family="Liberation Mono" font-size="10.5" fill="#111">57 10</text></g><circle cx="2212" cy="871" r="5.5" fill="#e03838" stroke="#b02020" stroke-width="1"/></svg>
<div class="t" style="left:1894px;width:1000px;text-align:center;top:536.8px;font-size:12px;color:#8a7aa6;font-style:italic;text-shadow:0 0 2px #fff,0 0 2px #fff">Groningen</div>
<div class="t" style="left:1792px;width:1000px;text-align:center;top:544.8px;font-size:12px;color:#8a7aa6;font-style:italic;text-shadow:0 0 2px #fff,0 0 2px #fff">Fryslân</div>
<div class="t" style="left:1891px;width:1000px;text-align:center;top:581.8px;font-size:12px;color:#8a7aa6;font-style:italic;text-shadow:0 0 2px #fff,0 0 2px #fff">Drenthe</div>
<div class="t" style="left:1737px;width:1000px;text-align:center;top:613.8px;font-size:12px;color:#8a7aa6;font-style:italic;text-shadow:0 0 2px #fff,0 0 2px #fff">Noord-Holland</div>
<div class="t" style="left:1864px;width:1000px;text-align:center;top:646.8px;font-size:12px;color:#8a7aa6;font-style:italic;text-shadow:0 0 2px #fff,0 0 2px #fff">Overijssel</div>
<div class="t" style="left:1837px;width:1000px;text-align:center;top:698.8px;font-size:12px;color:#8a7aa6;font-style:italic;text-shadow:0 0 2px #fff,0 0 2px #fff">Gelderland</div>
<div class="t" style="left:1682px;width:1000px;text-align:center;top:719.8px;font-size:12px;color:#8a7aa6;font-style:italic;text-shadow:0 0 2px #fff,0 0 2px #fff">Zuid-Holland</div>
<div class="t" style="left:1627px;width:1000px;text-align:center;top:792.8px;font-size:12px;color:#8a7aa6;font-style:italic;text-shadow:0 0 2px #fff,0 0 2px #fff">Zeeland</div>
<div class="t" style="left:1741px;width:1000px;text-align:center;top:787.8px;font-size:12px;color:#8a7aa6;font-style:italic;text-shadow:0 0 2px #fff,0 0 2px #fff">Noord-Brabant</div>
<div class="t" style="left:1816px;width:1000px;text-align:center;top:824.8px;font-size:12px;color:#8a7aa6;font-style:italic;text-shadow:0 0 2px #fff,0 0 2px #fff">Limburg</div>
<div class="t" style="left:1971px;width:1000px;text-align:center;top:792.8px;font-size:12px;color:#8a7aa6;font-style:italic;text-shadow:0 0 2px #fff,0 0 2px #fff">Nordrhein-</div>
<div class="t" style="left:1971px;width:1000px;text-align:center;top:806.8px;font-size:12px;color:#8a7aa6;font-style:italic;text-shadow:0 0 2px #fff,0 0 2px #fff">Westfalen</div>
<div class="t" style="left:1774px;width:1000px;text-align:center;top:983.8px;font-size:12px;color:#8a7aa6;font-style:italic;text-shadow:0 0 2px #fff,0 0 2px #fff">Wallonie</div>
<div class="t" style="left:1542px;width:1000px;text-align:center;top:1003.8px;font-size:12px;color:#8a7aa6;font-style:italic;text-shadow:0 0 2px #fff,0 0 2px #fff">Hauts-de-</div>
<div class="t" style="left:1542px;width:1000px;text-align:center;top:1017.8px;font-size:12px;color:#8a7aa6;font-style:italic;text-shadow:0 0 2px #fff,0 0 2px #fff">France</div>
<div class="t" style="left:1943px;width:1000px;text-align:center;top:1004.8px;font-size:12px;color:#8a7aa6;font-style:italic;text-shadow:0 0 2px #fff,0 0 2px #fff">Rheinland-</div>
<div class="t" style="left:1943px;width:1000px;text-align:center;top:1018.8px;font-size:12px;color:#8a7aa6;font-style:italic;text-shadow:0 0 2px #fff,0 0 2px #fff">Pfalz</div>
<div class="t" style="left:1917px;width:1000px;text-align:center;top:1094.8px;font-size:12px;color:#8a7aa6;font-style:italic;text-shadow:0 0 2px #fff,0 0 2px #fff">Saarland</div>
<div class="t" style="left:1810px;width:1000px;text-align:center;top:1172.8px;font-size:12px;color:#8a7aa6;font-style:italic;text-shadow:0 0 2px #fff,0 0 2px #fff">Grand Est</div>
<div class="t" style="left:1513px;width:1000px;text-align:center;top:1191.8px;font-size:12px;color:#8a7aa6;font-style:italic;text-shadow:0 0 2px #fff,0 0 2px #fff">Île-de-France</div>
<div class="t" style="left:1880px;width:1000px;text-align:center;top:561.3px;font-size:11.5px;color:#3a3a3a;text-shadow:0 0 2px #fff,0 0 2px #fff">Assen</div>
<div class="t" style="left:2017px;width:1000px;text-align:center;top:539.3px;font-size:11.5px;color:#3a3a3a;text-shadow:0 0 2px #fff,0 0 2px #fff">Olden</div>
<div class="t" style="left:1910px;width:1000px;text-align:center;top:607.3px;font-size:11.5px;color:#3a3a3a;text-shadow:0 0 2px #fff,0 0 2px #fff">Emmen</div>
<div class="t" style="left:1781px;width:1000px;text-align:center;top:633.3px;font-size:11.5px;color:#3a3a3a;text-shadow:0 0 2px #fff,0 0 2px #fff">Lelystad</div>
<div class="t" style="left:2010px;width:1000px;text-align:center;top:670.3px;font-size:11.5px;color:#3a3a3a;text-shadow:0 0 2px #fff,0 0 2px #fff">Osnabrü</div>
<div class="t" style="left:1910px;width:1000px;text-align:center;top:677.3px;font-size:11.5px;color:#3a3a3a;text-shadow:0 0 2px #fff,0 0 2px #fff">Enschede</div>
<div class="t" style="left:1692px;width:1000px;text-align:center;top:687.3px;font-size:11.5px;color:#3a3a3a;text-shadow:0 0 2px #fff,0 0 2px #fff">Leiden</div>
<div class="t" style="left:1786px;width:1000px;text-align:center;top:711.3px;font-size:11.5px;color:#3a3a3a;text-shadow:0 0 2px #fff,0 0 2px #fff">Ede</div>
<div class="t" style="left:1821px;width:1000px;text-align:center;top:728.3px;font-size:11.5px;color:#3a3a3a;text-shadow:0 0 2px #fff,0 0 2px #fff">Arnhem</div>
<div class="t" style="left:1976px;width:1000px;text-align:center;top:731.3px;font-size:11.5px;color:#3a3a3a;text-shadow:0 0 2px #fff,0 0 2px #fff">Münster</div>
<div class="t" style="left:1707px;width:1000px;text-align:center;top:737.3px;font-size:11.5px;color:#3a3a3a;text-shadow:0 0 2px #fff,0 0 2px #fff">Dordrecht</div>
<div class="t" style="left:1810px;width:1000px;text-align:center;top:750.3px;font-size:11.5px;color:#3a3a3a;text-shadow:0 0 2px #fff,0 0 2px #fff">Nijmegen</div>
<div class="t" style="left:1994px;width:1000px;text-align:center;top:757.3px;font-size:11.5px;color:#3a3a3a;text-shadow:0 0 2px #fff,0 0 2px #fff">Hamm</div>
<div class="t" style="left:1760px;width:1000px;text-align:center;top:772.3px;font-size:11.5px;color:#3a3a3a;text-shadow:0 0 2px #fff,0 0 2px #fff">'s-Hertogenbos</div>
<div class="t" style="left:1896px;width:1000px;text-align:center;top:775.3px;font-size:11.5px;color:#3a3a3a;text-shadow:0 0 2px #fff,0 0 2px #fff">Recklinghausen</div>
<div class="t" style="left:1823px;width:1000px;text-align:center;top:794.3px;font-size:11.5px;color:#3a3a3a;text-shadow:0 0 2px #fff,0 0 2px #fff">Helmond</div>
<div class="t" style="left:1521px;width:1000px;text-align:center;top:831.3px;font-size:11.5px;color:#3a3a3a;text-shadow:0 0 2px #fff,0 0 2px #fff">Oostende</div>
<div class="t" style="left:1576px;width:1000px;text-align:center;top:842.3px;font-size:11.5px;color:#3a3a3a;text-shadow:0 0 2px #fff,0 0 2px #fff">Brugge</div>
<div class="t" style="left:1621px;width:1000px;text-align:center;top:849.3px;font-size:11.5px;color:#3a3a3a;text-shadow:0 0 2px #fff,0 0 2px #fff">Gent</div>
<div class="t" style="left:1927px;width:1000px;text-align:center;top:847.3px;font-size:11.5px;color:#3a3a3a;text-shadow:0 0 2px #fff,0 0 2px #fff">Solingen</div>
<div class="t" style="left:1505px;width:1000px;text-align:center;top:852.3px;font-size:11.5px;color:#3a3a3a;text-shadow:0 0 2px #fff,0 0 2px #fff">unkerque</div>
<div class="t" style="left:1580px;width:1000px;text-align:center;top:881.3px;font-size:11.5px;color:#3a3a3a;text-shadow:0 0 2px #fff,0 0 2px #fff">Kortrijk</div>
<div class="t" style="left:1771px;width:1000px;text-align:center;top:886.3px;font-size:11.5px;color:#3a3a3a;text-shadow:0 0 2px #fff,0 0 2px #fff">Maastricht</div>
<div class="t" style="left:2014px;width:1000px;text-align:center;top:875.3px;font-size:11.5px;color:#3a3a3a;text-shadow:0 0 2px #fff,0 0 2px #fff">Siegen</div>
<div class="t" style="left:1835px;width:1000px;text-align:center;top:889.3px;font-size:11.5px;color:#3a3a3a;text-shadow:0 0 2px #fff,0 0 2px #fff">Aachen</div>
<div class="t" style="left:1929px;width:1000px;text-align:center;top:894.3px;font-size:11.5px;color:#3a3a3a;text-shadow:0 0 2px #fff,0 0 2px #fff">Bonn</div>
<div class="t" style="left:1591px;width:1000px;text-align:center;top:928.3px;font-size:11.5px;color:#3a3a3a;text-shadow:0 0 2px #fff,0 0 2px #fff">Tournai</div>
<div class="t" style="left:1642px;width:1000px;text-align:center;top:934.3px;font-size:11.5px;color:#3a3a3a;text-shadow:0 0 2px #fff,0 0 2px #fff">Mons</div>
<div class="t" style="left:1974px;width:1000px;text-align:center;top:949.3px;font-size:11.5px;color:#3a3a3a;text-shadow:0 0 2px #fff,0 0 2px #fff">Koblenz</div>
<div class="t" style="left:1536px;width:1000px;text-align:center;top:958.3px;font-size:11.5px;color:#3a3a3a;text-shadow:0 0 2px #fff,0 0 2px #fff">Arras</div>
<div class="t" style="left:1604px;width:1000px;text-align:center;top:964.3px;font-size:11.5px;color:#3a3a3a;text-shadow:0 0 2px #fff,0 0 2px #fff">Valenciennes</div>
<div class="t" style="left:1673px;width:1000px;text-align:center;top:968.3px;font-size:11.5px;color:#3a3a3a;text-shadow:0 0 2px #fff,0 0 2px #fff">Maubeuge</div>
<div class="t" style="left:1601px;width:1000px;text-align:center;top:982.3px;font-size:11.5px;color:#3a3a3a;text-shadow:0 0 2px #fff,0 0 2px #fff">Cambrai</div>
<div class="t" style="left:1497px;width:1000px;text-align:center;top:1015.3px;font-size:11.5px;color:#3a3a3a;text-shadow:0 0 2px #fff,0 0 2px #fff">miens</div>
<div class="t" style="left:1902px;width:1000px;text-align:center;top:1041.3px;font-size:11.5px;color:#3a3a3a;text-shadow:0 0 2px #fff,0 0 2px #fff">Trier</div>
<div class="t" style="left:1582px;width:1000px;text-align:center;top:1038.3px;font-size:11.5px;color:#3a3a3a;text-shadow:0 0 2px #fff,0 0 2px #fff">Saint-Quentin</div>
<div class="t" style="left:1990px;width:1000px;text-align:center;top:1093.3px;font-size:11.5px;color:#3a3a3a;text-shadow:0 0 2px #fff,0 0 2px #fff">Kaiserslautern</div>
<div class="t" style="left:1650px;width:1000px;text-align:center;top:1118.3px;font-size:11.5px;color:#3a3a3a;text-shadow:0 0 2px #fff,0 0 2px #fff">Reims</div>
<div class="t" style="left:1919px;width:1000px;text-align:center;top:1123.3px;font-size:11.5px;color:#3a3a3a;text-shadow:0 0 2px #fff,0 0 2px #fff">Saarbrücken</div>
<div class="t" style="left:1845px;width:1000px;text-align:center;top:1138.3px;font-size:11.5px;color:#3a3a3a;text-shadow:0 0 2px #fff,0 0 2px #fff">Metz</div>
<div class="t" style="left:1845px;width:1000px;text-align:center;top:1197.3px;font-size:11.5px;color:#3a3a3a;text-shadow:0 0 2px #fff,0 0 2px #fff">Nancy</div>
<div class="t" style="left:1997px;width:1000px;text-align:center;top:1293.3px;font-size:11.5px;color:#3a3a3a;text-shadow:0 0 2px #fff,0 0 2px #fff">Freiburg</div>
<div class="t" style="left:1997px;width:1000px;text-align:center;top:1305.3px;font-size:11.5px;color:#3a3a3a;text-shadow:0 0 2px #fff,0 0 2px #fff">im Breisgau</div>
<div class="t" style="left:1924px;width:1000px;text-align:center;top:1319.3px;font-size:11.5px;color:#3a3a3a;text-shadow:0 0 2px #fff,0 0 2px #fff">Mulhouse</div>
<div class="t" style="left:1728px;width:1000px;text-align:center;top:649.1px;font-size:14px;color:#3a3a3a;text-shadow:0 0 2px #fff,0 0 2px #fff">Amsterdam</div>
<div class="t" style="left:1749px;width:1000px;text-align:center;top:712.1px;font-size:14px;color:#3a3a3a;text-shadow:0 0 2px #fff,0 0 2px #fff">Utrecht</div>
<div class="t" style="left:1900px;width:1000px;text-align:center;top:796.1px;font-size:14px;color:#3a3a3a;text-shadow:0 0 2px #fff,0 0 2px #fff">Essen</div>
<div class="t" style="left:1900px;width:1000px;text-align:center;top:820.1px;font-size:14px;color:#3a3a3a;text-shadow:0 0 2px #fff,0 0 2px #fff">Düsseldorf</div>
<div class="t" style="left:1663px;width:1000px;text-align:center;top:840.1px;font-size:14px;color:#3a3a3a;text-shadow:0 0 2px #fff,0 0 2px #fff">Antw</div>
<div class="t" style="left:1660px;width:1000px;text-align:center;top:858.1px;font-size:14px;color:#3a3a3a;text-shadow:0 0 2px #fff,0 0 2px #fff">Bru</div>
<div class="t" style="left:1916px;width:1000px;text-align:center;top:862.1px;font-size:14px;color:#3a3a3a;text-shadow:0 0 2px #fff,0 0 2px #fff">Köln</div>
<div class="t" style="left:1562px;width:1000px;text-align:center;top:905.1px;font-size:14px;color:#3a3a3a;text-shadow:0 0 2px #fff,0 0 2px #fff">Lille</div>
<div class="t" style="left:1841px;width:1000px;text-align:center;top:1072.1px;font-size:14px;color:#3a3a3a;text-shadow:0 0 2px #fff,0 0 2px #fff">Luxembourg</div>
<div class="t" style="left:1497px;width:1000px;text-align:center;top:1155.1px;font-size:14px;color:#3a3a3a;text-shadow:0 0 2px #fff,0 0 2px #fff">Paris</div>
<div class="t" style="left:1988px;width:1000px;text-align:center;top:1194.1px;font-size:14px;color:#3a3a3a;text-shadow:0 0 2px #fff,0 0 2px #fff">Strasbourg</div>
<div class="t" style="left:1787px;width:1000px;text-align:center;top:676.6px;font-size:17px;color:#6a5a86;text-shadow:0 0 2px #fff,0 0 2px #fff">Nederland</div>
<div class="t" style="left:1724px;width:1000px;text-align:center;top:922.1px;font-size:14px;color:#6a5a86;text-shadow:0 0 2px #fff,0 0 2px #fff">België / Belgique /</div>
<div class="t" style="left:1724px;width:1000px;text-align:center;top:939.1px;font-size:14px;color:#6a5a86;text-shadow:0 0 2px #fff,0 0 2px #fff">Belgien</div>
<div class="t" style="left:1837px;width:1000px;text-align:center;top:1031.3px;font-size:15px;color:#6a5a86;text-shadow:0 0 2px #fff,0 0 2px #fff">Lëtzebuerg</div>
<div class="t" style="left:2250px;top:1327px;font-size:13.8px;color:#2a7ad0;text-decoration:underline">© OpenStreetMap contributors, CC-BY-SA</div>
<div class="a" style="left:1965px;top:529px;width:77px;height:79px;background:#3a3d40;"></div>
<div class="a" style="left:1971px;top:534px;width:26px;height:17px;background:#b4b4b4;"></div>
<div class="a" style="left:1979px;top:538px;width:9px;height:9px;border-radius:50%;background:#108a20"></div>
<div class="a" style="left:2012px;top:534px;width:26px;height:17px;background:#b4b4b4;"></div>
<div class="a" style="left:2030px;top:535px;width:8px;height:8px;border-radius:50%;background:#90ee90;border:1px solid #4a4"></div>
<svg class="a" style="left:1968px;top:558px" width="72" height="48" viewBox="0 0 72 48"><path d="M4 11 H15 M9.5 5.5 V16.5 M4 36 H15" stroke="#9a9a9a" stroke-width="1.2"/><path d="M48 4 L68 24 L48 44 L28 24 Z" stroke="#9a9a9a" stroke-width="1.3" fill="none"/><path d="M44 14 H52 L48 10 Z M44 34 H52 L48 38 Z M38 20 V28 L34 24 Z M58 20 V28 L62 24 Z" fill="#9a9a9a"/></svg>
<div class="a" style="left:1964px;top:608px;width:20px;height:737px;background:linear-gradient(90deg,#a8a8a8,#bcbcbc);"></div>
<div class="t" style="left:1966px;top:619px;font-size:15px;color:#111;transform:rotate(90deg) translateY(-14px);transform-origin:0 0">Dim</div>
<div class="a" style="left:1973px;top:662px;width:2px;height:105px;background:#d8d8d8;"></div>
<div class="a" style="left:1967px;top:649px;width:14px;height:14px;border-radius:50%;background:radial-gradient(circle at 45% 35%,#f4f4f4,#9a9a9a 70%,#666);border:1px solid #555"></div>
<div class="a" style="left:2530px;top:528px;width:32px;height:817px;background:#b4b4b4;"></div>
<div class="a" style="left:2530px;top:528px;width:32px;height:100px;background:#cfd0d4;"></div>
<div class="a" style="left:2533px;top:534px;width:21px;height:94px;background:#1b5a8a;"></div>
<div class="t" style="left:2553px;top:537px;font-size:16.5px;color:#f0f4f8;transform:rotate(90deg);transform-origin:0 0">ADS-B Filter</div>
<div class="a" style="left:2536px;top:622px;width:26px;height:1.5px;background:#111;"></div>
<div class="t" style="left:2544px;top:630.1px;font-size:14px;color:#111;">ft</div>
<div class="a" style="left:2555px;top:648px;width:6px;height:697px;background:linear-gradient(#9a00e6,#d000a0 12%,#e01030 25%,#e83a10 45%,#f08a10 60%,#e89010 75%,#a0a010 88%,#2a8a10);"></div>
<div class="t" style="right:11px;top:652.9px;font-size:15.5px;color:#111;">40K</div>
<div class="t" style="right:11px;top:812.9px;font-size:15.5px;color:#111;">30K</div>
<div class="t" style="right:11px;top:1026.9px;font-size:15.5px;color:#111;">20K</div>
<div class="t" style="right:11px;top:1155.9px;font-size:15.5px;color:#111;">10K</div>
<div class="t" style="right:11px;top:1220.9px;font-size:15.5px;color:#111;">8K</div>
<div class="a" style="left:2561px;top:528px;width:1.5px;height:840px;background:#111;"></div>
<div class="a" style="left:1964px;top:1345px;width:598px;height:22px;background:#bcbcbc;"></div>
<div class="a" style="left:1984px;top:1347px;width:546px;height:1.6px;background:#ececec;"></div>
<div class="a" style="left:1963px;top:1367px;width:599px;height:1.5px;background:#222;"></div>
<div class="a" style="left:1963px;top:528px;width:1.5px;height:840px;background:#222;"></div>
<div class="a" style="left:1964px;top:1348px;width:597px;height:19px;overflow:hidden"><div class="t" style="left:3px;top:4.5px;font-size:15.7px;color:#111;width:211px;overflow:hidden">Latitude 48° 56' 21.8" (48.9394</div><div class="t" style="left:229px;top:4.5px;font-size:15.7px;color:#111">Longitude 2° 15' 51.7" (2.2644)</div><div class="t" style="left:543px;top:3px;font-size:15.5px;color:#111">COM3</div></div>
</body></html>
